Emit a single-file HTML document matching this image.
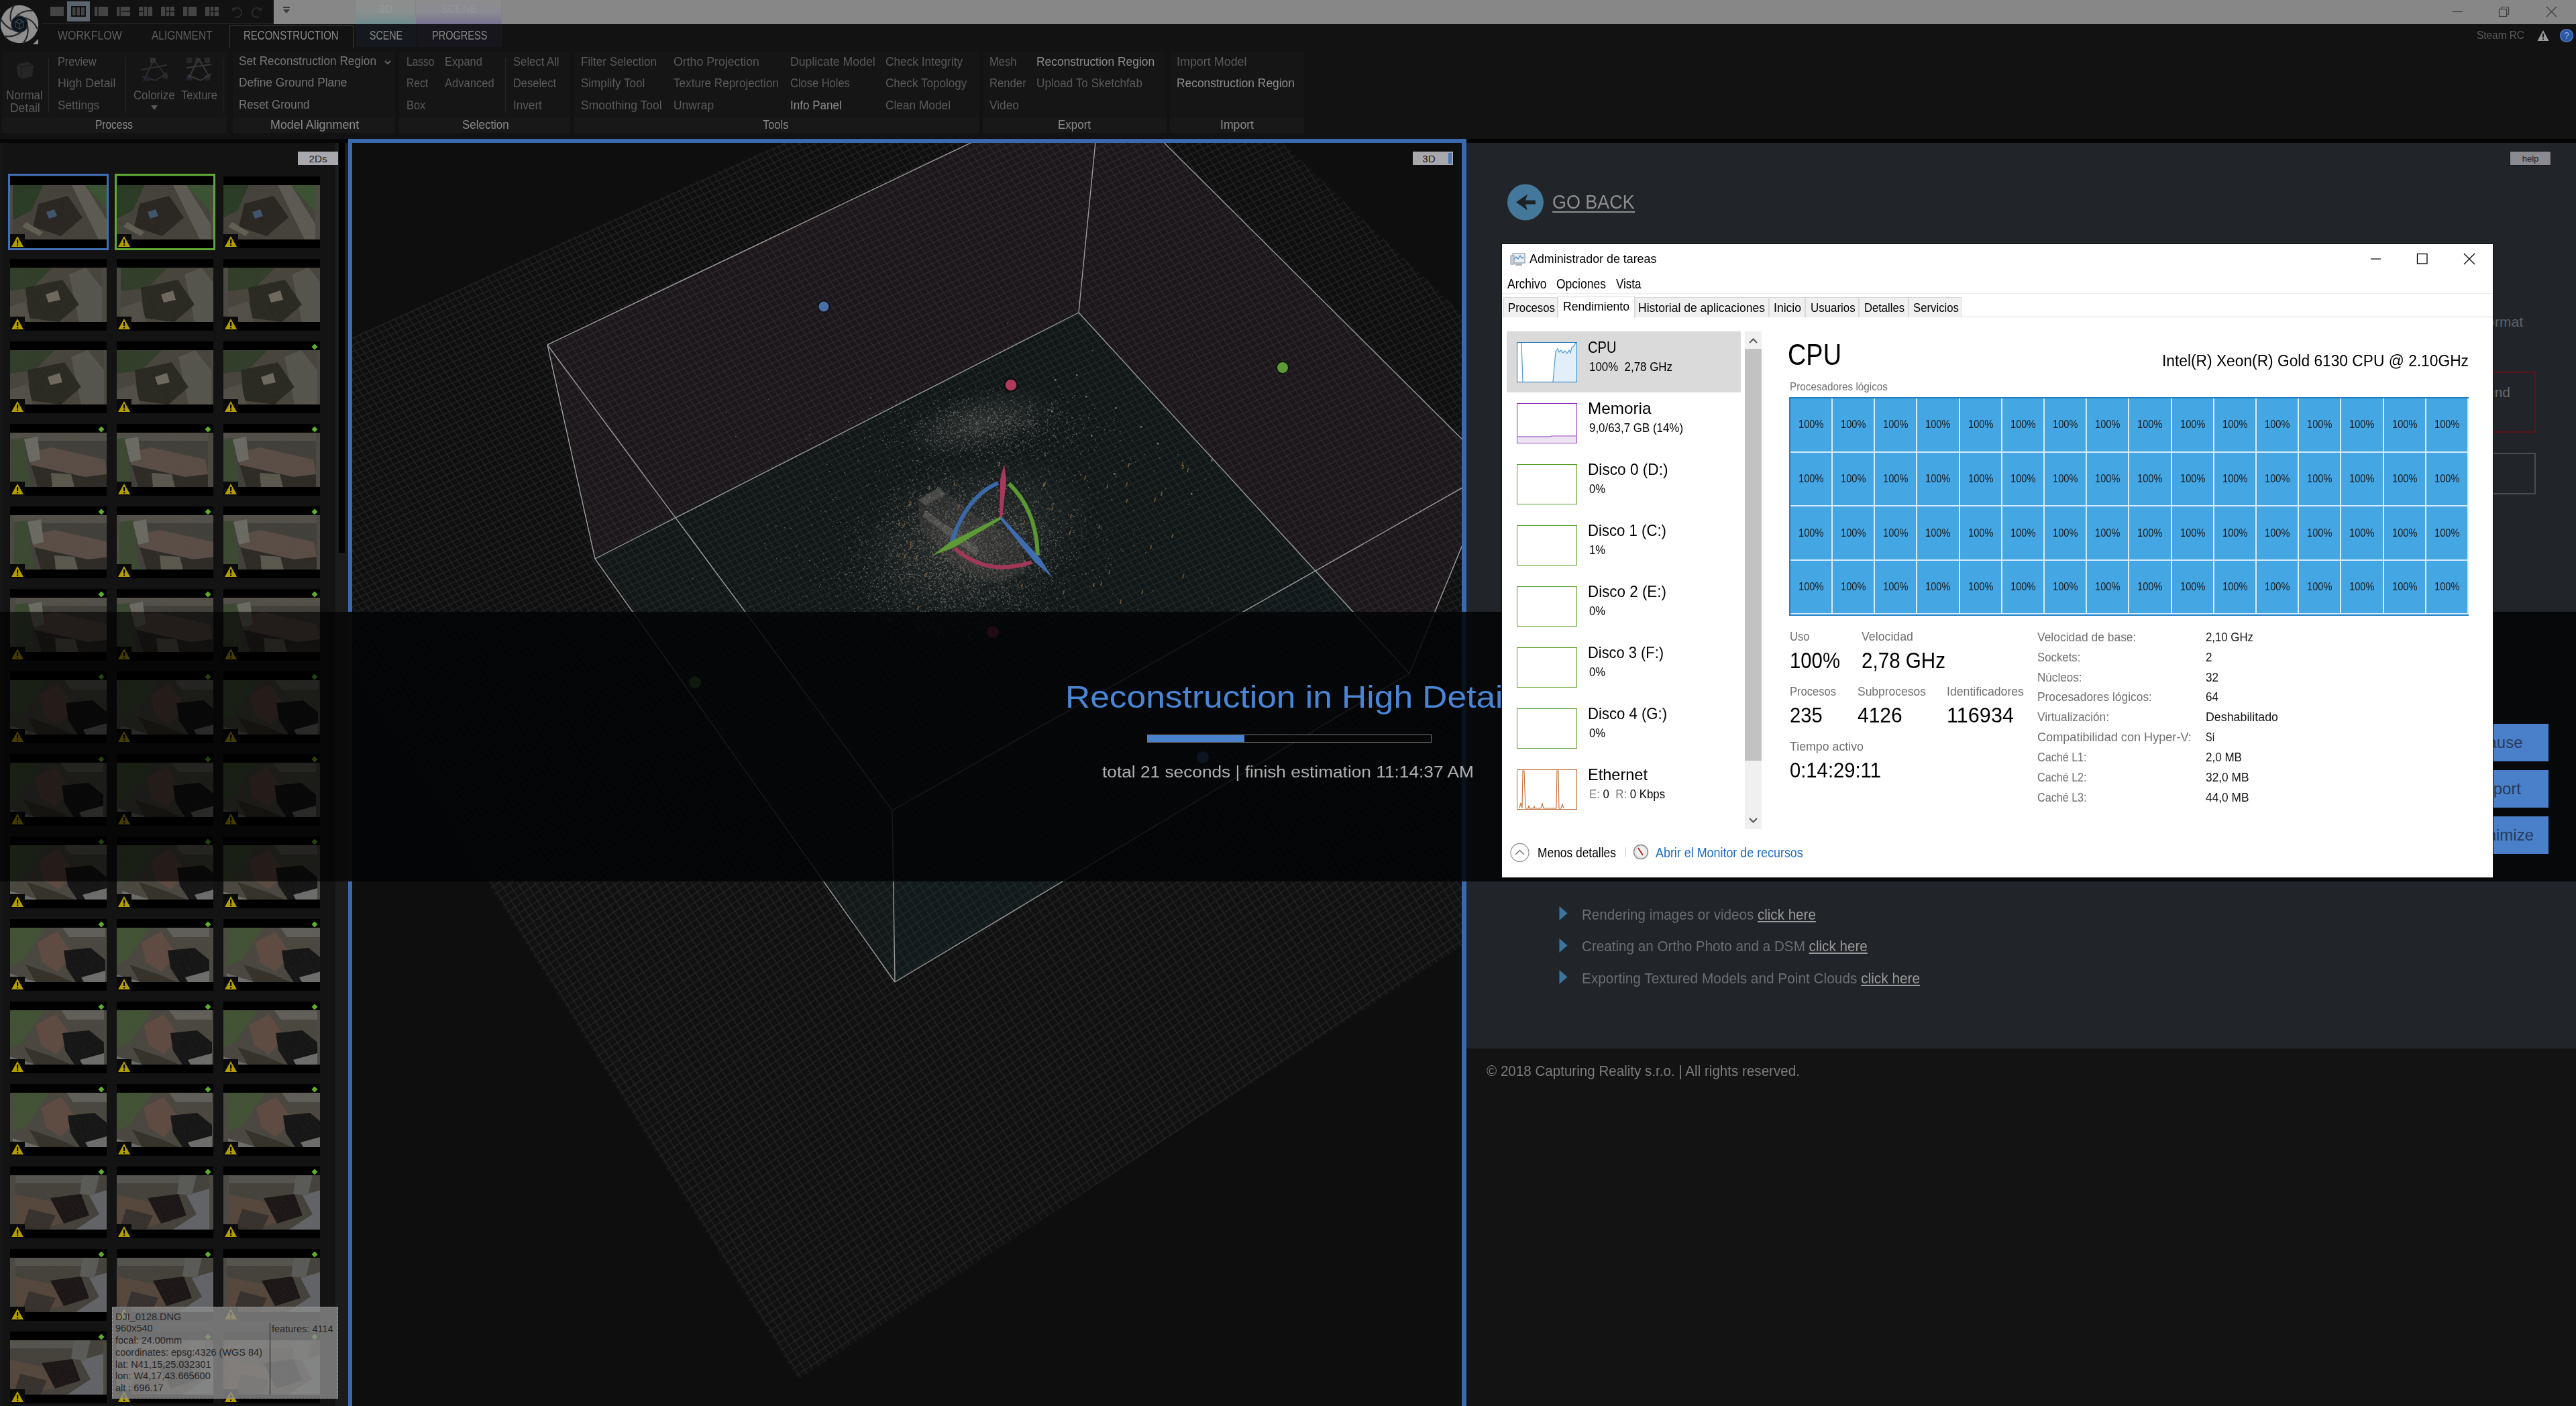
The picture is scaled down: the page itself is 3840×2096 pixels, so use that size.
<!DOCTYPE html><html><head><meta charset="utf-8"><style>
*{margin:0;padding:0;box-sizing:border-box}
html,body{width:3840px;height:2096px;overflow:hidden;background:#121212;font-family:'Liberation Sans',sans-serif}
.t{position:absolute;line-height:1;white-space:nowrap}
.r{position:absolute}
svg{position:absolute}
</style></head><body>
<div class="r" style="left:0px;top:0px;width:408px;height:36px;background:#121212;"></div>
<div class="r" style="left:408px;top:0px;width:3432px;height:36px;background:#878787;"></div>
<div class="r" style="left:530px;top:0px;width:90px;height:36px;background:linear-gradient(#8d8d8d 0%,#8a8f8f 50%,#6f8c8c 100%);border-left:1px solid #7d8a8a;border-right:1px solid #7d8a8a"></div>
<div class="r" style="left:620px;top:0px;width:128px;height:36px;background:linear-gradient(#8d8d8d 0%,#8a8a92 50%,#77738f 100%);border-right:1px solid #80808a"></div>
<div class="t" style="left:-425.0px;width:2000px;text-align:center;top:6.4px;font-size:15.94px;color:#939898;font-weight:bold">3D</div>
<div class="t" style="left:-316.0px;width:2000px;text-align:center;top:6.4px;font-size:15.94px;color:#91919a;font-weight:bold">SCENE</div>
<svg style="left:420px;left:420px;top:8px" width="16" height="16"><rect x="2" y="2" width="10" height="2" fill="#3a3a3a"/><path d="M2 6 L12 6 L7 12 Z" fill="#3a3a3a"/></svg>
<svg style="left:3640px;top:0" width="200" height="36"><line x1="16" y1="17.5" x2="31" y2="17.5" stroke="#3c3c3c" stroke-width="1.2"/><rect x="85.5" y="13.5" width="11" height="11" fill="none" stroke="#3c3c3c" stroke-width="1.2"/><path d="M88.5 13.5 V10.5 H99.5 V21.5 H96.5" fill="none" stroke="#3c3c3c" stroke-width="1.2"/><path d="M156 10 L171 25 M171 10 L156 25" stroke="#3c3c3c" stroke-width="1.2"/></svg>
<svg style="left:0;top:0" width="62" height="70" viewBox="0 0 62 70">
<circle cx="29" cy="36" r="28.2" fill="#8f8f8f"/>
<g fill="none" stroke="#2c2c2c" stroke-width="2.3" stroke-linecap="round">
<path d="M21 8 Q14 18 16 31"/><path d="M48 16 Q32 15 23 26"/><path d="M55 42 Q50 30 38 27"/>
<path d="M35 64 Q44 52 41 39"/><path d="M7 54 Q20 56 31 48"/><path d="M2 30 Q10 42 21 45"/>
</g>
<circle cx="29" cy="36" r="12" fill="#0e151b" stroke="#1e2a33" stroke-width="1.5"/>
<path d="M23 32 L29 29 L35 32 L35 40 L29 43 L23 40 Z M23 32 L29 35 L35 32 M29 35 L29 43" fill="none" stroke="#3a4f5c" stroke-width="1.2"/>
<path d="M49 66 L57 66 L57 58 Z" fill="#8f8f8f"/>
</svg>
<div class="r" style="left:100px;top:2px;width:34px;height:30px;background:#5c646e;"></div>
<svg style="left:74px;top:9px" width="22" height="16"><rect x="1" y="1" width="20" height="14" fill="#444444"/></svg>
<svg style="left:106px;top:9px" width="22" height="16"><rect x="1" y="1" width="20" height="14" fill="#444" stroke="#0a0a0a" stroke-width="1.8"/><line x1="7.5" y1="1" x2="7.5" y2="15" stroke="#0a0a0a" stroke-width="1.8"/><line x1="14" y1="1" x2="14" y2="15" stroke="#0a0a0a" stroke-width="1.8"/></svg>
<svg style="left:140px;top:9px" width="22" height="16"><rect x="1" y="1" width="20" height="14" fill="#444444"/><line x1="6" y1="1" x2="6" y2="15" stroke="#121212" stroke-width="1.5"/></svg>
<svg style="left:173px;top:9px" width="22" height="16"><rect x="1" y="1" width="20" height="14" fill="#444444"/><line x1="6" y1="1" x2="6" y2="15" stroke="#121212" stroke-width="1.5"/><line x1="8" y1="8" x2="21" y2="8" stroke="#121212" stroke-width="1.5"/></svg>
<svg style="left:206px;top:9px" width="22" height="16"><rect x="1" y="1" width="20" height="14" fill="#444444"/><line x1="8" y1="1" x2="8" y2="15" stroke="#121212" stroke-width="1.5"/><line x1="14" y1="1" x2="14" y2="15" stroke="#121212" stroke-width="1.5"/><line x1="1" y1="8" x2="8" y2="8" stroke="#121212" stroke-width="1.5"/></svg>
<svg style="left:239px;top:9px" width="22" height="16"><rect x="1" y="1" width="20" height="14" fill="#444444"/><line x1="8" y1="1" x2="8" y2="15" stroke="#121212" stroke-width="1.5"/><line x1="8" y1="8" x2="21" y2="8" stroke="#121212" stroke-width="1.5"/><line x1="14" y1="1" x2="14" y2="15" stroke="#121212" stroke-width="1.5"/></svg>
<svg style="left:272px;top:9px" width="22" height="16"><rect x="1" y="1" width="20" height="14" fill="#444444"/><line x1="8" y1="1" x2="8" y2="15" stroke="#121212" stroke-width="1.5"/></svg>
<svg style="left:305px;top:9px" width="22" height="16"><rect x="1" y="1" width="20" height="14" fill="#444444"/><line x1="8" y1="1" x2="8" y2="15" stroke="#121212" stroke-width="1.5"/><line x1="8" y1="8" x2="21" y2="8" stroke="#121212" stroke-width="1.5"/><line x1="14" y1="1" x2="14" y2="15" stroke="#121212" stroke-width="1.5"/></svg>
<svg style="left:342px;top:8px" width="60" height="20"><path d="M6 6 A7 7 0 1 1 8 17" fill="none" stroke="#2a2a2a" stroke-width="2"/><path d="M3 3 L5 9 L10 6Z" fill="#2a2a2a"/><path d="M46 6 A7 7 0 1 0 44 17" fill="none" stroke="#2a2a2a" stroke-width="2"/><path d="M49 3 L47 9 L42 6Z" fill="#2a2a2a"/></svg>
<div class="r" style="left:408px;top:36px;width:3432px;height:36px;background:#121212;"></div>
<div class="r" style="left:62px;top:35px;width:346px;height:1px;background:#2a2a2a;"></div>
<div class="t" style="left:86.0px;top:44.8px;font-size:17.83px;color:#5e5e5e;transform:scaleX(0.8958);transform-origin:0 0;">WORKFLOW</div>
<div class="t" style="left:226.0px;top:44.8px;font-size:17.83px;color:#5e5e5e;transform:scaleX(0.8712);transform-origin:0 0;">ALIGNMENT</div>
<div class="r" style="left:342px;top:38px;width:185px;height:34px;background:#121212;border:1px solid #3a3a3a;border-bottom:none"></div>
<div class="t" style="left:363.4px;top:44.8px;font-size:17.83px;color:#8a8a8a;transform:scaleX(0.8411);transform-origin:0 0;">RECONSTRUCTION</div>
<div class="r" style="left:530px;top:36px;width:90px;height:34px;background:#15181c;"></div>
<div class="r" style="left:621px;top:36px;width:127px;height:34px;background:#17161d;"></div>
<div class="t" style="left:551.0px;top:44.8px;font-size:17.83px;color:#8a8a8a;transform:scaleX(0.7978);transform-origin:0 0;">SCENE</div>
<div class="t" style="left:643.7px;top:44.8px;font-size:17.83px;color:#8a8a8a;transform:scaleX(0.8155);transform-origin:0 0;">PROGRESS</div>
<div class="t" style="left:3692.0px;top:43.7px;font-size:17.39px;color:#5a5a5a;transform:scaleX(0.8851);transform-origin:0 0;">Steam RC</div>
<svg style="left:3782px;top:44px" width="20" height="18"><path d="M9 1 L17.5 17 L0.5 17 Z" fill="#9a9a9a"/><rect x="8" y="6" width="2" height="6" fill="#121212"/><rect x="8" y="13.5" width="2" height="2" fill="#121212"/></svg>
<svg style="left:3815px;top:42px" width="22" height="22"><circle cx="11" cy="11" r="9.5" fill="#2a58a6" stroke="#5a82c0" stroke-width="1.2"/><text x="11" y="16" font-size="14" font-family="Liberation Sans" fill="#8fb0e0" text-anchor="middle">?</text></svg>
<div class="r" style="left:3px;top:77px;width:335px;height:121px;background:#151515;"></div>
<div class="r" style="left:3px;top:175px;width:335px;height:23px;background:#181818;"></div>
<div class="t" style="left:142.1px;top:177.4px;font-size:18.41px;color:#8a8a8a;transform:scaleX(0.8407);transform-origin:0 0;">Process</div>
<div class="r" style="left:347px;top:77px;width:242px;height:121px;background:#151515;"></div>
<div class="r" style="left:347px;top:175px;width:242px;height:23px;background:#181818;"></div>
<div class="t" style="left:402.9px;top:177.4px;font-size:18.41px;color:#8a8a8a;transform:scaleX(0.9722);transform-origin:0 0;">Model Alignment</div>
<div class="r" style="left:595px;top:77px;width:255px;height:121px;background:#151515;"></div>
<div class="r" style="left:595px;top:175px;width:255px;height:23px;background:#181818;"></div>
<div class="t" style="left:689.1px;top:177.4px;font-size:18.41px;color:#8a8a8a;transform:scaleX(0.9205);transform-origin:0 0;">Selection</div>
<div class="r" style="left:855px;top:77px;width:605px;height:121px;background:#151515;"></div>
<div class="r" style="left:855px;top:175px;width:605px;height:23px;background:#181818;"></div>
<div class="t" style="left:1136.8px;top:177.4px;font-size:18.41px;color:#8a8a8a;transform:scaleX(0.8937);transform-origin:0 0;">Tools</div>
<div class="r" style="left:1465px;top:77px;width:274px;height:121px;background:#151515;"></div>
<div class="r" style="left:1465px;top:175px;width:274px;height:23px;background:#181818;"></div>
<div class="t" style="left:1576.5px;top:177.4px;font-size:18.41px;color:#8a8a8a;transform:scaleX(0.9211);transform-origin:0 0;">Export</div>
<div class="r" style="left:1744px;top:77px;width:200px;height:121px;background:#151515;"></div>
<div class="r" style="left:1744px;top:175px;width:200px;height:23px;background:#181818;"></div>
<div class="t" style="left:1819.0px;top:177.4px;font-size:18.41px;color:#8a8a8a;transform:scaleX(0.9585);transform-origin:0 0;">Import</div>
<div class="r" style="left:0px;top:198px;width:3840px;height:9px;background:#121212;"></div>
<div class="r" style="left:72px;top:86px;width:1px;height:82px;background:#262626;"></div>
<div class="r" style="left:187px;top:86px;width:1px;height:82px;background:#262626;"></div>
<div class="r" style="left:332px;top:86px;width:1px;height:82px;background:#262626;"></div>
<div class="r" style="left:753px;top:86px;width:1px;height:82px;background:#262626;"></div>
<div class="t" style="left:86.0px;top:82.6px;font-size:18.12px;color:#5a5a5a;transform:scaleX(0.8970);transform-origin:0 0;">Preview</div>
<div class="t" style="left:86.0px;top:114.6px;font-size:18.12px;color:#5a5a5a;transform:scaleX(0.9762);transform-origin:0 0;">High Detail</div>
<div class="t" style="left:86.0px;top:147.6px;font-size:18.12px;color:#5a5a5a;transform:scaleX(0.9502);transform-origin:0 0;">Settings</div>
<div class="t" style="left:9.3px;top:132.6px;font-size:18.12px;color:#5a5a5a;transform:scaleX(0.9386);transform-origin:0 0;">Normal</div>
<div class="t" style="left:14.9px;top:151.6px;font-size:18.12px;color:#5a5a5a;transform:scaleX(0.9651);transform-origin:0 0;">Detail</div>
<svg style="left:20px;top:88px" width="34" height="34"><path d="M5 8 L22 4 L30 10 L28 26 L12 30 L6 24 Z" fill="#262626"/><path d="M5 8 L12 12 L28 9 M12 12 L12 30" stroke="#1a1a1a" stroke-width="1.5" fill="none"/></svg>
<div class="t" style="left:198.7px;top:132.6px;font-size:18.12px;color:#5a5a5a;transform:scaleX(0.9255);transform-origin:0 0;">Colorize</div>
<div class="t" style="left:269.5px;top:132.6px;font-size:18.12px;color:#5a5a5a;transform:scaleX(0.9090);transform-origin:0 0;">Texture</div>
<svg style="left:206px;top:84px" width="50" height="42"><path d="M23 5 L8 37 M23 5 L42 30 M4 20 L43 13 M6 30 L26 36 L43 24" stroke="#2e2e2e" stroke-width="2" fill="none"/><rect x="18" y="2" width="8" height="8" fill="#303030"/><rect x="37" y="26" width="7" height="7" fill="#2a2a2a"/><rect x="11" y="30" width="7" height="7" fill="#1e2230"/></svg>
<svg style="left:275px;top:84px" width="50" height="42"><rect x="3" y="2" width="8" height="8" fill="#262626"/><rect x="16" y="2" width="8" height="8" fill="#26262a"/><rect x="30" y="2" width="8" height="8" fill="#282a26"/><rect x="3" y="28" width="8" height="8" fill="#24202e"/><rect x="30" y="28" width="8" height="8" fill="#202430"/><path d="M21 3 L6 33 M21 3 L38 32 M3 17 L40 12 M5 28 L24 36 L40 26" stroke="#383838" stroke-width="2" fill="none"/></svg>
<svg style="left:224px;top:156px" width="12" height="10"><path d="M1 1 L11 1 L6 8 Z" fill="#5a5a5a"/></svg>
<div class="t" style="left:356.0px;top:82.4px;font-size:18.41px;color:#767676;transform:scaleX(0.9363);transform-origin:0 0;">Set Reconstruction Region</div>
<svg style="left:572px;top:88px" width="12" height="10"><path d="M2 3 L6 7 L10 3" stroke="#6a6a6a" stroke-width="1.8" fill="none"/></svg>
<div class="t" style="left:356.0px;top:114.4px;font-size:18.41px;color:#767676;transform:scaleX(0.9389);transform-origin:0 0;">Define Ground Plane</div>
<div class="t" style="left:356.0px;top:147.4px;font-size:18.41px;color:#767676;transform:scaleX(0.9207);transform-origin:0 0;">Reset Ground</div>
<div class="t" style="left:606.0px;top:82.6px;font-size:18.12px;color:#5a5a5a;transform:scaleX(0.8564);transform-origin:0 0;">Lasso</div>
<div class="t" style="left:663.0px;top:82.6px;font-size:18.12px;color:#5a5a5a;transform:scaleX(0.9114);transform-origin:0 0;">Expand</div>
<div class="t" style="left:606.0px;top:114.6px;font-size:18.12px;color:#5a5a5a;transform:scaleX(0.8591);transform-origin:0 0;">Rect</div>
<div class="t" style="left:663.0px;top:114.6px;font-size:18.12px;color:#5a5a5a;transform:scaleX(0.9159);transform-origin:0 0;">Advanced</div>
<div class="t" style="left:606.0px;top:147.6px;font-size:18.12px;color:#5a5a5a;transform:scaleX(0.9065);transform-origin:0 0;">Box</div>
<div class="t" style="left:765.0px;top:82.6px;font-size:18.12px;color:#5a5a5a;transform:scaleX(0.9206);transform-origin:0 0;">Select All</div>
<div class="t" style="left:765.0px;top:114.6px;font-size:18.12px;color:#5a5a5a;transform:scaleX(0.9080);transform-origin:0 0;">Deselect</div>
<div class="t" style="left:765.0px;top:147.6px;font-size:18.12px;color:#5a5a5a;transform:scaleX(0.9468);transform-origin:0 0;">Invert</div>
<div class="t" style="left:866.0px;top:82.6px;font-size:18.12px;color:#5a5a5a;transform:scaleX(0.9431);transform-origin:0 0;">Filter Selection</div>
<div class="t" style="left:866.0px;top:114.6px;font-size:18.12px;color:#5a5a5a;transform:scaleX(0.9393);transform-origin:0 0;">Simplify Tool</div>
<div class="t" style="left:866.0px;top:147.6px;font-size:18.12px;color:#5a5a5a;transform:scaleX(0.9699);transform-origin:0 0;">Smoothing Tool</div>
<div class="t" style="left:1004.0px;top:82.6px;font-size:18.12px;color:#5a5a5a;transform:scaleX(0.9778);transform-origin:0 0;">Ortho Projection</div>
<div class="t" style="left:1004.0px;top:114.6px;font-size:18.12px;color:#5a5a5a;transform:scaleX(0.9449);transform-origin:0 0;">Texture Reprojection</div>
<div class="t" style="left:1004.0px;top:147.6px;font-size:18.12px;color:#5a5a5a;transform:scaleX(0.9643);transform-origin:0 0;">Unwrap</div>
<div class="t" style="left:1178.0px;top:82.6px;font-size:18.12px;color:#5a5a5a;transform:scaleX(0.9761);transform-origin:0 0;">Duplicate Model</div>
<div class="t" style="left:1178.0px;top:114.6px;font-size:18.12px;color:#5a5a5a;transform:scaleX(0.9092);transform-origin:0 0;">Close Holes</div>
<div class="t" style="left:1178.0px;top:147.6px;font-size:18.12px;color:#8c8c8c;transform:scaleX(0.9426);transform-origin:0 0;">Info Panel</div>
<div class="t" style="left:1320.0px;top:82.6px;font-size:18.12px;color:#5a5a5a;transform:scaleX(0.9543);transform-origin:0 0;">Check Integrity</div>
<div class="t" style="left:1320.0px;top:114.6px;font-size:18.12px;color:#5a5a5a;transform:scaleX(0.9434);transform-origin:0 0;">Check Topology</div>
<div class="t" style="left:1320.0px;top:147.6px;font-size:18.12px;color:#5a5a5a;transform:scaleX(0.9537);transform-origin:0 0;">Clean Model</div>
<div class="t" style="left:1475.0px;top:82.6px;font-size:18.12px;color:#5a5a5a;transform:scaleX(0.9165);transform-origin:0 0;">Mesh</div>
<div class="t" style="left:1475.0px;top:114.6px;font-size:18.12px;color:#5a5a5a;transform:scaleX(0.9206);transform-origin:0 0;">Render</div>
<div class="t" style="left:1475.0px;top:147.6px;font-size:18.12px;color:#5a5a5a;transform:scaleX(0.9563);transform-origin:0 0;">Video</div>
<div class="t" style="left:1545.0px;top:82.6px;font-size:18.12px;color:#8c8c8c;transform:scaleX(0.9619);transform-origin:0 0;">Reconstruction Region</div>
<div class="t" style="left:1545.0px;top:114.6px;font-size:18.12px;color:#5a5a5a;transform:scaleX(0.9470);transform-origin:0 0;">Upload To Sketchfab</div>
<div class="t" style="left:1753.7px;top:82.6px;font-size:18.12px;color:#5a5a5a;transform:scaleX(0.9894);transform-origin:0 0;">Import Model</div>
<div class="t" style="left:1753.7px;top:114.6px;font-size:18.12px;color:#8c8c8c;transform:scaleX(0.9603);transform-origin:0 0;">Reconstruction Region</div>
<div class="r" style="left:0px;top:207px;width:3840px;height:6px;background:#060606;"></div>
<div class="r" style="left:0px;top:213px;width:519px;height:1883px;background:#131313;"></div>
<svg width="0" height="0" style="position:absolute"><defs><filter id="tn" x="0" y="0" width="1" height="1"><feTurbulence type="fractalNoise" baseFrequency="0.45" numOctaves="2" seed="3" result="n"/><feColorMatrix in="n" type="matrix" values="0 0 0 0 0.5  0 0 0 0 0.5  0 0 0 0 0.5  0 0 0 0.55 0" result="na"/><feComposite in="na" in2="SourceGraphic" operator="in" result="nb"/><feBlend in="SourceGraphic" in2="nb" mode="overlay"/></filter></defs></svg>
<div class="r" style="left:0px;top:213px;width:5px;height:1883px;background:#161616;"></div>
<div class="r" style="left:500px;top:213px;width:19px;height:1883px;background:#1c1c1c;"></div>
<div class="r" style="left:505px;top:213px;width:9px;height:611px;background:#020202;"></div>
<div class="r" style="left:444px;top:226px;width:60px;height:20px;background:#a9a9ad;"></div>
<div class="t" style="left:-526.0px;width:2000px;text-align:center;top:229.1px;font-size:15.22px;color:#1a1a1a;">2Ds</div>
<div class="r" style="left:15px;top:263px;width:144px;height:107px;background:#000;"></div>
<svg style="left:15px;top:276px" width="144" height="81" viewBox="0 0 144 81"><g transform="translate(4 0)" filter="url(#tn)"><rect x="-10" width="164" height="81" fill="#4c4a42"/><rect width="144" height="81" fill="#45433b"/><path d="M0 0 H45 L28 38 L0 52 Z" fill="#2c3a26"/><path d="M88 0 H108 L144 58 V81 H128 Z" fill="#5c5a52"/><path d="M108 0 H144 V40 Z" fill="#3a5230"/><path d="M38 28 L82 16 L104 48 L72 76 L30 62 Z" fill="#25221e" opacity="0.85"/><path d="M50 40 L62 36 L66 46 L54 50 Z" fill="#4a6a8a" opacity="0.7"/><path d="M20 55 L45 70 L40 76 L14 62 Z" fill="#625e55"/></g></svg>
<svg style="left:15px;top:349px" width="22" height="21"><rect width="22" height="21" fill="#0a0a0a"/><path d="M11 3 L20 19 L2 19 Z" fill="#b39d00"/><rect x="10" y="8" width="2.2" height="6" fill="#000"/><rect x="10" y="15.5" width="2.2" height="2" fill="#000"/></svg>
<div class="r" style="left:174px;top:263px;width:144px;height:107px;background:#000;"></div>
<svg style="left:174px;top:276px" width="144" height="81" viewBox="0 0 144 81"><g transform="translate(-4 0)" filter="url(#tn)"><rect x="-10" width="164" height="81" fill="#4c4a42"/><rect width="144" height="81" fill="#45433b"/><path d="M0 0 H45 L28 38 L0 52 Z" fill="#2c3a26"/><path d="M88 0 H108 L144 58 V81 H128 Z" fill="#5c5a52"/><path d="M108 0 H144 V40 Z" fill="#3a5230"/><path d="M38 28 L82 16 L104 48 L72 76 L30 62 Z" fill="#25221e" opacity="0.85"/><path d="M50 40 L62 36 L66 46 L54 50 Z" fill="#4a6a8a" opacity="0.7"/><path d="M20 55 L45 70 L40 76 L14 62 Z" fill="#625e55"/></g></svg>
<svg style="left:174px;top:349px" width="22" height="21"><rect width="22" height="21" fill="#0a0a0a"/><path d="M11 3 L20 19 L2 19 Z" fill="#b39d00"/><rect x="10" y="8" width="2.2" height="6" fill="#000"/><rect x="10" y="15.5" width="2.2" height="2" fill="#000"/></svg>
<div class="r" style="left:333px;top:263px;width:144px;height:107px;background:#000;"></div>
<svg style="left:333px;top:276px" width="144" height="81" viewBox="0 0 144 81"><g transform="translate(-7 0)" filter="url(#tn)"><rect x="-10" width="164" height="81" fill="#4c4a42"/><rect width="144" height="81" fill="#45433b"/><path d="M0 0 H45 L28 38 L0 52 Z" fill="#2c3a26"/><path d="M88 0 H108 L144 58 V81 H128 Z" fill="#5c5a52"/><path d="M108 0 H144 V40 Z" fill="#3a5230"/><path d="M38 28 L82 16 L104 48 L72 76 L30 62 Z" fill="#25221e" opacity="0.85"/><path d="M50 40 L62 36 L66 46 L54 50 Z" fill="#4a6a8a" opacity="0.7"/><path d="M20 55 L45 70 L40 76 L14 62 Z" fill="#625e55"/></g></svg>
<svg style="left:333px;top:349px" width="22" height="21"><rect width="22" height="21" fill="#0a0a0a"/><path d="M11 3 L20 19 L2 19 Z" fill="#b39d00"/><rect x="10" y="8" width="2.2" height="6" fill="#000"/><rect x="10" y="15.5" width="2.2" height="2" fill="#000"/></svg>
<div class="r" style="left:15px;top:386px;width:144px;height:107px;background:#000;"></div>
<svg style="left:15px;top:399px" width="144" height="81" viewBox="0 0 144 81"><g transform="translate(-7 0)" filter="url(#tn)"><rect x="-10" width="164" height="81" fill="#4c4a42"/><rect width="144" height="81" fill="#46443c"/><path d="M0 0 H70 L40 30 L0 35 Z" fill="#303d2a"/><path d="M95 10 L120 0 L144 30 V81 H110 Z" fill="#57554d"/><path d="M30 30 L85 18 L110 55 L80 81 L35 75 Z" fill="#28241f" opacity="0.85"/><path d="M60 40 L78 34 L82 48 L64 52 Z" fill="#6e685e"/><path d="M0 60 L30 50 L38 81 H0 Z" fill="#524f46"/></g></svg>
<svg style="left:15px;top:472px" width="22" height="21"><rect width="22" height="21" fill="#0a0a0a"/><path d="M11 3 L20 19 L2 19 Z" fill="#b39d00"/><rect x="10" y="8" width="2.2" height="6" fill="#000"/><rect x="10" y="15.5" width="2.2" height="2" fill="#000"/></svg>
<div class="r" style="left:174px;top:386px;width:144px;height:107px;background:#000;"></div>
<svg style="left:174px;top:399px" width="144" height="81" viewBox="0 0 144 81"><g transform="translate(6 0)" filter="url(#tn)"><rect x="-10" width="164" height="81" fill="#4c4a42"/><rect width="144" height="81" fill="#46443c"/><path d="M0 0 H70 L40 30 L0 35 Z" fill="#303d2a"/><path d="M95 10 L120 0 L144 30 V81 H110 Z" fill="#57554d"/><path d="M30 30 L85 18 L110 55 L80 81 L35 75 Z" fill="#28241f" opacity="0.85"/><path d="M60 40 L78 34 L82 48 L64 52 Z" fill="#6e685e"/><path d="M0 60 L30 50 L38 81 H0 Z" fill="#524f46"/></g></svg>
<svg style="left:174px;top:472px" width="22" height="21"><rect width="22" height="21" fill="#0a0a0a"/><path d="M11 3 L20 19 L2 19 Z" fill="#b39d00"/><rect x="10" y="8" width="2.2" height="6" fill="#000"/><rect x="10" y="15.5" width="2.2" height="2" fill="#000"/></svg>
<div class="r" style="left:333px;top:386px;width:144px;height:107px;background:#000;"></div>
<svg style="left:333px;top:399px" width="144" height="81" viewBox="0 0 144 81"><g transform="translate(7 0)" filter="url(#tn)"><rect x="-10" width="164" height="81" fill="#4c4a42"/><rect width="144" height="81" fill="#46443c"/><path d="M0 0 H70 L40 30 L0 35 Z" fill="#303d2a"/><path d="M95 10 L120 0 L144 30 V81 H110 Z" fill="#57554d"/><path d="M30 30 L85 18 L110 55 L80 81 L35 75 Z" fill="#28241f" opacity="0.85"/><path d="M60 40 L78 34 L82 48 L64 52 Z" fill="#6e685e"/><path d="M0 60 L30 50 L38 81 H0 Z" fill="#524f46"/></g></svg>
<svg style="left:333px;top:472px" width="22" height="21"><rect width="22" height="21" fill="#0a0a0a"/><path d="M11 3 L20 19 L2 19 Z" fill="#b39d00"/><rect x="10" y="8" width="2.2" height="6" fill="#000"/><rect x="10" y="15.5" width="2.2" height="2" fill="#000"/></svg>
<div class="r" style="left:15px;top:509px;width:144px;height:107px;background:#000;"></div>
<svg style="left:15px;top:522px" width="144" height="81" viewBox="0 0 144 81"><g transform="translate(-4 0)" filter="url(#tn)"><rect x="-10" width="164" height="81" fill="#4c4a42"/><rect width="144" height="81" fill="#46443c"/><path d="M0 0 H70 L40 30 L0 35 Z" fill="#303d2a"/><path d="M95 10 L120 0 L144 30 V81 H110 Z" fill="#57554d"/><path d="M30 30 L85 18 L110 55 L80 81 L35 75 Z" fill="#28241f" opacity="0.85"/><path d="M60 40 L78 34 L82 48 L64 52 Z" fill="#6e685e"/><path d="M0 60 L30 50 L38 81 H0 Z" fill="#524f46"/></g></svg>
<svg style="left:15px;top:595px" width="22" height="21"><rect width="22" height="21" fill="#0a0a0a"/><path d="M11 3 L20 19 L2 19 Z" fill="#b39d00"/><rect x="10" y="8" width="2.2" height="6" fill="#000"/><rect x="10" y="15.5" width="2.2" height="2" fill="#000"/></svg>
<div class="r" style="left:174px;top:509px;width:144px;height:107px;background:#000;"></div>
<svg style="left:174px;top:522px" width="144" height="81" viewBox="0 0 144 81"><g transform="translate(-3 0)" filter="url(#tn)"><rect x="-10" width="164" height="81" fill="#4c4a42"/><rect width="144" height="81" fill="#46443c"/><path d="M0 0 H70 L40 30 L0 35 Z" fill="#303d2a"/><path d="M95 10 L120 0 L144 30 V81 H110 Z" fill="#57554d"/><path d="M30 30 L85 18 L110 55 L80 81 L35 75 Z" fill="#28241f" opacity="0.85"/><path d="M60 40 L78 34 L82 48 L64 52 Z" fill="#6e685e"/><path d="M0 60 L30 50 L38 81 H0 Z" fill="#524f46"/></g></svg>
<svg style="left:174px;top:595px" width="22" height="21"><rect width="22" height="21" fill="#0a0a0a"/><path d="M11 3 L20 19 L2 19 Z" fill="#b39d00"/><rect x="10" y="8" width="2.2" height="6" fill="#000"/><rect x="10" y="15.5" width="2.2" height="2" fill="#000"/></svg>
<div class="r" style="left:333px;top:509px;width:144px;height:107px;background:#000;"></div>
<svg style="left:333px;top:522px" width="144" height="81" viewBox="0 0 144 81"><g transform="translate(-4 0)" filter="url(#tn)"><rect x="-10" width="164" height="81" fill="#4c4a42"/><rect width="144" height="81" fill="#46443c"/><path d="M0 0 H70 L40 30 L0 35 Z" fill="#303d2a"/><path d="M95 10 L120 0 L144 30 V81 H110 Z" fill="#57554d"/><path d="M30 30 L85 18 L110 55 L80 81 L35 75 Z" fill="#28241f" opacity="0.85"/><path d="M60 40 L78 34 L82 48 L64 52 Z" fill="#6e685e"/><path d="M0 60 L30 50 L38 81 H0 Z" fill="#524f46"/></g></svg>
<svg style="left:333px;top:595px" width="22" height="21"><rect width="22" height="21" fill="#0a0a0a"/><path d="M11 3 L20 19 L2 19 Z" fill="#b39d00"/><rect x="10" y="8" width="2.2" height="6" fill="#000"/><rect x="10" y="15.5" width="2.2" height="2" fill="#000"/></svg>
<svg style="left:464px;top:512px" width="10" height="10"><path d="M5 0.5 L9.5 5 L5 9.5 L0.5 5 Z" fill="#5fae2a"/></svg>
<div class="r" style="left:15px;top:632px;width:144px;height:107px;background:#000;"></div>
<svg style="left:15px;top:645px" width="144" height="81" viewBox="0 0 144 81"><g transform="translate(1 0)" filter="url(#tn)"><rect x="-10" width="164" height="81" fill="#4c4a42"/><rect width="144" height="81" fill="#43413a"/><path d="M0 0 H144 V12 H0 Z" fill="#52504a"/><path d="M0 10 L20 8 L30 81 H0 Z" fill="#3c4a32"/><path d="M25 30 L60 22 L140 40 L144 62 L110 66 L30 48 Z" fill="#5a4e44"/><path d="M30 48 L110 66 L144 62 V81 H40 Z" fill="#2e2c28"/><path d="M20 10 L40 6 L44 40 L28 44 Z" fill="#6a6a64"/><path d="M60 60 L90 62 L95 81 H62 Z" fill="#5a584e"/></g></svg>
<svg style="left:15px;top:718px" width="22" height="21"><rect width="22" height="21" fill="#0a0a0a"/><path d="M11 3 L20 19 L2 19 Z" fill="#b39d00"/><rect x="10" y="8" width="2.2" height="6" fill="#000"/><rect x="10" y="15.5" width="2.2" height="2" fill="#000"/></svg>
<svg style="left:146px;top:635px" width="10" height="10"><path d="M5 0.5 L9.5 5 L5 9.5 L0.5 5 Z" fill="#5fae2a"/></svg>
<div class="r" style="left:174px;top:632px;width:144px;height:107px;background:#000;"></div>
<svg style="left:174px;top:645px" width="144" height="81" viewBox="0 0 144 81"><g transform="translate(-8 0)" filter="url(#tn)"><rect x="-10" width="164" height="81" fill="#4c4a42"/><rect width="144" height="81" fill="#43413a"/><path d="M0 0 H144 V12 H0 Z" fill="#52504a"/><path d="M0 10 L20 8 L30 81 H0 Z" fill="#3c4a32"/><path d="M25 30 L60 22 L140 40 L144 62 L110 66 L30 48 Z" fill="#5a4e44"/><path d="M30 48 L110 66 L144 62 V81 H40 Z" fill="#2e2c28"/><path d="M20 10 L40 6 L44 40 L28 44 Z" fill="#6a6a64"/><path d="M60 60 L90 62 L95 81 H62 Z" fill="#5a584e"/></g></svg>
<svg style="left:174px;top:718px" width="22" height="21"><rect width="22" height="21" fill="#0a0a0a"/><path d="M11 3 L20 19 L2 19 Z" fill="#b39d00"/><rect x="10" y="8" width="2.2" height="6" fill="#000"/><rect x="10" y="15.5" width="2.2" height="2" fill="#000"/></svg>
<svg style="left:305px;top:635px" width="10" height="10"><path d="M5 0.5 L9.5 5 L5 9.5 L0.5 5 Z" fill="#5fae2a"/></svg>
<div class="r" style="left:333px;top:632px;width:144px;height:107px;background:#000;"></div>
<svg style="left:333px;top:645px" width="144" height="81" viewBox="0 0 144 81"><g transform="translate(-6 0)" filter="url(#tn)"><rect x="-10" width="164" height="81" fill="#4c4a42"/><rect width="144" height="81" fill="#43413a"/><path d="M0 0 H144 V12 H0 Z" fill="#52504a"/><path d="M0 10 L20 8 L30 81 H0 Z" fill="#3c4a32"/><path d="M25 30 L60 22 L140 40 L144 62 L110 66 L30 48 Z" fill="#5a4e44"/><path d="M30 48 L110 66 L144 62 V81 H40 Z" fill="#2e2c28"/><path d="M20 10 L40 6 L44 40 L28 44 Z" fill="#6a6a64"/><path d="M60 60 L90 62 L95 81 H62 Z" fill="#5a584e"/></g></svg>
<svg style="left:333px;top:718px" width="22" height="21"><rect width="22" height="21" fill="#0a0a0a"/><path d="M11 3 L20 19 L2 19 Z" fill="#b39d00"/><rect x="10" y="8" width="2.2" height="6" fill="#000"/><rect x="10" y="15.5" width="2.2" height="2" fill="#000"/></svg>
<svg style="left:464px;top:635px" width="10" height="10"><path d="M5 0.5 L9.5 5 L5 9.5 L0.5 5 Z" fill="#5fae2a"/></svg>
<div class="r" style="left:15px;top:755px;width:144px;height:107px;background:#000;"></div>
<svg style="left:15px;top:768px" width="144" height="81" viewBox="0 0 144 81"><g transform="translate(6 0)" filter="url(#tn)"><rect x="-10" width="164" height="81" fill="#4c4a42"/><rect width="144" height="81" fill="#43413a"/><path d="M0 0 H144 V12 H0 Z" fill="#52504a"/><path d="M0 10 L20 8 L30 81 H0 Z" fill="#3c4a32"/><path d="M25 30 L60 22 L140 40 L144 62 L110 66 L30 48 Z" fill="#5a4e44"/><path d="M30 48 L110 66 L144 62 V81 H40 Z" fill="#2e2c28"/><path d="M20 10 L40 6 L44 40 L28 44 Z" fill="#6a6a64"/><path d="M60 60 L90 62 L95 81 H62 Z" fill="#5a584e"/></g></svg>
<svg style="left:15px;top:841px" width="22" height="21"><rect width="22" height="21" fill="#0a0a0a"/><path d="M11 3 L20 19 L2 19 Z" fill="#b39d00"/><rect x="10" y="8" width="2.2" height="6" fill="#000"/><rect x="10" y="15.5" width="2.2" height="2" fill="#000"/></svg>
<svg style="left:146px;top:758px" width="10" height="10"><path d="M5 0.5 L9.5 5 L5 9.5 L0.5 5 Z" fill="#5fae2a"/></svg>
<div class="r" style="left:174px;top:755px;width:144px;height:107px;background:#000;"></div>
<svg style="left:174px;top:768px" width="144" height="81" viewBox="0 0 144 81"><g transform="translate(4 0)" filter="url(#tn)"><rect x="-10" width="164" height="81" fill="#4c4a42"/><rect width="144" height="81" fill="#43413a"/><path d="M0 0 H144 V12 H0 Z" fill="#52504a"/><path d="M0 10 L20 8 L30 81 H0 Z" fill="#3c4a32"/><path d="M25 30 L60 22 L140 40 L144 62 L110 66 L30 48 Z" fill="#5a4e44"/><path d="M30 48 L110 66 L144 62 V81 H40 Z" fill="#2e2c28"/><path d="M20 10 L40 6 L44 40 L28 44 Z" fill="#6a6a64"/><path d="M60 60 L90 62 L95 81 H62 Z" fill="#5a584e"/></g></svg>
<svg style="left:174px;top:841px" width="22" height="21"><rect width="22" height="21" fill="#0a0a0a"/><path d="M11 3 L20 19 L2 19 Z" fill="#b39d00"/><rect x="10" y="8" width="2.2" height="6" fill="#000"/><rect x="10" y="15.5" width="2.2" height="2" fill="#000"/></svg>
<svg style="left:305px;top:758px" width="10" height="10"><path d="M5 0.5 L9.5 5 L5 9.5 L0.5 5 Z" fill="#5fae2a"/></svg>
<div class="r" style="left:333px;top:755px;width:144px;height:107px;background:#000;"></div>
<svg style="left:333px;top:768px" width="144" height="81" viewBox="0 0 144 81"><g transform="translate(-5 0)" filter="url(#tn)"><rect x="-10" width="164" height="81" fill="#4c4a42"/><rect width="144" height="81" fill="#43413a"/><path d="M0 0 H144 V12 H0 Z" fill="#52504a"/><path d="M0 10 L20 8 L30 81 H0 Z" fill="#3c4a32"/><path d="M25 30 L60 22 L140 40 L144 62 L110 66 L30 48 Z" fill="#5a4e44"/><path d="M30 48 L110 66 L144 62 V81 H40 Z" fill="#2e2c28"/><path d="M20 10 L40 6 L44 40 L28 44 Z" fill="#6a6a64"/><path d="M60 60 L90 62 L95 81 H62 Z" fill="#5a584e"/></g></svg>
<svg style="left:333px;top:841px" width="22" height="21"><rect width="22" height="21" fill="#0a0a0a"/><path d="M11 3 L20 19 L2 19 Z" fill="#b39d00"/><rect x="10" y="8" width="2.2" height="6" fill="#000"/><rect x="10" y="15.5" width="2.2" height="2" fill="#000"/></svg>
<svg style="left:464px;top:758px" width="10" height="10"><path d="M5 0.5 L9.5 5 L5 9.5 L0.5 5 Z" fill="#5fae2a"/></svg>
<div class="r" style="left:15px;top:878px;width:144px;height:107px;background:#000;"></div>
<svg style="left:15px;top:891px" width="144" height="81" viewBox="0 0 144 81"><g transform="translate(7 0)" filter="url(#tn)"><rect x="-10" width="164" height="81" fill="#4c4a42"/><rect width="144" height="81" fill="#43413a"/><path d="M0 0 H144 V12 H0 Z" fill="#52504a"/><path d="M0 10 L20 8 L30 81 H0 Z" fill="#3c4a32"/><path d="M25 30 L60 22 L140 40 L144 62 L110 66 L30 48 Z" fill="#5a4e44"/><path d="M30 48 L110 66 L144 62 V81 H40 Z" fill="#2e2c28"/><path d="M20 10 L40 6 L44 40 L28 44 Z" fill="#6a6a64"/><path d="M60 60 L90 62 L95 81 H62 Z" fill="#5a584e"/></g></svg>
<svg style="left:15px;top:964px" width="22" height="21"><rect width="22" height="21" fill="#0a0a0a"/><path d="M11 3 L20 19 L2 19 Z" fill="#b39d00"/><rect x="10" y="8" width="2.2" height="6" fill="#000"/><rect x="10" y="15.5" width="2.2" height="2" fill="#000"/></svg>
<svg style="left:146px;top:881px" width="10" height="10"><path d="M5 0.5 L9.5 5 L5 9.5 L0.5 5 Z" fill="#5fae2a"/></svg>
<div class="r" style="left:174px;top:878px;width:144px;height:107px;background:#000;"></div>
<svg style="left:174px;top:891px" width="144" height="81" viewBox="0 0 144 81"><g transform="translate(-1 0)" filter="url(#tn)"><rect x="-10" width="164" height="81" fill="#4c4a42"/><rect width="144" height="81" fill="#43413a"/><path d="M0 0 H144 V12 H0 Z" fill="#52504a"/><path d="M0 10 L20 8 L30 81 H0 Z" fill="#3c4a32"/><path d="M25 30 L60 22 L140 40 L144 62 L110 66 L30 48 Z" fill="#5a4e44"/><path d="M30 48 L110 66 L144 62 V81 H40 Z" fill="#2e2c28"/><path d="M20 10 L40 6 L44 40 L28 44 Z" fill="#6a6a64"/><path d="M60 60 L90 62 L95 81 H62 Z" fill="#5a584e"/></g></svg>
<svg style="left:174px;top:964px" width="22" height="21"><rect width="22" height="21" fill="#0a0a0a"/><path d="M11 3 L20 19 L2 19 Z" fill="#b39d00"/><rect x="10" y="8" width="2.2" height="6" fill="#000"/><rect x="10" y="15.5" width="2.2" height="2" fill="#000"/></svg>
<svg style="left:305px;top:881px" width="10" height="10"><path d="M5 0.5 L9.5 5 L5 9.5 L0.5 5 Z" fill="#5fae2a"/></svg>
<div class="r" style="left:333px;top:878px;width:144px;height:107px;background:#000;"></div>
<svg style="left:333px;top:891px" width="144" height="81" viewBox="0 0 144 81"><g transform="translate(0 0)" filter="url(#tn)"><rect x="-10" width="164" height="81" fill="#4c4a42"/><rect width="144" height="81" fill="#43413a"/><path d="M0 0 H144 V12 H0 Z" fill="#52504a"/><path d="M0 10 L20 8 L30 81 H0 Z" fill="#3c4a32"/><path d="M25 30 L60 22 L140 40 L144 62 L110 66 L30 48 Z" fill="#5a4e44"/><path d="M30 48 L110 66 L144 62 V81 H40 Z" fill="#2e2c28"/><path d="M20 10 L40 6 L44 40 L28 44 Z" fill="#6a6a64"/><path d="M60 60 L90 62 L95 81 H62 Z" fill="#5a584e"/></g></svg>
<svg style="left:333px;top:964px" width="22" height="21"><rect width="22" height="21" fill="#0a0a0a"/><path d="M11 3 L20 19 L2 19 Z" fill="#b39d00"/><rect x="10" y="8" width="2.2" height="6" fill="#000"/><rect x="10" y="15.5" width="2.2" height="2" fill="#000"/></svg>
<svg style="left:464px;top:881px" width="10" height="10"><path d="M5 0.5 L9.5 5 L5 9.5 L0.5 5 Z" fill="#5fae2a"/></svg>
<div class="r" style="left:15px;top:1001px;width:144px;height:107px;background:#000;"></div>
<svg style="left:15px;top:1014px" width="144" height="81" viewBox="0 0 144 81"><g transform="translate(1 0)" filter="url(#tn)"><rect x="-10" width="164" height="81" fill="#4c4a42"/><rect width="144" height="81" fill="#4a4740"/><path d="M0 0 H55 L22 48 L0 58 Z" fill="#435235"/><path d="M80 0 H144 V14 H90 Z" fill="#605e58"/><path d="M42 22 L72 6 L96 40 L72 66 L50 52 Z" fill="#5e4c42"/><path d="M82 34 L122 30 L144 48 V81 H100 L86 60 Z" fill="#171513"/><path d="M0 68 L42 81 H0 Z" fill="#6c6c6a"/><path d="M108 74 L144 64 V81 H112 Z" fill="#6c6c6a"/><path d="M25 55 L70 70 L95 81 H40 Z" fill="#35332c"/></g></svg>
<svg style="left:15px;top:1087px" width="22" height="21"><rect width="22" height="21" fill="#0a0a0a"/><path d="M11 3 L20 19 L2 19 Z" fill="#b39d00"/><rect x="10" y="8" width="2.2" height="6" fill="#000"/><rect x="10" y="15.5" width="2.2" height="2" fill="#000"/></svg>
<svg style="left:146px;top:1004px" width="10" height="10"><path d="M5 0.5 L9.5 5 L5 9.5 L0.5 5 Z" fill="#5fae2a"/></svg>
<div class="r" style="left:174px;top:1001px;width:144px;height:107px;background:#000;"></div>
<svg style="left:174px;top:1014px" width="144" height="81" viewBox="0 0 144 81"><g transform="translate(7 0)" filter="url(#tn)"><rect x="-10" width="164" height="81" fill="#4c4a42"/><rect width="144" height="81" fill="#4a4740"/><path d="M0 0 H55 L22 48 L0 58 Z" fill="#435235"/><path d="M80 0 H144 V14 H90 Z" fill="#605e58"/><path d="M42 22 L72 6 L96 40 L72 66 L50 52 Z" fill="#5e4c42"/><path d="M82 34 L122 30 L144 48 V81 H100 L86 60 Z" fill="#171513"/><path d="M0 68 L42 81 H0 Z" fill="#6c6c6a"/><path d="M108 74 L144 64 V81 H112 Z" fill="#6c6c6a"/><path d="M25 55 L70 70 L95 81 H40 Z" fill="#35332c"/></g></svg>
<svg style="left:174px;top:1087px" width="22" height="21"><rect width="22" height="21" fill="#0a0a0a"/><path d="M11 3 L20 19 L2 19 Z" fill="#b39d00"/><rect x="10" y="8" width="2.2" height="6" fill="#000"/><rect x="10" y="15.5" width="2.2" height="2" fill="#000"/></svg>
<svg style="left:305px;top:1004px" width="10" height="10"><path d="M5 0.5 L9.5 5 L5 9.5 L0.5 5 Z" fill="#5fae2a"/></svg>
<div class="r" style="left:333px;top:1001px;width:144px;height:107px;background:#000;"></div>
<svg style="left:333px;top:1014px" width="144" height="81" viewBox="0 0 144 81"><g transform="translate(-3 0)" filter="url(#tn)"><rect x="-10" width="164" height="81" fill="#4c4a42"/><rect width="144" height="81" fill="#4a4740"/><path d="M0 0 H55 L22 48 L0 58 Z" fill="#435235"/><path d="M80 0 H144 V14 H90 Z" fill="#605e58"/><path d="M42 22 L72 6 L96 40 L72 66 L50 52 Z" fill="#5e4c42"/><path d="M82 34 L122 30 L144 48 V81 H100 L86 60 Z" fill="#171513"/><path d="M0 68 L42 81 H0 Z" fill="#6c6c6a"/><path d="M108 74 L144 64 V81 H112 Z" fill="#6c6c6a"/><path d="M25 55 L70 70 L95 81 H40 Z" fill="#35332c"/></g></svg>
<svg style="left:333px;top:1087px" width="22" height="21"><rect width="22" height="21" fill="#0a0a0a"/><path d="M11 3 L20 19 L2 19 Z" fill="#b39d00"/><rect x="10" y="8" width="2.2" height="6" fill="#000"/><rect x="10" y="15.5" width="2.2" height="2" fill="#000"/></svg>
<svg style="left:464px;top:1004px" width="10" height="10"><path d="M5 0.5 L9.5 5 L5 9.5 L0.5 5 Z" fill="#5fae2a"/></svg>
<div class="r" style="left:15px;top:1124px;width:144px;height:107px;background:#000;"></div>
<svg style="left:15px;top:1137px" width="144" height="81" viewBox="0 0 144 81"><g transform="translate(-5 0)" filter="url(#tn)"><rect x="-10" width="164" height="81" fill="#4c4a42"/><rect width="144" height="81" fill="#4a4740"/><path d="M0 0 H55 L22 48 L0 58 Z" fill="#435235"/><path d="M80 0 H144 V14 H90 Z" fill="#605e58"/><path d="M42 22 L72 6 L96 40 L72 66 L50 52 Z" fill="#5e4c42"/><path d="M82 34 L122 30 L144 48 V81 H100 L86 60 Z" fill="#171513"/><path d="M0 68 L42 81 H0 Z" fill="#6c6c6a"/><path d="M108 74 L144 64 V81 H112 Z" fill="#6c6c6a"/><path d="M25 55 L70 70 L95 81 H40 Z" fill="#35332c"/></g></svg>
<svg style="left:15px;top:1210px" width="22" height="21"><rect width="22" height="21" fill="#0a0a0a"/><path d="M11 3 L20 19 L2 19 Z" fill="#b39d00"/><rect x="10" y="8" width="2.2" height="6" fill="#000"/><rect x="10" y="15.5" width="2.2" height="2" fill="#000"/></svg>
<svg style="left:146px;top:1127px" width="10" height="10"><path d="M5 0.5 L9.5 5 L5 9.5 L0.5 5 Z" fill="#5fae2a"/></svg>
<div class="r" style="left:174px;top:1124px;width:144px;height:107px;background:#000;"></div>
<svg style="left:174px;top:1137px" width="144" height="81" viewBox="0 0 144 81"><g transform="translate(2 0)" filter="url(#tn)"><rect x="-10" width="164" height="81" fill="#4c4a42"/><rect width="144" height="81" fill="#4a4740"/><path d="M0 0 H55 L22 48 L0 58 Z" fill="#435235"/><path d="M80 0 H144 V14 H90 Z" fill="#605e58"/><path d="M42 22 L72 6 L96 40 L72 66 L50 52 Z" fill="#5e4c42"/><path d="M82 34 L122 30 L144 48 V81 H100 L86 60 Z" fill="#171513"/><path d="M0 68 L42 81 H0 Z" fill="#6c6c6a"/><path d="M108 74 L144 64 V81 H112 Z" fill="#6c6c6a"/><path d="M25 55 L70 70 L95 81 H40 Z" fill="#35332c"/></g></svg>
<svg style="left:174px;top:1210px" width="22" height="21"><rect width="22" height="21" fill="#0a0a0a"/><path d="M11 3 L20 19 L2 19 Z" fill="#b39d00"/><rect x="10" y="8" width="2.2" height="6" fill="#000"/><rect x="10" y="15.5" width="2.2" height="2" fill="#000"/></svg>
<svg style="left:305px;top:1127px" width="10" height="10"><path d="M5 0.5 L9.5 5 L5 9.5 L0.5 5 Z" fill="#5fae2a"/></svg>
<div class="r" style="left:333px;top:1124px;width:144px;height:107px;background:#000;"></div>
<svg style="left:333px;top:1137px" width="144" height="81" viewBox="0 0 144 81"><g transform="translate(-6 0)" filter="url(#tn)"><rect x="-10" width="164" height="81" fill="#4c4a42"/><rect width="144" height="81" fill="#4a4740"/><path d="M0 0 H55 L22 48 L0 58 Z" fill="#435235"/><path d="M80 0 H144 V14 H90 Z" fill="#605e58"/><path d="M42 22 L72 6 L96 40 L72 66 L50 52 Z" fill="#5e4c42"/><path d="M82 34 L122 30 L144 48 V81 H100 L86 60 Z" fill="#171513"/><path d="M0 68 L42 81 H0 Z" fill="#6c6c6a"/><path d="M108 74 L144 64 V81 H112 Z" fill="#6c6c6a"/><path d="M25 55 L70 70 L95 81 H40 Z" fill="#35332c"/></g></svg>
<svg style="left:333px;top:1210px" width="22" height="21"><rect width="22" height="21" fill="#0a0a0a"/><path d="M11 3 L20 19 L2 19 Z" fill="#b39d00"/><rect x="10" y="8" width="2.2" height="6" fill="#000"/><rect x="10" y="15.5" width="2.2" height="2" fill="#000"/></svg>
<svg style="left:464px;top:1127px" width="10" height="10"><path d="M5 0.5 L9.5 5 L5 9.5 L0.5 5 Z" fill="#5fae2a"/></svg>
<div class="r" style="left:15px;top:1247px;width:144px;height:107px;background:#000;"></div>
<svg style="left:15px;top:1260px" width="144" height="81" viewBox="0 0 144 81"><g transform="translate(0 0)" filter="url(#tn)"><rect x="-10" width="164" height="81" fill="#4c4a42"/><rect width="144" height="81" fill="#4a4740"/><path d="M0 0 H55 L22 48 L0 58 Z" fill="#435235"/><path d="M80 0 H144 V14 H90 Z" fill="#605e58"/><path d="M42 22 L72 6 L96 40 L72 66 L50 52 Z" fill="#5e4c42"/><path d="M82 34 L122 30 L144 48 V81 H100 L86 60 Z" fill="#171513"/><path d="M0 68 L42 81 H0 Z" fill="#6c6c6a"/><path d="M108 74 L144 64 V81 H112 Z" fill="#6c6c6a"/><path d="M25 55 L70 70 L95 81 H40 Z" fill="#35332c"/></g></svg>
<svg style="left:15px;top:1333px" width="22" height="21"><rect width="22" height="21" fill="#0a0a0a"/><path d="M11 3 L20 19 L2 19 Z" fill="#b39d00"/><rect x="10" y="8" width="2.2" height="6" fill="#000"/><rect x="10" y="15.5" width="2.2" height="2" fill="#000"/></svg>
<svg style="left:146px;top:1250px" width="10" height="10"><path d="M5 0.5 L9.5 5 L5 9.5 L0.5 5 Z" fill="#5fae2a"/></svg>
<div class="r" style="left:174px;top:1247px;width:144px;height:107px;background:#000;"></div>
<svg style="left:174px;top:1260px" width="144" height="81" viewBox="0 0 144 81"><g transform="translate(8 0)" filter="url(#tn)"><rect x="-10" width="164" height="81" fill="#4c4a42"/><rect width="144" height="81" fill="#4a4740"/><path d="M0 0 H55 L22 48 L0 58 Z" fill="#435235"/><path d="M80 0 H144 V14 H90 Z" fill="#605e58"/><path d="M42 22 L72 6 L96 40 L72 66 L50 52 Z" fill="#5e4c42"/><path d="M82 34 L122 30 L144 48 V81 H100 L86 60 Z" fill="#171513"/><path d="M0 68 L42 81 H0 Z" fill="#6c6c6a"/><path d="M108 74 L144 64 V81 H112 Z" fill="#6c6c6a"/><path d="M25 55 L70 70 L95 81 H40 Z" fill="#35332c"/></g></svg>
<svg style="left:174px;top:1333px" width="22" height="21"><rect width="22" height="21" fill="#0a0a0a"/><path d="M11 3 L20 19 L2 19 Z" fill="#b39d00"/><rect x="10" y="8" width="2.2" height="6" fill="#000"/><rect x="10" y="15.5" width="2.2" height="2" fill="#000"/></svg>
<svg style="left:305px;top:1250px" width="10" height="10"><path d="M5 0.5 L9.5 5 L5 9.5 L0.5 5 Z" fill="#5fae2a"/></svg>
<div class="r" style="left:333px;top:1247px;width:144px;height:107px;background:#000;"></div>
<svg style="left:333px;top:1260px" width="144" height="81" viewBox="0 0 144 81"><g transform="translate(-4 0)" filter="url(#tn)"><rect x="-10" width="164" height="81" fill="#4c4a42"/><rect width="144" height="81" fill="#4a4740"/><path d="M0 0 H55 L22 48 L0 58 Z" fill="#435235"/><path d="M80 0 H144 V14 H90 Z" fill="#605e58"/><path d="M42 22 L72 6 L96 40 L72 66 L50 52 Z" fill="#5e4c42"/><path d="M82 34 L122 30 L144 48 V81 H100 L86 60 Z" fill="#171513"/><path d="M0 68 L42 81 H0 Z" fill="#6c6c6a"/><path d="M108 74 L144 64 V81 H112 Z" fill="#6c6c6a"/><path d="M25 55 L70 70 L95 81 H40 Z" fill="#35332c"/></g></svg>
<svg style="left:333px;top:1333px" width="22" height="21"><rect width="22" height="21" fill="#0a0a0a"/><path d="M11 3 L20 19 L2 19 Z" fill="#b39d00"/><rect x="10" y="8" width="2.2" height="6" fill="#000"/><rect x="10" y="15.5" width="2.2" height="2" fill="#000"/></svg>
<svg style="left:464px;top:1250px" width="10" height="10"><path d="M5 0.5 L9.5 5 L5 9.5 L0.5 5 Z" fill="#5fae2a"/></svg>
<div class="r" style="left:15px;top:1370px;width:144px;height:107px;background:#000;"></div>
<svg style="left:15px;top:1383px" width="144" height="81" viewBox="0 0 144 81"><g transform="translate(-2 0)" filter="url(#tn)"><rect x="-10" width="164" height="81" fill="#4c4a42"/><rect width="144" height="81" fill="#4a4740"/><path d="M0 0 H55 L22 48 L0 58 Z" fill="#435235"/><path d="M80 0 H144 V14 H90 Z" fill="#605e58"/><path d="M42 22 L72 6 L96 40 L72 66 L50 52 Z" fill="#5e4c42"/><path d="M82 34 L122 30 L144 48 V81 H100 L86 60 Z" fill="#171513"/><path d="M0 68 L42 81 H0 Z" fill="#6c6c6a"/><path d="M108 74 L144 64 V81 H112 Z" fill="#6c6c6a"/><path d="M25 55 L70 70 L95 81 H40 Z" fill="#35332c"/></g></svg>
<svg style="left:15px;top:1456px" width="22" height="21"><rect width="22" height="21" fill="#0a0a0a"/><path d="M11 3 L20 19 L2 19 Z" fill="#b39d00"/><rect x="10" y="8" width="2.2" height="6" fill="#000"/><rect x="10" y="15.5" width="2.2" height="2" fill="#000"/></svg>
<svg style="left:146px;top:1373px" width="10" height="10"><path d="M5 0.5 L9.5 5 L5 9.5 L0.5 5 Z" fill="#5fae2a"/></svg>
<div class="r" style="left:174px;top:1370px;width:144px;height:107px;background:#000;"></div>
<svg style="left:174px;top:1383px" width="144" height="81" viewBox="0 0 144 81"><g transform="translate(-6 0)" filter="url(#tn)"><rect x="-10" width="164" height="81" fill="#4c4a42"/><rect width="144" height="81" fill="#4a4740"/><path d="M0 0 H55 L22 48 L0 58 Z" fill="#435235"/><path d="M80 0 H144 V14 H90 Z" fill="#605e58"/><path d="M42 22 L72 6 L96 40 L72 66 L50 52 Z" fill="#5e4c42"/><path d="M82 34 L122 30 L144 48 V81 H100 L86 60 Z" fill="#171513"/><path d="M0 68 L42 81 H0 Z" fill="#6c6c6a"/><path d="M108 74 L144 64 V81 H112 Z" fill="#6c6c6a"/><path d="M25 55 L70 70 L95 81 H40 Z" fill="#35332c"/></g></svg>
<svg style="left:174px;top:1456px" width="22" height="21"><rect width="22" height="21" fill="#0a0a0a"/><path d="M11 3 L20 19 L2 19 Z" fill="#b39d00"/><rect x="10" y="8" width="2.2" height="6" fill="#000"/><rect x="10" y="15.5" width="2.2" height="2" fill="#000"/></svg>
<svg style="left:305px;top:1373px" width="10" height="10"><path d="M5 0.5 L9.5 5 L5 9.5 L0.5 5 Z" fill="#5fae2a"/></svg>
<div class="r" style="left:333px;top:1370px;width:144px;height:107px;background:#000;"></div>
<svg style="left:333px;top:1383px" width="144" height="81" viewBox="0 0 144 81"><g transform="translate(5 0)" filter="url(#tn)"><rect x="-10" width="164" height="81" fill="#4c4a42"/><rect width="144" height="81" fill="#4a4740"/><path d="M0 0 H55 L22 48 L0 58 Z" fill="#435235"/><path d="M80 0 H144 V14 H90 Z" fill="#605e58"/><path d="M42 22 L72 6 L96 40 L72 66 L50 52 Z" fill="#5e4c42"/><path d="M82 34 L122 30 L144 48 V81 H100 L86 60 Z" fill="#171513"/><path d="M0 68 L42 81 H0 Z" fill="#6c6c6a"/><path d="M108 74 L144 64 V81 H112 Z" fill="#6c6c6a"/><path d="M25 55 L70 70 L95 81 H40 Z" fill="#35332c"/></g></svg>
<svg style="left:333px;top:1456px" width="22" height="21"><rect width="22" height="21" fill="#0a0a0a"/><path d="M11 3 L20 19 L2 19 Z" fill="#b39d00"/><rect x="10" y="8" width="2.2" height="6" fill="#000"/><rect x="10" y="15.5" width="2.2" height="2" fill="#000"/></svg>
<svg style="left:464px;top:1373px" width="10" height="10"><path d="M5 0.5 L9.5 5 L5 9.5 L0.5 5 Z" fill="#5fae2a"/></svg>
<div class="r" style="left:15px;top:1493px;width:144px;height:107px;background:#000;"></div>
<svg style="left:15px;top:1506px" width="144" height="81" viewBox="0 0 144 81"><g transform="translate(-4 0)" filter="url(#tn)"><rect x="-10" width="164" height="81" fill="#4c4a42"/><rect width="144" height="81" fill="#4a4740"/><path d="M0 0 H55 L22 48 L0 58 Z" fill="#435235"/><path d="M80 0 H144 V14 H90 Z" fill="#605e58"/><path d="M42 22 L72 6 L96 40 L72 66 L50 52 Z" fill="#5e4c42"/><path d="M82 34 L122 30 L144 48 V81 H100 L86 60 Z" fill="#171513"/><path d="M0 68 L42 81 H0 Z" fill="#6c6c6a"/><path d="M108 74 L144 64 V81 H112 Z" fill="#6c6c6a"/><path d="M25 55 L70 70 L95 81 H40 Z" fill="#35332c"/></g></svg>
<svg style="left:15px;top:1579px" width="22" height="21"><rect width="22" height="21" fill="#0a0a0a"/><path d="M11 3 L20 19 L2 19 Z" fill="#b39d00"/><rect x="10" y="8" width="2.2" height="6" fill="#000"/><rect x="10" y="15.5" width="2.2" height="2" fill="#000"/></svg>
<svg style="left:146px;top:1496px" width="10" height="10"><path d="M5 0.5 L9.5 5 L5 9.5 L0.5 5 Z" fill="#5fae2a"/></svg>
<div class="r" style="left:174px;top:1493px;width:144px;height:107px;background:#000;"></div>
<svg style="left:174px;top:1506px" width="144" height="81" viewBox="0 0 144 81"><g transform="translate(-2 0)" filter="url(#tn)"><rect x="-10" width="164" height="81" fill="#4c4a42"/><rect width="144" height="81" fill="#4a4740"/><path d="M0 0 H55 L22 48 L0 58 Z" fill="#435235"/><path d="M80 0 H144 V14 H90 Z" fill="#605e58"/><path d="M42 22 L72 6 L96 40 L72 66 L50 52 Z" fill="#5e4c42"/><path d="M82 34 L122 30 L144 48 V81 H100 L86 60 Z" fill="#171513"/><path d="M0 68 L42 81 H0 Z" fill="#6c6c6a"/><path d="M108 74 L144 64 V81 H112 Z" fill="#6c6c6a"/><path d="M25 55 L70 70 L95 81 H40 Z" fill="#35332c"/></g></svg>
<svg style="left:174px;top:1579px" width="22" height="21"><rect width="22" height="21" fill="#0a0a0a"/><path d="M11 3 L20 19 L2 19 Z" fill="#b39d00"/><rect x="10" y="8" width="2.2" height="6" fill="#000"/><rect x="10" y="15.5" width="2.2" height="2" fill="#000"/></svg>
<svg style="left:305px;top:1496px" width="10" height="10"><path d="M5 0.5 L9.5 5 L5 9.5 L0.5 5 Z" fill="#5fae2a"/></svg>
<div class="r" style="left:333px;top:1493px;width:144px;height:107px;background:#000;"></div>
<svg style="left:333px;top:1506px" width="144" height="81" viewBox="0 0 144 81"><g transform="translate(-4 0)" filter="url(#tn)"><rect x="-10" width="164" height="81" fill="#4c4a42"/><rect width="144" height="81" fill="#4a4740"/><path d="M0 0 H55 L22 48 L0 58 Z" fill="#435235"/><path d="M80 0 H144 V14 H90 Z" fill="#605e58"/><path d="M42 22 L72 6 L96 40 L72 66 L50 52 Z" fill="#5e4c42"/><path d="M82 34 L122 30 L144 48 V81 H100 L86 60 Z" fill="#171513"/><path d="M0 68 L42 81 H0 Z" fill="#6c6c6a"/><path d="M108 74 L144 64 V81 H112 Z" fill="#6c6c6a"/><path d="M25 55 L70 70 L95 81 H40 Z" fill="#35332c"/></g></svg>
<svg style="left:333px;top:1579px" width="22" height="21"><rect width="22" height="21" fill="#0a0a0a"/><path d="M11 3 L20 19 L2 19 Z" fill="#b39d00"/><rect x="10" y="8" width="2.2" height="6" fill="#000"/><rect x="10" y="15.5" width="2.2" height="2" fill="#000"/></svg>
<svg style="left:464px;top:1496px" width="10" height="10"><path d="M5 0.5 L9.5 5 L5 9.5 L0.5 5 Z" fill="#5fae2a"/></svg>
<div class="r" style="left:15px;top:1616px;width:144px;height:107px;background:#000;"></div>
<svg style="left:15px;top:1629px" width="144" height="81" viewBox="0 0 144 81"><g transform="translate(4 0)" filter="url(#tn)"><rect x="-10" width="164" height="81" fill="#4c4a42"/><rect width="144" height="81" fill="#4a4740"/><path d="M0 0 H55 L22 48 L0 58 Z" fill="#435235"/><path d="M80 0 H144 V14 H90 Z" fill="#605e58"/><path d="M42 22 L72 6 L96 40 L72 66 L50 52 Z" fill="#5e4c42"/><path d="M82 34 L122 30 L144 48 V81 H100 L86 60 Z" fill="#171513"/><path d="M0 68 L42 81 H0 Z" fill="#6c6c6a"/><path d="M108 74 L144 64 V81 H112 Z" fill="#6c6c6a"/><path d="M25 55 L70 70 L95 81 H40 Z" fill="#35332c"/></g></svg>
<svg style="left:15px;top:1702px" width="22" height="21"><rect width="22" height="21" fill="#0a0a0a"/><path d="M11 3 L20 19 L2 19 Z" fill="#b39d00"/><rect x="10" y="8" width="2.2" height="6" fill="#000"/><rect x="10" y="15.5" width="2.2" height="2" fill="#000"/></svg>
<svg style="left:146px;top:1619px" width="10" height="10"><path d="M5 0.5 L9.5 5 L5 9.5 L0.5 5 Z" fill="#5fae2a"/></svg>
<div class="r" style="left:174px;top:1616px;width:144px;height:107px;background:#000;"></div>
<svg style="left:174px;top:1629px" width="144" height="81" viewBox="0 0 144 81"><g transform="translate(-2 0)" filter="url(#tn)"><rect x="-10" width="164" height="81" fill="#4c4a42"/><rect width="144" height="81" fill="#4a4740"/><path d="M0 0 H55 L22 48 L0 58 Z" fill="#435235"/><path d="M80 0 H144 V14 H90 Z" fill="#605e58"/><path d="M42 22 L72 6 L96 40 L72 66 L50 52 Z" fill="#5e4c42"/><path d="M82 34 L122 30 L144 48 V81 H100 L86 60 Z" fill="#171513"/><path d="M0 68 L42 81 H0 Z" fill="#6c6c6a"/><path d="M108 74 L144 64 V81 H112 Z" fill="#6c6c6a"/><path d="M25 55 L70 70 L95 81 H40 Z" fill="#35332c"/></g></svg>
<svg style="left:174px;top:1702px" width="22" height="21"><rect width="22" height="21" fill="#0a0a0a"/><path d="M11 3 L20 19 L2 19 Z" fill="#b39d00"/><rect x="10" y="8" width="2.2" height="6" fill="#000"/><rect x="10" y="15.5" width="2.2" height="2" fill="#000"/></svg>
<svg style="left:305px;top:1619px" width="10" height="10"><path d="M5 0.5 L9.5 5 L5 9.5 L0.5 5 Z" fill="#5fae2a"/></svg>
<div class="r" style="left:333px;top:1616px;width:144px;height:107px;background:#000;"></div>
<svg style="left:333px;top:1629px" width="144" height="81" viewBox="0 0 144 81"><g transform="translate(7 0)" filter="url(#tn)"><rect x="-10" width="164" height="81" fill="#4c4a42"/><rect width="144" height="81" fill="#4a4740"/><path d="M0 0 H55 L22 48 L0 58 Z" fill="#435235"/><path d="M80 0 H144 V14 H90 Z" fill="#605e58"/><path d="M42 22 L72 6 L96 40 L72 66 L50 52 Z" fill="#5e4c42"/><path d="M82 34 L122 30 L144 48 V81 H100 L86 60 Z" fill="#171513"/><path d="M0 68 L42 81 H0 Z" fill="#6c6c6a"/><path d="M108 74 L144 64 V81 H112 Z" fill="#6c6c6a"/><path d="M25 55 L70 70 L95 81 H40 Z" fill="#35332c"/></g></svg>
<svg style="left:333px;top:1702px" width="22" height="21"><rect width="22" height="21" fill="#0a0a0a"/><path d="M11 3 L20 19 L2 19 Z" fill="#b39d00"/><rect x="10" y="8" width="2.2" height="6" fill="#000"/><rect x="10" y="15.5" width="2.2" height="2" fill="#000"/></svg>
<svg style="left:464px;top:1619px" width="10" height="10"><path d="M5 0.5 L9.5 5 L5 9.5 L0.5 5 Z" fill="#5fae2a"/></svg>
<div class="r" style="left:15px;top:1739px;width:144px;height:107px;background:#000;"></div>
<svg style="left:15px;top:1752px" width="144" height="81" viewBox="0 0 144 81"><g transform="translate(8 0)" filter="url(#tn)"><rect x="-10" width="164" height="81" fill="#4c4a42"/><rect width="144" height="81" fill="#45423c"/><path d="M0 0 H100 V12 H0 Z" fill="#55534d"/><path d="M0 28 L58 40 L82 68 L34 81 L0 72 Z" fill="#54463c"/><path d="M52 34 L98 28 L110 60 L72 72 Z" fill="#1b1917"/><path d="M110 30 L144 20 V81 H90 L125 58 Z" fill="#626466"/><path d="M0 72 L34 81 H0 Z" fill="#363a2e"/><path d="M100 0 L125 0 L118 30 L96 28 Z" fill="#5a5a56"/><path d="M20 50 L60 60 L50 81 H10 Z" fill="#2e2b26" opacity="0.7"/></g></svg>
<svg style="left:15px;top:1825px" width="22" height="21"><rect width="22" height="21" fill="#0a0a0a"/><path d="M11 3 L20 19 L2 19 Z" fill="#b39d00"/><rect x="10" y="8" width="2.2" height="6" fill="#000"/><rect x="10" y="15.5" width="2.2" height="2" fill="#000"/></svg>
<svg style="left:146px;top:1742px" width="10" height="10"><path d="M5 0.5 L9.5 5 L5 9.5 L0.5 5 Z" fill="#5fae2a"/></svg>
<div class="r" style="left:174px;top:1739px;width:144px;height:107px;background:#000;"></div>
<svg style="left:174px;top:1752px" width="144" height="81" viewBox="0 0 144 81"><g transform="translate(-6 0)" filter="url(#tn)"><rect x="-10" width="164" height="81" fill="#4c4a42"/><rect width="144" height="81" fill="#45423c"/><path d="M0 0 H100 V12 H0 Z" fill="#55534d"/><path d="M0 28 L58 40 L82 68 L34 81 L0 72 Z" fill="#54463c"/><path d="M52 34 L98 28 L110 60 L72 72 Z" fill="#1b1917"/><path d="M110 30 L144 20 V81 H90 L125 58 Z" fill="#626466"/><path d="M0 72 L34 81 H0 Z" fill="#363a2e"/><path d="M100 0 L125 0 L118 30 L96 28 Z" fill="#5a5a56"/><path d="M20 50 L60 60 L50 81 H10 Z" fill="#2e2b26" opacity="0.7"/></g></svg>
<svg style="left:174px;top:1825px" width="22" height="21"><rect width="22" height="21" fill="#0a0a0a"/><path d="M11 3 L20 19 L2 19 Z" fill="#b39d00"/><rect x="10" y="8" width="2.2" height="6" fill="#000"/><rect x="10" y="15.5" width="2.2" height="2" fill="#000"/></svg>
<svg style="left:305px;top:1742px" width="10" height="10"><path d="M5 0.5 L9.5 5 L5 9.5 L0.5 5 Z" fill="#5fae2a"/></svg>
<div class="r" style="left:333px;top:1739px;width:144px;height:107px;background:#000;"></div>
<svg style="left:333px;top:1752px" width="144" height="81" viewBox="0 0 144 81"><g transform="translate(8 0)" filter="url(#tn)"><rect x="-10" width="164" height="81" fill="#4c4a42"/><rect width="144" height="81" fill="#45423c"/><path d="M0 0 H100 V12 H0 Z" fill="#55534d"/><path d="M0 28 L58 40 L82 68 L34 81 L0 72 Z" fill="#54463c"/><path d="M52 34 L98 28 L110 60 L72 72 Z" fill="#1b1917"/><path d="M110 30 L144 20 V81 H90 L125 58 Z" fill="#626466"/><path d="M0 72 L34 81 H0 Z" fill="#363a2e"/><path d="M100 0 L125 0 L118 30 L96 28 Z" fill="#5a5a56"/><path d="M20 50 L60 60 L50 81 H10 Z" fill="#2e2b26" opacity="0.7"/></g></svg>
<svg style="left:333px;top:1825px" width="22" height="21"><rect width="22" height="21" fill="#0a0a0a"/><path d="M11 3 L20 19 L2 19 Z" fill="#b39d00"/><rect x="10" y="8" width="2.2" height="6" fill="#000"/><rect x="10" y="15.5" width="2.2" height="2" fill="#000"/></svg>
<svg style="left:464px;top:1742px" width="10" height="10"><path d="M5 0.5 L9.5 5 L5 9.5 L0.5 5 Z" fill="#5fae2a"/></svg>
<div class="r" style="left:15px;top:1862px;width:144px;height:107px;background:#000;"></div>
<svg style="left:15px;top:1875px" width="144" height="81" viewBox="0 0 144 81"><g transform="translate(8 0)" filter="url(#tn)"><rect x="-10" width="164" height="81" fill="#4c4a42"/><rect width="144" height="81" fill="#45423c"/><path d="M0 0 H100 V12 H0 Z" fill="#55534d"/><path d="M0 28 L58 40 L82 68 L34 81 L0 72 Z" fill="#54463c"/><path d="M52 34 L98 28 L110 60 L72 72 Z" fill="#1b1917"/><path d="M110 30 L144 20 V81 H90 L125 58 Z" fill="#626466"/><path d="M0 72 L34 81 H0 Z" fill="#363a2e"/><path d="M100 0 L125 0 L118 30 L96 28 Z" fill="#5a5a56"/><path d="M20 50 L60 60 L50 81 H10 Z" fill="#2e2b26" opacity="0.7"/></g></svg>
<svg style="left:15px;top:1948px" width="22" height="21"><rect width="22" height="21" fill="#0a0a0a"/><path d="M11 3 L20 19 L2 19 Z" fill="#b39d00"/><rect x="10" y="8" width="2.2" height="6" fill="#000"/><rect x="10" y="15.5" width="2.2" height="2" fill="#000"/></svg>
<svg style="left:146px;top:1865px" width="10" height="10"><path d="M5 0.5 L9.5 5 L5 9.5 L0.5 5 Z" fill="#5fae2a"/></svg>
<div class="r" style="left:174px;top:1862px;width:144px;height:107px;background:#000;"></div>
<svg style="left:174px;top:1875px" width="144" height="81" viewBox="0 0 144 81"><g transform="translate(2 0)" filter="url(#tn)"><rect x="-10" width="164" height="81" fill="#4c4a42"/><rect width="144" height="81" fill="#45423c"/><path d="M0 0 H100 V12 H0 Z" fill="#55534d"/><path d="M0 28 L58 40 L82 68 L34 81 L0 72 Z" fill="#54463c"/><path d="M52 34 L98 28 L110 60 L72 72 Z" fill="#1b1917"/><path d="M110 30 L144 20 V81 H90 L125 58 Z" fill="#626466"/><path d="M0 72 L34 81 H0 Z" fill="#363a2e"/><path d="M100 0 L125 0 L118 30 L96 28 Z" fill="#5a5a56"/><path d="M20 50 L60 60 L50 81 H10 Z" fill="#2e2b26" opacity="0.7"/></g></svg>
<svg style="left:174px;top:1948px" width="22" height="21"><rect width="22" height="21" fill="#0a0a0a"/><path d="M11 3 L20 19 L2 19 Z" fill="#b39d00"/><rect x="10" y="8" width="2.2" height="6" fill="#000"/><rect x="10" y="15.5" width="2.2" height="2" fill="#000"/></svg>
<svg style="left:305px;top:1865px" width="10" height="10"><path d="M5 0.5 L9.5 5 L5 9.5 L0.5 5 Z" fill="#5fae2a"/></svg>
<div class="r" style="left:333px;top:1862px;width:144px;height:107px;background:#000;"></div>
<svg style="left:333px;top:1875px" width="144" height="81" viewBox="0 0 144 81"><g transform="translate(5 0)" filter="url(#tn)"><rect x="-10" width="164" height="81" fill="#4c4a42"/><rect width="144" height="81" fill="#45423c"/><path d="M0 0 H100 V12 H0 Z" fill="#55534d"/><path d="M0 28 L58 40 L82 68 L34 81 L0 72 Z" fill="#54463c"/><path d="M52 34 L98 28 L110 60 L72 72 Z" fill="#1b1917"/><path d="M110 30 L144 20 V81 H90 L125 58 Z" fill="#626466"/><path d="M0 72 L34 81 H0 Z" fill="#363a2e"/><path d="M100 0 L125 0 L118 30 L96 28 Z" fill="#5a5a56"/><path d="M20 50 L60 60 L50 81 H10 Z" fill="#2e2b26" opacity="0.7"/></g></svg>
<svg style="left:333px;top:1948px" width="22" height="21"><rect width="22" height="21" fill="#0a0a0a"/><path d="M11 3 L20 19 L2 19 Z" fill="#b39d00"/><rect x="10" y="8" width="2.2" height="6" fill="#000"/><rect x="10" y="15.5" width="2.2" height="2" fill="#000"/></svg>
<svg style="left:464px;top:1865px" width="10" height="10"><path d="M5 0.5 L9.5 5 L5 9.5 L0.5 5 Z" fill="#5fae2a"/></svg>
<div class="r" style="left:15px;top:1985px;width:144px;height:107px;background:#000;"></div>
<svg style="left:15px;top:1998px" width="144" height="81" viewBox="0 0 144 81"><g transform="translate(-5 0)" filter="url(#tn)"><rect x="-10" width="164" height="81" fill="#4c4a42"/><rect width="144" height="81" fill="#45423c"/><path d="M0 0 H100 V12 H0 Z" fill="#55534d"/><path d="M0 28 L58 40 L82 68 L34 81 L0 72 Z" fill="#54463c"/><path d="M52 34 L98 28 L110 60 L72 72 Z" fill="#1b1917"/><path d="M110 30 L144 20 V81 H90 L125 58 Z" fill="#626466"/><path d="M0 72 L34 81 H0 Z" fill="#363a2e"/><path d="M100 0 L125 0 L118 30 L96 28 Z" fill="#5a5a56"/><path d="M20 50 L60 60 L50 81 H10 Z" fill="#2e2b26" opacity="0.7"/></g></svg>
<svg style="left:15px;top:2071px" width="22" height="21"><rect width="22" height="21" fill="#0a0a0a"/><path d="M11 3 L20 19 L2 19 Z" fill="#b39d00"/><rect x="10" y="8" width="2.2" height="6" fill="#000"/><rect x="10" y="15.5" width="2.2" height="2" fill="#000"/></svg>
<svg style="left:146px;top:1988px" width="10" height="10"><path d="M5 0.5 L9.5 5 L5 9.5 L0.5 5 Z" fill="#5fae2a"/></svg>
<div class="r" style="left:174px;top:1985px;width:144px;height:107px;background:#000;"></div>
<svg style="left:174px;top:1998px" width="144" height="81" viewBox="0 0 144 81"><g transform="translate(8 0)" filter="url(#tn)"><rect x="-10" width="164" height="81" fill="#4c4a42"/><rect width="144" height="81" fill="#45423c"/><path d="M0 0 H100 V12 H0 Z" fill="#55534d"/><path d="M0 28 L58 40 L82 68 L34 81 L0 72 Z" fill="#54463c"/><path d="M52 34 L98 28 L110 60 L72 72 Z" fill="#1b1917"/><path d="M110 30 L144 20 V81 H90 L125 58 Z" fill="#626466"/><path d="M0 72 L34 81 H0 Z" fill="#363a2e"/><path d="M100 0 L125 0 L118 30 L96 28 Z" fill="#5a5a56"/><path d="M20 50 L60 60 L50 81 H10 Z" fill="#2e2b26" opacity="0.7"/></g></svg>
<svg style="left:174px;top:2071px" width="22" height="21"><rect width="22" height="21" fill="#0a0a0a"/><path d="M11 3 L20 19 L2 19 Z" fill="#b39d00"/><rect x="10" y="8" width="2.2" height="6" fill="#000"/><rect x="10" y="15.5" width="2.2" height="2" fill="#000"/></svg>
<svg style="left:305px;top:1988px" width="10" height="10"><path d="M5 0.5 L9.5 5 L5 9.5 L0.5 5 Z" fill="#5fae2a"/></svg>
<div class="r" style="left:333px;top:1985px;width:144px;height:107px;background:#000;"></div>
<svg style="left:333px;top:1998px" width="144" height="81" viewBox="0 0 144 81"><g transform="translate(7 0)" filter="url(#tn)"><rect x="-10" width="164" height="81" fill="#4c4a42"/><rect width="144" height="81" fill="#45423c"/><path d="M0 0 H100 V12 H0 Z" fill="#55534d"/><path d="M0 28 L58 40 L82 68 L34 81 L0 72 Z" fill="#54463c"/><path d="M52 34 L98 28 L110 60 L72 72 Z" fill="#1b1917"/><path d="M110 30 L144 20 V81 H90 L125 58 Z" fill="#626466"/><path d="M0 72 L34 81 H0 Z" fill="#363a2e"/><path d="M100 0 L125 0 L118 30 L96 28 Z" fill="#5a5a56"/><path d="M20 50 L60 60 L50 81 H10 Z" fill="#2e2b26" opacity="0.7"/></g></svg>
<svg style="left:333px;top:2071px" width="22" height="21"><rect width="22" height="21" fill="#0a0a0a"/><path d="M11 3 L20 19 L2 19 Z" fill="#b39d00"/><rect x="10" y="8" width="2.2" height="6" fill="#000"/><rect x="10" y="15.5" width="2.2" height="2" fill="#000"/></svg>
<svg style="left:464px;top:1988px" width="10" height="10"><path d="M5 0.5 L9.5 5 L5 9.5 L0.5 5 Z" fill="#5fae2a"/></svg>
<div class="r" style="left:12px;top:259px;width:150px;height:114px;background:transparent;border:3px solid #3f6fb2"></div>
<div class="r" style="left:171px;top:259px;width:150px;height:114px;background:transparent;border:3px solid #5fa833"></div>
<div class="r" style="left:519px;top:207px;width:1667px;height:1889px;background:#3a69ad;"></div>
<div class="r" style="left:525px;top:213px;width:1654px;height:1883px;background:#0e0e0e;"></div>
<svg style="left:525px;top:213px" width="1654" height="1883" viewBox="525 213 1654 1883"><defs><pattern id="gp" width="9.5" height="9.5" patternUnits="userSpaceOnUse" patternTransform="matrix(0.912 -0.41 0.555 0.832 0 0)"><rect width="9.5" height="9.5" fill="#0f0f0f"/><rect width="9.5" height="1.15" fill="#262626"/><rect width="1.15" height="9.5" fill="#262626"/></pattern><pattern id="gp2" width="11" height="11" patternUnits="userSpaceOnUse" patternTransform="matrix(0.832 -0.555 0.53 0.848 0 0)"><rect width="11" height="11" fill="#111111"/><rect width="11" height="1.2" fill="#262626"/><rect width="1.2" height="11" fill="#262626"/></pattern><clipPath id="vpclip"><rect x="525" y="213" width="1654" height="1883"/></clipPath></defs><polygon points="525,503 1165,213 1912,213 2179,467 2179,1410 1190,2056 525,985" fill="url(#gp)"/><polygon points="726,1314 1190,2056 2179,1410 2179,1314" fill="url(#gp2)"/><path d="M816,514 1642,120 2226,701 2101,1004 1334,1464 887,833Z M887,833 1608,466 2101,1004 1334,1464Z" fill="rgba(110,80,110,0.13)" fill-rule="evenodd"/><polygon points="887,833 1608,466 2101,1004 1334,1464" fill="rgba(30,70,70,0.16)"/><polygon points="1330,1208 1334,1464 2101,1004 1957,852" fill="rgba(25,55,65,0.06)"/><defs><radialGradient id="cg" cx="0.5" cy="0.5" r="0.5"><stop offset="0" stop-color="#8a8a84" stop-opacity="0.22"/><stop offset="0.6" stop-color="#6a6a66" stop-opacity="0.10"/><stop offset="1" stop-color="#555" stop-opacity="0"/></radialGradient></defs><ellipse cx="1450" cy="800" rx="190" ry="120" transform="rotate(-20 1450 800)" fill="url(#cg)"/><ellipse cx="1460" cy="630" rx="120" ry="45" transform="rotate(-15 1460 630)" fill="url(#cg)"/><path d="M1525 638h1.6v1.6h-1.6zM1306 784h1.6v1.6h-1.6zM1334 757h1.6v1.6h-1.6zM1364 825h1.6v1.6h-1.6zM1413 794h1.6v1.6h-1.6zM1452 868h1.6v1.6h-1.6zM1454 835h1.6v1.6h-1.6zM1426 651h1.6v1.6h-1.6zM1444 777h1.6v1.6h-1.6zM1401 832h1.6v1.6h-1.6zM1338 914h1.6v1.6h-1.6zM1329 778h1.6v1.6h-1.6zM1361 867h1.6v1.6h-1.6zM1427 789h1.6v1.6h-1.6zM1597 778h1.6v1.6h-1.6zM1384 752h1.6v1.6h-1.6zM1428 830h1.6v1.6h-1.6zM1459 716h1.6v1.6h-1.6zM1412 807h1.6v1.6h-1.6zM1404 789h1.6v1.6h-1.6zM1479 713h1.6v1.6h-1.6zM1270 758h1.6v1.6h-1.6zM1371 903h1.6v1.6h-1.6zM1376 828h1.6v1.6h-1.6zM1728 682h1.6v1.6h-1.6zM1467 864h1.6v1.6h-1.6zM1462 622h1.6v1.6h-1.6zM1480 805h1.6v1.6h-1.6zM1447 621h1.6v1.6h-1.6zM1438 770h1.6v1.6h-1.6zM1453 834h1.6v1.6h-1.6zM1599 637h1.6v1.6h-1.6zM1505 631h1.6v1.6h-1.6zM1427 914h1.6v1.6h-1.6zM1570 750h1.6v1.6h-1.6zM1513 794h1.6v1.6h-1.6zM1498 805h1.6v1.6h-1.6zM1484 754h1.6v1.6h-1.6zM1393 869h1.6v1.6h-1.6zM1579 702h1.6v1.6h-1.6zM1768 918h1.6v1.6h-1.6zM1443 803h1.6v1.6h-1.6zM1349 827h1.6v1.6h-1.6zM1366 893h1.6v1.6h-1.6zM1439 838h1.6v1.6h-1.6zM1448 810h1.6v1.6h-1.6zM1477 649h1.6v1.6h-1.6zM1306 827h1.6v1.6h-1.6zM1454 890h1.6v1.6h-1.6zM1395 841h1.6v1.6h-1.6zM1537 793h1.6v1.6h-1.6zM1265 853h1.6v1.6h-1.6zM1437 853h1.6v1.6h-1.6zM1431 626h1.6v1.6h-1.6zM1493 863h1.6v1.6h-1.6zM1412 836h1.6v1.6h-1.6zM1475 581h1.6v1.6h-1.6zM1353 753h1.6v1.6h-1.6zM1432 856h1.6v1.6h-1.6zM1367 686h1.6v1.6h-1.6zM1580 800h1.6v1.6h-1.6zM1389 857h1.6v1.6h-1.6zM1522 605h1.6v1.6h-1.6zM1534 727h1.6v1.6h-1.6zM1594 829h1.6v1.6h-1.6zM1470 893h1.6v1.6h-1.6zM1385 640h1.6v1.6h-1.6zM1322 914h1.6v1.6h-1.6zM1486 835h1.6v1.6h-1.6zM1473 621h1.6v1.6h-1.6zM1490 831h1.6v1.6h-1.6zM1542 816h1.6v1.6h-1.6zM1216 714h1.6v1.6h-1.6zM1405 823h1.6v1.6h-1.6zM1156 783h1.6v1.6h-1.6zM1433 797h1.6v1.6h-1.6zM1396 701h1.6v1.6h-1.6zM1265 816h1.6v1.6h-1.6zM1448 851h1.6v1.6h-1.6zM1494 646h1.6v1.6h-1.6zM1354 833h1.6v1.6h-1.6zM1580 613h1.6v1.6h-1.6zM1263 760h1.6v1.6h-1.6zM1390 830h1.6v1.6h-1.6zM1689 760h1.6v1.6h-1.6zM1508 838h1.6v1.6h-1.6zM1431 642h1.6v1.6h-1.6zM1283 812h1.6v1.6h-1.6zM1551 797h1.6v1.6h-1.6zM1360 788h1.6v1.6h-1.6zM1602 708h1.6v1.6h-1.6zM1557 677h1.6v1.6h-1.6zM1505 865h1.6v1.6h-1.6zM1396 628h1.6v1.6h-1.6zM1418 742h1.6v1.6h-1.6zM1567 602h1.6v1.6h-1.6zM1362 644h1.6v1.6h-1.6zM1446 830h1.6v1.6h-1.6zM1401 779h1.6v1.6h-1.6zM1468 766h1.6v1.6h-1.6zM1409 713h1.6v1.6h-1.6zM1359 769h1.6v1.6h-1.6zM1478 780h1.6v1.6h-1.6zM1481 738h1.6v1.6h-1.6zM1583 614h1.6v1.6h-1.6zM1594 903h1.6v1.6h-1.6zM1513 627h1.6v1.6h-1.6zM1454 842h1.6v1.6h-1.6zM1463 582h1.6v1.6h-1.6zM1443 894h1.6v1.6h-1.6zM1295 884h1.6v1.6h-1.6zM1411 831h1.6v1.6h-1.6zM1592 640h1.6v1.6h-1.6zM1482 919h1.6v1.6h-1.6zM1489 840h1.6v1.6h-1.6zM1429 840h1.6v1.6h-1.6zM1296 650h1.6v1.6h-1.6zM1483 600h1.6v1.6h-1.6zM1548 912h1.6v1.6h-1.6zM1415 658h1.6v1.6h-1.6zM1499 888h1.6v1.6h-1.6zM1517 871h1.6v1.6h-1.6zM1410 901h1.6v1.6h-1.6zM1432 901h1.6v1.6h-1.6zM1434 846h1.6v1.6h-1.6zM1371 620h1.6v1.6h-1.6zM1547 592h1.6v1.6h-1.6zM1425 857h1.6v1.6h-1.6zM1394 882h1.6v1.6h-1.6zM1477 603h1.6v1.6h-1.6zM1535 612h1.6v1.6h-1.6zM1390 827h1.6v1.6h-1.6zM1509 590h1.6v1.6h-1.6zM1430 746h1.6v1.6h-1.6zM1407 842h1.6v1.6h-1.6zM1544 856h1.6v1.6h-1.6zM1414 795h1.6v1.6h-1.6zM1371 630h1.6v1.6h-1.6zM1419 836h1.6v1.6h-1.6zM1336 766h1.6v1.6h-1.6zM1409 853h1.6v1.6h-1.6zM1449 889h1.6v1.6h-1.6zM1412 788h1.6v1.6h-1.6zM1355 854h1.6v1.6h-1.6zM1423 899h1.6v1.6h-1.6zM1567 612h1.6v1.6h-1.6zM1533 722h1.6v1.6h-1.6zM1362 946h1.6v1.6h-1.6zM1523 808h1.6v1.6h-1.6zM1427 752h1.6v1.6h-1.6zM1347 857h1.6v1.6h-1.6zM1394 806h1.6v1.6h-1.6zM1408 783h1.6v1.6h-1.6zM1633 666h1.6v1.6h-1.6zM1582 820h1.6v1.6h-1.6zM1444 826h1.6v1.6h-1.6zM1468 672h1.6v1.6h-1.6zM1479 702h1.6v1.6h-1.6zM1596 839h1.6v1.6h-1.6zM1396 794h1.6v1.6h-1.6zM1355 893h1.6v1.6h-1.6zM1447 629h1.6v1.6h-1.6zM1471 800h1.6v1.6h-1.6zM1387 758h1.6v1.6h-1.6zM1363 796h1.6v1.6h-1.6zM1488 731h1.6v1.6h-1.6zM1547 776h1.6v1.6h-1.6zM1450 835h1.6v1.6h-1.6zM1404 874h1.6v1.6h-1.6zM1482 842h1.6v1.6h-1.6zM1397 822h1.6v1.6h-1.6zM1500 661h1.6v1.6h-1.6zM1610 676h1.6v1.6h-1.6zM1362 806h1.6v1.6h-1.6zM1573 805h1.6v1.6h-1.6zM1471 908h1.6v1.6h-1.6zM1474 771h1.6v1.6h-1.6zM1632 655h1.6v1.6h-1.6zM1437 607h1.6v1.6h-1.6zM1531 867h1.6v1.6h-1.6zM1422 895h1.6v1.6h-1.6zM1447 873h1.6v1.6h-1.6zM1569 621h1.6v1.6h-1.6zM1455 629h1.6v1.6h-1.6zM1515 901h1.6v1.6h-1.6zM1350 715h1.6v1.6h-1.6zM1600 926h1.6v1.6h-1.6zM1557 679h1.6v1.6h-1.6zM1493 862h1.6v1.6h-1.6zM1492 848h1.6v1.6h-1.6zM1502 639h1.6v1.6h-1.6zM1574 892h1.6v1.6h-1.6zM1477 647h1.6v1.6h-1.6zM1342 791h1.6v1.6h-1.6zM1455 698h1.6v1.6h-1.6zM1407 869h1.6v1.6h-1.6zM1788 848h1.6v1.6h-1.6zM1277 668h1.6v1.6h-1.6zM1371 627h1.6v1.6h-1.6zM1466 810h1.6v1.6h-1.6zM1514 907h1.6v1.6h-1.6zM1402 855h1.6v1.6h-1.6zM1445 754h1.6v1.6h-1.6zM1499 728h1.6v1.6h-1.6zM1441 618h1.6v1.6h-1.6zM1422 777h1.6v1.6h-1.6zM1317 621h1.6v1.6h-1.6zM1505 647h1.6v1.6h-1.6zM1590 615h1.6v1.6h-1.6zM1435 641h1.6v1.6h-1.6zM1455 629h1.6v1.6h-1.6zM1523 590h1.6v1.6h-1.6zM1380 900h1.6v1.6h-1.6zM1241 744h1.6v1.6h-1.6zM1428 807h1.6v1.6h-1.6zM1468 830h1.6v1.6h-1.6zM1472 600h1.6v1.6h-1.6zM1472 674h1.6v1.6h-1.6zM1340 913h1.6v1.6h-1.6zM1381 844h1.6v1.6h-1.6zM1292 811h1.6v1.6h-1.6zM1514 812h1.6v1.6h-1.6zM1483 836h1.6v1.6h-1.6zM1456 638h1.6v1.6h-1.6zM1396 782h1.6v1.6h-1.6zM1656 744h1.6v1.6h-1.6zM1481 645h1.6v1.6h-1.6zM1352 881h1.6v1.6h-1.6zM1408 660h1.6v1.6h-1.6zM1429 766h1.6v1.6h-1.6zM1461 639h1.6v1.6h-1.6zM1419 866h1.6v1.6h-1.6zM1408 905h1.6v1.6h-1.6zM1309 812h1.6v1.6h-1.6zM1454 816h1.6v1.6h-1.6zM1519 631h1.6v1.6h-1.6zM1399 765h1.6v1.6h-1.6zM1500 663h1.6v1.6h-1.6zM1572 877h1.6v1.6h-1.6zM1475 831h1.6v1.6h-1.6zM1419 748h1.6v1.6h-1.6zM1443 816h1.6v1.6h-1.6zM1575 828h1.6v1.6h-1.6zM1401 810h1.6v1.6h-1.6zM1472 709h1.6v1.6h-1.6zM1532 810h1.6v1.6h-1.6zM1487 742h1.6v1.6h-1.6zM1354 842h1.6v1.6h-1.6zM1457 829h1.6v1.6h-1.6zM1771 751h1.6v1.6h-1.6zM1480 887h1.6v1.6h-1.6zM1183 922h1.6v1.6h-1.6zM1414 766h1.6v1.6h-1.6zM1485 658h1.6v1.6h-1.6zM1501 764h1.6v1.6h-1.6zM1522 891h1.6v1.6h-1.6zM1558 678h1.6v1.6h-1.6zM1385 739h1.6v1.6h-1.6zM1469 826h1.6v1.6h-1.6zM1468 719h1.6v1.6h-1.6zM1573 847h1.6v1.6h-1.6zM1513 799h1.6v1.6h-1.6zM1423 862h1.6v1.6h-1.6zM1349 793h1.6v1.6h-1.6zM1426 866h1.6v1.6h-1.6zM1547 748h1.6v1.6h-1.6zM1538 646h1.6v1.6h-1.6zM1384 789h1.6v1.6h-1.6zM1343 771h1.6v1.6h-1.6zM1604 647h1.6v1.6h-1.6zM1612 802h1.6v1.6h-1.6zM1337 905h1.6v1.6h-1.6zM1553 756h1.6v1.6h-1.6zM1404 831h1.6v1.6h-1.6zM1548 792h1.6v1.6h-1.6zM1536 606h1.6v1.6h-1.6zM1476 661h1.6v1.6h-1.6zM1251 852h1.6v1.6h-1.6zM1512 781h1.6v1.6h-1.6zM1494 883h1.6v1.6h-1.6zM1460 830h1.6v1.6h-1.6zM1345 798h1.6v1.6h-1.6zM1261 778h1.6v1.6h-1.6zM1446 838h1.6v1.6h-1.6zM1520 605h1.6v1.6h-1.6zM1372 875h1.6v1.6h-1.6zM1338 803h1.6v1.6h-1.6zM1599 857h1.6v1.6h-1.6zM1567 752h1.6v1.6h-1.6zM1461 845h1.6v1.6h-1.6zM1512 872h1.6v1.6h-1.6zM1369 847h1.6v1.6h-1.6zM1526 776h1.6v1.6h-1.6zM1633 860h1.6v1.6h-1.6zM1494 792h1.6v1.6h-1.6zM1541 822h1.6v1.6h-1.6zM1537 782h1.6v1.6h-1.6zM1391 785h1.6v1.6h-1.6zM1581 618h1.6v1.6h-1.6zM1644 805h1.6v1.6h-1.6zM1631 608h1.6v1.6h-1.6zM1445 851h1.6v1.6h-1.6zM1453 812h1.6v1.6h-1.6zM1310 810h1.6v1.6h-1.6zM1485 772h1.6v1.6h-1.6zM1537 785h1.6v1.6h-1.6zM1206 835h1.6v1.6h-1.6zM1409 618h1.6v1.6h-1.6zM1621 923h1.6v1.6h-1.6zM1381 829h1.6v1.6h-1.6zM1399 855h1.6v1.6h-1.6zM1432 626h1.6v1.6h-1.6zM1513 768h1.6v1.6h-1.6zM1335 810h1.6v1.6h-1.6zM1591 745h1.6v1.6h-1.6zM1397 839h1.6v1.6h-1.6zM1407 646h1.6v1.6h-1.6zM1525 639h1.6v1.6h-1.6zM1555 869h1.6v1.6h-1.6zM1334 814h1.6v1.6h-1.6zM1552 941h1.6v1.6h-1.6zM1417 871h1.6v1.6h-1.6zM1406 853h1.6v1.6h-1.6zM1446 626h1.6v1.6h-1.6zM1362 830h1.6v1.6h-1.6zM1446 619h1.6v1.6h-1.6zM1474 718h1.6v1.6h-1.6zM1320 662h1.6v1.6h-1.6zM1410 645h1.6v1.6h-1.6zM1440 854h1.6v1.6h-1.6zM1425 741h1.6v1.6h-1.6zM1431 842h1.6v1.6h-1.6zM1421 765h1.6v1.6h-1.6zM1263 864h1.6v1.6h-1.6zM1370 759h1.6v1.6h-1.6zM1417 777h1.6v1.6h-1.6zM1403 741h1.6v1.6h-1.6zM1449 645h1.6v1.6h-1.6zM1535 671h1.6v1.6h-1.6zM1436 737h1.6v1.6h-1.6zM1466 898h1.6v1.6h-1.6zM1344 847h1.6v1.6h-1.6zM1609 645h1.6v1.6h-1.6zM1576 639h1.6v1.6h-1.6zM1369 792h1.6v1.6h-1.6zM1458 665h1.6v1.6h-1.6zM1503 899h1.6v1.6h-1.6zM1489 833h1.6v1.6h-1.6zM1535 826h1.6v1.6h-1.6zM1571 645h1.6v1.6h-1.6zM1330 804h1.6v1.6h-1.6zM1477 973h1.6v1.6h-1.6zM1488 830h1.6v1.6h-1.6zM1502 653h1.6v1.6h-1.6zM1294 892h1.6v1.6h-1.6zM1495 900h1.6v1.6h-1.6zM1365 837h1.6v1.6h-1.6zM1695 908h1.6v1.6h-1.6zM1506 822h1.6v1.6h-1.6zM1573 630h1.6v1.6h-1.6zM1386 878h1.6v1.6h-1.6zM1141 817h1.6v1.6h-1.6zM1483 881h1.6v1.6h-1.6zM1501 763h1.6v1.6h-1.6zM1430 789h1.6v1.6h-1.6zM1442 660h1.6v1.6h-1.6zM1533 629h1.6v1.6h-1.6zM1384 737h1.6v1.6h-1.6zM1487 894h1.6v1.6h-1.6zM1281 804h1.6v1.6h-1.6zM1466 624h1.6v1.6h-1.6zM1531 617h1.6v1.6h-1.6zM1684 683h1.6v1.6h-1.6zM1623 742h1.6v1.6h-1.6zM1412 723h1.6v1.6h-1.6zM1500 664h1.6v1.6h-1.6zM1204 757h1.6v1.6h-1.6zM1518 875h1.6v1.6h-1.6zM1429 888h1.6v1.6h-1.6zM1479 714h1.6v1.6h-1.6zM1372 865h1.6v1.6h-1.6zM1492 869h1.6v1.6h-1.6zM1393 886h1.6v1.6h-1.6zM1464 763h1.6v1.6h-1.6zM1531 837h1.6v1.6h-1.6zM1511 643h1.6v1.6h-1.6zM1606 743h1.6v1.6h-1.6zM1477 754h1.6v1.6h-1.6zM1540 791h1.6v1.6h-1.6zM1447 896h1.6v1.6h-1.6zM1478 652h1.6v1.6h-1.6zM1465 765h1.6v1.6h-1.6zM1410 804h1.6v1.6h-1.6zM1171 831h1.6v1.6h-1.6zM1476 913h1.6v1.6h-1.6zM1332 729h1.6v1.6h-1.6zM1430 649h1.6v1.6h-1.6zM1307 869h1.6v1.6h-1.6zM1461 898h1.6v1.6h-1.6zM1422 867h1.6v1.6h-1.6zM1561 641h1.6v1.6h-1.6zM1178 787h1.6v1.6h-1.6zM1467 721h1.6v1.6h-1.6zM1369 805h1.6v1.6h-1.6zM1435 822h1.6v1.6h-1.6zM1534 598h1.6v1.6h-1.6zM1517 663h1.6v1.6h-1.6zM1513 612h1.6v1.6h-1.6zM1399 815h1.6v1.6h-1.6zM1464 644h1.6v1.6h-1.6zM1506 596h1.6v1.6h-1.6zM1460 670h1.6v1.6h-1.6zM1404 789h1.6v1.6h-1.6zM1493 718h1.6v1.6h-1.6zM1507 857h1.6v1.6h-1.6zM1352 940h1.6v1.6h-1.6zM1498 764h1.6v1.6h-1.6zM1397 726h1.6v1.6h-1.6zM1436 779h1.6v1.6h-1.6zM1514 948h1.6v1.6h-1.6zM1555 909h1.6v1.6h-1.6zM1455 832h1.6v1.6h-1.6zM1475 648h1.6v1.6h-1.6zM1468 627h1.6v1.6h-1.6zM1530 703h1.6v1.6h-1.6zM1414 881h1.6v1.6h-1.6zM1339 728h1.6v1.6h-1.6zM1435 803h1.6v1.6h-1.6zM1478 774h1.6v1.6h-1.6zM1354 903h1.6v1.6h-1.6zM1436 699h1.6v1.6h-1.6zM1450 886h1.6v1.6h-1.6zM1478 608h1.6v1.6h-1.6zM1386 656h1.6v1.6h-1.6zM1474 880h1.6v1.6h-1.6zM1465 663h1.6v1.6h-1.6zM1498 836h1.6v1.6h-1.6zM1394 766h1.6v1.6h-1.6zM1289 763h1.6v1.6h-1.6zM1354 773h1.6v1.6h-1.6zM1458 835h1.6v1.6h-1.6zM1478 844h1.6v1.6h-1.6zM1438 889h1.6v1.6h-1.6zM1363 790h1.6v1.6h-1.6zM1467 832h1.6v1.6h-1.6zM1370 857h1.6v1.6h-1.6zM1451 876h1.6v1.6h-1.6zM1515 623h1.6v1.6h-1.6zM1373 717h1.6v1.6h-1.6zM1542 799h1.6v1.6h-1.6zM1564 794h1.6v1.6h-1.6zM1431 620h1.6v1.6h-1.6zM1495 613h1.6v1.6h-1.6zM1334 897h1.6v1.6h-1.6zM1622 726h1.6v1.6h-1.6zM1436 848h1.6v1.6h-1.6zM1368 847h1.6v1.6h-1.6zM1444 756h1.6v1.6h-1.6zM1536 632h1.6v1.6h-1.6zM1415 785h1.6v1.6h-1.6zM1403 802h1.6v1.6h-1.6zM1424 723h1.6v1.6h-1.6zM1381 812h1.6v1.6h-1.6zM1552 697h1.6v1.6h-1.6zM1481 880h1.6v1.6h-1.6zM1459 792h1.6v1.6h-1.6zM1391 929h1.6v1.6h-1.6zM1403 879h1.6v1.6h-1.6zM1564 739h1.6v1.6h-1.6zM1405 774h1.6v1.6h-1.6zM1547 876h1.6v1.6h-1.6zM1487 827h1.6v1.6h-1.6zM1423 820h1.6v1.6h-1.6zM1485 848h1.6v1.6h-1.6zM1557 810h1.6v1.6h-1.6zM1426 663h1.6v1.6h-1.6zM1591 652h1.6v1.6h-1.6zM1421 904h1.6v1.6h-1.6zM1532 895h1.6v1.6h-1.6zM1537 626h1.6v1.6h-1.6zM1422 832h1.6v1.6h-1.6zM1436 743h1.6v1.6h-1.6zM1471 666h1.6v1.6h-1.6zM1482 860h1.6v1.6h-1.6zM1531 809h1.6v1.6h-1.6zM1516 807h1.6v1.6h-1.6zM1529 796h1.6v1.6h-1.6zM1407 832h1.6v1.6h-1.6zM1518 822h1.6v1.6h-1.6zM1438 738h1.6v1.6h-1.6zM1552 728h1.6v1.6h-1.6zM1397 809h1.6v1.6h-1.6zM1480 653h1.6v1.6h-1.6zM1535 845h1.6v1.6h-1.6zM1567 851h1.6v1.6h-1.6zM1652 832h1.6v1.6h-1.6zM1407 877h1.6v1.6h-1.6zM1435 814h1.6v1.6h-1.6zM1494 661h1.6v1.6h-1.6zM1354 770h1.6v1.6h-1.6zM1445 804h1.6v1.6h-1.6zM1523 751h1.6v1.6h-1.6zM1484 806h1.6v1.6h-1.6zM1464 805h1.6v1.6h-1.6zM1435 654h1.6v1.6h-1.6zM1387 872h1.6v1.6h-1.6zM1518 813h1.6v1.6h-1.6zM1435 624h1.6v1.6h-1.6zM1612 788h1.6v1.6h-1.6zM1603 760h1.6v1.6h-1.6zM1503 631h1.6v1.6h-1.6zM1400 794h1.6v1.6h-1.6zM1383 614h1.6v1.6h-1.6zM1341 861h1.6v1.6h-1.6zM1451 800h1.6v1.6h-1.6zM1412 864h1.6v1.6h-1.6zM1568 833h1.6v1.6h-1.6zM1455 630h1.6v1.6h-1.6zM1380 841h1.6v1.6h-1.6zM1422 874h1.6v1.6h-1.6zM1535 628h1.6v1.6h-1.6zM1403 898h1.6v1.6h-1.6zM1497 643h1.6v1.6h-1.6zM1615 637h1.6v1.6h-1.6zM1399 638h1.6v1.6h-1.6zM1480 629h1.6v1.6h-1.6zM1329 946h1.6v1.6h-1.6zM1368 613h1.6v1.6h-1.6zM1297 749h1.6v1.6h-1.6zM1400 849h1.6v1.6h-1.6zM1391 796h1.6v1.6h-1.6zM1209 782h1.6v1.6h-1.6zM1384 808h1.6v1.6h-1.6zM1480 854h1.6v1.6h-1.6zM1346 921h1.6v1.6h-1.6zM1246 944h1.6v1.6h-1.6zM1368 827h1.6v1.6h-1.6zM1479 835h1.6v1.6h-1.6zM1425 773h1.6v1.6h-1.6zM1362 817h1.6v1.6h-1.6zM1341 800h1.6v1.6h-1.6zM1414 678h1.6v1.6h-1.6zM1439 858h1.6v1.6h-1.6zM1485 845h1.6v1.6h-1.6zM1423 634h1.6v1.6h-1.6zM1524 877h1.6v1.6h-1.6zM1543 843h1.6v1.6h-1.6zM1525 829h1.6v1.6h-1.6zM1461 736h1.6v1.6h-1.6zM1505 721h1.6v1.6h-1.6zM1493 609h1.6v1.6h-1.6zM1340 813h1.6v1.6h-1.6zM1300 758h1.6v1.6h-1.6zM1032 862h1.6v1.6h-1.6zM1670 818h1.6v1.6h-1.6zM1410 712h1.6v1.6h-1.6zM1419 859h1.6v1.6h-1.6zM1428 614h1.6v1.6h-1.6zM1578 762h1.6v1.6h-1.6zM1409 718h1.6v1.6h-1.6zM1434 748h1.6v1.6h-1.6zM1648 825h1.6v1.6h-1.6zM1475 737h1.6v1.6h-1.6zM1399 907h1.6v1.6h-1.6zM1360 737h1.6v1.6h-1.6zM1358 642h1.6v1.6h-1.6zM1489 689h1.6v1.6h-1.6zM1405 816h1.6v1.6h-1.6zM1531 643h1.6v1.6h-1.6zM1304 806h1.6v1.6h-1.6zM1421 917h1.6v1.6h-1.6zM1496 876h1.6v1.6h-1.6zM1496 706h1.6v1.6h-1.6zM1557 911h1.6v1.6h-1.6zM1579 806h1.6v1.6h-1.6zM1371 738h1.6v1.6h-1.6zM1543 898h1.6v1.6h-1.6zM1479 825h1.6v1.6h-1.6zM1440 845h1.6v1.6h-1.6zM1288 652h1.6v1.6h-1.6zM1366 881h1.6v1.6h-1.6zM1330 884h1.6v1.6h-1.6zM1434 719h1.6v1.6h-1.6zM1546 626h1.6v1.6h-1.6zM1322 707h1.6v1.6h-1.6zM1356 840h1.6v1.6h-1.6zM1311 788h1.6v1.6h-1.6zM1383 709h1.6v1.6h-1.6zM1487 632h1.6v1.6h-1.6zM1316 644h1.6v1.6h-1.6zM1428 878h1.6v1.6h-1.6zM1472 752h1.6v1.6h-1.6zM1420 931h1.6v1.6h-1.6zM1525 853h1.6v1.6h-1.6zM1401 807h1.6v1.6h-1.6zM1322 654h1.6v1.6h-1.6zM1442 811h1.6v1.6h-1.6zM1359 716h1.6v1.6h-1.6zM1410 799h1.6v1.6h-1.6zM1255 647h1.6v1.6h-1.6zM1464 730h1.6v1.6h-1.6zM1500 883h1.6v1.6h-1.6zM1454 658h1.6v1.6h-1.6zM1486 888h1.6v1.6h-1.6zM1516 633h1.6v1.6h-1.6zM1595 790h1.6v1.6h-1.6zM1524 658h1.6v1.6h-1.6zM1429 676h1.6v1.6h-1.6zM1527 822h1.6v1.6h-1.6zM1540 749h1.6v1.6h-1.6zM1297 592h1.6v1.6h-1.6zM1398 774h1.6v1.6h-1.6zM1570 649h1.6v1.6h-1.6zM1096 650h1.6v1.6h-1.6zM1403 897h1.6v1.6h-1.6zM1466 643h1.6v1.6h-1.6zM1515 772h1.6v1.6h-1.6zM1336 957h1.6v1.6h-1.6zM1514 650h1.6v1.6h-1.6zM1552 784h1.6v1.6h-1.6zM1511 615h1.6v1.6h-1.6zM1461 777h1.6v1.6h-1.6zM1576 793h1.6v1.6h-1.6zM1450 624h1.6v1.6h-1.6zM1434 836h1.6v1.6h-1.6zM1432 804h1.6v1.6h-1.6zM1385 859h1.6v1.6h-1.6zM1386 823h1.6v1.6h-1.6zM1389 795h1.6v1.6h-1.6zM1353 866h1.6v1.6h-1.6zM1542 820h1.6v1.6h-1.6zM1542 649h1.6v1.6h-1.6zM1538 896h1.6v1.6h-1.6zM1514 894h1.6v1.6h-1.6zM1148 848h1.6v1.6h-1.6zM1516 717h1.6v1.6h-1.6zM1454 636h1.6v1.6h-1.6zM1471 646h1.6v1.6h-1.6zM1406 872h1.6v1.6h-1.6zM1425 878h1.6v1.6h-1.6zM1510 783h1.6v1.6h-1.6zM1453 806h1.6v1.6h-1.6zM1498 864h1.6v1.6h-1.6zM1361 912h1.6v1.6h-1.6zM1456 838h1.6v1.6h-1.6zM1402 720h1.6v1.6h-1.6zM1391 848h1.6v1.6h-1.6zM1359 859h1.6v1.6h-1.6zM1590 734h1.6v1.6h-1.6zM1439 806h1.6v1.6h-1.6zM1310 900h1.6v1.6h-1.6zM1513 836h1.6v1.6h-1.6zM1366 856h1.6v1.6h-1.6zM1429 883h1.6v1.6h-1.6zM1259 799h1.6v1.6h-1.6zM1635 741h1.6v1.6h-1.6zM1513 735h1.6v1.6h-1.6zM1470 821h1.6v1.6h-1.6zM1426 793h1.6v1.6h-1.6zM1408 789h1.6v1.6h-1.6zM1416 636h1.6v1.6h-1.6zM1177 831h1.6v1.6h-1.6zM1513 782h1.6v1.6h-1.6zM1431 748h1.6v1.6h-1.6zM1504 758h1.6v1.6h-1.6zM1552 796h1.6v1.6h-1.6zM1434 779h1.6v1.6h-1.6zM1304 914h1.6v1.6h-1.6zM1368 875h1.6v1.6h-1.6zM1384 875h1.6v1.6h-1.6zM1342 608h1.6v1.6h-1.6zM1442 819h1.6v1.6h-1.6zM1324 907h1.6v1.6h-1.6zM1318 853h1.6v1.6h-1.6zM1469 790h1.6v1.6h-1.6zM1477 751h1.6v1.6h-1.6zM1401 801h1.6v1.6h-1.6zM1356 646h1.6v1.6h-1.6zM1466 665h1.6v1.6h-1.6zM1472 835h1.6v1.6h-1.6zM1378 871h1.6v1.6h-1.6zM1436 711h1.6v1.6h-1.6zM1548 879h1.6v1.6h-1.6zM1380 658h1.6v1.6h-1.6zM1512 795h1.6v1.6h-1.6zM1420 710h1.6v1.6h-1.6zM1347 612h1.6v1.6h-1.6zM1406 687h1.6v1.6h-1.6zM1568 865h1.6v1.6h-1.6zM1400 819h1.6v1.6h-1.6zM1480 623h1.6v1.6h-1.6zM1459 643h1.6v1.6h-1.6zM1327 795h1.6v1.6h-1.6zM1408 835h1.6v1.6h-1.6zM1628 602h1.6v1.6h-1.6zM1435 895h1.6v1.6h-1.6zM1535 737h1.6v1.6h-1.6zM1401 892h1.6v1.6h-1.6zM1488 846h1.6v1.6h-1.6zM1490 812h1.6v1.6h-1.6zM1388 878h1.6v1.6h-1.6zM1448 886h1.6v1.6h-1.6zM1467 821h1.6v1.6h-1.6zM1389 917h1.6v1.6h-1.6zM1477 628h1.6v1.6h-1.6zM1622 806h1.6v1.6h-1.6zM1421 845h1.6v1.6h-1.6zM1245 741h1.6v1.6h-1.6zM1403 735h1.6v1.6h-1.6zM1597 622h1.6v1.6h-1.6zM1503 846h1.6v1.6h-1.6zM1409 772h1.6v1.6h-1.6zM1520 794h1.6v1.6h-1.6zM1597 786h1.6v1.6h-1.6zM1471 919h1.6v1.6h-1.6zM1431 817h1.6v1.6h-1.6zM1468 893h1.6v1.6h-1.6zM1387 761h1.6v1.6h-1.6zM1521 775h1.6v1.6h-1.6zM1479 816h1.6v1.6h-1.6zM1469 652h1.6v1.6h-1.6zM1548 656h1.6v1.6h-1.6zM1477 891h1.6v1.6h-1.6zM1423 646h1.6v1.6h-1.6zM1357 741h1.6v1.6h-1.6zM1367 824h1.6v1.6h-1.6zM1513 754h1.6v1.6h-1.6zM1481 629h1.6v1.6h-1.6zM1296 831h1.6v1.6h-1.6zM1416 644h1.6v1.6h-1.6zM1309 874h1.6v1.6h-1.6zM1474 857h1.6v1.6h-1.6zM1364 842h1.6v1.6h-1.6zM1482 881h1.6v1.6h-1.6zM1514 808h1.6v1.6h-1.6zM1604 823h1.6v1.6h-1.6zM1525 707h1.6v1.6h-1.6zM1356 842h1.6v1.6h-1.6zM1447 860h1.6v1.6h-1.6zM1493 780h1.6v1.6h-1.6zM1471 736h1.6v1.6h-1.6zM1576 600h1.6v1.6h-1.6zM1409 770h1.6v1.6h-1.6zM1363 876h1.6v1.6h-1.6zM1538 665h1.6v1.6h-1.6zM1475 756h1.6v1.6h-1.6zM1530 732h1.6v1.6h-1.6zM1332 819h1.6v1.6h-1.6zM1410 747h1.6v1.6h-1.6zM1400 857h1.6v1.6h-1.6zM1565 619h1.6v1.6h-1.6zM1563 610h1.6v1.6h-1.6zM1443 824h1.6v1.6h-1.6zM1493 780h1.6v1.6h-1.6zM1451 609h1.6v1.6h-1.6zM1329 759h1.6v1.6h-1.6zM1416 710h1.6v1.6h-1.6zM1515 770h1.6v1.6h-1.6zM1442 874h1.6v1.6h-1.6zM1408 705h1.6v1.6h-1.6zM1547 788h1.6v1.6h-1.6zM1431 803h1.6v1.6h-1.6zM1465 902h1.6v1.6h-1.6zM1290 859h1.6v1.6h-1.6zM1427 644h1.6v1.6h-1.6zM1359 810h1.6v1.6h-1.6zM1544 924h1.6v1.6h-1.6zM1593 841h1.6v1.6h-1.6zM1322 866h1.6v1.6h-1.6zM1476 827h1.6v1.6h-1.6zM1449 834h1.6v1.6h-1.6zM1500 876h1.6v1.6h-1.6zM1520 830h1.6v1.6h-1.6zM1451 756h1.6v1.6h-1.6zM1466 924h1.6v1.6h-1.6zM1359 898h1.6v1.6h-1.6zM1523 690h1.6v1.6h-1.6zM1490 650h1.6v1.6h-1.6zM1331 964h1.6v1.6h-1.6zM1420 827h1.6v1.6h-1.6zM1349 884h1.6v1.6h-1.6zM1451 750h1.6v1.6h-1.6zM1411 736h1.6v1.6h-1.6zM1541 762h1.6v1.6h-1.6zM1369 847h1.6v1.6h-1.6zM1326 807h1.6v1.6h-1.6zM1430 827h1.6v1.6h-1.6zM1344 782h1.6v1.6h-1.6zM1512 785h1.6v1.6h-1.6zM1433 668h1.6v1.6h-1.6zM1504 640h1.6v1.6h-1.6zM1414 754h1.6v1.6h-1.6zM1438 841h1.6v1.6h-1.6zM1443 812h1.6v1.6h-1.6zM1394 776h1.6v1.6h-1.6zM1411 882h1.6v1.6h-1.6zM1450 836h1.6v1.6h-1.6zM1444 631h1.6v1.6h-1.6zM1394 908h1.6v1.6h-1.6zM1521 781h1.6v1.6h-1.6zM1361 763h1.6v1.6h-1.6zM1456 908h1.6v1.6h-1.6zM1547 747h1.6v1.6h-1.6zM1410 854h1.6v1.6h-1.6zM1449 828h1.6v1.6h-1.6zM1560 758h1.6v1.6h-1.6zM1451 815h1.6v1.6h-1.6zM1321 889h1.6v1.6h-1.6zM1521 807h1.6v1.6h-1.6zM1497 840h1.6v1.6h-1.6zM1472 628h1.6v1.6h-1.6zM1406 798h1.6v1.6h-1.6zM1421 896h1.6v1.6h-1.6zM1522 633h1.6v1.6h-1.6zM1574 844h1.6v1.6h-1.6zM1341 825h1.6v1.6h-1.6zM1386 821h1.6v1.6h-1.6zM1452 610h1.6v1.6h-1.6zM1537 775h1.6v1.6h-1.6zM1494 915h1.6v1.6h-1.6zM1412 801h1.6v1.6h-1.6zM1400 646h1.6v1.6h-1.6zM1354 896h1.6v1.6h-1.6zM1407 769h1.6v1.6h-1.6zM1500 780h1.6v1.6h-1.6zM1472 856h1.6v1.6h-1.6zM1235 877h1.6v1.6h-1.6zM1465 726h1.6v1.6h-1.6zM1467 743h1.6v1.6h-1.6zM1487 689h1.6v1.6h-1.6zM1601 589h1.6v1.6h-1.6zM1403 802h1.6v1.6h-1.6zM1328 649h1.6v1.6h-1.6zM1462 890h1.6v1.6h-1.6zM1448 619h1.6v1.6h-1.6zM1414 727h1.6v1.6h-1.6zM1486 622h1.6v1.6h-1.6zM1446 702h1.6v1.6h-1.6zM1576 891h1.6v1.6h-1.6zM1398 867h1.6v1.6h-1.6zM1377 798h1.6v1.6h-1.6zM1367 839h1.6v1.6h-1.6zM1560 828h1.6v1.6h-1.6zM1461 836h1.6v1.6h-1.6zM1367 807h1.6v1.6h-1.6zM1518 807h1.6v1.6h-1.6zM1417 881h1.6v1.6h-1.6zM1405 873h1.6v1.6h-1.6zM1279 776h1.6v1.6h-1.6zM1421 837h1.6v1.6h-1.6zM1386 849h1.6v1.6h-1.6zM1339 829h1.6v1.6h-1.6zM1347 724h1.6v1.6h-1.6zM1396 656h1.6v1.6h-1.6zM1533 643h1.6v1.6h-1.6zM1578 623h1.6v1.6h-1.6zM1371 700h1.6v1.6h-1.6zM1321 835h1.6v1.6h-1.6zM1601 814h1.6v1.6h-1.6zM1422 787h1.6v1.6h-1.6zM1556 852h1.6v1.6h-1.6zM1392 885h1.6v1.6h-1.6zM1349 835h1.6v1.6h-1.6zM1601 912h1.6v1.6h-1.6zM1458 796h1.6v1.6h-1.6zM1535 664h1.6v1.6h-1.6zM1505 857h1.6v1.6h-1.6zM1614 840h1.6v1.6h-1.6zM1496 657h1.6v1.6h-1.6zM1341 833h1.6v1.6h-1.6zM1598 622h1.6v1.6h-1.6zM1266 790h1.6v1.6h-1.6zM1539 620h1.6v1.6h-1.6zM1478 773h1.6v1.6h-1.6zM1365 686h1.6v1.6h-1.6zM1536 748h1.6v1.6h-1.6zM1481 615h1.6v1.6h-1.6zM1472 843h1.6v1.6h-1.6zM1454 755h1.6v1.6h-1.6zM1367 871h1.6v1.6h-1.6zM1499 625h1.6v1.6h-1.6zM1434 788h1.6v1.6h-1.6zM1516 828h1.6v1.6h-1.6zM1407 714h1.6v1.6h-1.6zM1427 614h1.6v1.6h-1.6zM1354 836h1.6v1.6h-1.6zM1374 885h1.6v1.6h-1.6zM1500 626h1.6v1.6h-1.6zM1421 775h1.6v1.6h-1.6zM1369 845h1.6v1.6h-1.6zM1425 722h1.6v1.6h-1.6zM1474 826h1.6v1.6h-1.6zM1527 835h1.6v1.6h-1.6zM1269 853h1.6v1.6h-1.6zM1369 795h1.6v1.6h-1.6zM1250 862h1.6v1.6h-1.6zM1300 906h1.6v1.6h-1.6zM1442 802h1.6v1.6h-1.6zM1435 902h1.6v1.6h-1.6zM1305 891h1.6v1.6h-1.6zM1517 676h1.6v1.6h-1.6zM1365 817h1.6v1.6h-1.6zM1429 767h1.6v1.6h-1.6zM1449 720h1.6v1.6h-1.6zM1806 898h1.6v1.6h-1.6zM1336 694h1.6v1.6h-1.6zM1409 767h1.6v1.6h-1.6zM1362 778h1.6v1.6h-1.6zM1387 647h1.6v1.6h-1.6zM1562 757h1.6v1.6h-1.6zM1323 777h1.6v1.6h-1.6zM1268 626h1.6v1.6h-1.6zM1361 722h1.6v1.6h-1.6zM1429 795h1.6v1.6h-1.6zM1512 778h1.6v1.6h-1.6zM1551 822h1.6v1.6h-1.6zM1523 854h1.6v1.6h-1.6zM1429 650h1.6v1.6h-1.6zM1392 866h1.6v1.6h-1.6zM1354 606h1.6v1.6h-1.6zM1359 756h1.6v1.6h-1.6zM1507 659h1.6v1.6h-1.6zM1564 706h1.6v1.6h-1.6zM1346 796h1.6v1.6h-1.6zM1533 617h1.6v1.6h-1.6zM1397 847h1.6v1.6h-1.6zM1431 854h1.6v1.6h-1.6zM1333 848h1.6v1.6h-1.6zM1264 628h1.6v1.6h-1.6zM1386 767h1.6v1.6h-1.6zM1439 653h1.6v1.6h-1.6zM1423 894h1.6v1.6h-1.6zM1528 844h1.6v1.6h-1.6zM1400 838h1.6v1.6h-1.6zM1464 786h1.6v1.6h-1.6zM1434 892h1.6v1.6h-1.6zM1484 783h1.6v1.6h-1.6zM1589 615h1.6v1.6h-1.6zM1462 817h1.6v1.6h-1.6zM1571 797h1.6v1.6h-1.6zM1324 818h1.6v1.6h-1.6zM1475 647h1.6v1.6h-1.6zM1523 828h1.6v1.6h-1.6zM1433 620h1.6v1.6h-1.6zM1404 856h1.6v1.6h-1.6zM1289 831h1.6v1.6h-1.6zM1518 793h1.6v1.6h-1.6zM1400 658h1.6v1.6h-1.6zM1402 690h1.6v1.6h-1.6zM1446 794h1.6v1.6h-1.6zM1785 730h1.6v1.6h-1.6zM1419 852h1.6v1.6h-1.6zM1339 798h1.6v1.6h-1.6zM1598 592h1.6v1.6h-1.6zM1273 906h1.6v1.6h-1.6zM1468 840h1.6v1.6h-1.6zM1314 855h1.6v1.6h-1.6zM1338 852h1.6v1.6h-1.6zM1491 749h1.6v1.6h-1.6zM1393 778h1.6v1.6h-1.6zM1253 840h1.6v1.6h-1.6zM1435 962h1.6v1.6h-1.6zM1507 901h1.6v1.6h-1.6zM1391 837h1.6v1.6h-1.6zM1258 923h1.6v1.6h-1.6zM1509 911h1.6v1.6h-1.6zM1436 731h1.6v1.6h-1.6zM1320 836h1.6v1.6h-1.6zM1401 803h1.6v1.6h-1.6zM1634 781h1.6v1.6h-1.6zM1316 913h1.6v1.6h-1.6zM1375 787h1.6v1.6h-1.6zM1564 664h1.6v1.6h-1.6zM1308 802h1.6v1.6h-1.6zM1617 774h1.6v1.6h-1.6zM1492 680h1.6v1.6h-1.6zM1409 842h1.6v1.6h-1.6zM1600 892h1.6v1.6h-1.6zM1479 764h1.6v1.6h-1.6zM1413 770h1.6v1.6h-1.6zM1413 815h1.6v1.6h-1.6zM1525 631h1.6v1.6h-1.6zM1515 841h1.6v1.6h-1.6zM1485 734h1.6v1.6h-1.6zM1301 895h1.6v1.6h-1.6zM1689 813h1.6v1.6h-1.6zM1622 622h1.6v1.6h-1.6zM1464 929h1.6v1.6h-1.6zM1564 790h1.6v1.6h-1.6zM1430 827h1.6v1.6h-1.6zM1486 623h1.6v1.6h-1.6zM1388 798h1.6v1.6h-1.6zM1536 904h1.6v1.6h-1.6zM1198 758h1.6v1.6h-1.6zM1475 884h1.6v1.6h-1.6zM1347 757h1.6v1.6h-1.6zM1458 631h1.6v1.6h-1.6zM1379 931h1.6v1.6h-1.6zM1435 864h1.6v1.6h-1.6zM1347 860h1.6v1.6h-1.6zM1460 903h1.6v1.6h-1.6zM1505 620h1.6v1.6h-1.6zM1356 893h1.6v1.6h-1.6zM1403 821h1.6v1.6h-1.6zM1590 628h1.6v1.6h-1.6zM1382 928h1.6v1.6h-1.6zM1429 828h1.6v1.6h-1.6zM1385 905h1.6v1.6h-1.6zM1361 842h1.6v1.6h-1.6zM1604 646h1.6v1.6h-1.6zM1431 850h1.6v1.6h-1.6zM1399 607h1.6v1.6h-1.6zM1566 864h1.6v1.6h-1.6zM1426 823h1.6v1.6h-1.6zM1692 688h1.6v1.6h-1.6zM1318 865h1.6v1.6h-1.6zM1345 825h1.6v1.6h-1.6zM1373 836h1.6v1.6h-1.6zM1521 842h1.6v1.6h-1.6zM1493 639h1.6v1.6h-1.6zM1462 676h1.6v1.6h-1.6zM1304 886h1.6v1.6h-1.6zM1399 744h1.6v1.6h-1.6zM1499 859h1.6v1.6h-1.6zM1570 929h1.6v1.6h-1.6zM1262 855h1.6v1.6h-1.6zM1424 615h1.6v1.6h-1.6zM1486 862h1.6v1.6h-1.6zM1389 749h1.6v1.6h-1.6zM1452 684h1.6v1.6h-1.6zM1433 803h1.6v1.6h-1.6zM1464 870h1.6v1.6h-1.6zM1477 862h1.6v1.6h-1.6zM1493 813h1.6v1.6h-1.6zM1442 811h1.6v1.6h-1.6zM1525 772h1.6v1.6h-1.6zM1460 813h1.6v1.6h-1.6zM1515 630h1.6v1.6h-1.6zM1381 757h1.6v1.6h-1.6zM1422 852h1.6v1.6h-1.6zM1460 927h1.6v1.6h-1.6zM1411 613h1.6v1.6h-1.6zM1421 795h1.6v1.6h-1.6zM1478 886h1.6v1.6h-1.6zM1309 889h1.6v1.6h-1.6zM1379 765h1.6v1.6h-1.6zM1443 848h1.6v1.6h-1.6zM1464 858h1.6v1.6h-1.6zM1332 853h1.6v1.6h-1.6zM1282 861h1.6v1.6h-1.6zM1432 795h1.6v1.6h-1.6zM1351 805h1.6v1.6h-1.6zM1247 778h1.6v1.6h-1.6zM1548 845h1.6v1.6h-1.6zM1447 884h1.6v1.6h-1.6zM1560 898h1.6v1.6h-1.6zM1357 892h1.6v1.6h-1.6zM1116 861h1.6v1.6h-1.6zM1482 853h1.6v1.6h-1.6zM1583 735h1.6v1.6h-1.6zM1367 926h1.6v1.6h-1.6zM1433 663h1.6v1.6h-1.6zM1377 864h1.6v1.6h-1.6zM1485 812h1.6v1.6h-1.6zM1431 640h1.6v1.6h-1.6zM1478 803h1.6v1.6h-1.6zM1491 619h1.6v1.6h-1.6zM1568 793h1.6v1.6h-1.6zM1445 856h1.6v1.6h-1.6zM1627 879h1.6v1.6h-1.6zM1479 909h1.6v1.6h-1.6zM1284 807h1.6v1.6h-1.6zM1418 890h1.6v1.6h-1.6zM1524 752h1.6v1.6h-1.6zM1478 800h1.6v1.6h-1.6zM1361 809h1.6v1.6h-1.6zM1518 631h1.6v1.6h-1.6zM1447 830h1.6v1.6h-1.6zM1363 750h1.6v1.6h-1.6zM1434 697h1.6v1.6h-1.6zM1465 760h1.6v1.6h-1.6zM1439 829h1.6v1.6h-1.6zM1476 849h1.6v1.6h-1.6zM1417 636h1.6v1.6h-1.6zM1490 646h1.6v1.6h-1.6zM1441 864h1.6v1.6h-1.6zM1402 728h1.6v1.6h-1.6zM1595 656h1.6v1.6h-1.6zM1382 706h1.6v1.6h-1.6zM1514 808h1.6v1.6h-1.6zM1417 660h1.6v1.6h-1.6zM1580 791h1.6v1.6h-1.6zM1418 906h1.6v1.6h-1.6zM1429 882h1.6v1.6h-1.6zM1350 844h1.6v1.6h-1.6zM1475 622h1.6v1.6h-1.6zM1467 871h1.6v1.6h-1.6zM1446 857h1.6v1.6h-1.6zM1368 667h1.6v1.6h-1.6zM1297 868h1.6v1.6h-1.6zM1454 734h1.6v1.6h-1.6zM1438 671h1.6v1.6h-1.6zM1454 644h1.6v1.6h-1.6zM1468 628h1.6v1.6h-1.6zM1445 746h1.6v1.6h-1.6zM1505 620h1.6v1.6h-1.6zM1552 810h1.6v1.6h-1.6zM1486 820h1.6v1.6h-1.6zM1382 839h1.6v1.6h-1.6zM1440 807h1.6v1.6h-1.6zM1546 616h1.6v1.6h-1.6zM1406 663h1.6v1.6h-1.6zM1421 716h1.6v1.6h-1.6zM1366 932h1.6v1.6h-1.6zM1406 945h1.6v1.6h-1.6zM1393 818h1.6v1.6h-1.6zM1572 663h1.6v1.6h-1.6zM1487 651h1.6v1.6h-1.6zM1371 848h1.6v1.6h-1.6zM1379 762h1.6v1.6h-1.6zM1385 834h1.6v1.6h-1.6zM1463 765h1.6v1.6h-1.6zM1396 781h1.6v1.6h-1.6zM1586 706h1.6v1.6h-1.6zM1559 840h1.6v1.6h-1.6zM1501 789h1.6v1.6h-1.6zM1507 624h1.6v1.6h-1.6zM1403 645h1.6v1.6h-1.6zM1620 716h1.6v1.6h-1.6zM1426 817h1.6v1.6h-1.6zM1139 809h1.6v1.6h-1.6zM1404 845h1.6v1.6h-1.6zM1398 755h1.6v1.6h-1.6zM1337 838h1.6v1.6h-1.6zM1354 883h1.6v1.6h-1.6zM1430 810h1.6v1.6h-1.6zM1465 790h1.6v1.6h-1.6zM1331 636h1.6v1.6h-1.6zM1463 844h1.6v1.6h-1.6zM1418 875h1.6v1.6h-1.6zM1488 758h1.6v1.6h-1.6zM1387 846h1.6v1.6h-1.6zM1368 857h1.6v1.6h-1.6zM1390 790h1.6v1.6h-1.6zM1144 782h1.6v1.6h-1.6zM1432 798h1.6v1.6h-1.6zM1430 737h1.6v1.6h-1.6zM1366 833h1.6v1.6h-1.6zM1354 884h1.6v1.6h-1.6zM1498 626h1.6v1.6h-1.6zM1553 797h1.6v1.6h-1.6zM1600 759h1.6v1.6h-1.6zM1414 625h1.6v1.6h-1.6zM1532 873h1.6v1.6h-1.6zM1360 822h1.6v1.6h-1.6zM1482 771h1.6v1.6h-1.6zM1325 659h1.6v1.6h-1.6zM1323 767h1.6v1.6h-1.6zM1446 855h1.6v1.6h-1.6zM1446 713h1.6v1.6h-1.6zM1366 655h1.6v1.6h-1.6zM1560 818h1.6v1.6h-1.6zM1339 780h1.6v1.6h-1.6zM1702 801h1.6v1.6h-1.6zM1410 814h1.6v1.6h-1.6zM1573 813h1.6v1.6h-1.6zM1560 803h1.6v1.6h-1.6zM1421 853h1.6v1.6h-1.6zM1442 837h1.6v1.6h-1.6zM1560 863h1.6v1.6h-1.6zM1499 619h1.6v1.6h-1.6zM1445 824h1.6v1.6h-1.6zM1340 902h1.6v1.6h-1.6zM1515 873h1.6v1.6h-1.6zM1390 857h1.6v1.6h-1.6zM1481 648h1.6v1.6h-1.6zM1424 781h1.6v1.6h-1.6zM1396 859h1.6v1.6h-1.6zM1542 747h1.6v1.6h-1.6zM1342 878h1.6v1.6h-1.6zM1403 831h1.6v1.6h-1.6zM1564 610h1.6v1.6h-1.6zM1384 895h1.6v1.6h-1.6zM1317 882h1.6v1.6h-1.6zM1301 922h1.6v1.6h-1.6zM1409 795h1.6v1.6h-1.6zM1561 625h1.6v1.6h-1.6zM1422 613h1.6v1.6h-1.6zM1502 695h1.6v1.6h-1.6zM1431 680h1.6v1.6h-1.6zM1482 801h1.6v1.6h-1.6zM1485 849h1.6v1.6h-1.6zM1391 892h1.6v1.6h-1.6zM1399 781h1.6v1.6h-1.6zM1525 638h1.6v1.6h-1.6zM1403 758h1.6v1.6h-1.6zM1333 746h1.6v1.6h-1.6zM1483 958h1.6v1.6h-1.6zM1525 670h1.6v1.6h-1.6zM1507 762h1.6v1.6h-1.6zM1483 672h1.6v1.6h-1.6zM1428 837h1.6v1.6h-1.6zM1421 812h1.6v1.6h-1.6zM1427 859h1.6v1.6h-1.6zM1386 661h1.6v1.6h-1.6zM1449 741h1.6v1.6h-1.6zM1374 631h1.6v1.6h-1.6zM1524 656h1.6v1.6h-1.6zM1451 609h1.6v1.6h-1.6zM1413 826h1.6v1.6h-1.6zM1393 867h1.6v1.6h-1.6zM1520 883h1.6v1.6h-1.6zM1464 781h1.6v1.6h-1.6zM1305 936h1.6v1.6h-1.6zM1374 647h1.6v1.6h-1.6zM1536 654h1.6v1.6h-1.6zM1410 643h1.6v1.6h-1.6zM1504 892h1.6v1.6h-1.6zM1442 809h1.6v1.6h-1.6zM1391 787h1.6v1.6h-1.6zM1433 795h1.6v1.6h-1.6zM1526 719h1.6v1.6h-1.6zM1474 882h1.6v1.6h-1.6zM1462 861h1.6v1.6h-1.6zM1408 898h1.6v1.6h-1.6zM1547 901h1.6v1.6h-1.6zM1437 777h1.6v1.6h-1.6zM1418 892h1.6v1.6h-1.6zM1354 734h1.6v1.6h-1.6zM1306 893h1.6v1.6h-1.6zM1521 897h1.6v1.6h-1.6zM1514 866h1.6v1.6h-1.6zM1476 633h1.6v1.6h-1.6zM1403 817h1.6v1.6h-1.6zM1276 874h1.6v1.6h-1.6zM1479 774h1.6v1.6h-1.6zM1478 675h1.6v1.6h-1.6zM1452 812h1.6v1.6h-1.6zM1378 876h1.6v1.6h-1.6zM1318 892h1.6v1.6h-1.6zM1538 877h1.6v1.6h-1.6zM1470 845h1.6v1.6h-1.6zM1405 762h1.6v1.6h-1.6zM1549 852h1.6v1.6h-1.6zM1395 854h1.6v1.6h-1.6zM1226 850h1.6v1.6h-1.6zM1391 855h1.6v1.6h-1.6zM1392 657h1.6v1.6h-1.6zM1542 780h1.6v1.6h-1.6zM1376 816h1.6v1.6h-1.6zM1513 854h1.6v1.6h-1.6zM1363 832h1.6v1.6h-1.6zM1490 748h1.6v1.6h-1.6zM1291 853h1.6v1.6h-1.6zM1204 936h1.6v1.6h-1.6zM1449 666h1.6v1.6h-1.6zM1349 868h1.6v1.6h-1.6zM1460 657h1.6v1.6h-1.6zM1403 818h1.6v1.6h-1.6zM1281 830h1.6v1.6h-1.6zM1461 806h1.6v1.6h-1.6zM1414 732h1.6v1.6h-1.6zM1418 787h1.6v1.6h-1.6zM1336 743h1.6v1.6h-1.6zM1547 806h1.6v1.6h-1.6zM1471 722h1.6v1.6h-1.6zM1196 888h1.6v1.6h-1.6zM1465 848h1.6v1.6h-1.6zM1440 637h1.6v1.6h-1.6zM1421 841h1.6v1.6h-1.6zM1408 922h1.6v1.6h-1.6zM1494 852h1.6v1.6h-1.6zM1393 678h1.6v1.6h-1.6zM1459 808h1.6v1.6h-1.6zM1330 821h1.6v1.6h-1.6zM1506 725h1.6v1.6h-1.6zM1260 856h1.6v1.6h-1.6zM1432 876h1.6v1.6h-1.6zM1564 759h1.6v1.6h-1.6zM1452 853h1.6v1.6h-1.6zM1473 623h1.6v1.6h-1.6zM1401 848h1.6v1.6h-1.6zM1416 787h1.6v1.6h-1.6zM1489 772h1.6v1.6h-1.6zM1431 847h1.6v1.6h-1.6zM1422 804h1.6v1.6h-1.6zM1413 812h1.6v1.6h-1.6zM1411 762h1.6v1.6h-1.6zM1556 784h1.6v1.6h-1.6zM1502 906h1.6v1.6h-1.6zM1394 755h1.6v1.6h-1.6zM1337 911h1.6v1.6h-1.6zM1488 779h1.6v1.6h-1.6zM1464 827h1.6v1.6h-1.6zM1491 849h1.6v1.6h-1.6zM1300 873h1.6v1.6h-1.6zM1403 797h1.6v1.6h-1.6zM1491 627h1.6v1.6h-1.6zM1536 857h1.6v1.6h-1.6zM1482 798h1.6v1.6h-1.6zM1320 922h1.6v1.6h-1.6zM1487 848h1.6v1.6h-1.6zM1389 801h1.6v1.6h-1.6zM1548 715h1.6v1.6h-1.6zM1399 733h1.6v1.6h-1.6zM1435 863h1.6v1.6h-1.6zM1421 759h1.6v1.6h-1.6zM1547 820h1.6v1.6h-1.6zM1454 863h1.6v1.6h-1.6zM1469 891h1.6v1.6h-1.6zM1560 734h1.6v1.6h-1.6zM1406 884h1.6v1.6h-1.6zM1385 829h1.6v1.6h-1.6zM1424 865h1.6v1.6h-1.6zM1481 843h1.6v1.6h-1.6zM1232 888h1.6v1.6h-1.6zM1445 720h1.6v1.6h-1.6zM1409 832h1.6v1.6h-1.6zM1499 907h1.6v1.6h-1.6zM1351 754h1.6v1.6h-1.6zM1584 801h1.6v1.6h-1.6zM1513 849h1.6v1.6h-1.6zM1246 906h1.6v1.6h-1.6zM1269 834h1.6v1.6h-1.6zM1453 646h1.6v1.6h-1.6zM1420 651h1.6v1.6h-1.6zM1467 935h1.6v1.6h-1.6zM1573 672h1.6v1.6h-1.6zM1612 855h1.6v1.6h-1.6zM1411 887h1.6v1.6h-1.6zM1460 797h1.6v1.6h-1.6zM1477 793h1.6v1.6h-1.6zM1498 821h1.6v1.6h-1.6zM1580 831h1.6v1.6h-1.6zM1372 782h1.6v1.6h-1.6zM1382 762h1.6v1.6h-1.6zM1470 686h1.6v1.6h-1.6zM1416 607h1.6v1.6h-1.6zM1251 872h1.6v1.6h-1.6zM1554 922h1.6v1.6h-1.6zM1535 604h1.6v1.6h-1.6zM1206 647h1.6v1.6h-1.6zM1591 697h1.6v1.6h-1.6zM1467 768h1.6v1.6h-1.6zM1336 828h1.6v1.6h-1.6zM1599 904h1.6v1.6h-1.6zM1498 842h1.6v1.6h-1.6zM1369 641h1.6v1.6h-1.6zM1446 750h1.6v1.6h-1.6zM1574 716h1.6v1.6h-1.6zM1202 888h1.6v1.6h-1.6zM1393 832h1.6v1.6h-1.6zM1278 686h1.6v1.6h-1.6zM1353 726h1.6v1.6h-1.6zM1561 675h1.6v1.6h-1.6zM1231 832h1.6v1.6h-1.6zM1367 783h1.6v1.6h-1.6zM1255 950h1.6v1.6h-1.6zM1439 655h1.6v1.6h-1.6zM1489 795h1.6v1.6h-1.6zM1462 593h1.6v1.6h-1.6zM1402 811h1.6v1.6h-1.6zM1397 759h1.6v1.6h-1.6zM1474 608h1.6v1.6h-1.6zM1344 665h1.6v1.6h-1.6zM1582 587h1.6v1.6h-1.6zM1706 677h1.6v1.6h-1.6zM1344 786h1.6v1.6h-1.6zM1557 674h1.6v1.6h-1.6zM1419 779h1.6v1.6h-1.6zM1358 787h1.6v1.6h-1.6zM1590 686h1.6v1.6h-1.6zM1385 766h1.6v1.6h-1.6zM1363 900h1.6v1.6h-1.6zM1637 819h1.6v1.6h-1.6zM1341 790h1.6v1.6h-1.6zM1590 598h1.6v1.6h-1.6zM1445 618h1.6v1.6h-1.6zM1454 615h1.6v1.6h-1.6zM1431 831h1.6v1.6h-1.6zM1467 828h1.6v1.6h-1.6zM1451 743h1.6v1.6h-1.6zM1494 634h1.6v1.6h-1.6zM1540 795h1.6v1.6h-1.6zM1431 843h1.6v1.6h-1.6zM1720 701h1.6v1.6h-1.6zM1402 799h1.6v1.6h-1.6zM1508 935h1.6v1.6h-1.6zM1464 816h1.6v1.6h-1.6zM1527 640h1.6v1.6h-1.6zM1334 856h1.6v1.6h-1.6zM1382 845h1.6v1.6h-1.6zM1387 694h1.6v1.6h-1.6zM1421 757h1.6v1.6h-1.6zM1521 773h1.6v1.6h-1.6zM1291 827h1.6v1.6h-1.6zM1534 808h1.6v1.6h-1.6zM1396 915h1.6v1.6h-1.6zM1413 885h1.6v1.6h-1.6zM1486 847h1.6v1.6h-1.6zM1488 886h1.6v1.6h-1.6zM1582 679h1.6v1.6h-1.6zM1516 788h1.6v1.6h-1.6zM1395 840h1.6v1.6h-1.6zM1663 710h1.6v1.6h-1.6zM1563 852h1.6v1.6h-1.6zM1563 702h1.6v1.6h-1.6zM1523 789h1.6v1.6h-1.6zM1306 874h1.6v1.6h-1.6zM1353 862h1.6v1.6h-1.6zM1282 891h1.6v1.6h-1.6zM1535 860h1.6v1.6h-1.6zM1409 805h1.6v1.6h-1.6zM1408 800h1.6v1.6h-1.6zM1432 766h1.6v1.6h-1.6zM1503 628h1.6v1.6h-1.6zM1404 717h1.6v1.6h-1.6zM1448 889h1.6v1.6h-1.6zM1496 738h1.6v1.6h-1.6zM1278 771h1.6v1.6h-1.6zM1579 868h1.6v1.6h-1.6zM1479 781h1.6v1.6h-1.6zM1455 857h1.6v1.6h-1.6zM1533 844h1.6v1.6h-1.6zM1265 657h1.6v1.6h-1.6zM1511 780h1.6v1.6h-1.6zM1410 820h1.6v1.6h-1.6zM1594 746h1.6v1.6h-1.6zM1435 659h1.6v1.6h-1.6zM1405 842h1.6v1.6h-1.6zM1534 870h1.6v1.6h-1.6zM1464 771h1.6v1.6h-1.6zM1552 804h1.6v1.6h-1.6zM1383 712h1.6v1.6h-1.6zM1497 811h1.6v1.6h-1.6zM1441 872h1.6v1.6h-1.6zM1413 634h1.6v1.6h-1.6zM1447 911h1.6v1.6h-1.6zM1491 815h1.6v1.6h-1.6zM1341 693h1.6v1.6h-1.6zM1512 841h1.6v1.6h-1.6zM1524 817h1.6v1.6h-1.6zM1191 900h1.6v1.6h-1.6zM1830 844h1.6v1.6h-1.6zM1389 817h1.6v1.6h-1.6zM1505 672h1.6v1.6h-1.6zM1478 830h1.6v1.6h-1.6zM1453 785h1.6v1.6h-1.6zM1611 798h1.6v1.6h-1.6zM1414 626h1.6v1.6h-1.6zM1450 733h1.6v1.6h-1.6zM1541 894h1.6v1.6h-1.6zM1486 845h1.6v1.6h-1.6zM1561 627h1.6v1.6h-1.6zM1447 841h1.6v1.6h-1.6zM1472 625h1.6v1.6h-1.6zM1428 752h1.6v1.6h-1.6zM1400 612h1.6v1.6h-1.6zM1460 797h1.6v1.6h-1.6zM1338 616h1.6v1.6h-1.6zM1412 871h1.6v1.6h-1.6zM1274 791h1.6v1.6h-1.6zM1471 854h1.6v1.6h-1.6zM1480 777h1.6v1.6h-1.6zM1369 670h1.6v1.6h-1.6zM1366 787h1.6v1.6h-1.6zM1397 779h1.6v1.6h-1.6zM1495 841h1.6v1.6h-1.6zM1421 614h1.6v1.6h-1.6zM1388 908h1.6v1.6h-1.6zM1371 817h1.6v1.6h-1.6zM1284 778h1.6v1.6h-1.6zM1469 810h1.6v1.6h-1.6zM1450 810h1.6v1.6h-1.6zM1430 856h1.6v1.6h-1.6zM1583 628h1.6v1.6h-1.6zM1414 772h1.6v1.6h-1.6zM1366 830h1.6v1.6h-1.6zM1569 648h1.6v1.6h-1.6zM1435 821h1.6v1.6h-1.6zM1381 877h1.6v1.6h-1.6zM1321 666h1.6v1.6h-1.6zM1636 733h1.6v1.6h-1.6zM1379 631h1.6v1.6h-1.6zM1500 643h1.6v1.6h-1.6zM1576 658h1.6v1.6h-1.6zM1446 945h1.6v1.6h-1.6zM1355 859h1.6v1.6h-1.6zM1307 893h1.6v1.6h-1.6zM1252 778h1.6v1.6h-1.6zM1404 975h1.6v1.6h-1.6zM1475 704h1.6v1.6h-1.6zM1501 784h1.6v1.6h-1.6zM1432 833h1.6v1.6h-1.6zM1423 904h1.6v1.6h-1.6zM1291 723h1.6v1.6h-1.6zM1532 650h1.6v1.6h-1.6zM1447 639h1.6v1.6h-1.6zM1508 728h1.6v1.6h-1.6zM1368 847h1.6v1.6h-1.6zM1528 874h1.6v1.6h-1.6zM1614 638h1.6v1.6h-1.6zM1634 636h1.6v1.6h-1.6zM1416 813h1.6v1.6h-1.6zM1348 625h1.6v1.6h-1.6zM1301 803h1.6v1.6h-1.6zM1560 633h1.6v1.6h-1.6zM1436 828h1.6v1.6h-1.6zM1462 752h1.6v1.6h-1.6zM1586 869h1.6v1.6h-1.6zM1523 845h1.6v1.6h-1.6zM1434 623h1.6v1.6h-1.6zM1428 874h1.6v1.6h-1.6zM1623 696h1.6v1.6h-1.6zM1491 751h1.6v1.6h-1.6zM1489 913h1.6v1.6h-1.6zM1414 656h1.6v1.6h-1.6zM1528 659h1.6v1.6h-1.6zM1628 522h1.6v1.6h-1.6zM1402 638h1.6v1.6h-1.6zM1363 886h1.6v1.6h-1.6zM1371 910h1.6v1.6h-1.6zM1512 833h1.6v1.6h-1.6zM1378 858h1.6v1.6h-1.6zM1457 658h1.6v1.6h-1.6zM1456 901h1.6v1.6h-1.6zM1498 714h1.6v1.6h-1.6zM1427 863h1.6v1.6h-1.6zM1408 904h1.6v1.6h-1.6zM1457 836h1.6v1.6h-1.6zM1361 774h1.6v1.6h-1.6zM1472 745h1.6v1.6h-1.6zM1462 774h1.6v1.6h-1.6zM1450 856h1.6v1.6h-1.6zM1423 851h1.6v1.6h-1.6zM1532 768h1.6v1.6h-1.6zM1559 908h1.6v1.6h-1.6zM1410 915h1.6v1.6h-1.6zM1595 833h1.6v1.6h-1.6zM1609 618h1.6v1.6h-1.6zM1438 919h1.6v1.6h-1.6zM1469 779h1.6v1.6h-1.6zM1458 722h1.6v1.6h-1.6zM1466 823h1.6v1.6h-1.6zM1451 844h1.6v1.6h-1.6zM1370 739h1.6v1.6h-1.6zM1401 652h1.6v1.6h-1.6zM1633 623h1.6v1.6h-1.6zM1423 912h1.6v1.6h-1.6zM1389 775h1.6v1.6h-1.6zM1430 844h1.6v1.6h-1.6zM1389 802h1.6v1.6h-1.6zM1504 814h1.6v1.6h-1.6zM1457 844h1.6v1.6h-1.6zM1367 862h1.6v1.6h-1.6zM1574 684h1.6v1.6h-1.6zM1436 768h1.6v1.6h-1.6zM1434 808h1.6v1.6h-1.6zM1268 874h1.6v1.6h-1.6zM1412 807h1.6v1.6h-1.6zM1281 852h1.6v1.6h-1.6zM1394 847h1.6v1.6h-1.6zM1452 809h1.6v1.6h-1.6zM1380 906h1.6v1.6h-1.6zM1686 579h1.6v1.6h-1.6zM1569 609h1.6v1.6h-1.6zM1482 756h1.6v1.6h-1.6zM1337 756h1.6v1.6h-1.6zM1227 834h1.6v1.6h-1.6zM1360 772h1.6v1.6h-1.6zM1395 662h1.6v1.6h-1.6zM1485 799h1.6v1.6h-1.6zM1486 851h1.6v1.6h-1.6zM1566 858h1.6v1.6h-1.6zM1223 761h1.6v1.6h-1.6zM1594 927h1.6v1.6h-1.6zM1502 779h1.6v1.6h-1.6zM1378 743h1.6v1.6h-1.6zM1427 597h1.6v1.6h-1.6zM1440 668h1.6v1.6h-1.6zM1414 975h1.6v1.6h-1.6zM1452 841h1.6v1.6h-1.6zM1418 796h1.6v1.6h-1.6zM1372 618h1.6v1.6h-1.6zM1477 840h1.6v1.6h-1.6zM1484 777h1.6v1.6h-1.6zM1227 824h1.6v1.6h-1.6zM1440 597h1.6v1.6h-1.6zM1471 628h1.6v1.6h-1.6zM1410 877h1.6v1.6h-1.6zM1438 797h1.6v1.6h-1.6zM1528 792h1.6v1.6h-1.6zM1581 785h1.6v1.6h-1.6zM1513 636h1.6v1.6h-1.6zM1669 656h1.6v1.6h-1.6zM1462 646h1.6v1.6h-1.6zM1389 741h1.6v1.6h-1.6zM1477 812h1.6v1.6h-1.6zM1420 771h1.6v1.6h-1.6zM1336 892h1.6v1.6h-1.6zM1501 481h1.6v1.6h-1.6zM1336 798h1.6v1.6h-1.6zM1457 676h1.6v1.6h-1.6zM1292 897h1.6v1.6h-1.6zM1444 811h1.6v1.6h-1.6zM1662 707h1.6v1.6h-1.6zM1566 845h1.6v1.6h-1.6zM1294 831h1.6v1.6h-1.6zM1397 905h1.6v1.6h-1.6zM1446 864h1.6v1.6h-1.6zM1427 853h1.6v1.6h-1.6zM1201 654h1.6v1.6h-1.6zM1482 906h1.6v1.6h-1.6zM1444 662h1.6v1.6h-1.6zM1418 774h1.6v1.6h-1.6zM1545 787h1.6v1.6h-1.6zM1379 855h1.6v1.6h-1.6zM1486 719h1.6v1.6h-1.6zM1382 801h1.6v1.6h-1.6zM1519 625h1.6v1.6h-1.6zM1526 802h1.6v1.6h-1.6zM1431 784h1.6v1.6h-1.6zM1443 594h1.6v1.6h-1.6zM1444 834h1.6v1.6h-1.6zM1438 613h1.6v1.6h-1.6zM1449 869h1.6v1.6h-1.6zM1497 839h1.6v1.6h-1.6zM1389 823h1.6v1.6h-1.6zM1370 817h1.6v1.6h-1.6zM1445 625h1.6v1.6h-1.6zM1444 656h1.6v1.6h-1.6zM1718 880h1.6v1.6h-1.6zM1854 765h1.6v1.6h-1.6zM1384 626h1.6v1.6h-1.6zM1558 628h1.6v1.6h-1.6zM1338 728h1.6v1.6h-1.6zM1238 906h1.6v1.6h-1.6zM1545 631h1.6v1.6h-1.6zM1398 878h1.6v1.6h-1.6zM1476 888h1.6v1.6h-1.6zM1236 702h1.6v1.6h-1.6zM1393 872h1.6v1.6h-1.6zM1414 892h1.6v1.6h-1.6zM1417 833h1.6v1.6h-1.6zM1493 762h1.6v1.6h-1.6zM1520 835h1.6v1.6h-1.6zM1280 827h1.6v1.6h-1.6zM1517 902h1.6v1.6h-1.6zM1402 848h1.6v1.6h-1.6zM1410 832h1.6v1.6h-1.6zM1417 806h1.6v1.6h-1.6zM1499 858h1.6v1.6h-1.6zM1533 634h1.6v1.6h-1.6zM1559 824h1.6v1.6h-1.6zM1358 851h1.6v1.6h-1.6zM1316 859h1.6v1.6h-1.6zM1434 821h1.6v1.6h-1.6zM1445 808h1.6v1.6h-1.6zM1411 852h1.6v1.6h-1.6zM1485 845h1.6v1.6h-1.6zM1515 640h1.6v1.6h-1.6zM1473 790h1.6v1.6h-1.6zM1364 787h1.6v1.6h-1.6zM1462 678h1.6v1.6h-1.6zM1458 743h1.6v1.6h-1.6zM1461 613h1.6v1.6h-1.6zM1346 852h1.6v1.6h-1.6zM1329 855h1.6v1.6h-1.6zM1524 804h1.6v1.6h-1.6zM1399 780h1.6v1.6h-1.6zM1465 892h1.6v1.6h-1.6zM1513 837h1.6v1.6h-1.6zM1367 788h1.6v1.6h-1.6zM1517 883h1.6v1.6h-1.6zM1598 650h1.6v1.6h-1.6zM1519 908h1.6v1.6h-1.6zM1457 840h1.6v1.6h-1.6zM1272 845h1.6v1.6h-1.6zM1438 624h1.6v1.6h-1.6zM1352 634h1.6v1.6h-1.6zM1364 825h1.6v1.6h-1.6zM1567 600h1.6v1.6h-1.6zM1560 639h1.6v1.6h-1.6zM1457 784h1.6v1.6h-1.6zM1517 627h1.6v1.6h-1.6zM1433 769h1.6v1.6h-1.6zM1638 859h1.6v1.6h-1.6zM1412 784h1.6v1.6h-1.6zM1411 870h1.6v1.6h-1.6zM1398 800h1.6v1.6h-1.6zM1335 900h1.6v1.6h-1.6zM1540 879h1.6v1.6h-1.6zM1330 883h1.6v1.6h-1.6zM1449 785h1.6v1.6h-1.6zM1601 631h1.6v1.6h-1.6zM1546 854h1.6v1.6h-1.6zM1493 642h1.6v1.6h-1.6zM1399 744h1.6v1.6h-1.6zM1525 658h1.6v1.6h-1.6zM1571 836h1.6v1.6h-1.6zM1397 763h1.6v1.6h-1.6zM1355 841h1.6v1.6h-1.6zM1476 769h1.6v1.6h-1.6zM1294 721h1.6v1.6h-1.6zM1532 661h1.6v1.6h-1.6zM1522 731h1.6v1.6h-1.6zM1347 607h1.6v1.6h-1.6zM1782 928h1.6v1.6h-1.6zM1552 837h1.6v1.6h-1.6zM1573 651h1.6v1.6h-1.6zM1497 880h1.6v1.6h-1.6zM1402 643h1.6v1.6h-1.6zM1403 892h1.6v1.6h-1.6zM1393 826h1.6v1.6h-1.6zM1343 867h1.6v1.6h-1.6zM1333 813h1.6v1.6h-1.6zM1554 778h1.6v1.6h-1.6zM1506 854h1.6v1.6h-1.6zM1422 727h1.6v1.6h-1.6zM1376 801h1.6v1.6h-1.6zM1448 906h1.6v1.6h-1.6zM1438 735h1.6v1.6h-1.6zM1342 864h1.6v1.6h-1.6zM1387 675h1.6v1.6h-1.6zM1347 705h1.6v1.6h-1.6zM1357 842h1.6v1.6h-1.6zM1440 611h1.6v1.6h-1.6zM1401 612h1.6v1.6h-1.6zM1392 669h1.6v1.6h-1.6zM1510 776h1.6v1.6h-1.6zM1463 730h1.6v1.6h-1.6zM1195 755h1.6v1.6h-1.6zM1383 742h1.6v1.6h-1.6zM1383 698h1.6v1.6h-1.6zM1354 769h1.6v1.6h-1.6zM1127 912h1.6v1.6h-1.6zM1494 896h1.6v1.6h-1.6zM1648 848h1.6v1.6h-1.6zM1424 754h1.6v1.6h-1.6zM1390 717h1.6v1.6h-1.6zM1328 612h1.6v1.6h-1.6zM1328 844h1.6v1.6h-1.6zM1409 893h1.6v1.6h-1.6zM1419 853h1.6v1.6h-1.6zM1502 755h1.6v1.6h-1.6zM1577 780h1.6v1.6h-1.6zM1379 776h1.6v1.6h-1.6zM1459 894h1.6v1.6h-1.6zM1471 835h1.6v1.6h-1.6zM1425 821h1.6v1.6h-1.6zM1391 826h1.6v1.6h-1.6zM1737 727h1.6v1.6h-1.6zM1473 760h1.6v1.6h-1.6zM1490 690h1.6v1.6h-1.6zM1399 862h1.6v1.6h-1.6zM1349 835h1.6v1.6h-1.6zM1393 720h1.6v1.6h-1.6zM1328 801h1.6v1.6h-1.6zM1402 873h1.6v1.6h-1.6zM1455 804h1.6v1.6h-1.6zM1443 815h1.6v1.6h-1.6zM1390 765h1.6v1.6h-1.6zM1253 839h1.6v1.6h-1.6zM1501 657h1.6v1.6h-1.6zM1555 843h1.6v1.6h-1.6zM1802 705h1.6v1.6h-1.6zM1398 797h1.6v1.6h-1.6zM1423 909h1.6v1.6h-1.6zM1422 931h1.6v1.6h-1.6zM1338 730h1.6v1.6h-1.6zM1468 841h1.6v1.6h-1.6zM1520 901h1.6v1.6h-1.6zM1464 822h1.6v1.6h-1.6zM1315 895h1.6v1.6h-1.6zM1544 859h1.6v1.6h-1.6zM1462 819h1.6v1.6h-1.6zM1473 782h1.6v1.6h-1.6zM1535 812h1.6v1.6h-1.6zM1461 639h1.6v1.6h-1.6zM1381 736h1.6v1.6h-1.6zM1472 637h1.6v1.6h-1.6zM1475 882h1.6v1.6h-1.6zM1481 782h1.6v1.6h-1.6zM1352 754h1.6v1.6h-1.6zM1418 827h1.6v1.6h-1.6zM1363 748h1.6v1.6h-1.6zM1512 901h1.6v1.6h-1.6zM1510 650h1.6v1.6h-1.6zM1510 634h1.6v1.6h-1.6zM1400 746h1.6v1.6h-1.6zM1457 635h1.6v1.6h-1.6zM1544 809h1.6v1.6h-1.6zM1417 857h1.6v1.6h-1.6zM1316 800h1.6v1.6h-1.6zM1412 671h1.6v1.6h-1.6zM1454 864h1.6v1.6h-1.6zM1355 714h1.6v1.6h-1.6zM1489 669h1.6v1.6h-1.6zM1500 781h1.6v1.6h-1.6zM1333 636h1.6v1.6h-1.6zM1480 774h1.6v1.6h-1.6zM1351 854h1.6v1.6h-1.6zM1399 664h1.6v1.6h-1.6zM1391 802h1.6v1.6h-1.6zM1454 916h1.6v1.6h-1.6zM1379 836h1.6v1.6h-1.6zM1456 814h1.6v1.6h-1.6zM1503 624h1.6v1.6h-1.6zM1475 839h1.6v1.6h-1.6zM1340 873h1.6v1.6h-1.6zM1655 841h1.6v1.6h-1.6zM1508 647h1.6v1.6h-1.6zM1469 637h1.6v1.6h-1.6zM1707 823h1.6v1.6h-1.6zM1343 635h1.6v1.6h-1.6zM1480 777h1.6v1.6h-1.6zM1391 794h1.6v1.6h-1.6zM1492 832h1.6v1.6h-1.6zM1391 815h1.6v1.6h-1.6zM1624 757h1.6v1.6h-1.6zM1436 847h1.6v1.6h-1.6zM1507 610h1.6v1.6h-1.6zM1485 737h1.6v1.6h-1.6zM1561 610h1.6v1.6h-1.6zM1755 677h1.6v1.6h-1.6zM1370 807h1.6v1.6h-1.6zM1472 771h1.6v1.6h-1.6zM1431 792h1.6v1.6h-1.6zM1336 657h1.6v1.6h-1.6zM1375 849h1.6v1.6h-1.6zM1315 877h1.6v1.6h-1.6zM1355 841h1.6v1.6h-1.6zM1348 812h1.6v1.6h-1.6zM1320 812h1.6v1.6h-1.6zM1393 776h1.6v1.6h-1.6zM1582 931h1.6v1.6h-1.6zM1498 627h1.6v1.6h-1.6zM1575 805h1.6v1.6h-1.6zM1383 649h1.6v1.6h-1.6zM1252 954h1.6v1.6h-1.6zM1419 802h1.6v1.6h-1.6zM1437 839h1.6v1.6h-1.6zM1442 823h1.6v1.6h-1.6zM1546 823h1.6v1.6h-1.6zM1397 839h1.6v1.6h-1.6zM1493 640h1.6v1.6h-1.6zM1517 787h1.6v1.6h-1.6zM1459 880h1.6v1.6h-1.6zM1375 875h1.6v1.6h-1.6zM1454 642h1.6v1.6h-1.6zM1412 835h1.6v1.6h-1.6zM1360 765h1.6v1.6h-1.6zM1353 796h1.6v1.6h-1.6zM1383 809h1.6v1.6h-1.6zM1576 840h1.6v1.6h-1.6zM1466 764h1.6v1.6h-1.6zM1482 616h1.6v1.6h-1.6zM1476 712h1.6v1.6h-1.6zM1427 783h1.6v1.6h-1.6zM1442 793h1.6v1.6h-1.6zM1408 785h1.6v1.6h-1.6zM1451 623h1.6v1.6h-1.6zM1459 734h1.6v1.6h-1.6zM1502 887h1.6v1.6h-1.6zM1401 633h1.6v1.6h-1.6zM1186 814h1.6v1.6h-1.6zM1117 903h1.6v1.6h-1.6zM1520 896h1.6v1.6h-1.6zM1455 747h1.6v1.6h-1.6zM1442 876h1.6v1.6h-1.6zM1414 758h1.6v1.6h-1.6zM1411 769h1.6v1.6h-1.6zM1482 627h1.6v1.6h-1.6zM1396 830h1.6v1.6h-1.6zM1466 610h1.6v1.6h-1.6zM1307 847h1.6v1.6h-1.6zM1509 748h1.6v1.6h-1.6zM1347 748h1.6v1.6h-1.6zM1539 717h1.6v1.6h-1.6zM1569 751h1.6v1.6h-1.6zM1324 855h1.6v1.6h-1.6zM1423 743h1.6v1.6h-1.6zM1390 816h1.6v1.6h-1.6zM1435 820h1.6v1.6h-1.6zM1268 822h1.6v1.6h-1.6zM1435 628h1.6v1.6h-1.6zM1550 880h1.6v1.6h-1.6zM1302 865h1.6v1.6h-1.6zM1315 656h1.6v1.6h-1.6zM1547 642h1.6v1.6h-1.6zM1470 815h1.6v1.6h-1.6zM1489 762h1.6v1.6h-1.6zM1445 638h1.6v1.6h-1.6zM1429 796h1.6v1.6h-1.6zM1454 859h1.6v1.6h-1.6zM1390 796h1.6v1.6h-1.6zM1381 622h1.6v1.6h-1.6zM1371 631h1.6v1.6h-1.6zM1583 829h1.6v1.6h-1.6zM1544 747h1.6v1.6h-1.6zM1600 769h1.6v1.6h-1.6zM1525 837h1.6v1.6h-1.6zM1367 841h1.6v1.6h-1.6zM1540 626h1.6v1.6h-1.6zM1443 767h1.6v1.6h-1.6zM1324 923h1.6v1.6h-1.6zM1499 920h1.6v1.6h-1.6zM1529 791h1.6v1.6h-1.6zM1499 759h1.6v1.6h-1.6zM1393 882h1.6v1.6h-1.6zM1424 812h1.6v1.6h-1.6zM1415 584h1.6v1.6h-1.6zM1518 907h1.6v1.6h-1.6zM1504 721h1.6v1.6h-1.6zM1476 640h1.6v1.6h-1.6zM1382 654h1.6v1.6h-1.6zM1490 607h1.6v1.6h-1.6zM1453 873h1.6v1.6h-1.6zM1355 782h1.6v1.6h-1.6zM1399 941h1.6v1.6h-1.6zM1295 618h1.6v1.6h-1.6zM1349 872h1.6v1.6h-1.6zM1373 830h1.6v1.6h-1.6zM1383 869h1.6v1.6h-1.6zM1409 833h1.6v1.6h-1.6zM1297 832h1.6v1.6h-1.6zM1838 908h1.6v1.6h-1.6zM1437 778h1.6v1.6h-1.6zM1429 724h1.6v1.6h-1.6zM1485 825h1.6v1.6h-1.6zM1518 781h1.6v1.6h-1.6zM1459 639h1.6v1.6h-1.6zM1402 862h1.6v1.6h-1.6zM1414 743h1.6v1.6h-1.6zM1592 767h1.6v1.6h-1.6zM1433 600h1.6v1.6h-1.6zM1279 878h1.6v1.6h-1.6zM1411 797h1.6v1.6h-1.6zM1426 618h1.6v1.6h-1.6zM1282 741h1.6v1.6h-1.6zM1537 811h1.6v1.6h-1.6zM1434 890h1.6v1.6h-1.6zM1483 627h1.6v1.6h-1.6zM1445 928h1.6v1.6h-1.6zM1404 802h1.6v1.6h-1.6zM1560 782h1.6v1.6h-1.6zM1327 934h1.6v1.6h-1.6zM1419 764h1.6v1.6h-1.6zM1544 907h1.6v1.6h-1.6zM1366 769h1.6v1.6h-1.6zM1628 849h1.6v1.6h-1.6zM1388 859h1.6v1.6h-1.6zM1419 818h1.6v1.6h-1.6zM1429 742h1.6v1.6h-1.6zM1363 641h1.6v1.6h-1.6zM1489 662h1.6v1.6h-1.6zM1352 961h1.6v1.6h-1.6zM1524 847h1.6v1.6h-1.6zM1427 783h1.6v1.6h-1.6zM1390 814h1.6v1.6h-1.6zM1450 743h1.6v1.6h-1.6zM1500 818h1.6v1.6h-1.6zM1412 700h1.6v1.6h-1.6zM1215 861h1.6v1.6h-1.6zM1396 924h1.6v1.6h-1.6zM1417 873h1.6v1.6h-1.6zM1301 919h1.6v1.6h-1.6zM1411 803h1.6v1.6h-1.6zM1503 873h1.6v1.6h-1.6zM1334 741h1.6v1.6h-1.6zM1410 656h1.6v1.6h-1.6zM1616 814h1.6v1.6h-1.6zM1405 761h1.6v1.6h-1.6zM1363 648h1.6v1.6h-1.6zM1412 818h1.6v1.6h-1.6zM1478 791h1.6v1.6h-1.6zM1466 865h1.6v1.6h-1.6zM1521 813h1.6v1.6h-1.6zM1471 858h1.6v1.6h-1.6zM1509 839h1.6v1.6h-1.6zM1479 652h1.6v1.6h-1.6zM1414 832h1.6v1.6h-1.6zM1454 820h1.6v1.6h-1.6zM1490 834h1.6v1.6h-1.6zM1533 628h1.6v1.6h-1.6zM1304 829h1.6v1.6h-1.6zM1466 853h1.6v1.6h-1.6zM1248 855h1.6v1.6h-1.6zM1405 651h1.6v1.6h-1.6zM1326 663h1.6v1.6h-1.6zM1544 833h1.6v1.6h-1.6zM1407 892h1.6v1.6h-1.6zM1492 672h1.6v1.6h-1.6zM1501 795h1.6v1.6h-1.6zM1606 663h1.6v1.6h-1.6zM1321 920h1.6v1.6h-1.6zM1342 811h1.6v1.6h-1.6zM1508 808h1.6v1.6h-1.6zM1356 831h1.6v1.6h-1.6zM1482 867h1.6v1.6h-1.6zM1485 636h1.6v1.6h-1.6zM1411 879h1.6v1.6h-1.6zM1356 697h1.6v1.6h-1.6zM1484 883h1.6v1.6h-1.6zM1536 760h1.6v1.6h-1.6zM1381 768h1.6v1.6h-1.6zM1468 893h1.6v1.6h-1.6zM1451 781h1.6v1.6h-1.6zM1501 895h1.6v1.6h-1.6zM1310 992h1.6v1.6h-1.6zM1415 595h1.6v1.6h-1.6zM1457 873h1.6v1.6h-1.6zM1560 817h1.6v1.6h-1.6zM1368 687h1.6v1.6h-1.6zM1432 738h1.6v1.6h-1.6zM1382 795h1.6v1.6h-1.6zM1491 810h1.6v1.6h-1.6zM1563 655h1.6v1.6h-1.6zM1347 754h1.6v1.6h-1.6zM1353 841h1.6v1.6h-1.6zM1410 886h1.6v1.6h-1.6zM1530 899h1.6v1.6h-1.6zM1336 597h1.6v1.6h-1.6zM1378 750h1.6v1.6h-1.6zM1461 621h1.6v1.6h-1.6zM1491 858h1.6v1.6h-1.6zM1317 887h1.6v1.6h-1.6zM1430 857h1.6v1.6h-1.6zM1685 691h1.6v1.6h-1.6zM1409 706h1.6v1.6h-1.6zM1483 640h1.6v1.6h-1.6zM1505 621h1.6v1.6h-1.6zM1360 740h1.6v1.6h-1.6zM1322 754h1.6v1.6h-1.6zM1508 822h1.6v1.6h-1.6zM1502 849h1.6v1.6h-1.6zM1410 846h1.6v1.6h-1.6zM1426 825h1.6v1.6h-1.6zM1370 668h1.6v1.6h-1.6zM1359 855h1.6v1.6h-1.6zM1454 671h1.6v1.6h-1.6zM1464 794h1.6v1.6h-1.6zM1501 776h1.6v1.6h-1.6zM1334 839h1.6v1.6h-1.6zM1474 647h1.6v1.6h-1.6zM1410 733h1.6v1.6h-1.6zM1471 799h1.6v1.6h-1.6zM1618 855h1.6v1.6h-1.6zM1625 770h1.6v1.6h-1.6zM1573 597h1.6v1.6h-1.6zM1404 740h1.6v1.6h-1.6zM1272 829h1.6v1.6h-1.6zM1454 788h1.6v1.6h-1.6zM1511 601h1.6v1.6h-1.6zM1425 848h1.6v1.6h-1.6zM1406 798h1.6v1.6h-1.6zM1416 876h1.6v1.6h-1.6zM1298 852h1.6v1.6h-1.6zM1448 821h1.6v1.6h-1.6zM1333 737h1.6v1.6h-1.6zM1449 650h1.6v1.6h-1.6zM1169 786h1.6v1.6h-1.6zM1568 860h1.6v1.6h-1.6zM1326 613h1.6v1.6h-1.6zM1400 882h1.6v1.6h-1.6zM1362 821h1.6v1.6h-1.6zM1442 779h1.6v1.6h-1.6zM1401 845h1.6v1.6h-1.6zM1416 613h1.6v1.6h-1.6zM1482 922h1.6v1.6h-1.6zM1529 634h1.6v1.6h-1.6zM1427 854h1.6v1.6h-1.6zM1550 860h1.6v1.6h-1.6zM1397 840h1.6v1.6h-1.6zM1344 869h1.6v1.6h-1.6zM1441 829h1.6v1.6h-1.6zM1348 627h1.6v1.6h-1.6zM1408 896h1.6v1.6h-1.6zM1506 769h1.6v1.6h-1.6zM1472 636h1.6v1.6h-1.6zM1447 648h1.6v1.6h-1.6zM1331 859h1.6v1.6h-1.6zM1434 900h1.6v1.6h-1.6zM1382 727h1.6v1.6h-1.6zM1534 631h1.6v1.6h-1.6zM1409 765h1.6v1.6h-1.6zM1525 769h1.6v1.6h-1.6zM1612 672h1.6v1.6h-1.6zM1320 821h1.6v1.6h-1.6zM1442 892h1.6v1.6h-1.6zM1323 812h1.6v1.6h-1.6zM1354 852h1.6v1.6h-1.6zM1546 636h1.6v1.6h-1.6zM1460 801h1.6v1.6h-1.6zM1425 772h1.6v1.6h-1.6zM1406 625h1.6v1.6h-1.6zM1503 857h1.6v1.6h-1.6zM1512 731h1.6v1.6h-1.6zM1505 806h1.6v1.6h-1.6zM1535 566h1.6v1.6h-1.6zM1653 641h1.6v1.6h-1.6zM1330 777h1.6v1.6h-1.6zM1438 799h1.6v1.6h-1.6zM1221 897h1.6v1.6h-1.6zM1336 884h1.6v1.6h-1.6zM1397 645h1.6v1.6h-1.6zM1527 927h1.6v1.6h-1.6zM1367 767h1.6v1.6h-1.6zM1474 774h1.6v1.6h-1.6zM1546 683h1.6v1.6h-1.6zM1529 883h1.6v1.6h-1.6zM1623 618h1.6v1.6h-1.6zM1419 630h1.6v1.6h-1.6zM1407 748h1.6v1.6h-1.6zM1434 666h1.6v1.6h-1.6zM1429 827h1.6v1.6h-1.6zM1589 845h1.6v1.6h-1.6zM1518 843h1.6v1.6h-1.6zM1460 732h1.6v1.6h-1.6zM1410 925h1.6v1.6h-1.6zM1358 815h1.6v1.6h-1.6zM1540 678h1.6v1.6h-1.6zM1289 866h1.6v1.6h-1.6zM1318 874h1.6v1.6h-1.6zM1390 826h1.6v1.6h-1.6zM1374 839h1.6v1.6h-1.6zM1243 861h1.6v1.6h-1.6zM1431 845h1.6v1.6h-1.6zM1497 602h1.6v1.6h-1.6zM1424 744h1.6v1.6h-1.6zM1505 627h1.6v1.6h-1.6zM1570 774h1.6v1.6h-1.6zM1438 867h1.6v1.6h-1.6zM1478 797h1.6v1.6h-1.6zM1434 732h1.6v1.6h-1.6zM1472 592h1.6v1.6h-1.6zM1279 878h1.6v1.6h-1.6zM1456 883h1.6v1.6h-1.6zM1410 772h1.6v1.6h-1.6zM1378 910h1.6v1.6h-1.6zM1399 875h1.6v1.6h-1.6zM1489 610h1.6v1.6h-1.6zM1396 618h1.6v1.6h-1.6zM1402 813h1.6v1.6h-1.6zM1450 880h1.6v1.6h-1.6zM1365 653h1.6v1.6h-1.6zM1551 785h1.6v1.6h-1.6zM1535 590h1.6v1.6h-1.6zM1641 788h1.6v1.6h-1.6zM1499 855h1.6v1.6h-1.6zM1549 642h1.6v1.6h-1.6zM1369 937h1.6v1.6h-1.6zM1447 669h1.6v1.6h-1.6zM1345 862h1.6v1.6h-1.6zM1601 670h1.6v1.6h-1.6zM1556 785h1.6v1.6h-1.6zM1489 842h1.6v1.6h-1.6zM1442 890h1.6v1.6h-1.6zM1374 911h1.6v1.6h-1.6zM1347 818h1.6v1.6h-1.6zM1488 846h1.6v1.6h-1.6zM1352 838h1.6v1.6h-1.6zM1462 794h1.6v1.6h-1.6zM1346 845h1.6v1.6h-1.6zM1489 797h1.6v1.6h-1.6zM1514 864h1.6v1.6h-1.6zM1501 637h1.6v1.6h-1.6zM1508 674h1.6v1.6h-1.6zM1408 820h1.6v1.6h-1.6zM1331 821h1.6v1.6h-1.6zM1508 812h1.6v1.6h-1.6zM1487 694h1.6v1.6h-1.6zM1442 802h1.6v1.6h-1.6zM1343 762h1.6v1.6h-1.6zM1412 785h1.6v1.6h-1.6zM1626 876h1.6v1.6h-1.6zM1482 746h1.6v1.6h-1.6zM1608 702h1.6v1.6h-1.6zM1573 824h1.6v1.6h-1.6zM1660 626h1.6v1.6h-1.6zM1413 913h1.6v1.6h-1.6zM1355 754h1.6v1.6h-1.6zM1448 687h1.6v1.6h-1.6zM1482 951h1.6v1.6h-1.6zM1495 890h1.6v1.6h-1.6zM1464 847h1.6v1.6h-1.6zM1394 805h1.6v1.6h-1.6zM1335 877h1.6v1.6h-1.6zM1590 780h1.6v1.6h-1.6zM1274 807h1.6v1.6h-1.6zM1292 847h1.6v1.6h-1.6zM1208 747h1.6v1.6h-1.6zM1578 875h1.6v1.6h-1.6zM1407 628h1.6v1.6h-1.6zM1480 579h1.6v1.6h-1.6zM1407 847h1.6v1.6h-1.6zM1344 869h1.6v1.6h-1.6zM1360 812h1.6v1.6h-1.6zM1490 578h1.6v1.6h-1.6zM1445 859h1.6v1.6h-1.6zM1541 769h1.6v1.6h-1.6zM1438 841h1.6v1.6h-1.6zM1499 844h1.6v1.6h-1.6zM1472 854h1.6v1.6h-1.6zM1497 628h1.6v1.6h-1.6zM1462 826h1.6v1.6h-1.6zM1317 797h1.6v1.6h-1.6zM1462 662h1.6v1.6h-1.6zM1337 849h1.6v1.6h-1.6zM1419 666h1.6v1.6h-1.6zM1338 931h1.6v1.6h-1.6zM1373 813h1.6v1.6h-1.6zM1461 610h1.6v1.6h-1.6zM1533 607h1.6v1.6h-1.6zM1426 757h1.6v1.6h-1.6zM1597 809h1.6v1.6h-1.6zM1648 844h1.6v1.6h-1.6zM1390 635h1.6v1.6h-1.6zM1471 832h1.6v1.6h-1.6zM1389 866h1.6v1.6h-1.6zM1381 699h1.6v1.6h-1.6zM1561 811h1.6v1.6h-1.6zM1447 859h1.6v1.6h-1.6zM1341 914h1.6v1.6h-1.6zM1460 934h1.6v1.6h-1.6zM1533 789h1.6v1.6h-1.6zM1557 843h1.6v1.6h-1.6zM1524 780h1.6v1.6h-1.6zM1492 875h1.6v1.6h-1.6zM1443 816h1.6v1.6h-1.6zM1514 612h1.6v1.6h-1.6zM1483 801h1.6v1.6h-1.6zM1472 857h1.6v1.6h-1.6zM1606 903h1.6v1.6h-1.6zM1486 731h1.6v1.6h-1.6zM1430 824h1.6v1.6h-1.6zM1531 613h1.6v1.6h-1.6zM1327 859h1.6v1.6h-1.6zM1364 886h1.6v1.6h-1.6zM1527 837h1.6v1.6h-1.6zM1305 848h1.6v1.6h-1.6zM1402 910h1.6v1.6h-1.6zM1516 707h1.6v1.6h-1.6zM1604 833h1.6v1.6h-1.6zM1314 815h1.6v1.6h-1.6zM1478 609h1.6v1.6h-1.6zM1428 819h1.6v1.6h-1.6zM1525 889h1.6v1.6h-1.6zM1544 856h1.6v1.6h-1.6zM1495 850h1.6v1.6h-1.6zM1386 814h1.6v1.6h-1.6zM1542 832h1.6v1.6h-1.6zM1432 904h1.6v1.6h-1.6zM1401 831h1.6v1.6h-1.6zM1476 778h1.6v1.6h-1.6zM1479 852h1.6v1.6h-1.6zM1453 813h1.6v1.6h-1.6zM1387 656h1.6v1.6h-1.6zM1493 598h1.6v1.6h-1.6zM1303 916h1.6v1.6h-1.6zM1308 860h1.6v1.6h-1.6zM1554 850h1.6v1.6h-1.6zM1340 856h1.6v1.6h-1.6zM1504 774h1.6v1.6h-1.6zM1296 889h1.6v1.6h-1.6zM1479 783h1.6v1.6h-1.6zM1631 670h1.6v1.6h-1.6zM1455 676h1.6v1.6h-1.6zM1534 826h1.6v1.6h-1.6zM1524 628h1.6v1.6h-1.6zM1393 825h1.6v1.6h-1.6zM1597 659h1.6v1.6h-1.6zM1437 640h1.6v1.6h-1.6zM1397 840h1.6v1.6h-1.6zM1401 853h1.6v1.6h-1.6zM1475 926h1.6v1.6h-1.6zM1452 816h1.6v1.6h-1.6zM1255 949h1.6v1.6h-1.6zM1402 896h1.6v1.6h-1.6zM1442 843h1.6v1.6h-1.6zM1495 899h1.6v1.6h-1.6zM1494 765h1.6v1.6h-1.6zM1543 813h1.6v1.6h-1.6zM1264 846h1.6v1.6h-1.6zM1426 795h1.6v1.6h-1.6zM1386 816h1.6v1.6h-1.6zM1484 808h1.6v1.6h-1.6zM1463 833h1.6v1.6h-1.6zM1505 869h1.6v1.6h-1.6zM1492 890h1.6v1.6h-1.6zM1512 619h1.6v1.6h-1.6zM1522 780h1.6v1.6h-1.6zM1386 932h1.6v1.6h-1.6zM1356 733h1.6v1.6h-1.6zM1398 944h1.6v1.6h-1.6zM1157 832h1.6v1.6h-1.6zM1375 807h1.6v1.6h-1.6zM1499 651h1.6v1.6h-1.6zM1494 814h1.6v1.6h-1.6zM1490 646h1.6v1.6h-1.6zM1453 742h1.6v1.6h-1.6zM1258 797h1.6v1.6h-1.6zM1485 821h1.6v1.6h-1.6zM1482 695h1.6v1.6h-1.6zM1500 851h1.6v1.6h-1.6zM1520 637h1.6v1.6h-1.6zM1445 874h1.6v1.6h-1.6zM1420 790h1.6v1.6h-1.6zM1536 848h1.6v1.6h-1.6zM1429 811h1.6v1.6h-1.6zM1600 793h1.6v1.6h-1.6zM1275 789h1.6v1.6h-1.6zM1476 648h1.6v1.6h-1.6zM1509 678h1.6v1.6h-1.6zM1517 842h1.6v1.6h-1.6zM1493 792h1.6v1.6h-1.6zM1436 867h1.6v1.6h-1.6zM1402 866h1.6v1.6h-1.6zM1397 811h1.6v1.6h-1.6zM1420 815h1.6v1.6h-1.6zM1216 729h1.6v1.6h-1.6zM1402 822h1.6v1.6h-1.6zM1465 899h1.6v1.6h-1.6zM1330 685h1.6v1.6h-1.6zM1494 798h1.6v1.6h-1.6zM1407 876h1.6v1.6h-1.6zM1559 600h1.6v1.6h-1.6zM1339 827h1.6v1.6h-1.6zM1366 714h1.6v1.6h-1.6zM1348 802h1.6v1.6h-1.6zM1287 847h1.6v1.6h-1.6zM1498 863h1.6v1.6h-1.6zM1391 601h1.6v1.6h-1.6zM1494 787h1.6v1.6h-1.6zM1370 840h1.6v1.6h-1.6zM1382 746h1.6v1.6h-1.6zM1402 700h1.6v1.6h-1.6zM1492 812h1.6v1.6h-1.6zM1487 873h1.6v1.6h-1.6zM1561 821h1.6v1.6h-1.6zM1505 735h1.6v1.6h-1.6zM1379 655h1.6v1.6h-1.6zM1460 828h1.6v1.6h-1.6zM1430 632h1.6v1.6h-1.6zM1159 725h1.6v1.6h-1.6zM1398 836h1.6v1.6h-1.6zM1552 805h1.6v1.6h-1.6zM1466 735h1.6v1.6h-1.6zM1385 861h1.6v1.6h-1.6zM1610 707h1.6v1.6h-1.6zM1519 889h1.6v1.6h-1.6zM1435 823h1.6v1.6h-1.6zM1635 839h1.6v1.6h-1.6zM1422 856h1.6v1.6h-1.6zM1554 783h1.6v1.6h-1.6zM1351 807h1.6v1.6h-1.6zM1421 616h1.6v1.6h-1.6zM1376 820h1.6v1.6h-1.6zM1377 709h1.6v1.6h-1.6zM1392 741h1.6v1.6h-1.6zM1420 651h1.6v1.6h-1.6zM1497 732h1.6v1.6h-1.6zM1660 640h1.6v1.6h-1.6zM1339 859h1.6v1.6h-1.6zM1455 785h1.6v1.6h-1.6zM1482 666h1.6v1.6h-1.6zM1607 831h1.6v1.6h-1.6zM1358 749h1.6v1.6h-1.6zM1376 809h1.6v1.6h-1.6zM1388 758h1.6v1.6h-1.6zM1512 640h1.6v1.6h-1.6zM1372 783h1.6v1.6h-1.6zM1500 606h1.6v1.6h-1.6zM1504 890h1.6v1.6h-1.6zM1295 789h1.6v1.6h-1.6zM1296 608h1.6v1.6h-1.6zM1483 833h1.6v1.6h-1.6zM1488 886h1.6v1.6h-1.6zM1662 665h1.6v1.6h-1.6zM1362 851h1.6v1.6h-1.6zM1455 825h1.6v1.6h-1.6zM1382 987h1.6v1.6h-1.6zM1449 810h1.6v1.6h-1.6zM1272 858h1.6v1.6h-1.6zM1354 818h1.6v1.6h-1.6zM1385 678h1.6v1.6h-1.6zM1438 649h1.6v1.6h-1.6zM1365 703h1.6v1.6h-1.6zM1426 813h1.6v1.6h-1.6zM1456 802h1.6v1.6h-1.6zM1444 882h1.6v1.6h-1.6zM1456 799h1.6v1.6h-1.6zM1362 833h1.6v1.6h-1.6zM1408 729h1.6v1.6h-1.6zM1460 898h1.6v1.6h-1.6zM1530 959h1.6v1.6h-1.6zM1283 859h1.6v1.6h-1.6zM1493 733h1.6v1.6h-1.6zM1445 891h1.6v1.6h-1.6zM1439 859h1.6v1.6h-1.6zM1411 831h1.6v1.6h-1.6zM1509 634h1.6v1.6h-1.6zM1557 818h1.6v1.6h-1.6zM1458 606h1.6v1.6h-1.6zM1495 728h1.6v1.6h-1.6zM1164 946h1.6v1.6h-1.6zM1446 764h1.6v1.6h-1.6zM1373 789h1.6v1.6h-1.6zM1523 824h1.6v1.6h-1.6zM1411 778h1.6v1.6h-1.6zM1351 825h1.6v1.6h-1.6zM1421 781h1.6v1.6h-1.6zM1433 753h1.6v1.6h-1.6zM1424 832h1.6v1.6h-1.6zM1321 839h1.6v1.6h-1.6zM1504 712h1.6v1.6h-1.6zM1301 869h1.6v1.6h-1.6zM1415 836h1.6v1.6h-1.6zM1404 739h1.6v1.6h-1.6zM1515 842h1.6v1.6h-1.6zM1486 821h1.6v1.6h-1.6zM1452 859h1.6v1.6h-1.6zM1544 685h1.6v1.6h-1.6zM1522 764h1.6v1.6h-1.6zM1386 775h1.6v1.6h-1.6zM1374 850h1.6v1.6h-1.6zM1457 650h1.6v1.6h-1.6zM1419 766h1.6v1.6h-1.6zM1513 740h1.6v1.6h-1.6zM1520 780h1.6v1.6h-1.6zM1433 726h1.6v1.6h-1.6zM1559 771h1.6v1.6h-1.6zM1505 861h1.6v1.6h-1.6zM1551 826h1.6v1.6h-1.6zM1437 664h1.6v1.6h-1.6zM1289 805h1.6v1.6h-1.6zM1528 728h1.6v1.6h-1.6zM1437 852h1.6v1.6h-1.6zM1456 815h1.6v1.6h-1.6zM1332 871h1.6v1.6h-1.6zM1316 747h1.6v1.6h-1.6zM1408 934h1.6v1.6h-1.6zM1573 854h1.6v1.6h-1.6zM1508 622h1.6v1.6h-1.6zM1507 771h1.6v1.6h-1.6zM1353 823h1.6v1.6h-1.6zM1613 751h1.6v1.6h-1.6zM1324 896h1.6v1.6h-1.6zM1445 856h1.6v1.6h-1.6zM1390 836h1.6v1.6h-1.6zM1566 741h1.6v1.6h-1.6zM1304 836h1.6v1.6h-1.6zM1524 795h1.6v1.6h-1.6zM1363 880h1.6v1.6h-1.6zM1404 838h1.6v1.6h-1.6zM1450 821h1.6v1.6h-1.6zM1501 876h1.6v1.6h-1.6zM1478 629h1.6v1.6h-1.6zM1423 914h1.6v1.6h-1.6zM1442 825h1.6v1.6h-1.6zM1305 723h1.6v1.6h-1.6zM1371 805h1.6v1.6h-1.6zM1357 752h1.6v1.6h-1.6zM1448 594h1.6v1.6h-1.6zM1459 647h1.6v1.6h-1.6zM1542 638h1.6v1.6h-1.6zM1499 724h1.6v1.6h-1.6zM1232 692h1.6v1.6h-1.6zM1321 877h1.6v1.6h-1.6zM1544 641h1.6v1.6h-1.6zM1442 876h1.6v1.6h-1.6zM1407 785h1.6v1.6h-1.6zM1493 628h1.6v1.6h-1.6zM1420 601h1.6v1.6h-1.6zM1385 872h1.6v1.6h-1.6zM1517 692h1.6v1.6h-1.6zM1297 873h1.6v1.6h-1.6zM1418 656h1.6v1.6h-1.6zM1473 729h1.6v1.6h-1.6zM1466 699h1.6v1.6h-1.6zM1325 578h1.6v1.6h-1.6zM1508 887h1.6v1.6h-1.6zM1465 765h1.6v1.6h-1.6zM1420 904h1.6v1.6h-1.6zM1455 738h1.6v1.6h-1.6zM1445 643h1.6v1.6h-1.6zM1425 879h1.6v1.6h-1.6zM1415 901h1.6v1.6h-1.6zM1518 753h1.6v1.6h-1.6zM1458 657h1.6v1.6h-1.6zM1425 862h1.6v1.6h-1.6zM1385 853h1.6v1.6h-1.6zM1331 770h1.6v1.6h-1.6zM1288 844h1.6v1.6h-1.6zM1550 742h1.6v1.6h-1.6zM1561 844h1.6v1.6h-1.6zM1368 791h1.6v1.6h-1.6zM1456 852h1.6v1.6h-1.6zM1470 783h1.6v1.6h-1.6zM1516 814h1.6v1.6h-1.6zM1419 820h1.6v1.6h-1.6zM1498 611h1.6v1.6h-1.6zM1163 837h1.6v1.6h-1.6zM1478 822h1.6v1.6h-1.6zM1735 775h1.6v1.6h-1.6zM1382 748h1.6v1.6h-1.6zM1447 807h1.6v1.6h-1.6zM1583 902h1.6v1.6h-1.6zM1413 861h1.6v1.6h-1.6zM1527 795h1.6v1.6h-1.6zM1614 618h1.6v1.6h-1.6zM1454 797h1.6v1.6h-1.6zM1669 643h1.6v1.6h-1.6zM1431 923h1.6v1.6h-1.6zM1371 866h1.6v1.6h-1.6zM1454 631h1.6v1.6h-1.6zM1387 894h1.6v1.6h-1.6zM1456 844h1.6v1.6h-1.6zM1582 793h1.6v1.6h-1.6zM1386 936h1.6v1.6h-1.6zM1484 739h1.6v1.6h-1.6zM1442 876h1.6v1.6h-1.6zM1343 863h1.6v1.6h-1.6zM1308 903h1.6v1.6h-1.6zM1417 619h1.6v1.6h-1.6zM1465 758h1.6v1.6h-1.6zM1584 831h1.6v1.6h-1.6zM1488 796h1.6v1.6h-1.6zM1426 939h1.6v1.6h-1.6zM1399 790h1.6v1.6h-1.6zM1522 770h1.6v1.6h-1.6zM1388 853h1.6v1.6h-1.6zM1657 790h1.6v1.6h-1.6zM1465 714h1.6v1.6h-1.6zM1311 879h1.6v1.6h-1.6zM1479 633h1.6v1.6h-1.6zM1377 743h1.6v1.6h-1.6zM1345 659h1.6v1.6h-1.6zM1374 887h1.6v1.6h-1.6zM1431 740h1.6v1.6h-1.6zM1472 626h1.6v1.6h-1.6zM1327 861h1.6v1.6h-1.6zM1416 803h1.6v1.6h-1.6zM1514 787h1.6v1.6h-1.6zM1447 842h1.6v1.6h-1.6zM1515 784h1.6v1.6h-1.6zM1504 896h1.6v1.6h-1.6zM1420 675h1.6v1.6h-1.6zM1543 765h1.6v1.6h-1.6zM1164 739h1.6v1.6h-1.6zM1412 636h1.6v1.6h-1.6zM1479 674h1.6v1.6h-1.6zM1229 761h1.6v1.6h-1.6zM1601 842h1.6v1.6h-1.6zM1463 933h1.6v1.6h-1.6zM1402 833h1.6v1.6h-1.6zM1487 824h1.6v1.6h-1.6zM1082 614h1.6v1.6h-1.6zM1566 805h1.6v1.6h-1.6zM1605 764h1.6v1.6h-1.6zM1429 792h1.6v1.6h-1.6zM1455 758h1.6v1.6h-1.6zM1519 748h1.6v1.6h-1.6zM1361 787h1.6v1.6h-1.6zM1361 733h1.6v1.6h-1.6zM1414 810h1.6v1.6h-1.6zM1511 760h1.6v1.6h-1.6zM1455 632h1.6v1.6h-1.6zM1818 770h1.6v1.6h-1.6zM1305 702h1.6v1.6h-1.6zM1308 783h1.6v1.6h-1.6zM1460 717h1.6v1.6h-1.6zM1479 791h1.6v1.6h-1.6zM1418 796h1.6v1.6h-1.6zM1461 741h1.6v1.6h-1.6zM1376 746h1.6v1.6h-1.6zM1377 767h1.6v1.6h-1.6zM1416 864h1.6v1.6h-1.6zM1501 647h1.6v1.6h-1.6zM1504 620h1.6v1.6h-1.6zM1193 861h1.6v1.6h-1.6zM1463 862h1.6v1.6h-1.6zM1435 846h1.6v1.6h-1.6zM1522 853h1.6v1.6h-1.6zM1616 776h1.6v1.6h-1.6zM1309 845h1.6v1.6h-1.6zM1472 845h1.6v1.6h-1.6zM1504 629h1.6v1.6h-1.6zM1501 837h1.6v1.6h-1.6zM1493 844h1.6v1.6h-1.6zM1488 588h1.6v1.6h-1.6zM1457 810h1.6v1.6h-1.6zM1438 821h1.6v1.6h-1.6zM1299 836h1.6v1.6h-1.6zM1395 856h1.6v1.6h-1.6zM1390 785h1.6v1.6h-1.6zM1360 813h1.6v1.6h-1.6zM1510 626h1.6v1.6h-1.6zM1354 751h1.6v1.6h-1.6zM1388 752h1.6v1.6h-1.6zM1436 706h1.6v1.6h-1.6zM1543 631h1.6v1.6h-1.6zM1550 854h1.6v1.6h-1.6zM1469 825h1.6v1.6h-1.6zM1286 773h1.6v1.6h-1.6zM1397 638h1.6v1.6h-1.6zM1452 661h1.6v1.6h-1.6zM1564 797h1.6v1.6h-1.6zM1503 628h1.6v1.6h-1.6zM1484 651h1.6v1.6h-1.6zM1310 761h1.6v1.6h-1.6zM1428 808h1.6v1.6h-1.6zM1394 830h1.6v1.6h-1.6zM1520 803h1.6v1.6h-1.6zM1106 870h1.6v1.6h-1.6zM1524 633h1.6v1.6h-1.6zM1436 595h1.6v1.6h-1.6zM1455 815h1.6v1.6h-1.6zM1557 875h1.6v1.6h-1.6zM1507 853h1.6v1.6h-1.6zM1405 787h1.6v1.6h-1.6zM1329 845h1.6v1.6h-1.6zM1210 879h1.6v1.6h-1.6zM1396 755h1.6v1.6h-1.6zM1435 756h1.6v1.6h-1.6zM1478 811h1.6v1.6h-1.6zM1503 670h1.6v1.6h-1.6zM1543 800h1.6v1.6h-1.6zM1300 813h1.6v1.6h-1.6zM1477 822h1.6v1.6h-1.6zM1486 889h1.6v1.6h-1.6zM1360 715h1.6v1.6h-1.6zM1397 608h1.6v1.6h-1.6zM1506 829h1.6v1.6h-1.6zM1318 875h1.6v1.6h-1.6zM1398 806h1.6v1.6h-1.6zM1530 779h1.6v1.6h-1.6zM1594 878h1.6v1.6h-1.6zM1423 803h1.6v1.6h-1.6zM1435 605h1.6v1.6h-1.6zM1540 802h1.6v1.6h-1.6zM1323 765h1.6v1.6h-1.6zM1266 956h1.6v1.6h-1.6zM1410 822h1.6v1.6h-1.6zM1317 858h1.6v1.6h-1.6zM1501 723h1.6v1.6h-1.6zM1469 643h1.6v1.6h-1.6zM1439 835h1.6v1.6h-1.6zM1291 808h1.6v1.6h-1.6zM1611 745h1.6v1.6h-1.6zM1341 860h1.6v1.6h-1.6zM1273 786h1.6v1.6h-1.6zM1480 876h1.6v1.6h-1.6zM1506 733h1.6v1.6h-1.6zM1401 623h1.6v1.6h-1.6zM1248 888h1.6v1.6h-1.6zM1396 775h1.6v1.6h-1.6zM1395 916h1.6v1.6h-1.6zM1420 751h1.6v1.6h-1.6zM1469 813h1.6v1.6h-1.6zM1530 764h1.6v1.6h-1.6zM1440 637h1.6v1.6h-1.6zM1521 770h1.6v1.6h-1.6zM1534 609h1.6v1.6h-1.6zM1521 872h1.6v1.6h-1.6zM1460 603h1.6v1.6h-1.6zM1539 645h1.6v1.6h-1.6zM1240 784h1.6v1.6h-1.6zM1559 860h1.6v1.6h-1.6zM1576 801h1.6v1.6h-1.6zM1381 882h1.6v1.6h-1.6zM1414 860h1.6v1.6h-1.6zM1499 672h1.6v1.6h-1.6zM1448 711h1.6v1.6h-1.6zM1572 809h1.6v1.6h-1.6zM1493 859h1.6v1.6h-1.6zM1430 792h1.6v1.6h-1.6zM1429 579h1.6v1.6h-1.6zM1314 611h1.6v1.6h-1.6zM1660 623h1.6v1.6h-1.6zM1420 805h1.6v1.6h-1.6zM1565 834h1.6v1.6h-1.6zM1451 820h1.6v1.6h-1.6zM1537 872h1.6v1.6h-1.6zM1496 765h1.6v1.6h-1.6zM1552 787h1.6v1.6h-1.6zM1447 844h1.6v1.6h-1.6zM1511 600h1.6v1.6h-1.6zM1599 739h1.6v1.6h-1.6zM1361 860h1.6v1.6h-1.6zM1487 677h1.6v1.6h-1.6zM1478 839h1.6v1.6h-1.6zM1279 925h1.6v1.6h-1.6zM1383 886h1.6v1.6h-1.6zM1419 954h1.6v1.6h-1.6zM1433 641h1.6v1.6h-1.6zM1382 832h1.6v1.6h-1.6zM1458 960h1.6v1.6h-1.6zM1425 658h1.6v1.6h-1.6zM1410 826h1.6v1.6h-1.6zM1547 771h1.6v1.6h-1.6zM1576 924h1.6v1.6h-1.6zM1433 805h1.6v1.6h-1.6zM1486 809h1.6v1.6h-1.6zM1488 875h1.6v1.6h-1.6zM1405 735h1.6v1.6h-1.6zM1485 726h1.6v1.6h-1.6zM1396 750h1.6v1.6h-1.6zM1314 777h1.6v1.6h-1.6zM1432 787h1.6v1.6h-1.6zM1401 942h1.6v1.6h-1.6zM1417 625h1.6v1.6h-1.6zM1527 626h1.6v1.6h-1.6zM1409 903h1.6v1.6h-1.6zM1475 867h1.6v1.6h-1.6zM1493 790h1.6v1.6h-1.6zM1395 829h1.6v1.6h-1.6zM1458 866h1.6v1.6h-1.6zM1360 686h1.6v1.6h-1.6zM1555 645h1.6v1.6h-1.6zM1399 931h1.6v1.6h-1.6zM1435 781h1.6v1.6h-1.6zM1402 670h1.6v1.6h-1.6zM1600 828h1.6v1.6h-1.6zM1456 629h1.6v1.6h-1.6zM1504 889h1.6v1.6h-1.6zM1324 827h1.6v1.6h-1.6zM1511 817h1.6v1.6h-1.6zM1556 829h1.6v1.6h-1.6zM1355 856h1.6v1.6h-1.6zM1577 576h1.6v1.6h-1.6zM1534 831h1.6v1.6h-1.6zM1522 660h1.6v1.6h-1.6zM1525 644h1.6v1.6h-1.6zM1456 783h1.6v1.6h-1.6zM1368 805h1.6v1.6h-1.6zM1348 879h1.6v1.6h-1.6zM1673 821h1.6v1.6h-1.6zM1273 911h1.6v1.6h-1.6zM1403 641h1.6v1.6h-1.6zM1557 846h1.6v1.6h-1.6zM1351 855h1.6v1.6h-1.6zM1412 801h1.6v1.6h-1.6zM1450 785h1.6v1.6h-1.6zM1502 838h1.6v1.6h-1.6zM1358 795h1.6v1.6h-1.6zM1543 824h1.6v1.6h-1.6zM1348 777h1.6v1.6h-1.6zM1331 769h1.6v1.6h-1.6zM1449 736h1.6v1.6h-1.6zM1427 812h1.6v1.6h-1.6zM1601 708h1.6v1.6h-1.6zM1502 619h1.6v1.6h-1.6zM1420 806h1.6v1.6h-1.6zM1391 642h1.6v1.6h-1.6zM1437 641h1.6v1.6h-1.6zM1439 642h1.6v1.6h-1.6zM1476 840h1.6v1.6h-1.6zM1417 838h1.6v1.6h-1.6zM1518 615h1.6v1.6h-1.6zM1459 686h1.6v1.6h-1.6zM1428 862h1.6v1.6h-1.6zM1465 847h1.6v1.6h-1.6zM1518 664h1.6v1.6h-1.6zM1444 947h1.6v1.6h-1.6zM1326 780h1.6v1.6h-1.6zM1332 766h1.6v1.6h-1.6zM1446 636h1.6v1.6h-1.6zM1601 857h1.6v1.6h-1.6zM1343 812h1.6v1.6h-1.6zM1556 638h1.6v1.6h-1.6zM1541 633h1.6v1.6h-1.6zM1530 904h1.6v1.6h-1.6zM1406 671h1.6v1.6h-1.6zM1278 793h1.6v1.6h-1.6zM1572 624h1.6v1.6h-1.6zM1489 752h1.6v1.6h-1.6zM1493 887h1.6v1.6h-1.6zM1487 730h1.6v1.6h-1.6zM1464 892h1.6v1.6h-1.6zM1351 757h1.6v1.6h-1.6zM1445 865h1.6v1.6h-1.6zM1397 791h1.6v1.6h-1.6zM1371 810h1.6v1.6h-1.6zM1462 749h1.6v1.6h-1.6zM1378 682h1.6v1.6h-1.6zM1611 768h1.6v1.6h-1.6zM1397 815h1.6v1.6h-1.6zM1454 582h1.6v1.6h-1.6zM1567 606h1.6v1.6h-1.6zM1221 906h1.6v1.6h-1.6zM1388 919h1.6v1.6h-1.6zM1434 620h1.6v1.6h-1.6zM1600 790h1.6v1.6h-1.6zM1450 624h1.6v1.6h-1.6zM1356 904h1.6v1.6h-1.6zM1471 833h1.6v1.6h-1.6zM1249 731h1.6v1.6h-1.6zM1458 848h1.6v1.6h-1.6zM1538 626h1.6v1.6h-1.6zM1419 843h1.6v1.6h-1.6zM1406 827h1.6v1.6h-1.6zM1473 636h1.6v1.6h-1.6zM1448 766h1.6v1.6h-1.6zM1339 816h1.6v1.6h-1.6zM1247 919h1.6v1.6h-1.6zM1451 881h1.6v1.6h-1.6zM1512 650h1.6v1.6h-1.6zM1419 853h1.6v1.6h-1.6zM1363 770h1.6v1.6h-1.6zM1568 603h1.6v1.6h-1.6zM1589 832h1.6v1.6h-1.6zM1380 816h1.6v1.6h-1.6zM1339 776h1.6v1.6h-1.6zM1392 646h1.6v1.6h-1.6zM1401 896h1.6v1.6h-1.6zM1390 829h1.6v1.6h-1.6zM1410 862h1.6v1.6h-1.6zM1427 803h1.6v1.6h-1.6zM1562 855h1.6v1.6h-1.6zM1325 796h1.6v1.6h-1.6zM1406 893h1.6v1.6h-1.6zM1499 648h1.6v1.6h-1.6zM1457 838h1.6v1.6h-1.6zM1398 858h1.6v1.6h-1.6zM1321 813h1.6v1.6h-1.6zM1437 850h1.6v1.6h-1.6zM1451 769h1.6v1.6h-1.6zM1502 767h1.6v1.6h-1.6zM1403 822h1.6v1.6h-1.6zM1394 861h1.6v1.6h-1.6zM1337 825h1.6v1.6h-1.6zM1724 667h1.6v1.6h-1.6zM1646 640h1.6v1.6h-1.6zM1573 810h1.6v1.6h-1.6zM1539 753h1.6v1.6h-1.6zM1570 638h1.6v1.6h-1.6zM1348 801h1.6v1.6h-1.6zM1333 658h1.6v1.6h-1.6zM1353 886h1.6v1.6h-1.6zM1472 613h1.6v1.6h-1.6zM1314 861h1.6v1.6h-1.6zM1405 852h1.6v1.6h-1.6zM1547 740h1.6v1.6h-1.6zM1328 833h1.6v1.6h-1.6zM1500 631h1.6v1.6h-1.6zM1446 864h1.6v1.6h-1.6zM1416 869h1.6v1.6h-1.6zM1461 832h1.6v1.6h-1.6zM1448 876h1.6v1.6h-1.6zM1475 815h1.6v1.6h-1.6zM1250 804h1.6v1.6h-1.6zM1431 671h1.6v1.6h-1.6zM1439 909h1.6v1.6h-1.6zM1585 665h1.6v1.6h-1.6zM1465 885h1.6v1.6h-1.6zM1445 754h1.6v1.6h-1.6zM1436 850h1.6v1.6h-1.6zM1311 905h1.6v1.6h-1.6zM1450 815h1.6v1.6h-1.6zM1352 796h1.6v1.6h-1.6zM1365 644h1.6v1.6h-1.6zM1403 864h1.6v1.6h-1.6zM1190 827h1.6v1.6h-1.6zM1538 637h1.6v1.6h-1.6zM1486 710h1.6v1.6h-1.6zM1561 630h1.6v1.6h-1.6zM1431 776h1.6v1.6h-1.6zM1222 649h1.6v1.6h-1.6zM1525 795h1.6v1.6h-1.6zM1469 744h1.6v1.6h-1.6zM1443 774h1.6v1.6h-1.6zM1479 849h1.6v1.6h-1.6zM1339 775h1.6v1.6h-1.6zM1227 863h1.6v1.6h-1.6zM1397 597h1.6v1.6h-1.6zM1461 850h1.6v1.6h-1.6zM1374 635h1.6v1.6h-1.6zM1369 790h1.6v1.6h-1.6zM1405 874h1.6v1.6h-1.6zM1376 890h1.6v1.6h-1.6zM1319 700h1.6v1.6h-1.6zM1476 842h1.6v1.6h-1.6zM1528 761h1.6v1.6h-1.6zM1488 762h1.6v1.6h-1.6zM1497 651h1.6v1.6h-1.6zM1330 787h1.6v1.6h-1.6zM1449 784h1.6v1.6h-1.6zM1438 815h1.6v1.6h-1.6zM1369 857h1.6v1.6h-1.6zM1543 829h1.6v1.6h-1.6zM1362 860h1.6v1.6h-1.6zM1581 761h1.6v1.6h-1.6zM1492 615h1.6v1.6h-1.6zM1353 855h1.6v1.6h-1.6zM1439 941h1.6v1.6h-1.6zM1388 807h1.6v1.6h-1.6zM1478 738h1.6v1.6h-1.6zM1429 614h1.6v1.6h-1.6zM1444 605h1.6v1.6h-1.6zM1561 807h1.6v1.6h-1.6zM1395 728h1.6v1.6h-1.6zM1540 634h1.6v1.6h-1.6zM1501 715h1.6v1.6h-1.6zM1466 787h1.6v1.6h-1.6zM1402 737h1.6v1.6h-1.6zM1438 904h1.6v1.6h-1.6zM1368 814h1.6v1.6h-1.6zM1466 644h1.6v1.6h-1.6zM1551 710h1.6v1.6h-1.6zM1560 618h1.6v1.6h-1.6zM1556 784h1.6v1.6h-1.6zM1590 624h1.6v1.6h-1.6zM1414 769h1.6v1.6h-1.6zM1484 623h1.6v1.6h-1.6zM1441 887h1.6v1.6h-1.6zM1482 798h1.6v1.6h-1.6zM1488 931h1.6v1.6h-1.6zM1416 714h1.6v1.6h-1.6zM1526 792h1.6v1.6h-1.6zM1420 830h1.6v1.6h-1.6zM1421 775h1.6v1.6h-1.6zM1482 819h1.6v1.6h-1.6zM1470 863h1.6v1.6h-1.6zM1521 620h1.6v1.6h-1.6zM1284 906h1.6v1.6h-1.6zM1385 741h1.6v1.6h-1.6zM1535 793h1.6v1.6h-1.6zM1510 617h1.6v1.6h-1.6zM1312 809h1.6v1.6h-1.6zM1485 619h1.6v1.6h-1.6zM1423 798h1.6v1.6h-1.6zM1278 826h1.6v1.6h-1.6zM1513 757h1.6v1.6h-1.6zM1444 837h1.6v1.6h-1.6zM1363 765h1.6v1.6h-1.6zM1581 714h1.6v1.6h-1.6zM1288 845h1.6v1.6h-1.6zM1460 758h1.6v1.6h-1.6zM1473 892h1.6v1.6h-1.6zM1466 829h1.6v1.6h-1.6zM1558 906h1.6v1.6h-1.6zM1377 857h1.6v1.6h-1.6zM1522 743h1.6v1.6h-1.6zM1387 758h1.6v1.6h-1.6zM1519 830h1.6v1.6h-1.6zM1325 825h1.6v1.6h-1.6zM1494 875h1.6v1.6h-1.6zM1690 788h1.6v1.6h-1.6zM1400 916h1.6v1.6h-1.6zM1540 727h1.6v1.6h-1.6zM1315 773h1.6v1.6h-1.6zM1480 623h1.6v1.6h-1.6zM1414 748h1.6v1.6h-1.6zM1458 839h1.6v1.6h-1.6zM1587 643h1.6v1.6h-1.6zM1464 871h1.6v1.6h-1.6zM1376 791h1.6v1.6h-1.6zM1508 806h1.6v1.6h-1.6zM1332 809h1.6v1.6h-1.6zM1540 649h1.6v1.6h-1.6zM1312 790h1.6v1.6h-1.6zM1482 615h1.6v1.6h-1.6zM1485 854h1.6v1.6h-1.6zM1649 804h1.6v1.6h-1.6zM1421 617h1.6v1.6h-1.6zM1243 831h1.6v1.6h-1.6zM1258 870h1.6v1.6h-1.6zM1391 634h1.6v1.6h-1.6zM1539 827h1.6v1.6h-1.6zM1396 937h1.6v1.6h-1.6zM1490 778h1.6v1.6h-1.6zM1356 856h1.6v1.6h-1.6zM1325 790h1.6v1.6h-1.6zM1512 630h1.6v1.6h-1.6zM1492 705h1.6v1.6h-1.6zM1440 637h1.6v1.6h-1.6zM1520 866h1.6v1.6h-1.6zM1600 647h1.6v1.6h-1.6zM1437 762h1.6v1.6h-1.6zM1496 659h1.6v1.6h-1.6zM1427 649h1.6v1.6h-1.6zM1475 883h1.6v1.6h-1.6zM1796 714h1.6v1.6h-1.6zM1445 813h1.6v1.6h-1.6zM1672 686h1.6v1.6h-1.6zM1387 886h1.6v1.6h-1.6zM1567 686h1.6v1.6h-1.6zM1454 607h1.6v1.6h-1.6zM1491 720h1.6v1.6h-1.6zM1458 723h1.6v1.6h-1.6zM1459 942h1.6v1.6h-1.6zM1365 696h1.6v1.6h-1.6zM1360 898h1.6v1.6h-1.6zM1464 755h1.6v1.6h-1.6zM1521 751h1.6v1.6h-1.6zM1443 791h1.6v1.6h-1.6zM1337 826h1.6v1.6h-1.6zM1515 719h1.6v1.6h-1.6zM1535 818h1.6v1.6h-1.6zM1541 760h1.6v1.6h-1.6zM1384 779h1.6v1.6h-1.6zM1517 673h1.6v1.6h-1.6zM1412 850h1.6v1.6h-1.6zM1450 839h1.6v1.6h-1.6zM1432 759h1.6v1.6h-1.6zM1475 810h1.6v1.6h-1.6zM1541 842h1.6v1.6h-1.6zM1420 843h1.6v1.6h-1.6zM1207 637h1.6v1.6h-1.6zM1523 786h1.6v1.6h-1.6zM1393 725h1.6v1.6h-1.6zM1556 613h1.6v1.6h-1.6zM1452 808h1.6v1.6h-1.6zM1492 818h1.6v1.6h-1.6zM1305 848h1.6v1.6h-1.6zM1467 606h1.6v1.6h-1.6zM1454 877h1.6v1.6h-1.6zM1440 600h1.6v1.6h-1.6zM1286 665h1.6v1.6h-1.6zM1461 649h1.6v1.6h-1.6zM1392 588h1.6v1.6h-1.6zM1468 845h1.6v1.6h-1.6zM1427 806h1.6v1.6h-1.6zM1292 853h1.6v1.6h-1.6zM1372 805h1.6v1.6h-1.6zM1335 900h1.6v1.6h-1.6zM1416 835h1.6v1.6h-1.6zM1262 784h1.6v1.6h-1.6zM1456 893h1.6v1.6h-1.6zM1352 882h1.6v1.6h-1.6zM1493 832h1.6v1.6h-1.6zM1480 814h1.6v1.6h-1.6zM1510 803h1.6v1.6h-1.6zM1533 854h1.6v1.6h-1.6zM1479 846h1.6v1.6h-1.6zM1557 699h1.6v1.6h-1.6zM1384 862h1.6v1.6h-1.6zM1580 760h1.6v1.6h-1.6zM1400 856h1.6v1.6h-1.6zM1540 829h1.6v1.6h-1.6zM1461 831h1.6v1.6h-1.6zM1373 882h1.6v1.6h-1.6zM1383 911h1.6v1.6h-1.6zM1382 657h1.6v1.6h-1.6zM1388 821h1.6v1.6h-1.6zM1442 807h1.6v1.6h-1.6zM1502 802h1.6v1.6h-1.6zM1453 744h1.6v1.6h-1.6zM1468 815h1.6v1.6h-1.6zM1442 824h1.6v1.6h-1.6zM1454 821h1.6v1.6h-1.6zM1270 930h1.6v1.6h-1.6zM1491 800h1.6v1.6h-1.6zM1637 636h1.6v1.6h-1.6zM1457 801h1.6v1.6h-1.6zM1327 869h1.6v1.6h-1.6zM1442 796h1.6v1.6h-1.6zM1418 646h1.6v1.6h-1.6zM1417 860h1.6v1.6h-1.6zM1326 744h1.6v1.6h-1.6zM1397 622h1.6v1.6h-1.6zM1327 828h1.6v1.6h-1.6zM1453 649h1.6v1.6h-1.6zM1641 785h1.6v1.6h-1.6zM1463 859h1.6v1.6h-1.6zM1329 906h1.6v1.6h-1.6zM1462 891h1.6v1.6h-1.6zM1379 654h1.6v1.6h-1.6zM1517 603h1.6v1.6h-1.6zM1642 654h1.6v1.6h-1.6zM1485 847h1.6v1.6h-1.6zM1222 871h1.6v1.6h-1.6zM1493 874h1.6v1.6h-1.6zM1411 651h1.6v1.6h-1.6zM1617 854h1.6v1.6h-1.6zM1523 788h1.6v1.6h-1.6zM1559 890h1.6v1.6h-1.6zM1532 627h1.6v1.6h-1.6zM1481 889h1.6v1.6h-1.6zM1371 734h1.6v1.6h-1.6zM1484 629h1.6v1.6h-1.6zM1409 779h1.6v1.6h-1.6zM1459 878h1.6v1.6h-1.6zM1408 792h1.6v1.6h-1.6zM1496 831h1.6v1.6h-1.6zM1259 856h1.6v1.6h-1.6zM1452 824h1.6v1.6h-1.6zM1562 791h1.6v1.6h-1.6zM1452 864h1.6v1.6h-1.6zM1310 701h1.6v1.6h-1.6zM1472 850h1.6v1.6h-1.6zM1413 621h1.6v1.6h-1.6zM1506 814h1.6v1.6h-1.6zM1553 647h1.6v1.6h-1.6zM1383 921h1.6v1.6h-1.6zM1534 619h1.6v1.6h-1.6zM1530 892h1.6v1.6h-1.6zM1418 810h1.6v1.6h-1.6zM1508 827h1.6v1.6h-1.6zM1348 820h1.6v1.6h-1.6zM1408 836h1.6v1.6h-1.6zM1598 716h1.6v1.6h-1.6zM1490 849h1.6v1.6h-1.6zM1568 636h1.6v1.6h-1.6zM1548 847h1.6v1.6h-1.6zM1564 849h1.6v1.6h-1.6zM1351 779h1.6v1.6h-1.6zM1385 877h1.6v1.6h-1.6zM1408 805h1.6v1.6h-1.6zM1285 782h1.6v1.6h-1.6zM1336 780h1.6v1.6h-1.6zM1477 744h1.6v1.6h-1.6zM1483 648h1.6v1.6h-1.6zM1542 852h1.6v1.6h-1.6zM1484 867h1.6v1.6h-1.6zM1520 612h1.6v1.6h-1.6zM1394 883h1.6v1.6h-1.6zM1481 745h1.6v1.6h-1.6zM1394 800h1.6v1.6h-1.6zM1503 885h1.6v1.6h-1.6zM1490 809h1.6v1.6h-1.6zM1448 743h1.6v1.6h-1.6zM1589 630h1.6v1.6h-1.6zM1451 919h1.6v1.6h-1.6zM1447 942h1.6v1.6h-1.6zM1443 871h1.6v1.6h-1.6zM1446 786h1.6v1.6h-1.6zM1583 775h1.6v1.6h-1.6zM1473 828h1.6v1.6h-1.6zM1413 730h1.6v1.6h-1.6zM1289 982h1.6v1.6h-1.6zM1484 783h1.6v1.6h-1.6zM1423 743h1.6v1.6h-1.6zM1233 845h1.6v1.6h-1.6zM1221 874h1.6v1.6h-1.6zM1155 881h1.6v1.6h-1.6zM1462 727h1.6v1.6h-1.6zM1132 675h1.6v1.6h-1.6zM1336 848h1.6v1.6h-1.6zM1385 696h1.6v1.6h-1.6zM1307 786h1.6v1.6h-1.6zM1459 882h1.6v1.6h-1.6zM1412 696h1.6v1.6h-1.6zM1511 621h1.6v1.6h-1.6zM1383 725h1.6v1.6h-1.6zM1296 639h1.6v1.6h-1.6zM1488 892h1.6v1.6h-1.6zM1385 678h1.6v1.6h-1.6zM1407 886h1.6v1.6h-1.6zM1475 832h1.6v1.6h-1.6zM1415 904h1.6v1.6h-1.6zM1453 862h1.6v1.6h-1.6zM1378 843h1.6v1.6h-1.6zM1508 597h1.6v1.6h-1.6zM1434 830h1.6v1.6h-1.6zM1488 791h1.6v1.6h-1.6zM1508 811h1.6v1.6h-1.6zM1347 890h1.6v1.6h-1.6zM1319 786h1.6v1.6h-1.6zM1395 882h1.6v1.6h-1.6zM1258 704h1.6v1.6h-1.6zM1513 666h1.6v1.6h-1.6z" fill="#9a9a94" opacity="0.5"/><path d="M1502 817h1.2v1.2h-1.2zM1484 886h1.2v1.2h-1.2zM1260 816h1.2v1.2h-1.2zM1537 631h1.2v1.2h-1.2zM1258 806h1.2v1.2h-1.2zM1550 779h1.2v1.2h-1.2zM1320 672h1.2v1.2h-1.2zM1444 848h1.2v1.2h-1.2zM1463 664h1.2v1.2h-1.2zM1500 997h1.2v1.2h-1.2zM1485 818h1.2v1.2h-1.2zM1031 716h1.2v1.2h-1.2zM1429 728h1.2v1.2h-1.2zM1537 679h1.2v1.2h-1.2zM1238 843h1.2v1.2h-1.2zM1443 820h1.2v1.2h-1.2zM1426 854h1.2v1.2h-1.2zM1394 797h1.2v1.2h-1.2zM1472 877h1.2v1.2h-1.2zM1357 976h1.2v1.2h-1.2zM1413 781h1.2v1.2h-1.2zM1450 873h1.2v1.2h-1.2zM1568 905h1.2v1.2h-1.2zM1379 834h1.2v1.2h-1.2zM1522 782h1.2v1.2h-1.2zM1723 661h1.2v1.2h-1.2zM1509 806h1.2v1.2h-1.2zM1283 874h1.2v1.2h-1.2zM1274 706h1.2v1.2h-1.2zM1373 777h1.2v1.2h-1.2zM1393 914h1.2v1.2h-1.2zM1371 776h1.2v1.2h-1.2zM1451 653h1.2v1.2h-1.2zM1189 861h1.2v1.2h-1.2zM1464 852h1.2v1.2h-1.2zM1354 807h1.2v1.2h-1.2zM1394 796h1.2v1.2h-1.2zM1449 815h1.2v1.2h-1.2zM1461 671h1.2v1.2h-1.2zM1480 811h1.2v1.2h-1.2zM1159 712h1.2v1.2h-1.2zM1495 844h1.2v1.2h-1.2zM1554 868h1.2v1.2h-1.2zM1418 788h1.2v1.2h-1.2zM1552 849h1.2v1.2h-1.2zM1444 761h1.2v1.2h-1.2zM1532 911h1.2v1.2h-1.2zM1311 672h1.2v1.2h-1.2zM1342 910h1.2v1.2h-1.2zM1399 790h1.2v1.2h-1.2zM1533 779h1.2v1.2h-1.2zM1441 652h1.2v1.2h-1.2zM1298 586h1.2v1.2h-1.2zM1354 771h1.2v1.2h-1.2zM1469 871h1.2v1.2h-1.2zM1408 875h1.2v1.2h-1.2zM1404 670h1.2v1.2h-1.2zM1416 784h1.2v1.2h-1.2zM1498 760h1.2v1.2h-1.2zM1564 633h1.2v1.2h-1.2zM1281 819h1.2v1.2h-1.2zM1207 835h1.2v1.2h-1.2zM1447 851h1.2v1.2h-1.2zM1503 647h1.2v1.2h-1.2zM1475 876h1.2v1.2h-1.2zM1471 865h1.2v1.2h-1.2zM1424 594h1.2v1.2h-1.2zM1520 812h1.2v1.2h-1.2zM1480 848h1.2v1.2h-1.2zM1517 819h1.2v1.2h-1.2zM1539 639h1.2v1.2h-1.2zM1425 787h1.2v1.2h-1.2zM1281 906h1.2v1.2h-1.2zM1463 815h1.2v1.2h-1.2zM1314 866h1.2v1.2h-1.2zM1472 833h1.2v1.2h-1.2zM1492 668h1.2v1.2h-1.2zM1512 888h1.2v1.2h-1.2zM1471 704h1.2v1.2h-1.2zM1409 843h1.2v1.2h-1.2zM1460 853h1.2v1.2h-1.2zM1396 637h1.2v1.2h-1.2zM1394 905h1.2v1.2h-1.2zM1470 762h1.2v1.2h-1.2zM1388 866h1.2v1.2h-1.2zM1434 747h1.2v1.2h-1.2zM1421 615h1.2v1.2h-1.2zM1417 661h1.2v1.2h-1.2zM1208 865h1.2v1.2h-1.2zM1398 642h1.2v1.2h-1.2zM1374 878h1.2v1.2h-1.2zM1419 727h1.2v1.2h-1.2zM1579 617h1.2v1.2h-1.2zM1537 626h1.2v1.2h-1.2zM1406 896h1.2v1.2h-1.2zM1531 869h1.2v1.2h-1.2zM1589 785h1.2v1.2h-1.2zM1453 748h1.2v1.2h-1.2zM1539 869h1.2v1.2h-1.2zM1509 620h1.2v1.2h-1.2zM1579 776h1.2v1.2h-1.2zM1424 855h1.2v1.2h-1.2zM1228 795h1.2v1.2h-1.2zM1538 625h1.2v1.2h-1.2zM1247 861h1.2v1.2h-1.2zM1352 668h1.2v1.2h-1.2zM1438 836h1.2v1.2h-1.2zM1532 784h1.2v1.2h-1.2zM1420 880h1.2v1.2h-1.2zM1533 878h1.2v1.2h-1.2zM1290 899h1.2v1.2h-1.2zM1406 761h1.2v1.2h-1.2zM1515 655h1.2v1.2h-1.2zM1412 735h1.2v1.2h-1.2zM1335 719h1.2v1.2h-1.2zM1353 867h1.2v1.2h-1.2zM1260 881h1.2v1.2h-1.2zM1355 796h1.2v1.2h-1.2zM1583 863h1.2v1.2h-1.2zM1486 794h1.2v1.2h-1.2zM1450 818h1.2v1.2h-1.2zM1458 881h1.2v1.2h-1.2zM1326 999h1.2v1.2h-1.2zM1346 776h1.2v1.2h-1.2zM1381 770h1.2v1.2h-1.2zM1394 612h1.2v1.2h-1.2zM1522 609h1.2v1.2h-1.2zM1443 657h1.2v1.2h-1.2zM1454 878h1.2v1.2h-1.2zM1513 861h1.2v1.2h-1.2zM1228 868h1.2v1.2h-1.2zM1614 649h1.2v1.2h-1.2zM1501 679h1.2v1.2h-1.2zM1370 796h1.2v1.2h-1.2zM1358 614h1.2v1.2h-1.2zM1452 822h1.2v1.2h-1.2zM1510 794h1.2v1.2h-1.2zM1481 791h1.2v1.2h-1.2zM1278 857h1.2v1.2h-1.2zM1413 747h1.2v1.2h-1.2zM1263 877h1.2v1.2h-1.2zM1424 802h1.2v1.2h-1.2zM1455 808h1.2v1.2h-1.2zM1482 636h1.2v1.2h-1.2zM1243 849h1.2v1.2h-1.2zM1347 858h1.2v1.2h-1.2zM1719 802h1.2v1.2h-1.2zM1357 859h1.2v1.2h-1.2zM1509 776h1.2v1.2h-1.2zM1433 887h1.2v1.2h-1.2zM1542 808h1.2v1.2h-1.2zM1558 655h1.2v1.2h-1.2zM1459 860h1.2v1.2h-1.2zM1515 843h1.2v1.2h-1.2zM1424 870h1.2v1.2h-1.2zM1278 842h1.2v1.2h-1.2zM1500 846h1.2v1.2h-1.2zM1487 813h1.2v1.2h-1.2zM1475 645h1.2v1.2h-1.2zM1458 738h1.2v1.2h-1.2zM1554 848h1.2v1.2h-1.2zM1629 643h1.2v1.2h-1.2zM1601 814h1.2v1.2h-1.2zM1427 716h1.2v1.2h-1.2zM1492 820h1.2v1.2h-1.2zM1456 667h1.2v1.2h-1.2zM1427 891h1.2v1.2h-1.2zM1537 641h1.2v1.2h-1.2zM1446 816h1.2v1.2h-1.2zM1365 869h1.2v1.2h-1.2zM1402 845h1.2v1.2h-1.2zM1618 825h1.2v1.2h-1.2zM1516 816h1.2v1.2h-1.2zM1395 913h1.2v1.2h-1.2zM1413 808h1.2v1.2h-1.2zM1299 878h1.2v1.2h-1.2zM1239 862h1.2v1.2h-1.2zM1536 777h1.2v1.2h-1.2zM1385 808h1.2v1.2h-1.2zM1465 791h1.2v1.2h-1.2zM1310 829h1.2v1.2h-1.2zM1344 831h1.2v1.2h-1.2zM1482 820h1.2v1.2h-1.2zM1375 833h1.2v1.2h-1.2zM1342 754h1.2v1.2h-1.2zM1282 788h1.2v1.2h-1.2zM1399 675h1.2v1.2h-1.2zM1393 841h1.2v1.2h-1.2zM1309 794h1.2v1.2h-1.2zM1469 789h1.2v1.2h-1.2zM1424 672h1.2v1.2h-1.2zM1243 932h1.2v1.2h-1.2zM1435 863h1.2v1.2h-1.2zM1354 723h1.2v1.2h-1.2zM1500 797h1.2v1.2h-1.2zM1474 813h1.2v1.2h-1.2zM1573 650h1.2v1.2h-1.2zM1418 911h1.2v1.2h-1.2zM1445 914h1.2v1.2h-1.2zM1525 827h1.2v1.2h-1.2zM1575 887h1.2v1.2h-1.2zM1261 632h1.2v1.2h-1.2zM1345 825h1.2v1.2h-1.2zM1283 810h1.2v1.2h-1.2zM1541 829h1.2v1.2h-1.2zM1465 750h1.2v1.2h-1.2zM1480 628h1.2v1.2h-1.2zM1532 783h1.2v1.2h-1.2zM1344 895h1.2v1.2h-1.2zM1206 931h1.2v1.2h-1.2zM1531 780h1.2v1.2h-1.2zM1498 886h1.2v1.2h-1.2zM1458 643h1.2v1.2h-1.2zM1387 775h1.2v1.2h-1.2zM1381 1009h1.2v1.2h-1.2zM1404 770h1.2v1.2h-1.2zM1507 631h1.2v1.2h-1.2zM1423 863h1.2v1.2h-1.2zM1378 858h1.2v1.2h-1.2zM1534 628h1.2v1.2h-1.2zM1401 631h1.2v1.2h-1.2zM1543 869h1.2v1.2h-1.2zM1511 809h1.2v1.2h-1.2zM1555 885h1.2v1.2h-1.2zM1354 866h1.2v1.2h-1.2zM1576 608h1.2v1.2h-1.2zM1266 638h1.2v1.2h-1.2zM1462 839h1.2v1.2h-1.2zM1382 792h1.2v1.2h-1.2zM1412 652h1.2v1.2h-1.2zM1606 908h1.2v1.2h-1.2zM1421 764h1.2v1.2h-1.2zM1354 840h1.2v1.2h-1.2zM1484 852h1.2v1.2h-1.2zM1598 768h1.2v1.2h-1.2zM1583 869h1.2v1.2h-1.2zM1520 611h1.2v1.2h-1.2zM1553 832h1.2v1.2h-1.2zM1478 612h1.2v1.2h-1.2zM1407 777h1.2v1.2h-1.2zM1525 832h1.2v1.2h-1.2zM1399 780h1.2v1.2h-1.2zM1389 792h1.2v1.2h-1.2zM1408 782h1.2v1.2h-1.2zM1282 861h1.2v1.2h-1.2zM1629 829h1.2v1.2h-1.2zM1531 756h1.2v1.2h-1.2zM1513 616h1.2v1.2h-1.2zM1475 617h1.2v1.2h-1.2zM1277 940h1.2v1.2h-1.2zM1408 864h1.2v1.2h-1.2zM1408 633h1.2v1.2h-1.2zM1494 750h1.2v1.2h-1.2zM1479 762h1.2v1.2h-1.2zM1203 679h1.2v1.2h-1.2zM1548 639h1.2v1.2h-1.2zM1409 808h1.2v1.2h-1.2zM1517 662h1.2v1.2h-1.2zM1422 757h1.2v1.2h-1.2zM1468 857h1.2v1.2h-1.2zM1453 647h1.2v1.2h-1.2zM1371 885h1.2v1.2h-1.2zM1400 796h1.2v1.2h-1.2zM1438 846h1.2v1.2h-1.2zM1348 914h1.2v1.2h-1.2zM1616 557h1.2v1.2h-1.2zM1425 626h1.2v1.2h-1.2zM1535 625h1.2v1.2h-1.2zM1331 864h1.2v1.2h-1.2zM1361 627h1.2v1.2h-1.2zM1611 758h1.2v1.2h-1.2zM1805 712h1.2v1.2h-1.2zM1417 799h1.2v1.2h-1.2zM1544 805h1.2v1.2h-1.2zM1439 713h1.2v1.2h-1.2zM1470 930h1.2v1.2h-1.2zM1352 858h1.2v1.2h-1.2zM1461 902h1.2v1.2h-1.2zM1448 802h1.2v1.2h-1.2zM1291 808h1.2v1.2h-1.2zM1317 834h1.2v1.2h-1.2zM1441 789h1.2v1.2h-1.2zM1365 791h1.2v1.2h-1.2zM1422 798h1.2v1.2h-1.2zM1287 874h1.2v1.2h-1.2zM1318 833h1.2v1.2h-1.2zM1500 727h1.2v1.2h-1.2zM1435 827h1.2v1.2h-1.2zM1465 717h1.2v1.2h-1.2zM1463 839h1.2v1.2h-1.2zM1360 794h1.2v1.2h-1.2zM1387 628h1.2v1.2h-1.2zM1416 846h1.2v1.2h-1.2zM1549 826h1.2v1.2h-1.2zM1467 796h1.2v1.2h-1.2zM1596 774h1.2v1.2h-1.2zM1397 646h1.2v1.2h-1.2zM1493 853h1.2v1.2h-1.2zM1487 772h1.2v1.2h-1.2zM1489 834h1.2v1.2h-1.2zM1416 889h1.2v1.2h-1.2zM1502 625h1.2v1.2h-1.2zM1294 843h1.2v1.2h-1.2zM1463 807h1.2v1.2h-1.2zM1917 998h1.2v1.2h-1.2zM1410 787h1.2v1.2h-1.2zM1481 614h1.2v1.2h-1.2zM1443 876h1.2v1.2h-1.2zM1534 803h1.2v1.2h-1.2zM1336 828h1.2v1.2h-1.2zM1485 844h1.2v1.2h-1.2zM1494 754h1.2v1.2h-1.2zM1464 676h1.2v1.2h-1.2zM1428 636h1.2v1.2h-1.2zM1434 747h1.2v1.2h-1.2zM1516 840h1.2v1.2h-1.2zM1480 777h1.2v1.2h-1.2zM1378 808h1.2v1.2h-1.2zM1410 618h1.2v1.2h-1.2zM1439 807h1.2v1.2h-1.2zM1464 809h1.2v1.2h-1.2zM1479 839h1.2v1.2h-1.2zM1529 609h1.2v1.2h-1.2zM1463 882h1.2v1.2h-1.2zM1496 812h1.2v1.2h-1.2zM1471 741h1.2v1.2h-1.2zM1593 757h1.2v1.2h-1.2zM1509 789h1.2v1.2h-1.2zM1479 845h1.2v1.2h-1.2zM1504 780h1.2v1.2h-1.2zM1570 804h1.2v1.2h-1.2zM1612 792h1.2v1.2h-1.2zM1461 866h1.2v1.2h-1.2zM1454 627h1.2v1.2h-1.2zM1426 825h1.2v1.2h-1.2zM1491 846h1.2v1.2h-1.2zM1378 833h1.2v1.2h-1.2zM1449 851h1.2v1.2h-1.2zM1340 869h1.2v1.2h-1.2zM1380 897h1.2v1.2h-1.2zM1542 820h1.2v1.2h-1.2zM1374 941h1.2v1.2h-1.2zM1420 750h1.2v1.2h-1.2zM1358 781h1.2v1.2h-1.2zM1305 618h1.2v1.2h-1.2zM1321 873h1.2v1.2h-1.2zM1416 821h1.2v1.2h-1.2zM1475 667h1.2v1.2h-1.2zM1636 915h1.2v1.2h-1.2zM1281 805h1.2v1.2h-1.2zM1487 615h1.2v1.2h-1.2zM1451 628h1.2v1.2h-1.2zM1379 678h1.2v1.2h-1.2zM1378 632h1.2v1.2h-1.2zM1350 870h1.2v1.2h-1.2zM1486 803h1.2v1.2h-1.2zM1370 819h1.2v1.2h-1.2zM1431 924h1.2v1.2h-1.2zM1394 821h1.2v1.2h-1.2zM1409 612h1.2v1.2h-1.2zM1392 670h1.2v1.2h-1.2zM1369 828h1.2v1.2h-1.2zM1414 834h1.2v1.2h-1.2zM1286 560h1.2v1.2h-1.2zM1491 847h1.2v1.2h-1.2zM1494 849h1.2v1.2h-1.2zM1354 656h1.2v1.2h-1.2zM1406 802h1.2v1.2h-1.2zM1529 876h1.2v1.2h-1.2zM1691 862h1.2v1.2h-1.2zM1123 908h1.2v1.2h-1.2zM1386 798h1.2v1.2h-1.2zM1434 918h1.2v1.2h-1.2zM1618 667h1.2v1.2h-1.2zM1390 923h1.2v1.2h-1.2zM1343 819h1.2v1.2h-1.2zM1379 841h1.2v1.2h-1.2zM1468 722h1.2v1.2h-1.2zM1482 766h1.2v1.2h-1.2zM1406 637h1.2v1.2h-1.2zM1556 866h1.2v1.2h-1.2zM1470 656h1.2v1.2h-1.2zM1399 838h1.2v1.2h-1.2zM1486 839h1.2v1.2h-1.2zM1404 714h1.2v1.2h-1.2zM1452 881h1.2v1.2h-1.2zM1366 648h1.2v1.2h-1.2zM1353 854h1.2v1.2h-1.2zM1551 864h1.2v1.2h-1.2zM1532 845h1.2v1.2h-1.2zM1489 602h1.2v1.2h-1.2zM1443 660h1.2v1.2h-1.2zM1381 873h1.2v1.2h-1.2zM1372 761h1.2v1.2h-1.2zM1280 624h1.2v1.2h-1.2zM1665 892h1.2v1.2h-1.2zM1398 725h1.2v1.2h-1.2zM1573 846h1.2v1.2h-1.2zM1397 635h1.2v1.2h-1.2zM1400 807h1.2v1.2h-1.2zM1393 655h1.2v1.2h-1.2zM1569 649h1.2v1.2h-1.2zM1400 780h1.2v1.2h-1.2zM1493 903h1.2v1.2h-1.2zM1537 791h1.2v1.2h-1.2zM1413 878h1.2v1.2h-1.2zM1385 874h1.2v1.2h-1.2zM1418 831h1.2v1.2h-1.2zM1202 831h1.2v1.2h-1.2zM1416 861h1.2v1.2h-1.2zM1514 835h1.2v1.2h-1.2zM1574 907h1.2v1.2h-1.2zM1391 792h1.2v1.2h-1.2zM1377 775h1.2v1.2h-1.2zM1433 721h1.2v1.2h-1.2zM1495 827h1.2v1.2h-1.2zM1493 646h1.2v1.2h-1.2zM1610 778h1.2v1.2h-1.2zM1390 905h1.2v1.2h-1.2zM1591 818h1.2v1.2h-1.2zM1482 763h1.2v1.2h-1.2zM1423 627h1.2v1.2h-1.2zM1406 818h1.2v1.2h-1.2zM1373 866h1.2v1.2h-1.2zM1483 838h1.2v1.2h-1.2zM1384 606h1.2v1.2h-1.2zM1480 677h1.2v1.2h-1.2zM1428 845h1.2v1.2h-1.2zM1649 904h1.2v1.2h-1.2zM1457 675h1.2v1.2h-1.2zM1503 809h1.2v1.2h-1.2zM1285 920h1.2v1.2h-1.2zM1336 755h1.2v1.2h-1.2zM1695 785h1.2v1.2h-1.2zM1428 630h1.2v1.2h-1.2zM1313 862h1.2v1.2h-1.2zM1456 848h1.2v1.2h-1.2zM1307 746h1.2v1.2h-1.2zM1550 922h1.2v1.2h-1.2zM1391 715h1.2v1.2h-1.2zM1497 652h1.2v1.2h-1.2zM1426 677h1.2v1.2h-1.2zM1506 630h1.2v1.2h-1.2zM1495 806h1.2v1.2h-1.2zM1423 734h1.2v1.2h-1.2zM1574 844h1.2v1.2h-1.2zM1417 803h1.2v1.2h-1.2zM1463 844h1.2v1.2h-1.2zM1543 832h1.2v1.2h-1.2zM1442 832h1.2v1.2h-1.2zM1381 848h1.2v1.2h-1.2zM1404 800h1.2v1.2h-1.2zM1395 824h1.2v1.2h-1.2zM1447 829h1.2v1.2h-1.2zM1525 645h1.2v1.2h-1.2zM1278 699h1.2v1.2h-1.2zM1293 884h1.2v1.2h-1.2zM1408 656h1.2v1.2h-1.2zM1511 962h1.2v1.2h-1.2zM1456 890h1.2v1.2h-1.2zM1555 809h1.2v1.2h-1.2zM1542 741h1.2v1.2h-1.2zM1479 583h1.2v1.2h-1.2zM1516 646h1.2v1.2h-1.2zM1388 839h1.2v1.2h-1.2zM1463 629h1.2v1.2h-1.2zM1460 901h1.2v1.2h-1.2zM1379 901h1.2v1.2h-1.2zM1484 910h1.2v1.2h-1.2zM1502 805h1.2v1.2h-1.2zM1425 834h1.2v1.2h-1.2zM1414 691h1.2v1.2h-1.2zM1411 791h1.2v1.2h-1.2zM1445 646h1.2v1.2h-1.2zM1276 748h1.2v1.2h-1.2zM1472 766h1.2v1.2h-1.2zM1340 827h1.2v1.2h-1.2zM1522 849h1.2v1.2h-1.2zM1299 901h1.2v1.2h-1.2zM1471 823h1.2v1.2h-1.2zM1505 622h1.2v1.2h-1.2zM1375 882h1.2v1.2h-1.2zM1445 792h1.2v1.2h-1.2zM1423 603h1.2v1.2h-1.2zM1409 909h1.2v1.2h-1.2zM1360 666h1.2v1.2h-1.2zM1443 910h1.2v1.2h-1.2zM1448 763h1.2v1.2h-1.2zM1446 856h1.2v1.2h-1.2zM1516 756h1.2v1.2h-1.2zM1518 769h1.2v1.2h-1.2zM1443 827h1.2v1.2h-1.2zM1474 864h1.2v1.2h-1.2zM1315 781h1.2v1.2h-1.2zM1526 636h1.2v1.2h-1.2zM1458 746h1.2v1.2h-1.2zM1516 814h1.2v1.2h-1.2zM1472 859h1.2v1.2h-1.2zM1519 934h1.2v1.2h-1.2zM1686 656h1.2v1.2h-1.2zM1430 621h1.2v1.2h-1.2zM1400 805h1.2v1.2h-1.2zM1444 766h1.2v1.2h-1.2zM1471 765h1.2v1.2h-1.2zM1451 793h1.2v1.2h-1.2zM1492 628h1.2v1.2h-1.2zM1530 730h1.2v1.2h-1.2zM1539 839h1.2v1.2h-1.2zM1562 825h1.2v1.2h-1.2zM1323 799h1.2v1.2h-1.2zM1460 626h1.2v1.2h-1.2zM1545 671h1.2v1.2h-1.2zM1558 780h1.2v1.2h-1.2zM1458 871h1.2v1.2h-1.2zM1501 635h1.2v1.2h-1.2zM1358 830h1.2v1.2h-1.2zM1405 896h1.2v1.2h-1.2zM1399 866h1.2v1.2h-1.2zM1471 836h1.2v1.2h-1.2zM1312 822h1.2v1.2h-1.2zM1463 886h1.2v1.2h-1.2zM1259 824h1.2v1.2h-1.2zM1506 632h1.2v1.2h-1.2zM1626 650h1.2v1.2h-1.2zM1481 812h1.2v1.2h-1.2zM1351 673h1.2v1.2h-1.2zM1399 860h1.2v1.2h-1.2zM1369 653h1.2v1.2h-1.2zM1528 728h1.2v1.2h-1.2zM1363 829h1.2v1.2h-1.2zM1464 786h1.2v1.2h-1.2zM1488 811h1.2v1.2h-1.2zM1532 625h1.2v1.2h-1.2zM1355 744h1.2v1.2h-1.2zM1509 827h1.2v1.2h-1.2zM1273 844h1.2v1.2h-1.2zM1423 814h1.2v1.2h-1.2zM1413 800h1.2v1.2h-1.2zM1439 826h1.2v1.2h-1.2zM1427 613h1.2v1.2h-1.2zM1416 840h1.2v1.2h-1.2zM1600 634h1.2v1.2h-1.2zM1410 758h1.2v1.2h-1.2zM1342 597h1.2v1.2h-1.2zM1438 682h1.2v1.2h-1.2zM1428 905h1.2v1.2h-1.2zM1388 727h1.2v1.2h-1.2zM1524 852h1.2v1.2h-1.2zM1486 632h1.2v1.2h-1.2zM1576 843h1.2v1.2h-1.2zM1458 637h1.2v1.2h-1.2zM1409 611h1.2v1.2h-1.2zM1462 627h1.2v1.2h-1.2zM1307 875h1.2v1.2h-1.2zM1577 615h1.2v1.2h-1.2zM1540 788h1.2v1.2h-1.2zM1551 812h1.2v1.2h-1.2zM1360 901h1.2v1.2h-1.2zM1358 851h1.2v1.2h-1.2zM1495 708h1.2v1.2h-1.2zM1628 756h1.2v1.2h-1.2zM1481 820h1.2v1.2h-1.2zM1431 835h1.2v1.2h-1.2zM1402 779h1.2v1.2h-1.2zM1451 849h1.2v1.2h-1.2zM1472 785h1.2v1.2h-1.2zM1513 662h1.2v1.2h-1.2zM1544 620h1.2v1.2h-1.2zM1375 806h1.2v1.2h-1.2zM1543 602h1.2v1.2h-1.2zM1224 561h1.2v1.2h-1.2zM1417 840h1.2v1.2h-1.2zM1334 838h1.2v1.2h-1.2zM1516 804h1.2v1.2h-1.2zM1302 751h1.2v1.2h-1.2zM1349 818h1.2v1.2h-1.2zM1465 829h1.2v1.2h-1.2zM1477 858h1.2v1.2h-1.2zM1467 910h1.2v1.2h-1.2zM1416 862h1.2v1.2h-1.2zM1435 799h1.2v1.2h-1.2zM1448 845h1.2v1.2h-1.2zM1457 633h1.2v1.2h-1.2zM1516 719h1.2v1.2h-1.2zM1494 914h1.2v1.2h-1.2zM1470 830h1.2v1.2h-1.2zM1589 644h1.2v1.2h-1.2zM1411 813h1.2v1.2h-1.2zM1514 818h1.2v1.2h-1.2zM1456 640h1.2v1.2h-1.2zM1464 598h1.2v1.2h-1.2zM1416 716h1.2v1.2h-1.2zM1559 814h1.2v1.2h-1.2zM1422 834h1.2v1.2h-1.2zM1304 864h1.2v1.2h-1.2zM1426 857h1.2v1.2h-1.2zM1471 814h1.2v1.2h-1.2zM1400 869h1.2v1.2h-1.2zM1553 803h1.2v1.2h-1.2zM1212 804h1.2v1.2h-1.2zM1426 641h1.2v1.2h-1.2zM1385 870h1.2v1.2h-1.2zM1494 810h1.2v1.2h-1.2zM1336 892h1.2v1.2h-1.2zM1506 830h1.2v1.2h-1.2zM1567 838h1.2v1.2h-1.2zM1407 581h1.2v1.2h-1.2zM1401 758h1.2v1.2h-1.2zM1289 679h1.2v1.2h-1.2zM1375 936h1.2v1.2h-1.2zM1482 627h1.2v1.2h-1.2zM1307 580h1.2v1.2h-1.2zM1549 770h1.2v1.2h-1.2zM1387 766h1.2v1.2h-1.2zM1461 826h1.2v1.2h-1.2zM1429 823h1.2v1.2h-1.2zM1476 750h1.2v1.2h-1.2zM1393 665h1.2v1.2h-1.2zM1396 776h1.2v1.2h-1.2zM1428 759h1.2v1.2h-1.2zM1467 836h1.2v1.2h-1.2zM1419 831h1.2v1.2h-1.2zM1466 778h1.2v1.2h-1.2zM1563 672h1.2v1.2h-1.2zM1354 909h1.2v1.2h-1.2zM1440 792h1.2v1.2h-1.2zM1559 886h1.2v1.2h-1.2zM1307 907h1.2v1.2h-1.2zM1496 646h1.2v1.2h-1.2zM1384 757h1.2v1.2h-1.2zM1496 770h1.2v1.2h-1.2zM1278 779h1.2v1.2h-1.2zM1422 789h1.2v1.2h-1.2zM1402 612h1.2v1.2h-1.2zM1450 811h1.2v1.2h-1.2zM1401 829h1.2v1.2h-1.2zM1424 822h1.2v1.2h-1.2zM1424 886h1.2v1.2h-1.2zM1490 859h1.2v1.2h-1.2zM1488 869h1.2v1.2h-1.2zM1549 632h1.2v1.2h-1.2zM1329 751h1.2v1.2h-1.2zM1468 749h1.2v1.2h-1.2zM1686 603h1.2v1.2h-1.2zM1378 743h1.2v1.2h-1.2zM1473 965h1.2v1.2h-1.2zM1446 644h1.2v1.2h-1.2zM1392 828h1.2v1.2h-1.2zM1477 857h1.2v1.2h-1.2zM1531 704h1.2v1.2h-1.2zM1597 823h1.2v1.2h-1.2zM1430 731h1.2v1.2h-1.2zM1363 800h1.2v1.2h-1.2zM1523 607h1.2v1.2h-1.2zM1387 898h1.2v1.2h-1.2zM1496 794h1.2v1.2h-1.2zM1390 935h1.2v1.2h-1.2zM1353 870h1.2v1.2h-1.2zM1343 831h1.2v1.2h-1.2zM1259 887h1.2v1.2h-1.2zM1497 672h1.2v1.2h-1.2zM1510 854h1.2v1.2h-1.2zM1556 870h1.2v1.2h-1.2zM1360 787h1.2v1.2h-1.2zM1402 790h1.2v1.2h-1.2zM1314 882h1.2v1.2h-1.2zM1405 836h1.2v1.2h-1.2zM1334 613h1.2v1.2h-1.2zM1459 760h1.2v1.2h-1.2zM1462 633h1.2v1.2h-1.2zM1443 825h1.2v1.2h-1.2zM1314 887h1.2v1.2h-1.2zM1526 843h1.2v1.2h-1.2zM1514 863h1.2v1.2h-1.2zM1502 664h1.2v1.2h-1.2zM1553 804h1.2v1.2h-1.2zM1464 823h1.2v1.2h-1.2zM1361 876h1.2v1.2h-1.2zM1622 855h1.2v1.2h-1.2zM1396 854h1.2v1.2h-1.2zM1445 780h1.2v1.2h-1.2zM1422 905h1.2v1.2h-1.2zM1516 745h1.2v1.2h-1.2zM1333 855h1.2v1.2h-1.2zM1158 759h1.2v1.2h-1.2zM1462 647h1.2v1.2h-1.2zM1529 646h1.2v1.2h-1.2zM1480 647h1.2v1.2h-1.2zM1440 834h1.2v1.2h-1.2zM1622 690h1.2v1.2h-1.2zM1368 793h1.2v1.2h-1.2zM1381 841h1.2v1.2h-1.2zM1456 847h1.2v1.2h-1.2zM1501 896h1.2v1.2h-1.2zM1402 661h1.2v1.2h-1.2zM1439 646h1.2v1.2h-1.2zM1646 739h1.2v1.2h-1.2zM1356 752h1.2v1.2h-1.2zM1557 608h1.2v1.2h-1.2zM1460 796h1.2v1.2h-1.2zM1380 657h1.2v1.2h-1.2zM1403 907h1.2v1.2h-1.2zM1431 798h1.2v1.2h-1.2zM1490 757h1.2v1.2h-1.2zM1482 682h1.2v1.2h-1.2zM1459 621h1.2v1.2h-1.2zM1391 698h1.2v1.2h-1.2zM1377 802h1.2v1.2h-1.2zM1489 833h1.2v1.2h-1.2zM1482 785h1.2v1.2h-1.2zM1468 659h1.2v1.2h-1.2zM1473 663h1.2v1.2h-1.2zM1604 645h1.2v1.2h-1.2zM1499 884h1.2v1.2h-1.2zM1457 662h1.2v1.2h-1.2zM1444 628h1.2v1.2h-1.2zM1550 633h1.2v1.2h-1.2zM1581 754h1.2v1.2h-1.2zM1366 784h1.2v1.2h-1.2zM1494 878h1.2v1.2h-1.2zM1485 760h1.2v1.2h-1.2zM1528 730h1.2v1.2h-1.2zM1402 871h1.2v1.2h-1.2zM1468 853h1.2v1.2h-1.2zM1409 665h1.2v1.2h-1.2zM1578 615h1.2v1.2h-1.2zM1340 727h1.2v1.2h-1.2zM1466 754h1.2v1.2h-1.2zM1498 667h1.2v1.2h-1.2zM1555 802h1.2v1.2h-1.2zM1398 654h1.2v1.2h-1.2zM1395 811h1.2v1.2h-1.2zM1429 651h1.2v1.2h-1.2zM1547 736h1.2v1.2h-1.2zM1546 661h1.2v1.2h-1.2zM1382 859h1.2v1.2h-1.2zM1445 630h1.2v1.2h-1.2zM1508 855h1.2v1.2h-1.2zM1359 612h1.2v1.2h-1.2zM1421 672h1.2v1.2h-1.2zM1285 623h1.2v1.2h-1.2zM1543 884h1.2v1.2h-1.2zM1340 833h1.2v1.2h-1.2zM1456 849h1.2v1.2h-1.2zM1530 624h1.2v1.2h-1.2zM1505 591h1.2v1.2h-1.2zM1381 818h1.2v1.2h-1.2zM1381 762h1.2v1.2h-1.2zM1376 895h1.2v1.2h-1.2zM1245 888h1.2v1.2h-1.2zM1434 791h1.2v1.2h-1.2zM1377 637h1.2v1.2h-1.2zM1489 623h1.2v1.2h-1.2zM1557 874h1.2v1.2h-1.2zM1538 804h1.2v1.2h-1.2zM1476 835h1.2v1.2h-1.2zM1406 793h1.2v1.2h-1.2zM1430 861h1.2v1.2h-1.2zM1434 838h1.2v1.2h-1.2zM1355 806h1.2v1.2h-1.2zM1490 879h1.2v1.2h-1.2zM1340 680h1.2v1.2h-1.2zM1468 890h1.2v1.2h-1.2zM1425 653h1.2v1.2h-1.2zM1355 864h1.2v1.2h-1.2zM1328 826h1.2v1.2h-1.2zM1378 889h1.2v1.2h-1.2zM1449 615h1.2v1.2h-1.2zM1471 770h1.2v1.2h-1.2zM1416 781h1.2v1.2h-1.2zM1399 838h1.2v1.2h-1.2zM1304 852h1.2v1.2h-1.2zM1221 803h1.2v1.2h-1.2zM1621 648h1.2v1.2h-1.2zM1124 844h1.2v1.2h-1.2zM1446 835h1.2v1.2h-1.2zM1468 720h1.2v1.2h-1.2zM1492 654h1.2v1.2h-1.2zM1343 786h1.2v1.2h-1.2zM1552 780h1.2v1.2h-1.2zM1480 903h1.2v1.2h-1.2zM1616 625h1.2v1.2h-1.2zM1278 837h1.2v1.2h-1.2zM1422 854h1.2v1.2h-1.2zM1434 857h1.2v1.2h-1.2zM1373 724h1.2v1.2h-1.2zM1456 772h1.2v1.2h-1.2zM1470 659h1.2v1.2h-1.2zM1339 711h1.2v1.2h-1.2zM1400 697h1.2v1.2h-1.2zM1420 791h1.2v1.2h-1.2zM1583 781h1.2v1.2h-1.2zM1531 627h1.2v1.2h-1.2zM1498 633h1.2v1.2h-1.2zM1492 889h1.2v1.2h-1.2zM1451 642h1.2v1.2h-1.2zM1428 880h1.2v1.2h-1.2zM1445 636h1.2v1.2h-1.2zM1503 767h1.2v1.2h-1.2zM1550 877h1.2v1.2h-1.2zM1484 626h1.2v1.2h-1.2zM1373 738h1.2v1.2h-1.2zM1499 854h1.2v1.2h-1.2zM1509 748h1.2v1.2h-1.2zM1399 632h1.2v1.2h-1.2zM1513 638h1.2v1.2h-1.2zM1453 837h1.2v1.2h-1.2zM1368 881h1.2v1.2h-1.2zM1483 730h1.2v1.2h-1.2zM1391 848h1.2v1.2h-1.2zM1576 901h1.2v1.2h-1.2zM1545 756h1.2v1.2h-1.2zM1371 876h1.2v1.2h-1.2zM1345 880h1.2v1.2h-1.2zM1482 790h1.2v1.2h-1.2zM1419 829h1.2v1.2h-1.2zM1505 639h1.2v1.2h-1.2zM1483 854h1.2v1.2h-1.2zM1495 605h1.2v1.2h-1.2zM1094 869h1.2v1.2h-1.2zM1363 924h1.2v1.2h-1.2zM1404 874h1.2v1.2h-1.2zM1625 785h1.2v1.2h-1.2zM1366 798h1.2v1.2h-1.2zM1326 869h1.2v1.2h-1.2zM1430 791h1.2v1.2h-1.2zM1407 706h1.2v1.2h-1.2zM1326 836h1.2v1.2h-1.2zM1468 759h1.2v1.2h-1.2zM1487 629h1.2v1.2h-1.2zM1175 718h1.2v1.2h-1.2zM1456 804h1.2v1.2h-1.2zM1412 805h1.2v1.2h-1.2zM1413 631h1.2v1.2h-1.2zM1544 836h1.2v1.2h-1.2zM1421 749h1.2v1.2h-1.2zM1429 622h1.2v1.2h-1.2zM1463 643h1.2v1.2h-1.2zM1409 771h1.2v1.2h-1.2zM1406 819h1.2v1.2h-1.2zM1337 965h1.2v1.2h-1.2zM1517 783h1.2v1.2h-1.2zM1470 855h1.2v1.2h-1.2zM1405 938h1.2v1.2h-1.2zM1524 658h1.2v1.2h-1.2zM1405 727h1.2v1.2h-1.2zM1427 627h1.2v1.2h-1.2zM1308 729h1.2v1.2h-1.2zM1435 860h1.2v1.2h-1.2zM1494 690h1.2v1.2h-1.2zM1511 643h1.2v1.2h-1.2zM1423 859h1.2v1.2h-1.2zM1468 882h1.2v1.2h-1.2zM1339 780h1.2v1.2h-1.2zM1479 860h1.2v1.2h-1.2zM1587 782h1.2v1.2h-1.2zM1527 621h1.2v1.2h-1.2zM1692 821h1.2v1.2h-1.2zM1537 612h1.2v1.2h-1.2zM1531 653h1.2v1.2h-1.2zM1547 625h1.2v1.2h-1.2zM1554 861h1.2v1.2h-1.2zM1458 626h1.2v1.2h-1.2zM1459 845h1.2v1.2h-1.2zM1512 612h1.2v1.2h-1.2zM1471 624h1.2v1.2h-1.2zM1521 697h1.2v1.2h-1.2zM1360 887h1.2v1.2h-1.2zM1475 615h1.2v1.2h-1.2zM1471 774h1.2v1.2h-1.2zM1552 843h1.2v1.2h-1.2zM1443 847h1.2v1.2h-1.2zM1431 829h1.2v1.2h-1.2zM1463 619h1.2v1.2h-1.2zM1418 926h1.2v1.2h-1.2zM1540 796h1.2v1.2h-1.2zM1455 837h1.2v1.2h-1.2zM1481 829h1.2v1.2h-1.2zM1403 874h1.2v1.2h-1.2zM1430 779h1.2v1.2h-1.2zM1514 846h1.2v1.2h-1.2zM1497 854h1.2v1.2h-1.2zM1336 863h1.2v1.2h-1.2zM1327 844h1.2v1.2h-1.2zM1406 650h1.2v1.2h-1.2zM1390 814h1.2v1.2h-1.2zM1450 875h1.2v1.2h-1.2zM1538 631h1.2v1.2h-1.2zM1431 814h1.2v1.2h-1.2zM1344 919h1.2v1.2h-1.2zM1413 607h1.2v1.2h-1.2zM1514 756h1.2v1.2h-1.2zM1417 741h1.2v1.2h-1.2zM1375 856h1.2v1.2h-1.2zM1419 766h1.2v1.2h-1.2zM1305 812h1.2v1.2h-1.2zM1357 797h1.2v1.2h-1.2zM1346 832h1.2v1.2h-1.2zM1407 705h1.2v1.2h-1.2zM1570 789h1.2v1.2h-1.2zM1234 735h1.2v1.2h-1.2zM1354 779h1.2v1.2h-1.2zM1476 835h1.2v1.2h-1.2zM1390 829h1.2v1.2h-1.2zM1472 864h1.2v1.2h-1.2zM1470 849h1.2v1.2h-1.2zM1375 788h1.2v1.2h-1.2zM1360 839h1.2v1.2h-1.2zM1418 762h1.2v1.2h-1.2zM1329 744h1.2v1.2h-1.2zM1490 840h1.2v1.2h-1.2zM1561 731h1.2v1.2h-1.2zM1479 837h1.2v1.2h-1.2zM1447 883h1.2v1.2h-1.2zM1610 625h1.2v1.2h-1.2zM1208 653h1.2v1.2h-1.2zM1520 916h1.2v1.2h-1.2zM1513 780h1.2v1.2h-1.2zM1579 732h1.2v1.2h-1.2zM1485 775h1.2v1.2h-1.2zM1515 737h1.2v1.2h-1.2zM1453 805h1.2v1.2h-1.2zM1340 750h1.2v1.2h-1.2zM1474 813h1.2v1.2h-1.2zM1600 627h1.2v1.2h-1.2zM1445 767h1.2v1.2h-1.2zM1579 717h1.2v1.2h-1.2zM1611 770h1.2v1.2h-1.2zM1511 838h1.2v1.2h-1.2zM1434 752h1.2v1.2h-1.2zM1433 785h1.2v1.2h-1.2zM1551 889h1.2v1.2h-1.2zM1526 623h1.2v1.2h-1.2zM1427 603h1.2v1.2h-1.2zM1466 930h1.2v1.2h-1.2zM1662 735h1.2v1.2h-1.2zM1314 915h1.2v1.2h-1.2zM1465 661h1.2v1.2h-1.2zM1443 886h1.2v1.2h-1.2zM1466 803h1.2v1.2h-1.2zM1524 757h1.2v1.2h-1.2zM1458 709h1.2v1.2h-1.2zM1507 820h1.2v1.2h-1.2zM1428 749h1.2v1.2h-1.2zM1413 882h1.2v1.2h-1.2zM1527 764h1.2v1.2h-1.2zM1463 728h1.2v1.2h-1.2zM1503 739h1.2v1.2h-1.2zM1436 755h1.2v1.2h-1.2zM1529 629h1.2v1.2h-1.2zM1364 843h1.2v1.2h-1.2zM1472 766h1.2v1.2h-1.2zM1378 720h1.2v1.2h-1.2zM1514 769h1.2v1.2h-1.2zM1456 710h1.2v1.2h-1.2zM1568 750h1.2v1.2h-1.2zM1420 821h1.2v1.2h-1.2zM1426 824h1.2v1.2h-1.2zM1379 778h1.2v1.2h-1.2zM1453 692h1.2v1.2h-1.2zM1499 894h1.2v1.2h-1.2zM1490 865h1.2v1.2h-1.2zM1509 848h1.2v1.2h-1.2zM1535 632h1.2v1.2h-1.2zM1460 816h1.2v1.2h-1.2zM1423 916h1.2v1.2h-1.2zM1517 880h1.2v1.2h-1.2zM1425 575h1.2v1.2h-1.2zM1350 816h1.2v1.2h-1.2zM1503 612h1.2v1.2h-1.2zM1302 883h1.2v1.2h-1.2zM1507 783h1.2v1.2h-1.2zM1555 841h1.2v1.2h-1.2zM1436 791h1.2v1.2h-1.2zM1446 671h1.2v1.2h-1.2zM1366 632h1.2v1.2h-1.2zM1286 798h1.2v1.2h-1.2zM1531 857h1.2v1.2h-1.2zM1367 833h1.2v1.2h-1.2zM1303 875h1.2v1.2h-1.2zM1475 763h1.2v1.2h-1.2zM1456 816h1.2v1.2h-1.2zM1570 800h1.2v1.2h-1.2zM1567 845h1.2v1.2h-1.2zM1490 631h1.2v1.2h-1.2zM1323 783h1.2v1.2h-1.2zM1387 839h1.2v1.2h-1.2zM1529 848h1.2v1.2h-1.2zM1401 868h1.2v1.2h-1.2zM1477 673h1.2v1.2h-1.2zM1457 640h1.2v1.2h-1.2zM1414 896h1.2v1.2h-1.2zM1614 506h1.2v1.2h-1.2zM1313 824h1.2v1.2h-1.2zM1422 904h1.2v1.2h-1.2zM1351 798h1.2v1.2h-1.2zM1529 783h1.2v1.2h-1.2zM1419 876h1.2v1.2h-1.2zM1327 825h1.2v1.2h-1.2zM1514 807h1.2v1.2h-1.2zM1438 842h1.2v1.2h-1.2zM1500 845h1.2v1.2h-1.2zM1363 779h1.2v1.2h-1.2zM1248 870h1.2v1.2h-1.2zM1494 774h1.2v1.2h-1.2zM1612 623h1.2v1.2h-1.2zM1543 609h1.2v1.2h-1.2zM1504 664h1.2v1.2h-1.2zM1406 795h1.2v1.2h-1.2zM1463 770h1.2v1.2h-1.2zM1237 885h1.2v1.2h-1.2zM1417 858h1.2v1.2h-1.2zM1487 898h1.2v1.2h-1.2zM1375 822h1.2v1.2h-1.2zM1395 700h1.2v1.2h-1.2zM1443 761h1.2v1.2h-1.2zM1235 774h1.2v1.2h-1.2zM1387 873h1.2v1.2h-1.2zM1580 645h1.2v1.2h-1.2zM1456 658h1.2v1.2h-1.2zM1353 844h1.2v1.2h-1.2zM1346 795h1.2v1.2h-1.2zM1386 855h1.2v1.2h-1.2zM1410 844h1.2v1.2h-1.2zM1405 886h1.2v1.2h-1.2zM1517 758h1.2v1.2h-1.2zM1421 611h1.2v1.2h-1.2zM1401 793h1.2v1.2h-1.2zM1438 916h1.2v1.2h-1.2zM1418 632h1.2v1.2h-1.2zM1549 780h1.2v1.2h-1.2zM1524 788h1.2v1.2h-1.2zM1435 805h1.2v1.2h-1.2zM1486 741h1.2v1.2h-1.2zM1514 827h1.2v1.2h-1.2zM1486 637h1.2v1.2h-1.2zM1566 648h1.2v1.2h-1.2zM1425 827h1.2v1.2h-1.2zM1493 701h1.2v1.2h-1.2zM1571 773h1.2v1.2h-1.2zM1462 834h1.2v1.2h-1.2zM1462 775h1.2v1.2h-1.2zM1467 658h1.2v1.2h-1.2zM1275 865h1.2v1.2h-1.2zM1460 628h1.2v1.2h-1.2zM1403 576h1.2v1.2h-1.2zM1280 743h1.2v1.2h-1.2zM1493 862h1.2v1.2h-1.2zM1411 781h1.2v1.2h-1.2zM1522 912h1.2v1.2h-1.2zM1406 856h1.2v1.2h-1.2zM1458 784h1.2v1.2h-1.2zM1458 910h1.2v1.2h-1.2zM2002 715h1.2v1.2h-1.2zM1436 869h1.2v1.2h-1.2zM1502 660h1.2v1.2h-1.2zM1576 842h1.2v1.2h-1.2zM1471 603h1.2v1.2h-1.2zM1525 764h1.2v1.2h-1.2zM1391 869h1.2v1.2h-1.2zM1261 855h1.2v1.2h-1.2zM1361 831h1.2v1.2h-1.2zM1717 758h1.2v1.2h-1.2zM1585 764h1.2v1.2h-1.2zM1314 883h1.2v1.2h-1.2zM1387 640h1.2v1.2h-1.2zM1407 834h1.2v1.2h-1.2zM1319 800h1.2v1.2h-1.2zM1382 791h1.2v1.2h-1.2zM1460 807h1.2v1.2h-1.2zM1340 895h1.2v1.2h-1.2zM1341 871h1.2v1.2h-1.2zM1432 805h1.2v1.2h-1.2zM1461 829h1.2v1.2h-1.2zM1404 806h1.2v1.2h-1.2zM1470 832h1.2v1.2h-1.2zM1620 867h1.2v1.2h-1.2zM1472 866h1.2v1.2h-1.2zM1309 731h1.2v1.2h-1.2zM1520 832h1.2v1.2h-1.2zM1592 611h1.2v1.2h-1.2zM1465 617h1.2v1.2h-1.2zM1380 816h1.2v1.2h-1.2zM1382 787h1.2v1.2h-1.2zM1491 778h1.2v1.2h-1.2zM1550 767h1.2v1.2h-1.2zM1216 817h1.2v1.2h-1.2zM1517 780h1.2v1.2h-1.2zM1395 823h1.2v1.2h-1.2zM1553 848h1.2v1.2h-1.2zM1356 861h1.2v1.2h-1.2zM1489 801h1.2v1.2h-1.2zM1536 601h1.2v1.2h-1.2zM1579 813h1.2v1.2h-1.2zM1497 680h1.2v1.2h-1.2zM1418 880h1.2v1.2h-1.2zM1227 772h1.2v1.2h-1.2zM1548 791h1.2v1.2h-1.2zM1388 582h1.2v1.2h-1.2zM1309 864h1.2v1.2h-1.2zM1521 634h1.2v1.2h-1.2zM1337 921h1.2v1.2h-1.2zM1456 825h1.2v1.2h-1.2zM1371 737h1.2v1.2h-1.2zM1357 886h1.2v1.2h-1.2zM1388 701h1.2v1.2h-1.2zM1332 753h1.2v1.2h-1.2zM1367 833h1.2v1.2h-1.2zM1527 736h1.2v1.2h-1.2zM1380 825h1.2v1.2h-1.2zM1538 815h1.2v1.2h-1.2zM1609 751h1.2v1.2h-1.2zM1343 815h1.2v1.2h-1.2zM1417 654h1.2v1.2h-1.2zM1436 605h1.2v1.2h-1.2zM1391 871h1.2v1.2h-1.2zM1422 605h1.2v1.2h-1.2zM1369 630h1.2v1.2h-1.2zM1528 791h1.2v1.2h-1.2zM1494 823h1.2v1.2h-1.2zM1513 778h1.2v1.2h-1.2zM1439 860h1.2v1.2h-1.2zM1509 862h1.2v1.2h-1.2zM1441 809h1.2v1.2h-1.2zM1476 552h1.2v1.2h-1.2zM1385 833h1.2v1.2h-1.2zM1605 564h1.2v1.2h-1.2zM1338 833h1.2v1.2h-1.2zM1469 902h1.2v1.2h-1.2zM1638 798h1.2v1.2h-1.2zM1435 823h1.2v1.2h-1.2zM1535 646h1.2v1.2h-1.2zM1765 745h1.2v1.2h-1.2zM1346 616h1.2v1.2h-1.2zM1468 765h1.2v1.2h-1.2zM1501 938h1.2v1.2h-1.2zM1403 890h1.2v1.2h-1.2zM1425 875h1.2v1.2h-1.2zM1506 893h1.2v1.2h-1.2zM1472 639h1.2v1.2h-1.2zM1342 619h1.2v1.2h-1.2zM1563 701h1.2v1.2h-1.2zM1536 836h1.2v1.2h-1.2zM1385 838h1.2v1.2h-1.2zM1548 670h1.2v1.2h-1.2zM1533 661h1.2v1.2h-1.2zM1327 840h1.2v1.2h-1.2zM1567 808h1.2v1.2h-1.2zM1282 613h1.2v1.2h-1.2zM1415 663h1.2v1.2h-1.2zM1451 738h1.2v1.2h-1.2zM1269 832h1.2v1.2h-1.2zM1525 792h1.2v1.2h-1.2zM1558 800h1.2v1.2h-1.2zM1336 816h1.2v1.2h-1.2zM1394 659h1.2v1.2h-1.2zM1494 592h1.2v1.2h-1.2zM1339 816h1.2v1.2h-1.2zM1406 836h1.2v1.2h-1.2zM1504 866h1.2v1.2h-1.2zM1281 863h1.2v1.2h-1.2zM1402 840h1.2v1.2h-1.2zM1531 726h1.2v1.2h-1.2zM1462 841h1.2v1.2h-1.2zM1636 884h1.2v1.2h-1.2zM1374 794h1.2v1.2h-1.2zM1393 936h1.2v1.2h-1.2zM1337 823h1.2v1.2h-1.2zM1478 645h1.2v1.2h-1.2zM1474 853h1.2v1.2h-1.2zM1347 848h1.2v1.2h-1.2zM1423 631h1.2v1.2h-1.2zM1374 868h1.2v1.2h-1.2zM1435 641h1.2v1.2h-1.2zM1396 789h1.2v1.2h-1.2zM1441 763h1.2v1.2h-1.2zM1335 795h1.2v1.2h-1.2zM1337 813h1.2v1.2h-1.2zM1239 736h1.2v1.2h-1.2zM1457 815h1.2v1.2h-1.2zM1501 848h1.2v1.2h-1.2zM1419 663h1.2v1.2h-1.2zM1595 769h1.2v1.2h-1.2zM1476 822h1.2v1.2h-1.2zM1478 787h1.2v1.2h-1.2zM1328 637h1.2v1.2h-1.2zM1329 805h1.2v1.2h-1.2zM1616 634h1.2v1.2h-1.2zM1327 729h1.2v1.2h-1.2zM1550 837h1.2v1.2h-1.2zM1396 616h1.2v1.2h-1.2zM1498 754h1.2v1.2h-1.2zM1450 872h1.2v1.2h-1.2zM1407 813h1.2v1.2h-1.2zM1352 866h1.2v1.2h-1.2zM1477 870h1.2v1.2h-1.2zM1367 843h1.2v1.2h-1.2zM1321 921h1.2v1.2h-1.2zM1476 619h1.2v1.2h-1.2zM1393 807h1.2v1.2h-1.2zM1458 859h1.2v1.2h-1.2zM1413 713h1.2v1.2h-1.2zM1562 698h1.2v1.2h-1.2zM1602 719h1.2v1.2h-1.2zM1477 655h1.2v1.2h-1.2zM1474 815h1.2v1.2h-1.2zM1545 816h1.2v1.2h-1.2zM1446 758h1.2v1.2h-1.2zM1480 791h1.2v1.2h-1.2zM1308 747h1.2v1.2h-1.2zM1408 665h1.2v1.2h-1.2zM1468 680h1.2v1.2h-1.2zM1416 760h1.2v1.2h-1.2zM1485 640h1.2v1.2h-1.2zM1560 608h1.2v1.2h-1.2zM1491 818h1.2v1.2h-1.2zM1414 918h1.2v1.2h-1.2zM1459 642h1.2v1.2h-1.2zM1018 702h1.2v1.2h-1.2zM1538 612h1.2v1.2h-1.2zM1403 891h1.2v1.2h-1.2zM1483 859h1.2v1.2h-1.2zM1501 828h1.2v1.2h-1.2zM1608 825h1.2v1.2h-1.2zM1486 825h1.2v1.2h-1.2zM1464 825h1.2v1.2h-1.2zM1587 669h1.2v1.2h-1.2zM1345 845h1.2v1.2h-1.2zM1453 624h1.2v1.2h-1.2zM1254 582h1.2v1.2h-1.2zM1395 861h1.2v1.2h-1.2zM1423 757h1.2v1.2h-1.2zM1357 811h1.2v1.2h-1.2zM1430 601h1.2v1.2h-1.2zM1538 720h1.2v1.2h-1.2zM1541 895h1.2v1.2h-1.2zM1521 798h1.2v1.2h-1.2zM1589 654h1.2v1.2h-1.2zM1382 892h1.2v1.2h-1.2zM1377 860h1.2v1.2h-1.2zM1533 615h1.2v1.2h-1.2zM1540 799h1.2v1.2h-1.2zM1448 740h1.2v1.2h-1.2zM1314 867h1.2v1.2h-1.2zM1473 922h1.2v1.2h-1.2zM1473 824h1.2v1.2h-1.2zM1462 866h1.2v1.2h-1.2zM1261 714h1.2v1.2h-1.2zM1353 753h1.2v1.2h-1.2zM1475 794h1.2v1.2h-1.2zM1436 805h1.2v1.2h-1.2zM1538 795h1.2v1.2h-1.2zM1528 626h1.2v1.2h-1.2zM1506 641h1.2v1.2h-1.2zM1464 781h1.2v1.2h-1.2zM1473 849h1.2v1.2h-1.2zM1458 680h1.2v1.2h-1.2zM1520 844h1.2v1.2h-1.2zM1384 768h1.2v1.2h-1.2zM1347 978h1.2v1.2h-1.2zM1391 778h1.2v1.2h-1.2zM1414 702h1.2v1.2h-1.2zM1376 840h1.2v1.2h-1.2zM1427 761h1.2v1.2h-1.2zM1581 816h1.2v1.2h-1.2zM1695 705h1.2v1.2h-1.2zM1547 636h1.2v1.2h-1.2zM1528 802h1.2v1.2h-1.2zM1400 845h1.2v1.2h-1.2zM1426 753h1.2v1.2h-1.2zM1521 771h1.2v1.2h-1.2zM1362 792h1.2v1.2h-1.2zM1404 629h1.2v1.2h-1.2zM1417 642h1.2v1.2h-1.2zM1777 529h1.2v1.2h-1.2zM1412 815h1.2v1.2h-1.2zM1197 847h1.2v1.2h-1.2zM1493 780h1.2v1.2h-1.2zM1332 875h1.2v1.2h-1.2zM1569 757h1.2v1.2h-1.2zM1363 729h1.2v1.2h-1.2zM1539 658h1.2v1.2h-1.2zM1478 748h1.2v1.2h-1.2zM1457 892h1.2v1.2h-1.2zM1474 673h1.2v1.2h-1.2zM1351 833h1.2v1.2h-1.2zM1479 804h1.2v1.2h-1.2zM1386 921h1.2v1.2h-1.2zM1497 812h1.2v1.2h-1.2zM1657 647h1.2v1.2h-1.2zM1407 808h1.2v1.2h-1.2zM1456 848h1.2v1.2h-1.2zM1503 884h1.2v1.2h-1.2zM1372 855h1.2v1.2h-1.2zM1501 679h1.2v1.2h-1.2zM1258 891h1.2v1.2h-1.2zM1412 620h1.2v1.2h-1.2zM1478 854h1.2v1.2h-1.2zM1320 831h1.2v1.2h-1.2zM1399 655h1.2v1.2h-1.2zM1432 884h1.2v1.2h-1.2zM1448 666h1.2v1.2h-1.2zM1561 721h1.2v1.2h-1.2zM1498 639h1.2v1.2h-1.2zM1339 647h1.2v1.2h-1.2zM1215 903h1.2v1.2h-1.2zM1534 709h1.2v1.2h-1.2zM1412 817h1.2v1.2h-1.2zM1516 857h1.2v1.2h-1.2zM1531 632h1.2v1.2h-1.2zM1542 612h1.2v1.2h-1.2zM1476 881h1.2v1.2h-1.2zM1395 825h1.2v1.2h-1.2zM1599 793h1.2v1.2h-1.2zM1388 830h1.2v1.2h-1.2zM1559 824h1.2v1.2h-1.2zM1539 856h1.2v1.2h-1.2zM1429 864h1.2v1.2h-1.2zM1395 636h1.2v1.2h-1.2zM1467 625h1.2v1.2h-1.2zM1314 865h1.2v1.2h-1.2zM1399 865h1.2v1.2h-1.2zM1527 611h1.2v1.2h-1.2zM1140 810h1.2v1.2h-1.2zM1443 750h1.2v1.2h-1.2zM1379 879h1.2v1.2h-1.2zM1511 793h1.2v1.2h-1.2zM1454 900h1.2v1.2h-1.2zM1448 774h1.2v1.2h-1.2zM1610 625h1.2v1.2h-1.2zM1175 892h1.2v1.2h-1.2zM1207 761h1.2v1.2h-1.2zM1553 794h1.2v1.2h-1.2zM1414 846h1.2v1.2h-1.2zM1500 809h1.2v1.2h-1.2zM1329 828h1.2v1.2h-1.2zM1443 617h1.2v1.2h-1.2zM1482 646h1.2v1.2h-1.2zM1533 846h1.2v1.2h-1.2zM1389 827h1.2v1.2h-1.2zM1545 822h1.2v1.2h-1.2zM1411 808h1.2v1.2h-1.2zM1586 814h1.2v1.2h-1.2zM1474 816h1.2v1.2h-1.2zM1437 827h1.2v1.2h-1.2zM1634 764h1.2v1.2h-1.2zM1474 870h1.2v1.2h-1.2zM1581 604h1.2v1.2h-1.2zM1315 788h1.2v1.2h-1.2zM1419 783h1.2v1.2h-1.2zM1525 667h1.2v1.2h-1.2zM1422 889h1.2v1.2h-1.2zM1413 762h1.2v1.2h-1.2zM1625 737h1.2v1.2h-1.2zM1520 804h1.2v1.2h-1.2zM1411 767h1.2v1.2h-1.2zM1361 898h1.2v1.2h-1.2zM1414 652h1.2v1.2h-1.2zM1579 618h1.2v1.2h-1.2zM1453 639h1.2v1.2h-1.2zM1479 825h1.2v1.2h-1.2zM1463 655h1.2v1.2h-1.2zM1255 812h1.2v1.2h-1.2zM1427 759h1.2v1.2h-1.2zM1463 841h1.2v1.2h-1.2zM1432 909h1.2v1.2h-1.2zM1507 673h1.2v1.2h-1.2zM1429 690h1.2v1.2h-1.2zM1498 748h1.2v1.2h-1.2zM1558 728h1.2v1.2h-1.2zM1568 594h1.2v1.2h-1.2zM1445 860h1.2v1.2h-1.2zM1333 784h1.2v1.2h-1.2zM1656 681h1.2v1.2h-1.2zM1632 794h1.2v1.2h-1.2zM1548 649h1.2v1.2h-1.2zM1470 814h1.2v1.2h-1.2zM1416 643h1.2v1.2h-1.2zM1504 764h1.2v1.2h-1.2zM1216 843h1.2v1.2h-1.2zM1362 856h1.2v1.2h-1.2zM1487 671h1.2v1.2h-1.2zM1517 824h1.2v1.2h-1.2zM1423 882h1.2v1.2h-1.2zM1500 829h1.2v1.2h-1.2zM1443 759h1.2v1.2h-1.2zM1409 682h1.2v1.2h-1.2zM1447 635h1.2v1.2h-1.2zM1504 804h1.2v1.2h-1.2zM1376 636h1.2v1.2h-1.2zM1327 737h1.2v1.2h-1.2zM1529 648h1.2v1.2h-1.2zM1430 729h1.2v1.2h-1.2zM1247 787h1.2v1.2h-1.2zM1506 653h1.2v1.2h-1.2zM1469 772h1.2v1.2h-1.2zM1554 795h1.2v1.2h-1.2zM1496 596h1.2v1.2h-1.2zM1371 824h1.2v1.2h-1.2zM1506 793h1.2v1.2h-1.2zM1493 824h1.2v1.2h-1.2zM1477 789h1.2v1.2h-1.2zM1390 710h1.2v1.2h-1.2zM1445 791h1.2v1.2h-1.2zM1445 893h1.2v1.2h-1.2zM1343 895h1.2v1.2h-1.2zM1500 610h1.2v1.2h-1.2zM1507 777h1.2v1.2h-1.2zM1352 808h1.2v1.2h-1.2zM1435 704h1.2v1.2h-1.2zM1458 758h1.2v1.2h-1.2zM1440 880h1.2v1.2h-1.2zM1336 888h1.2v1.2h-1.2zM1482 613h1.2v1.2h-1.2zM1261 885h1.2v1.2h-1.2zM1491 588h1.2v1.2h-1.2zM1493 840h1.2v1.2h-1.2zM1487 828h1.2v1.2h-1.2zM1381 843h1.2v1.2h-1.2zM1318 839h1.2v1.2h-1.2zM1367 835h1.2v1.2h-1.2zM1544 618h1.2v1.2h-1.2zM1498 728h1.2v1.2h-1.2zM1353 801h1.2v1.2h-1.2zM1497 780h1.2v1.2h-1.2zM1458 555h1.2v1.2h-1.2zM1488 911h1.2v1.2h-1.2zM1606 730h1.2v1.2h-1.2zM1541 784h1.2v1.2h-1.2zM1606 680h1.2v1.2h-1.2zM1432 828h1.2v1.2h-1.2zM1349 632h1.2v1.2h-1.2zM1521 783h1.2v1.2h-1.2zM1319 930h1.2v1.2h-1.2zM1322 902h1.2v1.2h-1.2zM1530 892h1.2v1.2h-1.2zM1499 917h1.2v1.2h-1.2zM1377 860h1.2v1.2h-1.2zM1427 871h1.2v1.2h-1.2zM1435 835h1.2v1.2h-1.2zM1405 815h1.2v1.2h-1.2zM1581 639h1.2v1.2h-1.2zM1404 694h1.2v1.2h-1.2zM1501 867h1.2v1.2h-1.2zM1363 842h1.2v1.2h-1.2zM1475 821h1.2v1.2h-1.2zM1377 863h1.2v1.2h-1.2zM1536 664h1.2v1.2h-1.2zM1544 795h1.2v1.2h-1.2zM1393 843h1.2v1.2h-1.2zM1384 862h1.2v1.2h-1.2zM1387 768h1.2v1.2h-1.2zM1464 636h1.2v1.2h-1.2zM1422 666h1.2v1.2h-1.2zM1439 897h1.2v1.2h-1.2zM1409 825h1.2v1.2h-1.2zM1392 828h1.2v1.2h-1.2zM1608 761h1.2v1.2h-1.2zM1462 897h1.2v1.2h-1.2zM1411 814h1.2v1.2h-1.2zM1458 642h1.2v1.2h-1.2zM1520 627h1.2v1.2h-1.2zM1324 843h1.2v1.2h-1.2zM1447 879h1.2v1.2h-1.2zM1557 869h1.2v1.2h-1.2zM1315 920h1.2v1.2h-1.2zM1504 706h1.2v1.2h-1.2zM1515 894h1.2v1.2h-1.2zM1386 818h1.2v1.2h-1.2zM1570 607h1.2v1.2h-1.2zM1576 637h1.2v1.2h-1.2zM1347 637h1.2v1.2h-1.2zM1341 827h1.2v1.2h-1.2zM1205 739h1.2v1.2h-1.2zM1411 841h1.2v1.2h-1.2zM1525 639h1.2v1.2h-1.2zM1431 770h1.2v1.2h-1.2zM1592 599h1.2v1.2h-1.2zM1325 683h1.2v1.2h-1.2zM1484 790h1.2v1.2h-1.2zM1454 891h1.2v1.2h-1.2zM1516 633h1.2v1.2h-1.2zM1489 830h1.2v1.2h-1.2zM1536 627h1.2v1.2h-1.2zM1590 651h1.2v1.2h-1.2zM1404 809h1.2v1.2h-1.2zM1345 775h1.2v1.2h-1.2zM1474 826h1.2v1.2h-1.2zM1286 733h1.2v1.2h-1.2zM1394 936h1.2v1.2h-1.2zM1457 845h1.2v1.2h-1.2zM1389 786h1.2v1.2h-1.2zM1296 920h1.2v1.2h-1.2zM1422 748h1.2v1.2h-1.2zM1486 815h1.2v1.2h-1.2zM1433 802h1.2v1.2h-1.2zM1429 790h1.2v1.2h-1.2zM1423 768h1.2v1.2h-1.2zM1406 774h1.2v1.2h-1.2zM1281 800h1.2v1.2h-1.2zM1550 739h1.2v1.2h-1.2zM1446 886h1.2v1.2h-1.2zM1351 903h1.2v1.2h-1.2zM1497 832h1.2v1.2h-1.2zM1405 731h1.2v1.2h-1.2zM1524 605h1.2v1.2h-1.2zM1524 816h1.2v1.2h-1.2zM1427 823h1.2v1.2h-1.2zM1335 845h1.2v1.2h-1.2zM1334 887h1.2v1.2h-1.2zM1472 586h1.2v1.2h-1.2zM1459 797h1.2v1.2h-1.2zM1509 881h1.2v1.2h-1.2zM1412 651h1.2v1.2h-1.2zM1382 754h1.2v1.2h-1.2zM1389 664h1.2v1.2h-1.2zM1516 815h1.2v1.2h-1.2zM1458 640h1.2v1.2h-1.2zM1479 822h1.2v1.2h-1.2zM1419 642h1.2v1.2h-1.2zM1475 676h1.2v1.2h-1.2zM1574 930h1.2v1.2h-1.2zM1440 891h1.2v1.2h-1.2zM1420 872h1.2v1.2h-1.2zM1472 759h1.2v1.2h-1.2zM1252 886h1.2v1.2h-1.2zM1402 744h1.2v1.2h-1.2zM1491 842h1.2v1.2h-1.2zM1507 828h1.2v1.2h-1.2zM1372 831h1.2v1.2h-1.2zM1568 695h1.2v1.2h-1.2zM1443 647h1.2v1.2h-1.2zM1433 856h1.2v1.2h-1.2zM1466 810h1.2v1.2h-1.2zM1419 636h1.2v1.2h-1.2zM1451 753h1.2v1.2h-1.2zM1427 830h1.2v1.2h-1.2zM1460 682h1.2v1.2h-1.2zM1505 760h1.2v1.2h-1.2zM1384 800h1.2v1.2h-1.2zM1512 780h1.2v1.2h-1.2zM1258 828h1.2v1.2h-1.2zM1248 671h1.2v1.2h-1.2zM1488 821h1.2v1.2h-1.2zM1486 944h1.2v1.2h-1.2zM1453 885h1.2v1.2h-1.2zM1625 581h1.2v1.2h-1.2zM1400 831h1.2v1.2h-1.2zM1468 732h1.2v1.2h-1.2zM1486 844h1.2v1.2h-1.2zM1432 793h1.2v1.2h-1.2zM1477 727h1.2v1.2h-1.2zM1574 867h1.2v1.2h-1.2zM1416 897h1.2v1.2h-1.2zM1431 862h1.2v1.2h-1.2zM1465 855h1.2v1.2h-1.2zM1428 721h1.2v1.2h-1.2zM1335 862h1.2v1.2h-1.2zM1460 804h1.2v1.2h-1.2zM1589 748h1.2v1.2h-1.2zM1537 839h1.2v1.2h-1.2zM1471 652h1.2v1.2h-1.2zM1439 622h1.2v1.2h-1.2zM1550 829h1.2v1.2h-1.2zM1402 623h1.2v1.2h-1.2zM1493 828h1.2v1.2h-1.2zM1353 816h1.2v1.2h-1.2zM1534 914h1.2v1.2h-1.2zM1486 739h1.2v1.2h-1.2zM1453 735h1.2v1.2h-1.2zM1360 807h1.2v1.2h-1.2zM1443 657h1.2v1.2h-1.2zM1310 766h1.2v1.2h-1.2zM1522 783h1.2v1.2h-1.2zM1520 670h1.2v1.2h-1.2zM1384 809h1.2v1.2h-1.2zM1418 882h1.2v1.2h-1.2zM1521 888h1.2v1.2h-1.2zM1349 845h1.2v1.2h-1.2zM1289 630h1.2v1.2h-1.2zM1527 785h1.2v1.2h-1.2zM1456 754h1.2v1.2h-1.2zM1519 670h1.2v1.2h-1.2zM1435 774h1.2v1.2h-1.2zM1404 845h1.2v1.2h-1.2zM1331 821h1.2v1.2h-1.2zM1675 798h1.2v1.2h-1.2zM1321 766h1.2v1.2h-1.2zM1453 882h1.2v1.2h-1.2zM1534 889h1.2v1.2h-1.2zM1431 901h1.2v1.2h-1.2zM1427 811h1.2v1.2h-1.2zM1316 807h1.2v1.2h-1.2zM1355 775h1.2v1.2h-1.2zM1590 629h1.2v1.2h-1.2zM1412 846h1.2v1.2h-1.2zM1587 633h1.2v1.2h-1.2zM1436 869h1.2v1.2h-1.2zM1369 847h1.2v1.2h-1.2zM1337 795h1.2v1.2h-1.2zM1385 729h1.2v1.2h-1.2zM1538 603h1.2v1.2h-1.2zM1437 874h1.2v1.2h-1.2zM1538 678h1.2v1.2h-1.2zM1482 810h1.2v1.2h-1.2zM1498 644h1.2v1.2h-1.2zM1540 887h1.2v1.2h-1.2zM1629 754h1.2v1.2h-1.2zM1386 811h1.2v1.2h-1.2zM1437 839h1.2v1.2h-1.2zM1465 801h1.2v1.2h-1.2zM1599 785h1.2v1.2h-1.2zM1477 638h1.2v1.2h-1.2zM1487 808h1.2v1.2h-1.2zM1431 621h1.2v1.2h-1.2zM1453 610h1.2v1.2h-1.2zM1414 769h1.2v1.2h-1.2zM1379 631h1.2v1.2h-1.2zM1454 891h1.2v1.2h-1.2zM1487 633h1.2v1.2h-1.2zM1508 609h1.2v1.2h-1.2zM1385 933h1.2v1.2h-1.2zM1532 643h1.2v1.2h-1.2zM1531 806h1.2v1.2h-1.2zM1390 796h1.2v1.2h-1.2zM1299 859h1.2v1.2h-1.2zM1443 759h1.2v1.2h-1.2zM1508 758h1.2v1.2h-1.2zM1472 942h1.2v1.2h-1.2zM1486 829h1.2v1.2h-1.2zM1577 736h1.2v1.2h-1.2zM1572 760h1.2v1.2h-1.2zM1542 775h1.2v1.2h-1.2zM1415 826h1.2v1.2h-1.2zM1495 906h1.2v1.2h-1.2zM1345 839h1.2v1.2h-1.2zM1318 753h1.2v1.2h-1.2zM1303 794h1.2v1.2h-1.2zM1379 890h1.2v1.2h-1.2zM1469 771h1.2v1.2h-1.2zM1453 626h1.2v1.2h-1.2zM1531 625h1.2v1.2h-1.2zM1517 582h1.2v1.2h-1.2zM1456 758h1.2v1.2h-1.2zM1309 802h1.2v1.2h-1.2zM1485 706h1.2v1.2h-1.2zM1589 620h1.2v1.2h-1.2zM1380 852h1.2v1.2h-1.2zM1482 802h1.2v1.2h-1.2zM1529 828h1.2v1.2h-1.2zM1464 774h1.2v1.2h-1.2zM1506 898h1.2v1.2h-1.2zM1432 761h1.2v1.2h-1.2zM1307 751h1.2v1.2h-1.2zM1480 644h1.2v1.2h-1.2zM1332 878h1.2v1.2h-1.2zM1552 820h1.2v1.2h-1.2zM1280 833h1.2v1.2h-1.2zM1445 619h1.2v1.2h-1.2zM1383 898h1.2v1.2h-1.2zM1386 837h1.2v1.2h-1.2zM1606 680h1.2v1.2h-1.2zM1410 638h1.2v1.2h-1.2zM1449 601h1.2v1.2h-1.2zM1548 633h1.2v1.2h-1.2zM1547 862h1.2v1.2h-1.2zM1572 649h1.2v1.2h-1.2zM1415 619h1.2v1.2h-1.2zM1302 687h1.2v1.2h-1.2zM1391 914h1.2v1.2h-1.2zM1495 882h1.2v1.2h-1.2zM1604 881h1.2v1.2h-1.2zM1326 820h1.2v1.2h-1.2zM1482 968h1.2v1.2h-1.2zM1610 831h1.2v1.2h-1.2zM1446 853h1.2v1.2h-1.2zM1464 860h1.2v1.2h-1.2zM1281 691h1.2v1.2h-1.2zM1415 862h1.2v1.2h-1.2zM1422 838h1.2v1.2h-1.2zM1232 762h1.2v1.2h-1.2zM1790 681h1.2v1.2h-1.2zM1415 819h1.2v1.2h-1.2zM1413 840h1.2v1.2h-1.2zM1392 839h1.2v1.2h-1.2zM1581 577h1.2v1.2h-1.2zM1479 888h1.2v1.2h-1.2zM1353 798h1.2v1.2h-1.2zM1424 623h1.2v1.2h-1.2zM1408 799h1.2v1.2h-1.2zM1511 795h1.2v1.2h-1.2zM1229 726h1.2v1.2h-1.2zM1733 814h1.2v1.2h-1.2zM1497 630h1.2v1.2h-1.2zM1442 802h1.2v1.2h-1.2zM1505 714h1.2v1.2h-1.2zM1521 683h1.2v1.2h-1.2zM1485 842h1.2v1.2h-1.2zM1286 884h1.2v1.2h-1.2zM1510 678h1.2v1.2h-1.2zM1562 751h1.2v1.2h-1.2zM1421 619h1.2v1.2h-1.2zM1422 777h1.2v1.2h-1.2zM1504 795h1.2v1.2h-1.2zM1497 642h1.2v1.2h-1.2zM1499 844h1.2v1.2h-1.2zM1474 780h1.2v1.2h-1.2zM1432 801h1.2v1.2h-1.2zM1531 629h1.2v1.2h-1.2zM1387 809h1.2v1.2h-1.2zM1451 873h1.2v1.2h-1.2zM1397 650h1.2v1.2h-1.2zM1458 864h1.2v1.2h-1.2zM1445 632h1.2v1.2h-1.2zM1360 646h1.2v1.2h-1.2zM1353 689h1.2v1.2h-1.2zM1420 784h1.2v1.2h-1.2zM1452 895h1.2v1.2h-1.2zM1480 657h1.2v1.2h-1.2zM1468 844h1.2v1.2h-1.2zM1360 603h1.2v1.2h-1.2zM1502 657h1.2v1.2h-1.2zM1420 772h1.2v1.2h-1.2zM1510 654h1.2v1.2h-1.2zM1378 843h1.2v1.2h-1.2zM1509 790h1.2v1.2h-1.2zM1457 590h1.2v1.2h-1.2zM1400 863h1.2v1.2h-1.2zM1489 772h1.2v1.2h-1.2zM1480 841h1.2v1.2h-1.2zM1534 771h1.2v1.2h-1.2zM1440 626h1.2v1.2h-1.2zM1564 801h1.2v1.2h-1.2zM1564 820h1.2v1.2h-1.2zM1363 731h1.2v1.2h-1.2zM1645 722h1.2v1.2h-1.2zM1417 829h1.2v1.2h-1.2zM1426 855h1.2v1.2h-1.2zM1540 622h1.2v1.2h-1.2zM1571 833h1.2v1.2h-1.2zM1449 616h1.2v1.2h-1.2zM1411 648h1.2v1.2h-1.2zM1527 891h1.2v1.2h-1.2zM1405 860h1.2v1.2h-1.2zM1351 844h1.2v1.2h-1.2zM1213 880h1.2v1.2h-1.2zM1424 869h1.2v1.2h-1.2zM1411 871h1.2v1.2h-1.2zM1256 771h1.2v1.2h-1.2zM1569 869h1.2v1.2h-1.2zM1380 811h1.2v1.2h-1.2zM1382 884h1.2v1.2h-1.2zM1524 893h1.2v1.2h-1.2zM1449 786h1.2v1.2h-1.2zM1294 864h1.2v1.2h-1.2zM1439 915h1.2v1.2h-1.2zM1285 866h1.2v1.2h-1.2zM1499 810h1.2v1.2h-1.2zM1399 859h1.2v1.2h-1.2zM1694 562h1.2v1.2h-1.2zM1342 867h1.2v1.2h-1.2zM1361 839h1.2v1.2h-1.2zM1340 740h1.2v1.2h-1.2zM1507 875h1.2v1.2h-1.2zM1425 846h1.2v1.2h-1.2zM1624 736h1.2v1.2h-1.2zM1404 880h1.2v1.2h-1.2zM1404 788h1.2v1.2h-1.2zM1435 812h1.2v1.2h-1.2zM1324 740h1.2v1.2h-1.2zM1326 840h1.2v1.2h-1.2zM1405 774h1.2v1.2h-1.2zM1293 692h1.2v1.2h-1.2zM1385 834h1.2v1.2h-1.2zM1470 754h1.2v1.2h-1.2zM1472 626h1.2v1.2h-1.2zM1585 861h1.2v1.2h-1.2zM1487 802h1.2v1.2h-1.2zM1429 649h1.2v1.2h-1.2zM1277 862h1.2v1.2h-1.2zM1438 643h1.2v1.2h-1.2zM1348 866h1.2v1.2h-1.2zM1457 889h1.2v1.2h-1.2zM1455 841h1.2v1.2h-1.2zM1418 668h1.2v1.2h-1.2zM1459 746h1.2v1.2h-1.2zM1451 633h1.2v1.2h-1.2zM1442 807h1.2v1.2h-1.2zM1288 782h1.2v1.2h-1.2zM1581 836h1.2v1.2h-1.2zM1426 909h1.2v1.2h-1.2zM1304 786h1.2v1.2h-1.2zM1549 836h1.2v1.2h-1.2zM1478 855h1.2v1.2h-1.2zM1480 838h1.2v1.2h-1.2zM1502 857h1.2v1.2h-1.2zM1520 737h1.2v1.2h-1.2zM1538 581h1.2v1.2h-1.2zM1542 867h1.2v1.2h-1.2zM1456 818h1.2v1.2h-1.2zM1609 624h1.2v1.2h-1.2zM1411 890h1.2v1.2h-1.2zM1543 887h1.2v1.2h-1.2zM1648 792h1.2v1.2h-1.2zM1434 598h1.2v1.2h-1.2zM1306 849h1.2v1.2h-1.2zM1313 851h1.2v1.2h-1.2zM1387 784h1.2v1.2h-1.2zM1471 908h1.2v1.2h-1.2zM1561 905h1.2v1.2h-1.2zM1340 790h1.2v1.2h-1.2zM1367 743h1.2v1.2h-1.2zM1593 629h1.2v1.2h-1.2zM1519 708h1.2v1.2h-1.2zM1577 622h1.2v1.2h-1.2zM1310 862h1.2v1.2h-1.2zM1534 784h1.2v1.2h-1.2zM1404 855h1.2v1.2h-1.2zM1398 763h1.2v1.2h-1.2zM1391 861h1.2v1.2h-1.2zM1458 852h1.2v1.2h-1.2zM1485 834h1.2v1.2h-1.2zM1470 866h1.2v1.2h-1.2zM1434 799h1.2v1.2h-1.2zM1442 823h1.2v1.2h-1.2zM1423 621h1.2v1.2h-1.2zM1471 813h1.2v1.2h-1.2zM1346 772h1.2v1.2h-1.2zM1489 812h1.2v1.2h-1.2zM1480 843h1.2v1.2h-1.2zM1426 758h1.2v1.2h-1.2zM1559 644h1.2v1.2h-1.2zM1458 779h1.2v1.2h-1.2zM1478 856h1.2v1.2h-1.2zM1403 903h1.2v1.2h-1.2zM1520 789h1.2v1.2h-1.2zM1555 638h1.2v1.2h-1.2zM1349 831h1.2v1.2h-1.2zM1431 614h1.2v1.2h-1.2zM1448 830h1.2v1.2h-1.2zM1459 784h1.2v1.2h-1.2zM1524 831h1.2v1.2h-1.2zM1522 870h1.2v1.2h-1.2zM1332 742h1.2v1.2h-1.2zM1350 746h1.2v1.2h-1.2zM1471 622h1.2v1.2h-1.2zM1422 651h1.2v1.2h-1.2zM1456 843h1.2v1.2h-1.2zM1385 935h1.2v1.2h-1.2zM1529 749h1.2v1.2h-1.2zM1264 679h1.2v1.2h-1.2zM1352 847h1.2v1.2h-1.2zM1342 848h1.2v1.2h-1.2zM1351 839h1.2v1.2h-1.2zM1443 913h1.2v1.2h-1.2zM1391 814h1.2v1.2h-1.2zM1607 759h1.2v1.2h-1.2zM1338 724h1.2v1.2h-1.2zM1525 828h1.2v1.2h-1.2zM1420 628h1.2v1.2h-1.2zM1499 632h1.2v1.2h-1.2zM1475 823h1.2v1.2h-1.2zM1445 756h1.2v1.2h-1.2zM1392 799h1.2v1.2h-1.2zM1343 740h1.2v1.2h-1.2zM1421 739h1.2v1.2h-1.2zM1455 636h1.2v1.2h-1.2zM1423 753h1.2v1.2h-1.2zM1409 855h1.2v1.2h-1.2zM1279 950h1.2v1.2h-1.2zM1515 747h1.2v1.2h-1.2zM1497 638h1.2v1.2h-1.2zM1468 837h1.2v1.2h-1.2zM1471 820h1.2v1.2h-1.2zM1451 772h1.2v1.2h-1.2zM1372 859h1.2v1.2h-1.2zM1542 730h1.2v1.2h-1.2zM1533 810h1.2v1.2h-1.2zM1447 599h1.2v1.2h-1.2zM1401 649h1.2v1.2h-1.2zM1423 786h1.2v1.2h-1.2zM1368 823h1.2v1.2h-1.2zM1429 819h1.2v1.2h-1.2zM1419 656h1.2v1.2h-1.2zM1490 794h1.2v1.2h-1.2zM1452 795h1.2v1.2h-1.2zM1359 854h1.2v1.2h-1.2zM1385 882h1.2v1.2h-1.2zM1497 800h1.2v1.2h-1.2zM1470 782h1.2v1.2h-1.2zM1619 795h1.2v1.2h-1.2zM1294 840h1.2v1.2h-1.2zM1368 630h1.2v1.2h-1.2zM1418 599h1.2v1.2h-1.2zM1316 990h1.2v1.2h-1.2zM1489 826h1.2v1.2h-1.2zM1577 792h1.2v1.2h-1.2zM1467 781h1.2v1.2h-1.2zM1163 865h1.2v1.2h-1.2zM1486 773h1.2v1.2h-1.2zM1439 635h1.2v1.2h-1.2zM1501 617h1.2v1.2h-1.2zM1566 633h1.2v1.2h-1.2zM1486 858h1.2v1.2h-1.2zM1364 768h1.2v1.2h-1.2zM1383 874h1.2v1.2h-1.2zM1463 630h1.2v1.2h-1.2zM1467 827h1.2v1.2h-1.2zM1339 706h1.2v1.2h-1.2zM1514 629h1.2v1.2h-1.2zM1409 764h1.2v1.2h-1.2zM1495 846h1.2v1.2h-1.2zM1384 922h1.2v1.2h-1.2zM1592 637h1.2v1.2h-1.2zM1398 914h1.2v1.2h-1.2zM1420 668h1.2v1.2h-1.2zM1311 821h1.2v1.2h-1.2zM1396 880h1.2v1.2h-1.2zM1326 626h1.2v1.2h-1.2zM1413 620h1.2v1.2h-1.2zM1252 878h1.2v1.2h-1.2zM1357 740h1.2v1.2h-1.2zM1570 822h1.2v1.2h-1.2zM1447 831h1.2v1.2h-1.2zM1301 848h1.2v1.2h-1.2zM1317 730h1.2v1.2h-1.2zM1438 789h1.2v1.2h-1.2zM1534 766h1.2v1.2h-1.2zM1377 865h1.2v1.2h-1.2zM1602 798h1.2v1.2h-1.2zM1459 905h1.2v1.2h-1.2zM1527 750h1.2v1.2h-1.2zM1463 715h1.2v1.2h-1.2zM1396 564h1.2v1.2h-1.2zM1451 784h1.2v1.2h-1.2zM1404 885h1.2v1.2h-1.2zM1390 845h1.2v1.2h-1.2zM1359 709h1.2v1.2h-1.2zM1200 817h1.2v1.2h-1.2zM1436 800h1.2v1.2h-1.2zM1462 871h1.2v1.2h-1.2zM1425 821h1.2v1.2h-1.2zM1332 885h1.2v1.2h-1.2zM1444 859h1.2v1.2h-1.2zM1502 752h1.2v1.2h-1.2zM1433 813h1.2v1.2h-1.2zM1390 848h1.2v1.2h-1.2zM1380 820h1.2v1.2h-1.2zM1369 772h1.2v1.2h-1.2zM1503 879h1.2v1.2h-1.2zM1500 948h1.2v1.2h-1.2zM1477 635h1.2v1.2h-1.2zM1515 641h1.2v1.2h-1.2zM1457 889h1.2v1.2h-1.2zM1483 835h1.2v1.2h-1.2zM1442 614h1.2v1.2h-1.2zM1488 946h1.2v1.2h-1.2zM1461 840h1.2v1.2h-1.2zM1488 655h1.2v1.2h-1.2zM1335 820h1.2v1.2h-1.2zM1465 803h1.2v1.2h-1.2zM1460 748h1.2v1.2h-1.2zM1544 731h1.2v1.2h-1.2zM1336 829h1.2v1.2h-1.2zM1449 835h1.2v1.2h-1.2zM1618 777h1.2v1.2h-1.2zM1611 612h1.2v1.2h-1.2zM1500 840h1.2v1.2h-1.2zM1484 741h1.2v1.2h-1.2zM1296 913h1.2v1.2h-1.2zM1363 840h1.2v1.2h-1.2zM1493 786h1.2v1.2h-1.2zM1035 910h1.2v1.2h-1.2zM1421 849h1.2v1.2h-1.2zM1514 644h1.2v1.2h-1.2zM1452 849h1.2v1.2h-1.2zM1513 890h1.2v1.2h-1.2zM952 778h1.2v1.2h-1.2zM1578 635h1.2v1.2h-1.2zM1339 852h1.2v1.2h-1.2zM1436 801h1.2v1.2h-1.2zM1289 910h1.2v1.2h-1.2zM1265 885h1.2v1.2h-1.2zM1526 665h1.2v1.2h-1.2zM1200 843h1.2v1.2h-1.2zM1327 719h1.2v1.2h-1.2zM1316 732h1.2v1.2h-1.2zM1415 892h1.2v1.2h-1.2zM1533 849h1.2v1.2h-1.2zM1566 840h1.2v1.2h-1.2zM1306 845h1.2v1.2h-1.2zM1356 856h1.2v1.2h-1.2zM1480 629h1.2v1.2h-1.2zM1492 914h1.2v1.2h-1.2zM1574 653h1.2v1.2h-1.2zM1468 867h1.2v1.2h-1.2zM1678 851h1.2v1.2h-1.2zM1479 721h1.2v1.2h-1.2zM1468 857h1.2v1.2h-1.2zM1409 801h1.2v1.2h-1.2zM1450 661h1.2v1.2h-1.2zM1478 769h1.2v1.2h-1.2zM1400 631h1.2v1.2h-1.2zM1412 765h1.2v1.2h-1.2zM1371 868h1.2v1.2h-1.2zM1273 840h1.2v1.2h-1.2zM1374 755h1.2v1.2h-1.2zM1504 848h1.2v1.2h-1.2zM1080 762h1.2v1.2h-1.2zM1466 827h1.2v1.2h-1.2zM1458 648h1.2v1.2h-1.2zM1549 900h1.2v1.2h-1.2zM1422 689h1.2v1.2h-1.2zM1425 880h1.2v1.2h-1.2zM1575 616h1.2v1.2h-1.2zM1240 970h1.2v1.2h-1.2zM1386 895h1.2v1.2h-1.2zM1376 771h1.2v1.2h-1.2zM1426 845h1.2v1.2h-1.2zM1352 761h1.2v1.2h-1.2zM1516 857h1.2v1.2h-1.2zM1502 748h1.2v1.2h-1.2zM1507 887h1.2v1.2h-1.2zM1443 635h1.2v1.2h-1.2zM1421 822h1.2v1.2h-1.2zM1506 621h1.2v1.2h-1.2zM1447 707h1.2v1.2h-1.2zM1456 794h1.2v1.2h-1.2zM1530 967h1.2v1.2h-1.2zM1441 864h1.2v1.2h-1.2zM1506 779h1.2v1.2h-1.2zM1507 661h1.2v1.2h-1.2zM1287 883h1.2v1.2h-1.2zM1552 811h1.2v1.2h-1.2zM1558 718h1.2v1.2h-1.2zM1430 643h1.2v1.2h-1.2zM1599 640h1.2v1.2h-1.2zM1572 621h1.2v1.2h-1.2zM1477 758h1.2v1.2h-1.2zM1538 627h1.2v1.2h-1.2zM1480 817h1.2v1.2h-1.2zM1477 599h1.2v1.2h-1.2zM1414 846h1.2v1.2h-1.2zM1471 739h1.2v1.2h-1.2zM1479 826h1.2v1.2h-1.2zM1412 833h1.2v1.2h-1.2zM1285 882h1.2v1.2h-1.2zM1438 802h1.2v1.2h-1.2zM1520 634h1.2v1.2h-1.2zM1364 708h1.2v1.2h-1.2zM1259 853h1.2v1.2h-1.2zM1357 855h1.2v1.2h-1.2zM1410 820h1.2v1.2h-1.2zM1412 626h1.2v1.2h-1.2zM1493 873h1.2v1.2h-1.2zM1525 711h1.2v1.2h-1.2zM1358 893h1.2v1.2h-1.2zM1340 760h1.2v1.2h-1.2zM1569 746h1.2v1.2h-1.2zM1450 808h1.2v1.2h-1.2zM1493 828h1.2v1.2h-1.2zM1399 852h1.2v1.2h-1.2zM1589 659h1.2v1.2h-1.2zM1570 818h1.2v1.2h-1.2zM1494 632h1.2v1.2h-1.2zM1514 788h1.2v1.2h-1.2zM1516 782h1.2v1.2h-1.2zM1344 774h1.2v1.2h-1.2zM1465 866h1.2v1.2h-1.2zM1376 852h1.2v1.2h-1.2zM1316 850h1.2v1.2h-1.2zM1383 871h1.2v1.2h-1.2zM1445 828h1.2v1.2h-1.2zM1505 616h1.2v1.2h-1.2zM1668 677h1.2v1.2h-1.2zM1494 631h1.2v1.2h-1.2zM1577 603h1.2v1.2h-1.2zM1437 876h1.2v1.2h-1.2zM1545 860h1.2v1.2h-1.2zM1521 711h1.2v1.2h-1.2zM1422 840h1.2v1.2h-1.2zM1503 817h1.2v1.2h-1.2zM1728 783h1.2v1.2h-1.2zM1267 886h1.2v1.2h-1.2zM1427 757h1.2v1.2h-1.2zM1386 862h1.2v1.2h-1.2zM1476 781h1.2v1.2h-1.2zM1576 954h1.2v1.2h-1.2zM1533 637h1.2v1.2h-1.2zM1437 655h1.2v1.2h-1.2zM1561 642h1.2v1.2h-1.2zM1511 636h1.2v1.2h-1.2zM1440 823h1.2v1.2h-1.2zM1331 817h1.2v1.2h-1.2zM1500 776h1.2v1.2h-1.2zM1370 793h1.2v1.2h-1.2zM1451 673h1.2v1.2h-1.2zM1310 703h1.2v1.2h-1.2zM1440 643h1.2v1.2h-1.2zM1340 907h1.2v1.2h-1.2zM1418 812h1.2v1.2h-1.2zM1380 745h1.2v1.2h-1.2zM1398 703h1.2v1.2h-1.2zM1393 820h1.2v1.2h-1.2zM1430 814h1.2v1.2h-1.2zM1488 790h1.2v1.2h-1.2zM1383 885h1.2v1.2h-1.2zM1418 829h1.2v1.2h-1.2zM1491 650h1.2v1.2h-1.2zM1461 592h1.2v1.2h-1.2zM1427 954h1.2v1.2h-1.2zM1457 626h1.2v1.2h-1.2zM1395 757h1.2v1.2h-1.2zM1424 790h1.2v1.2h-1.2zM1427 812h1.2v1.2h-1.2zM1265 922h1.2v1.2h-1.2zM1464 796h1.2v1.2h-1.2zM1516 740h1.2v1.2h-1.2zM1350 830h1.2v1.2h-1.2zM1501 754h1.2v1.2h-1.2zM1463 745h1.2v1.2h-1.2zM1414 852h1.2v1.2h-1.2zM1408 630h1.2v1.2h-1.2zM1490 685h1.2v1.2h-1.2zM1486 645h1.2v1.2h-1.2zM1546 891h1.2v1.2h-1.2zM1515 810h1.2v1.2h-1.2zM1480 885h1.2v1.2h-1.2zM1501 838h1.2v1.2h-1.2zM1401 655h1.2v1.2h-1.2zM1304 810h1.2v1.2h-1.2zM1498 944h1.2v1.2h-1.2zM1442 904h1.2v1.2h-1.2zM1447 842h1.2v1.2h-1.2zM1495 815h1.2v1.2h-1.2zM1536 648h1.2v1.2h-1.2zM1311 864h1.2v1.2h-1.2zM1465 847h1.2v1.2h-1.2zM1487 603h1.2v1.2h-1.2zM1362 770h1.2v1.2h-1.2zM1364 777h1.2v1.2h-1.2zM1555 792h1.2v1.2h-1.2zM1324 816h1.2v1.2h-1.2zM1455 619h1.2v1.2h-1.2zM1342 815h1.2v1.2h-1.2zM1409 806h1.2v1.2h-1.2zM1318 844h1.2v1.2h-1.2zM1454 928h1.2v1.2h-1.2zM1436 635h1.2v1.2h-1.2zM1335 907h1.2v1.2h-1.2zM1454 811h1.2v1.2h-1.2zM1379 911h1.2v1.2h-1.2zM1595 688h1.2v1.2h-1.2zM1442 647h1.2v1.2h-1.2zM1450 640h1.2v1.2h-1.2zM1395 928h1.2v1.2h-1.2zM1335 765h1.2v1.2h-1.2zM1460 837h1.2v1.2h-1.2zM1292 871h1.2v1.2h-1.2zM1436 751h1.2v1.2h-1.2zM1576 618h1.2v1.2h-1.2zM1412 643h1.2v1.2h-1.2zM1332 647h1.2v1.2h-1.2zM1422 905h1.2v1.2h-1.2zM1504 748h1.2v1.2h-1.2zM1567 792h1.2v1.2h-1.2zM1445 730h1.2v1.2h-1.2zM1459 780h1.2v1.2h-1.2zM1394 851h1.2v1.2h-1.2zM1424 811h1.2v1.2h-1.2zM1542 732h1.2v1.2h-1.2zM1524 864h1.2v1.2h-1.2zM1284 813h1.2v1.2h-1.2zM1476 847h1.2v1.2h-1.2zM1329 778h1.2v1.2h-1.2zM1486 636h1.2v1.2h-1.2zM1435 873h1.2v1.2h-1.2zM1343 631h1.2v1.2h-1.2zM1461 821h1.2v1.2h-1.2zM1396 822h1.2v1.2h-1.2zM1471 818h1.2v1.2h-1.2zM1506 660h1.2v1.2h-1.2zM1340 629h1.2v1.2h-1.2zM1425 856h1.2v1.2h-1.2zM1398 848h1.2v1.2h-1.2zM1395 621h1.2v1.2h-1.2zM1422 720h1.2v1.2h-1.2zM1570 633h1.2v1.2h-1.2zM1354 765h1.2v1.2h-1.2zM1429 841h1.2v1.2h-1.2zM1346 654h1.2v1.2h-1.2zM1430 742h1.2v1.2h-1.2zM1491 821h1.2v1.2h-1.2zM1804 676h1.2v1.2h-1.2zM1400 726h1.2v1.2h-1.2zM1606 907h1.2v1.2h-1.2zM1267 847h1.2v1.2h-1.2zM1156 751h1.2v1.2h-1.2zM1454 750h1.2v1.2h-1.2zM1279 800h1.2v1.2h-1.2zM1417 814h1.2v1.2h-1.2zM1362 872h1.2v1.2h-1.2zM1335 812h1.2v1.2h-1.2zM1222 920h1.2v1.2h-1.2zM1437 769h1.2v1.2h-1.2zM1586 889h1.2v1.2h-1.2zM1590 602h1.2v1.2h-1.2zM1437 802h1.2v1.2h-1.2zM1461 813h1.2v1.2h-1.2zM1432 824h1.2v1.2h-1.2zM1352 809h1.2v1.2h-1.2zM1360 795h1.2v1.2h-1.2zM1481 911h1.2v1.2h-1.2zM1377 823h1.2v1.2h-1.2zM1570 562h1.2v1.2h-1.2zM1439 877h1.2v1.2h-1.2zM1444 863h1.2v1.2h-1.2zM1453 747h1.2v1.2h-1.2zM1472 604h1.2v1.2h-1.2zM1409 581h1.2v1.2h-1.2zM1593 634h1.2v1.2h-1.2zM1556 620h1.2v1.2h-1.2zM1405 617h1.2v1.2h-1.2zM1524 801h1.2v1.2h-1.2zM1431 788h1.2v1.2h-1.2zM1377 847h1.2v1.2h-1.2zM1592 651h1.2v1.2h-1.2zM1440 782h1.2v1.2h-1.2zM1432 823h1.2v1.2h-1.2zM1398 847h1.2v1.2h-1.2zM1453 760h1.2v1.2h-1.2zM1495 769h1.2v1.2h-1.2zM1397 946h1.2v1.2h-1.2zM1535 753h1.2v1.2h-1.2zM1537 799h1.2v1.2h-1.2zM1406 859h1.2v1.2h-1.2zM1382 656h1.2v1.2h-1.2zM1483 786h1.2v1.2h-1.2zM1416 854h1.2v1.2h-1.2zM1387 781h1.2v1.2h-1.2zM1259 761h1.2v1.2h-1.2zM1333 778h1.2v1.2h-1.2zM1293 911h1.2v1.2h-1.2zM1477 792h1.2v1.2h-1.2zM1431 752h1.2v1.2h-1.2zM1454 575h1.2v1.2h-1.2zM1333 824h1.2v1.2h-1.2zM1515 823h1.2v1.2h-1.2zM1340 860h1.2v1.2h-1.2zM1493 807h1.2v1.2h-1.2zM1455 613h1.2v1.2h-1.2zM1446 933h1.2v1.2h-1.2zM1453 641h1.2v1.2h-1.2zM1474 596h1.2v1.2h-1.2zM1415 792h1.2v1.2h-1.2zM1394 597h1.2v1.2h-1.2zM1304 843h1.2v1.2h-1.2zM1552 673h1.2v1.2h-1.2zM1515 808h1.2v1.2h-1.2zM1432 928h1.2v1.2h-1.2zM1622 671h1.2v1.2h-1.2zM1400 635h1.2v1.2h-1.2zM1031 655h1.2v1.2h-1.2zM1558 644h1.2v1.2h-1.2zM1460 804h1.2v1.2h-1.2zM1416 821h1.2v1.2h-1.2zM1399 611h1.2v1.2h-1.2zM1430 861h1.2v1.2h-1.2zM1498 790h1.2v1.2h-1.2zM1517 755h1.2v1.2h-1.2zM1448 866h1.2v1.2h-1.2zM1522 689h1.2v1.2h-1.2zM1297 658h1.2v1.2h-1.2zM1460 815h1.2v1.2h-1.2zM1350 855h1.2v1.2h-1.2zM1219 676h1.2v1.2h-1.2zM1590 639h1.2v1.2h-1.2zM1489 609h1.2v1.2h-1.2zM1429 606h1.2v1.2h-1.2zM1504 751h1.2v1.2h-1.2zM1418 794h1.2v1.2h-1.2zM1310 821h1.2v1.2h-1.2zM1656 824h1.2v1.2h-1.2zM1530 794h1.2v1.2h-1.2zM1477 625h1.2v1.2h-1.2zM1321 850h1.2v1.2h-1.2zM1513 793h1.2v1.2h-1.2zM1508 705h1.2v1.2h-1.2zM1347 887h1.2v1.2h-1.2zM1386 853h1.2v1.2h-1.2zM1312 884h1.2v1.2h-1.2zM1388 792h1.2v1.2h-1.2zM1429 861h1.2v1.2h-1.2zM1491 708h1.2v1.2h-1.2zM1606 760h1.2v1.2h-1.2zM1565 630h1.2v1.2h-1.2zM1585 865h1.2v1.2h-1.2zM1445 819h1.2v1.2h-1.2zM1465 782h1.2v1.2h-1.2zM1368 770h1.2v1.2h-1.2zM1489 841h1.2v1.2h-1.2zM1265 894h1.2v1.2h-1.2zM1341 858h1.2v1.2h-1.2zM1404 845h1.2v1.2h-1.2zM1388 819h1.2v1.2h-1.2zM1377 817h1.2v1.2h-1.2zM1424 645h1.2v1.2h-1.2zM1406 826h1.2v1.2h-1.2zM1787 756h1.2v1.2h-1.2zM1568 763h1.2v1.2h-1.2zM1472 889h1.2v1.2h-1.2zM1329 813h1.2v1.2h-1.2zM1480 823h1.2v1.2h-1.2zM1400 936h1.2v1.2h-1.2zM1345 881h1.2v1.2h-1.2zM1476 742h1.2v1.2h-1.2zM1493 858h1.2v1.2h-1.2zM1465 935h1.2v1.2h-1.2zM1449 619h1.2v1.2h-1.2zM1526 639h1.2v1.2h-1.2zM1461 725h1.2v1.2h-1.2zM1285 770h1.2v1.2h-1.2zM1145 595h1.2v1.2h-1.2zM1363 600h1.2v1.2h-1.2zM1335 866h1.2v1.2h-1.2zM1630 862h1.2v1.2h-1.2zM1475 732h1.2v1.2h-1.2zM1363 862h1.2v1.2h-1.2zM1391 816h1.2v1.2h-1.2zM1518 844h1.2v1.2h-1.2zM1415 862h1.2v1.2h-1.2zM1197 837h1.2v1.2h-1.2zM1458 839h1.2v1.2h-1.2zM1368 685h1.2v1.2h-1.2zM1457 627h1.2v1.2h-1.2zM1149 814h1.2v1.2h-1.2zM1562 609h1.2v1.2h-1.2zM1434 813h1.2v1.2h-1.2zM1483 803h1.2v1.2h-1.2zM1430 893h1.2v1.2h-1.2zM1194 848h1.2v1.2h-1.2zM1402 626h1.2v1.2h-1.2zM1486 656h1.2v1.2h-1.2zM1395 785h1.2v1.2h-1.2zM1492 637h1.2v1.2h-1.2zM1458 878h1.2v1.2h-1.2zM1239 754h1.2v1.2h-1.2zM1406 871h1.2v1.2h-1.2zM1375 628h1.2v1.2h-1.2zM1518 795h1.2v1.2h-1.2zM1489 812h1.2v1.2h-1.2zM1449 846h1.2v1.2h-1.2zM1309 870h1.2v1.2h-1.2zM1332 799h1.2v1.2h-1.2zM1345 856h1.2v1.2h-1.2zM1518 734h1.2v1.2h-1.2zM1416 831h1.2v1.2h-1.2zM1403 879h1.2v1.2h-1.2zM1497 787h1.2v1.2h-1.2zM1458 835h1.2v1.2h-1.2zM1430 853h1.2v1.2h-1.2zM1441 814h1.2v1.2h-1.2zM1317 909h1.2v1.2h-1.2zM1516 877h1.2v1.2h-1.2zM1553 627h1.2v1.2h-1.2zM1661 722h1.2v1.2h-1.2zM1495 887h1.2v1.2h-1.2zM1671 775h1.2v1.2h-1.2zM1436 758h1.2v1.2h-1.2zM1355 831h1.2v1.2h-1.2zM1372 928h1.2v1.2h-1.2zM1293 700h1.2v1.2h-1.2zM1386 860h1.2v1.2h-1.2zM1617 612h1.2v1.2h-1.2zM1508 836h1.2v1.2h-1.2zM1396 682h1.2v1.2h-1.2zM1477 781h1.2v1.2h-1.2zM1506 792h1.2v1.2h-1.2zM1437 744h1.2v1.2h-1.2zM1590 671h1.2v1.2h-1.2zM1211 896h1.2v1.2h-1.2zM1511 744h1.2v1.2h-1.2zM1476 630h1.2v1.2h-1.2zM1420 738h1.2v1.2h-1.2zM1456 793h1.2v1.2h-1.2zM1514 787h1.2v1.2h-1.2zM1388 947h1.2v1.2h-1.2zM1561 764h1.2v1.2h-1.2zM1660 671h1.2v1.2h-1.2zM1457 776h1.2v1.2h-1.2zM1514 668h1.2v1.2h-1.2zM1310 913h1.2v1.2h-1.2zM1502 879h1.2v1.2h-1.2zM1435 776h1.2v1.2h-1.2zM1537 635h1.2v1.2h-1.2zM1574 609h1.2v1.2h-1.2zM1462 867h1.2v1.2h-1.2zM1549 776h1.2v1.2h-1.2zM1360 872h1.2v1.2h-1.2zM1537 856h1.2v1.2h-1.2zM1521 987h1.2v1.2h-1.2zM1482 644h1.2v1.2h-1.2zM1511 615h1.2v1.2h-1.2zM1533 736h1.2v1.2h-1.2zM1617 708h1.2v1.2h-1.2zM1580 669h1.2v1.2h-1.2zM1321 809h1.2v1.2h-1.2zM1518 634h1.2v1.2h-1.2zM1467 952h1.2v1.2h-1.2zM1458 791h1.2v1.2h-1.2zM1456 668h1.2v1.2h-1.2zM1537 839h1.2v1.2h-1.2zM1429 821h1.2v1.2h-1.2zM1487 676h1.2v1.2h-1.2zM1562 844h1.2v1.2h-1.2zM1409 875h1.2v1.2h-1.2zM1495 883h1.2v1.2h-1.2zM1438 814h1.2v1.2h-1.2zM1457 818h1.2v1.2h-1.2zM1541 784h1.2v1.2h-1.2zM1522 792h1.2v1.2h-1.2zM1395 651h1.2v1.2h-1.2zM1494 865h1.2v1.2h-1.2zM1462 630h1.2v1.2h-1.2zM1554 629h1.2v1.2h-1.2zM1390 669h1.2v1.2h-1.2zM1313 583h1.2v1.2h-1.2zM1475 826h1.2v1.2h-1.2zM1520 936h1.2v1.2h-1.2zM1471 824h1.2v1.2h-1.2zM1303 863h1.2v1.2h-1.2zM1318 649h1.2v1.2h-1.2zM1484 860h1.2v1.2h-1.2zM1360 778h1.2v1.2h-1.2zM1443 797h1.2v1.2h-1.2zM1392 838h1.2v1.2h-1.2zM1570 831h1.2v1.2h-1.2zM1478 650h1.2v1.2h-1.2zM1596 802h1.2v1.2h-1.2zM1301 681h1.2v1.2h-1.2zM1593 862h1.2v1.2h-1.2zM1540 778h1.2v1.2h-1.2zM1473 922h1.2v1.2h-1.2zM1339 797h1.2v1.2h-1.2zM1383 771h1.2v1.2h-1.2zM1354 663h1.2v1.2h-1.2zM1609 816h1.2v1.2h-1.2zM1437 785h1.2v1.2h-1.2zM1375 914h1.2v1.2h-1.2zM1488 797h1.2v1.2h-1.2zM1487 624h1.2v1.2h-1.2zM1474 831h1.2v1.2h-1.2zM1544 725h1.2v1.2h-1.2zM1504 662h1.2v1.2h-1.2zM1499 834h1.2v1.2h-1.2zM1471 782h1.2v1.2h-1.2zM1481 782h1.2v1.2h-1.2zM1356 832h1.2v1.2h-1.2zM1492 614h1.2v1.2h-1.2zM1546 874h1.2v1.2h-1.2zM1434 589h1.2v1.2h-1.2zM1502 891h1.2v1.2h-1.2zM1455 872h1.2v1.2h-1.2zM1451 721h1.2v1.2h-1.2zM1405 880h1.2v1.2h-1.2zM1502 808h1.2v1.2h-1.2zM1461 851h1.2v1.2h-1.2zM1460 807h1.2v1.2h-1.2zM1348 820h1.2v1.2h-1.2zM1338 764h1.2v1.2h-1.2zM1509 818h1.2v1.2h-1.2zM1497 874h1.2v1.2h-1.2zM1539 604h1.2v1.2h-1.2zM1468 766h1.2v1.2h-1.2zM1497 729h1.2v1.2h-1.2zM1512 769h1.2v1.2h-1.2zM1543 771h1.2v1.2h-1.2zM1448 836h1.2v1.2h-1.2zM1360 792h1.2v1.2h-1.2zM1438 869h1.2v1.2h-1.2zM1376 890h1.2v1.2h-1.2zM1488 845h1.2v1.2h-1.2zM1470 819h1.2v1.2h-1.2zM1689 796h1.2v1.2h-1.2zM1512 755h1.2v1.2h-1.2zM1252 866h1.2v1.2h-1.2zM1328 711h1.2v1.2h-1.2zM1469 656h1.2v1.2h-1.2zM1600 736h1.2v1.2h-1.2zM1448 619h1.2v1.2h-1.2zM1608 779h1.2v1.2h-1.2zM1402 801h1.2v1.2h-1.2zM1387 632h1.2v1.2h-1.2zM1324 834h1.2v1.2h-1.2zM1372 636h1.2v1.2h-1.2zM1416 782h1.2v1.2h-1.2zM1494 857h1.2v1.2h-1.2zM1603 864h1.2v1.2h-1.2zM1367 802h1.2v1.2h-1.2zM1536 860h1.2v1.2h-1.2zM1437 877h1.2v1.2h-1.2zM1530 902h1.2v1.2h-1.2zM1418 888h1.2v1.2h-1.2zM1214 841h1.2v1.2h-1.2zM1452 883h1.2v1.2h-1.2zM1612 707h1.2v1.2h-1.2zM1495 752h1.2v1.2h-1.2zM1366 704h1.2v1.2h-1.2zM1436 843h1.2v1.2h-1.2zM1576 826h1.2v1.2h-1.2zM1416 847h1.2v1.2h-1.2zM1485 760h1.2v1.2h-1.2zM1438 785h1.2v1.2h-1.2zM1455 807h1.2v1.2h-1.2zM1474 847h1.2v1.2h-1.2zM1406 685h1.2v1.2h-1.2zM1394 846h1.2v1.2h-1.2zM1351 652h1.2v1.2h-1.2zM1513 716h1.2v1.2h-1.2zM1468 828h1.2v1.2h-1.2zM1505 625h1.2v1.2h-1.2zM1448 745h1.2v1.2h-1.2zM1584 840h1.2v1.2h-1.2zM1503 633h1.2v1.2h-1.2zM1423 794h1.2v1.2h-1.2zM1386 846h1.2v1.2h-1.2zM1293 770h1.2v1.2h-1.2zM1400 772h1.2v1.2h-1.2zM1458 673h1.2v1.2h-1.2zM1378 829h1.2v1.2h-1.2zM1516 665h1.2v1.2h-1.2zM1375 761h1.2v1.2h-1.2zM1403 876h1.2v1.2h-1.2zM1457 754h1.2v1.2h-1.2zM1608 797h1.2v1.2h-1.2zM1362 783h1.2v1.2h-1.2zM1511 598h1.2v1.2h-1.2zM1390 821h1.2v1.2h-1.2zM1361 836h1.2v1.2h-1.2zM1459 884h1.2v1.2h-1.2zM1464 654h1.2v1.2h-1.2zM1363 733h1.2v1.2h-1.2zM1518 902h1.2v1.2h-1.2zM1429 798h1.2v1.2h-1.2zM1394 801h1.2v1.2h-1.2zM1574 860h1.2v1.2h-1.2zM1439 796h1.2v1.2h-1.2zM1420 631h1.2v1.2h-1.2zM1399 731h1.2v1.2h-1.2zM1323 749h1.2v1.2h-1.2zM1310 783h1.2v1.2h-1.2zM1370 783h1.2v1.2h-1.2zM1435 862h1.2v1.2h-1.2zM1506 787h1.2v1.2h-1.2zM1432 801h1.2v1.2h-1.2zM1556 627h1.2v1.2h-1.2zM1457 783h1.2v1.2h-1.2zM1446 648h1.2v1.2h-1.2zM1454 637h1.2v1.2h-1.2zM1378 854h1.2v1.2h-1.2zM1401 884h1.2v1.2h-1.2zM1189 876h1.2v1.2h-1.2zM1430 638h1.2v1.2h-1.2zM1355 898h1.2v1.2h-1.2zM1365 835h1.2v1.2h-1.2zM1511 906h1.2v1.2h-1.2zM1408 905h1.2v1.2h-1.2zM1456 832h1.2v1.2h-1.2zM1477 667h1.2v1.2h-1.2zM1410 771h1.2v1.2h-1.2zM1571 619h1.2v1.2h-1.2zM1348 859h1.2v1.2h-1.2zM1521 895h1.2v1.2h-1.2zM1340 614h1.2v1.2h-1.2zM1517 801h1.2v1.2h-1.2zM1395 627h1.2v1.2h-1.2zM1486 686h1.2v1.2h-1.2zM1499 825h1.2v1.2h-1.2zM1387 646h1.2v1.2h-1.2zM1452 837h1.2v1.2h-1.2zM1271 793h1.2v1.2h-1.2zM1459 605h1.2v1.2h-1.2zM1372 598h1.2v1.2h-1.2zM1517 814h1.2v1.2h-1.2zM1617 783h1.2v1.2h-1.2zM1407 834h1.2v1.2h-1.2zM1301 854h1.2v1.2h-1.2zM1456 971h1.2v1.2h-1.2zM1446 683h1.2v1.2h-1.2zM1549 870h1.2v1.2h-1.2zM1455 817h1.2v1.2h-1.2zM1560 714h1.2v1.2h-1.2zM1458 787h1.2v1.2h-1.2zM1325 807h1.2v1.2h-1.2zM1449 716h1.2v1.2h-1.2zM1443 800h1.2v1.2h-1.2zM1143 724h1.2v1.2h-1.2zM1420 864h1.2v1.2h-1.2zM1442 785h1.2v1.2h-1.2zM1476 799h1.2v1.2h-1.2zM1364 752h1.2v1.2h-1.2zM1660 626h1.2v1.2h-1.2zM1325 912h1.2v1.2h-1.2zM1363 721h1.2v1.2h-1.2zM1506 638h1.2v1.2h-1.2zM1367 815h1.2v1.2h-1.2zM1504 786h1.2v1.2h-1.2zM1449 831h1.2v1.2h-1.2zM1484 816h1.2v1.2h-1.2zM1434 632h1.2v1.2h-1.2zM1376 758h1.2v1.2h-1.2zM1388 643h1.2v1.2h-1.2zM1514 587h1.2v1.2h-1.2zM1545 821h1.2v1.2h-1.2zM1513 635h1.2v1.2h-1.2zM1368 914h1.2v1.2h-1.2zM1465 800h1.2v1.2h-1.2zM1459 895h1.2v1.2h-1.2zM1624 874h1.2v1.2h-1.2zM1731 745h1.2v1.2h-1.2zM1457 798h1.2v1.2h-1.2zM1433 845h1.2v1.2h-1.2zM1545 645h1.2v1.2h-1.2zM1509 896h1.2v1.2h-1.2zM1487 826h1.2v1.2h-1.2zM1441 812h1.2v1.2h-1.2zM1558 839h1.2v1.2h-1.2zM1478 707h1.2v1.2h-1.2zM1542 664h1.2v1.2h-1.2zM1346 763h1.2v1.2h-1.2zM1569 851h1.2v1.2h-1.2zM1463 830h1.2v1.2h-1.2zM1495 855h1.2v1.2h-1.2zM1479 619h1.2v1.2h-1.2zM1430 754h1.2v1.2h-1.2zM1426 794h1.2v1.2h-1.2zM1455 639h1.2v1.2h-1.2zM1479 767h1.2v1.2h-1.2zM1383 789h1.2v1.2h-1.2zM1518 897h1.2v1.2h-1.2zM1589 796h1.2v1.2h-1.2zM1524 835h1.2v1.2h-1.2zM1510 722h1.2v1.2h-1.2zM1451 643h1.2v1.2h-1.2zM1524 839h1.2v1.2h-1.2zM1520 685h1.2v1.2h-1.2zM1485 816h1.2v1.2h-1.2zM1539 791h1.2v1.2h-1.2zM1363 913h1.2v1.2h-1.2zM1371 818h1.2v1.2h-1.2zM1412 718h1.2v1.2h-1.2zM1523 825h1.2v1.2h-1.2zM1531 832h1.2v1.2h-1.2zM1425 845h1.2v1.2h-1.2zM1512 889h1.2v1.2h-1.2zM1466 772h1.2v1.2h-1.2zM1353 803h1.2v1.2h-1.2zM1508 791h1.2v1.2h-1.2zM1563 773h1.2v1.2h-1.2zM1486 600h1.2v1.2h-1.2zM1403 653h1.2v1.2h-1.2zM1634 801h1.2v1.2h-1.2zM1611 849h1.2v1.2h-1.2zM1567 870h1.2v1.2h-1.2zM1496 825h1.2v1.2h-1.2zM1515 819h1.2v1.2h-1.2zM1470 664h1.2v1.2h-1.2zM1550 897h1.2v1.2h-1.2zM1559 620h1.2v1.2h-1.2zM1460 898h1.2v1.2h-1.2zM1501 798h1.2v1.2h-1.2zM1406 587h1.2v1.2h-1.2zM1533 846h1.2v1.2h-1.2zM1568 826h1.2v1.2h-1.2zM1489 807h1.2v1.2h-1.2zM1544 804h1.2v1.2h-1.2zM1500 857h1.2v1.2h-1.2zM1466 637h1.2v1.2h-1.2zM1347 841h1.2v1.2h-1.2zM1483 842h1.2v1.2h-1.2zM1522 794h1.2v1.2h-1.2zM1637 796h1.2v1.2h-1.2zM1375 915h1.2v1.2h-1.2zM1328 815h1.2v1.2h-1.2zM1464 919h1.2v1.2h-1.2zM1422 864h1.2v1.2h-1.2zM1327 873h1.2v1.2h-1.2zM1394 842h1.2v1.2h-1.2zM1482 876h1.2v1.2h-1.2zM1392 723h1.2v1.2h-1.2zM1440 800h1.2v1.2h-1.2zM1480 745h1.2v1.2h-1.2zM1460 802h1.2v1.2h-1.2zM1404 894h1.2v1.2h-1.2zM1452 832h1.2v1.2h-1.2zM1499 742h1.2v1.2h-1.2zM1501 834h1.2v1.2h-1.2zM1404 725h1.2v1.2h-1.2zM1405 763h1.2v1.2h-1.2zM1399 770h1.2v1.2h-1.2zM1517 838h1.2v1.2h-1.2zM1526 609h1.2v1.2h-1.2zM1401 825h1.2v1.2h-1.2zM1592 873h1.2v1.2h-1.2zM1326 829h1.2v1.2h-1.2zM1544 655h1.2v1.2h-1.2zM1539 759h1.2v1.2h-1.2zM1523 634h1.2v1.2h-1.2zM1319 863h1.2v1.2h-1.2zM1478 744h1.2v1.2h-1.2zM1334 888h1.2v1.2h-1.2zM1571 638h1.2v1.2h-1.2zM1462 782h1.2v1.2h-1.2zM1552 807h1.2v1.2h-1.2zM1501 621h1.2v1.2h-1.2zM1429 772h1.2v1.2h-1.2zM1275 872h1.2v1.2h-1.2zM1397 891h1.2v1.2h-1.2zM1481 844h1.2v1.2h-1.2zM1288 636h1.2v1.2h-1.2zM1518 740h1.2v1.2h-1.2zM1434 638h1.2v1.2h-1.2zM1394 919h1.2v1.2h-1.2zM1436 985h1.2v1.2h-1.2zM1309 839h1.2v1.2h-1.2zM1451 860h1.2v1.2h-1.2zM1533 899h1.2v1.2h-1.2zM1490 909h1.2v1.2h-1.2zM1493 723h1.2v1.2h-1.2zM1453 657h1.2v1.2h-1.2zM1482 865h1.2v1.2h-1.2zM1310 859h1.2v1.2h-1.2zM1303 890h1.2v1.2h-1.2zM1436 645h1.2v1.2h-1.2zM1408 787h1.2v1.2h-1.2zM1524 638h1.2v1.2h-1.2zM1540 821h1.2v1.2h-1.2zM1273 868h1.2v1.2h-1.2zM1499 812h1.2v1.2h-1.2zM1333 838h1.2v1.2h-1.2zM1333 870h1.2v1.2h-1.2zM1493 823h1.2v1.2h-1.2zM1551 866h1.2v1.2h-1.2zM1329 822h1.2v1.2h-1.2zM1525 793h1.2v1.2h-1.2zM1513 845h1.2v1.2h-1.2zM1287 883h1.2v1.2h-1.2zM1522 617h1.2v1.2h-1.2zM1188 812h1.2v1.2h-1.2zM1474 780h1.2v1.2h-1.2zM1456 837h1.2v1.2h-1.2zM1435 869h1.2v1.2h-1.2zM1563 762h1.2v1.2h-1.2zM1297 823h1.2v1.2h-1.2zM1433 773h1.2v1.2h-1.2zM1380 649h1.2v1.2h-1.2zM1436 824h1.2v1.2h-1.2zM1318 849h1.2v1.2h-1.2zM1459 671h1.2v1.2h-1.2zM1435 746h1.2v1.2h-1.2zM1575 812h1.2v1.2h-1.2zM1442 785h1.2v1.2h-1.2zM1345 846h1.2v1.2h-1.2zM1514 547h1.2v1.2h-1.2zM1507 819h1.2v1.2h-1.2zM1582 835h1.2v1.2h-1.2zM1385 626h1.2v1.2h-1.2zM1537 885h1.2v1.2h-1.2zM1536 769h1.2v1.2h-1.2zM1538 805h1.2v1.2h-1.2zM1511 780h1.2v1.2h-1.2zM1316 820h1.2v1.2h-1.2zM1498 828h1.2v1.2h-1.2zM1304 887h1.2v1.2h-1.2zM1404 884h1.2v1.2h-1.2zM1449 802h1.2v1.2h-1.2zM1320 853h1.2v1.2h-1.2zM1442 780h1.2v1.2h-1.2zM1461 915h1.2v1.2h-1.2zM1522 801h1.2v1.2h-1.2zM1413 875h1.2v1.2h-1.2zM1505 644h1.2v1.2h-1.2zM1385 867h1.2v1.2h-1.2zM1454 843h1.2v1.2h-1.2zM1430 651h1.2v1.2h-1.2zM1386 884h1.2v1.2h-1.2zM1494 600h1.2v1.2h-1.2zM1461 781h1.2v1.2h-1.2zM1474 844h1.2v1.2h-1.2zM1360 777h1.2v1.2h-1.2zM1431 617h1.2v1.2h-1.2zM1295 924h1.2v1.2h-1.2zM1460 829h1.2v1.2h-1.2zM1636 851h1.2v1.2h-1.2zM1560 768h1.2v1.2h-1.2zM1501 738h1.2v1.2h-1.2zM1626 820h1.2v1.2h-1.2zM1506 840h1.2v1.2h-1.2zM1522 769h1.2v1.2h-1.2zM1467 803h1.2v1.2h-1.2zM1450 856h1.2v1.2h-1.2zM1546 670h1.2v1.2h-1.2zM1435 843h1.2v1.2h-1.2zM1462 856h1.2v1.2h-1.2zM1509 658h1.2v1.2h-1.2zM1382 810h1.2v1.2h-1.2zM1335 846h1.2v1.2h-1.2zM1393 831h1.2v1.2h-1.2zM1465 617h1.2v1.2h-1.2zM1323 750h1.2v1.2h-1.2zM1384 859h1.2v1.2h-1.2zM1321 777h1.2v1.2h-1.2zM1457 866h1.2v1.2h-1.2zM1500 830h1.2v1.2h-1.2zM1480 611h1.2v1.2h-1.2zM1475 901h1.2v1.2h-1.2zM1404 905h1.2v1.2h-1.2zM1526 616h1.2v1.2h-1.2zM1447 762h1.2v1.2h-1.2zM1360 621h1.2v1.2h-1.2zM1187 812h1.2v1.2h-1.2zM1499 904h1.2v1.2h-1.2zM1266 857h1.2v1.2h-1.2zM1393 673h1.2v1.2h-1.2zM1394 877h1.2v1.2h-1.2zM1275 827h1.2v1.2h-1.2zM1685 840h1.2v1.2h-1.2zM1416 834h1.2v1.2h-1.2zM1444 687h1.2v1.2h-1.2zM1339 794h1.2v1.2h-1.2zM1455 806h1.2v1.2h-1.2zM1213 846h1.2v1.2h-1.2zM1506 832h1.2v1.2h-1.2zM1473 636h1.2v1.2h-1.2zM1413 869h1.2v1.2h-1.2zM1435 798h1.2v1.2h-1.2zM1357 804h1.2v1.2h-1.2zM1542 925h1.2v1.2h-1.2zM1487 594h1.2v1.2h-1.2zM1374 796h1.2v1.2h-1.2zM1321 742h1.2v1.2h-1.2zM1459 818h1.2v1.2h-1.2zM1361 735h1.2v1.2h-1.2zM1474 759h1.2v1.2h-1.2zM1427 658h1.2v1.2h-1.2zM1497 811h1.2v1.2h-1.2zM1618 748h1.2v1.2h-1.2zM1518 920h1.2v1.2h-1.2zM1450 808h1.2v1.2h-1.2zM1422 831h1.2v1.2h-1.2zM1533 640h1.2v1.2h-1.2zM1420 810h1.2v1.2h-1.2zM1330 907h1.2v1.2h-1.2zM1289 874h1.2v1.2h-1.2zM1432 755h1.2v1.2h-1.2zM1534 656h1.2v1.2h-1.2zM1583 749h1.2v1.2h-1.2zM1505 823h1.2v1.2h-1.2zM1489 859h1.2v1.2h-1.2zM1425 821h1.2v1.2h-1.2zM1364 732h1.2v1.2h-1.2zM1613 799h1.2v1.2h-1.2zM1558 675h1.2v1.2h-1.2zM1344 741h1.2v1.2h-1.2zM1450 830h1.2v1.2h-1.2zM1335 868h1.2v1.2h-1.2zM1432 849h1.2v1.2h-1.2zM1579 778h1.2v1.2h-1.2zM1440 875h1.2v1.2h-1.2zM1453 787h1.2v1.2h-1.2zM1565 799h1.2v1.2h-1.2zM1383 801h1.2v1.2h-1.2zM1489 906h1.2v1.2h-1.2zM1373 627h1.2v1.2h-1.2zM1521 891h1.2v1.2h-1.2zM1506 783h1.2v1.2h-1.2zM1161 877h1.2v1.2h-1.2zM1510 560h1.2v1.2h-1.2zM1522 806h1.2v1.2h-1.2zM1501 831h1.2v1.2h-1.2zM1458 861h1.2v1.2h-1.2zM1538 815h1.2v1.2h-1.2zM1534 847h1.2v1.2h-1.2zM1537 825h1.2v1.2h-1.2zM1484 969h1.2v1.2h-1.2zM1267 816h1.2v1.2h-1.2zM1331 597h1.2v1.2h-1.2zM1736 798h1.2v1.2h-1.2zM1519 810h1.2v1.2h-1.2zM1418 827h1.2v1.2h-1.2zM1429 735h1.2v1.2h-1.2zM1264 817h1.2v1.2h-1.2zM1465 717h1.2v1.2h-1.2zM1284 799h1.2v1.2h-1.2zM1550 785h1.2v1.2h-1.2zM1397 779h1.2v1.2h-1.2zM1366 865h1.2v1.2h-1.2zM1287 641h1.2v1.2h-1.2zM1434 785h1.2v1.2h-1.2zM1524 723h1.2v1.2h-1.2zM1422 646h1.2v1.2h-1.2zM1462 635h1.2v1.2h-1.2zM1435 765h1.2v1.2h-1.2zM1635 799h1.2v1.2h-1.2zM1354 924h1.2v1.2h-1.2zM1451 896h1.2v1.2h-1.2zM1395 839h1.2v1.2h-1.2zM1567 834h1.2v1.2h-1.2zM1571 665h1.2v1.2h-1.2zM1494 634h1.2v1.2h-1.2zM1493 644h1.2v1.2h-1.2zM1402 723h1.2v1.2h-1.2zM1279 894h1.2v1.2h-1.2zM1390 900h1.2v1.2h-1.2zM1510 650h1.2v1.2h-1.2zM1479 638h1.2v1.2h-1.2zM1559 740h1.2v1.2h-1.2zM1325 871h1.2v1.2h-1.2zM1518 656h1.2v1.2h-1.2zM1440 815h1.2v1.2h-1.2zM1390 825h1.2v1.2h-1.2zM1458 791h1.2v1.2h-1.2zM1401 670h1.2v1.2h-1.2zM1562 868h1.2v1.2h-1.2zM1398 766h1.2v1.2h-1.2zM1478 801h1.2v1.2h-1.2zM1407 625h1.2v1.2h-1.2zM1404 783h1.2v1.2h-1.2zM1442 808h1.2v1.2h-1.2zM1472 848h1.2v1.2h-1.2zM1330 824h1.2v1.2h-1.2zM1557 813h1.2v1.2h-1.2zM1497 733h1.2v1.2h-1.2zM1459 781h1.2v1.2h-1.2zM1384 871h1.2v1.2h-1.2zM1331 897h1.2v1.2h-1.2zM1591 699h1.2v1.2h-1.2zM1486 647h1.2v1.2h-1.2zM1490 797h1.2v1.2h-1.2zM1399 791h1.2v1.2h-1.2zM1410 783h1.2v1.2h-1.2zM1402 619h1.2v1.2h-1.2zM1436 625h1.2v1.2h-1.2zM1592 812h1.2v1.2h-1.2zM1471 811h1.2v1.2h-1.2zM1358 742h1.2v1.2h-1.2zM1398 818h1.2v1.2h-1.2zM1498 784h1.2v1.2h-1.2zM1240 871h1.2v1.2h-1.2zM1387 835h1.2v1.2h-1.2zM1342 870h1.2v1.2h-1.2zM1338 866h1.2v1.2h-1.2zM1460 664h1.2v1.2h-1.2zM1398 805h1.2v1.2h-1.2zM1326 800h1.2v1.2h-1.2zM1450 613h1.2v1.2h-1.2zM1446 653h1.2v1.2h-1.2zM1485 621h1.2v1.2h-1.2zM1430 738h1.2v1.2h-1.2zM1410 609h1.2v1.2h-1.2zM1435 777h1.2v1.2h-1.2zM1373 773h1.2v1.2h-1.2zM1357 920h1.2v1.2h-1.2zM1383 847h1.2v1.2h-1.2zM1524 732h1.2v1.2h-1.2zM1571 831h1.2v1.2h-1.2zM1566 646h1.2v1.2h-1.2zM1432 821h1.2v1.2h-1.2zM1529 897h1.2v1.2h-1.2zM1407 896h1.2v1.2h-1.2zM1364 632h1.2v1.2h-1.2zM1483 621h1.2v1.2h-1.2zM1554 812h1.2v1.2h-1.2zM1420 827h1.2v1.2h-1.2zM1504 838h1.2v1.2h-1.2zM1383 803h1.2v1.2h-1.2zM1411 804h1.2v1.2h-1.2zM1479 780h1.2v1.2h-1.2zM1480 760h1.2v1.2h-1.2zM1468 787h1.2v1.2h-1.2zM1490 619h1.2v1.2h-1.2zM1433 642h1.2v1.2h-1.2zM1548 833h1.2v1.2h-1.2zM1332 740h1.2v1.2h-1.2zM1444 803h1.2v1.2h-1.2zM1506 613h1.2v1.2h-1.2zM1441 813h1.2v1.2h-1.2zM1499 820h1.2v1.2h-1.2zM1427 767h1.2v1.2h-1.2zM1282 713h1.2v1.2h-1.2zM1392 848h1.2v1.2h-1.2zM1536 771h1.2v1.2h-1.2zM1338 821h1.2v1.2h-1.2zM1546 611h1.2v1.2h-1.2zM1410 796h1.2v1.2h-1.2zM1528 799h1.2v1.2h-1.2zM1336 784h1.2v1.2h-1.2zM1375 840h1.2v1.2h-1.2zM1497 762h1.2v1.2h-1.2zM1492 877h1.2v1.2h-1.2zM1442 616h1.2v1.2h-1.2zM1563 612h1.2v1.2h-1.2zM1415 850h1.2v1.2h-1.2zM1442 772h1.2v1.2h-1.2zM1351 809h1.2v1.2h-1.2zM1409 920h1.2v1.2h-1.2zM1489 815h1.2v1.2h-1.2zM1405 749h1.2v1.2h-1.2zM1613 632h1.2v1.2h-1.2zM1455 641h1.2v1.2h-1.2zM1387 784h1.2v1.2h-1.2zM1352 843h1.2v1.2h-1.2zM1584 592h1.2v1.2h-1.2zM1509 870h1.2v1.2h-1.2zM1571 772h1.2v1.2h-1.2zM1455 643h1.2v1.2h-1.2zM1521 659h1.2v1.2h-1.2zM1392 656h1.2v1.2h-1.2zM1555 665h1.2v1.2h-1.2zM1514 782h1.2v1.2h-1.2zM1528 770h1.2v1.2h-1.2zM1408 814h1.2v1.2h-1.2zM1299 794h1.2v1.2h-1.2zM1449 637h1.2v1.2h-1.2zM1367 814h1.2v1.2h-1.2zM1427 782h1.2v1.2h-1.2zM1400 857h1.2v1.2h-1.2zM1442 716h1.2v1.2h-1.2zM1306 861h1.2v1.2h-1.2zM1418 603h1.2v1.2h-1.2zM1426 812h1.2v1.2h-1.2zM1481 842h1.2v1.2h-1.2zM1522 827h1.2v1.2h-1.2zM1398 770h1.2v1.2h-1.2zM1487 638h1.2v1.2h-1.2zM1417 967h1.2v1.2h-1.2zM1331 726h1.2v1.2h-1.2zM1521 674h1.2v1.2h-1.2zM1428 845h1.2v1.2h-1.2zM1514 620h1.2v1.2h-1.2zM1438 779h1.2v1.2h-1.2zM1443 621h1.2v1.2h-1.2zM1546 650h1.2v1.2h-1.2zM1574 868h1.2v1.2h-1.2zM1380 884h1.2v1.2h-1.2zM1474 630h1.2v1.2h-1.2zM1431 862h1.2v1.2h-1.2zM1467 835h1.2v1.2h-1.2zM1373 626h1.2v1.2h-1.2zM1440 686h1.2v1.2h-1.2zM1387 828h1.2v1.2h-1.2zM1368 593h1.2v1.2h-1.2zM1442 792h1.2v1.2h-1.2zM1550 808h1.2v1.2h-1.2zM1358 856h1.2v1.2h-1.2zM1170 582h1.2v1.2h-1.2zM1428 618h1.2v1.2h-1.2zM1510 774h1.2v1.2h-1.2zM2002 763h1.2v1.2h-1.2zM1399 922h1.2v1.2h-1.2zM1473 787h1.2v1.2h-1.2zM1388 835h1.2v1.2h-1.2zM1479 845h1.2v1.2h-1.2zM1494 916h1.2v1.2h-1.2zM1494 647h1.2v1.2h-1.2zM1481 916h1.2v1.2h-1.2zM1282 956h1.2v1.2h-1.2zM1723 729h1.2v1.2h-1.2zM1451 764h1.2v1.2h-1.2zM1448 787h1.2v1.2h-1.2zM1466 750h1.2v1.2h-1.2zM1460 642h1.2v1.2h-1.2zM1373 817h1.2v1.2h-1.2zM1557 833h1.2v1.2h-1.2zM1429 857h1.2v1.2h-1.2zM1472 781h1.2v1.2h-1.2zM1427 849h1.2v1.2h-1.2zM1464 821h1.2v1.2h-1.2zM1489 806h1.2v1.2h-1.2zM1495 843h1.2v1.2h-1.2zM1447 721h1.2v1.2h-1.2zM1374 833h1.2v1.2h-1.2zM1505 623h1.2v1.2h-1.2zM1439 625h1.2v1.2h-1.2zM1484 774h1.2v1.2h-1.2zM1522 891h1.2v1.2h-1.2zM1373 838h1.2v1.2h-1.2zM1349 829h1.2v1.2h-1.2zM1448 614h1.2v1.2h-1.2zM1223 821h1.2v1.2h-1.2zM1498 926h1.2v1.2h-1.2zM1496 861h1.2v1.2h-1.2zM1702 715h1.2v1.2h-1.2zM1396 635h1.2v1.2h-1.2zM1466 756h1.2v1.2h-1.2zM1345 825h1.2v1.2h-1.2zM1522 747h1.2v1.2h-1.2zM1466 812h1.2v1.2h-1.2zM1430 860h1.2v1.2h-1.2zM1355 818h1.2v1.2h-1.2zM1542 662h1.2v1.2h-1.2zM1360 728h1.2v1.2h-1.2zM1343 694h1.2v1.2h-1.2zM1562 907h1.2v1.2h-1.2zM1367 634h1.2v1.2h-1.2zM1349 829h1.2v1.2h-1.2zM1434 802h1.2v1.2h-1.2zM1438 872h1.2v1.2h-1.2zM1356 837h1.2v1.2h-1.2zM1487 639h1.2v1.2h-1.2zM1376 924h1.2v1.2h-1.2zM1393 749h1.2v1.2h-1.2zM1464 870h1.2v1.2h-1.2zM1486 793h1.2v1.2h-1.2zM1647 647h1.2v1.2h-1.2zM1471 647h1.2v1.2h-1.2zM1381 945h1.2v1.2h-1.2zM1474 819h1.2v1.2h-1.2zM1701 857h1.2v1.2h-1.2zM1462 838h1.2v1.2h-1.2zM1512 860h1.2v1.2h-1.2zM1506 858h1.2v1.2h-1.2zM1204 794h1.2v1.2h-1.2zM1490 852h1.2v1.2h-1.2zM1384 777h1.2v1.2h-1.2zM1394 893h1.2v1.2h-1.2zM1513 690h1.2v1.2h-1.2zM1454 618h1.2v1.2h-1.2zM1255 815h1.2v1.2h-1.2zM1294 806h1.2v1.2h-1.2zM1510 765h1.2v1.2h-1.2zM1556 862h1.2v1.2h-1.2zM1236 885h1.2v1.2h-1.2zM1372 577h1.2v1.2h-1.2zM1477 833h1.2v1.2h-1.2zM1424 885h1.2v1.2h-1.2zM1392 794h1.2v1.2h-1.2zM1450 767h1.2v1.2h-1.2zM1359 879h1.2v1.2h-1.2zM1428 778h1.2v1.2h-1.2zM1471 958h1.2v1.2h-1.2zM1567 871h1.2v1.2h-1.2zM1531 627h1.2v1.2h-1.2zM1331 726h1.2v1.2h-1.2zM1417 882h1.2v1.2h-1.2zM1449 662h1.2v1.2h-1.2zM1355 806h1.2v1.2h-1.2zM1462 860h1.2v1.2h-1.2zM1466 630h1.2v1.2h-1.2zM1386 735h1.2v1.2h-1.2zM1498 790h1.2v1.2h-1.2zM1598 638h1.2v1.2h-1.2zM1691 680h1.2v1.2h-1.2zM1459 593h1.2v1.2h-1.2zM1514 825h1.2v1.2h-1.2zM1453 757h1.2v1.2h-1.2zM1435 792h1.2v1.2h-1.2zM1375 817h1.2v1.2h-1.2zM1480 814h1.2v1.2h-1.2zM1437 761h1.2v1.2h-1.2zM1397 822h1.2v1.2h-1.2zM1532 887h1.2v1.2h-1.2zM1590 823h1.2v1.2h-1.2zM1545 763h1.2v1.2h-1.2zM1484 860h1.2v1.2h-1.2zM1439 795h1.2v1.2h-1.2zM1493 665h1.2v1.2h-1.2zM1446 808h1.2v1.2h-1.2zM1490 765h1.2v1.2h-1.2zM1356 895h1.2v1.2h-1.2zM1556 791h1.2v1.2h-1.2zM1445 883h1.2v1.2h-1.2zM1325 730h1.2v1.2h-1.2zM1494 822h1.2v1.2h-1.2zM1350 870h1.2v1.2h-1.2zM1447 640h1.2v1.2h-1.2zM1478 870h1.2v1.2h-1.2zM1504 640h1.2v1.2h-1.2zM1468 812h1.2v1.2h-1.2zM1365 913h1.2v1.2h-1.2zM1402 635h1.2v1.2h-1.2zM1258 829h1.2v1.2h-1.2zM1423 779h1.2v1.2h-1.2zM1545 737h1.2v1.2h-1.2zM1610 782h1.2v1.2h-1.2zM1353 829h1.2v1.2h-1.2zM1410 825h1.2v1.2h-1.2zM1389 790h1.2v1.2h-1.2zM1413 848h1.2v1.2h-1.2zM1524 751h1.2v1.2h-1.2zM1465 765h1.2v1.2h-1.2zM1572 595h1.2v1.2h-1.2zM1588 863h1.2v1.2h-1.2zM1356 916h1.2v1.2h-1.2zM1373 689h1.2v1.2h-1.2zM1454 870h1.2v1.2h-1.2zM1541 835h1.2v1.2h-1.2zM1449 862h1.2v1.2h-1.2zM1541 604h1.2v1.2h-1.2zM1487 921h1.2v1.2h-1.2zM1370 813h1.2v1.2h-1.2zM1406 837h1.2v1.2h-1.2zM1436 805h1.2v1.2h-1.2zM1346 836h1.2v1.2h-1.2zM1563 724h1.2v1.2h-1.2zM1478 787h1.2v1.2h-1.2zM1413 858h1.2v1.2h-1.2zM1255 848h1.2v1.2h-1.2zM1488 783h1.2v1.2h-1.2zM1493 623h1.2v1.2h-1.2zM1400 809h1.2v1.2h-1.2zM1561 877h1.2v1.2h-1.2zM1351 867h1.2v1.2h-1.2zM1442 744h1.2v1.2h-1.2zM1589 855h1.2v1.2h-1.2zM1392 864h1.2v1.2h-1.2zM1454 851h1.2v1.2h-1.2zM1596 662h1.2v1.2h-1.2zM1559 832h1.2v1.2h-1.2zM1366 841h1.2v1.2h-1.2zM1361 880h1.2v1.2h-1.2zM1452 752h1.2v1.2h-1.2zM1463 873h1.2v1.2h-1.2zM1333 865h1.2v1.2h-1.2zM1397 625h1.2v1.2h-1.2zM1513 779h1.2v1.2h-1.2zM1411 753h1.2v1.2h-1.2zM1314 867h1.2v1.2h-1.2zM1395 643h1.2v1.2h-1.2zM1431 775h1.2v1.2h-1.2zM1421 882h1.2v1.2h-1.2zM1480 781h1.2v1.2h-1.2zM1380 881h1.2v1.2h-1.2zM1390 664h1.2v1.2h-1.2zM1576 916h1.2v1.2h-1.2zM1516 852h1.2v1.2h-1.2zM1506 783h1.2v1.2h-1.2zM1557 846h1.2v1.2h-1.2zM1449 603h1.2v1.2h-1.2zM1189 656h1.2v1.2h-1.2zM1413 869h1.2v1.2h-1.2zM1473 793h1.2v1.2h-1.2zM1386 805h1.2v1.2h-1.2zM1574 734h1.2v1.2h-1.2zM1454 813h1.2v1.2h-1.2zM1511 824h1.2v1.2h-1.2zM1339 908h1.2v1.2h-1.2zM1461 840h1.2v1.2h-1.2zM1380 737h1.2v1.2h-1.2zM1486 650h1.2v1.2h-1.2zM1464 839h1.2v1.2h-1.2zM1394 866h1.2v1.2h-1.2zM1474 814h1.2v1.2h-1.2zM1587 771h1.2v1.2h-1.2zM1459 655h1.2v1.2h-1.2zM1515 665h1.2v1.2h-1.2zM1554 770h1.2v1.2h-1.2zM1418 614h1.2v1.2h-1.2zM1519 869h1.2v1.2h-1.2zM1431 770h1.2v1.2h-1.2zM1201 898h1.2v1.2h-1.2zM1460 647h1.2v1.2h-1.2zM1440 754h1.2v1.2h-1.2zM1510 761h1.2v1.2h-1.2zM1468 895h1.2v1.2h-1.2zM1522 784h1.2v1.2h-1.2zM1451 642h1.2v1.2h-1.2zM1401 837h1.2v1.2h-1.2zM1466 632h1.2v1.2h-1.2zM1445 904h1.2v1.2h-1.2zM1332 760h1.2v1.2h-1.2zM1403 879h1.2v1.2h-1.2zM1405 877h1.2v1.2h-1.2zM1404 799h1.2v1.2h-1.2zM1313 744h1.2v1.2h-1.2zM1574 733h1.2v1.2h-1.2zM1520 792h1.2v1.2h-1.2zM1405 756h1.2v1.2h-1.2zM1436 777h1.2v1.2h-1.2zM1520 622h1.2v1.2h-1.2zM1547 645h1.2v1.2h-1.2zM1435 881h1.2v1.2h-1.2zM1407 770h1.2v1.2h-1.2zM1381 790h1.2v1.2h-1.2zM1480 908h1.2v1.2h-1.2zM1319 829h1.2v1.2h-1.2zM1404 684h1.2v1.2h-1.2zM1365 840h1.2v1.2h-1.2zM1534 900h1.2v1.2h-1.2zM1443 809h1.2v1.2h-1.2zM1475 673h1.2v1.2h-1.2zM1341 842h1.2v1.2h-1.2zM1449 803h1.2v1.2h-1.2zM1560 764h1.2v1.2h-1.2zM1445 612h1.2v1.2h-1.2zM1562 620h1.2v1.2h-1.2zM1448 805h1.2v1.2h-1.2zM1481 790h1.2v1.2h-1.2zM1302 816h1.2v1.2h-1.2zM1343 875h1.2v1.2h-1.2zM1458 845h1.2v1.2h-1.2zM1549 850h1.2v1.2h-1.2zM1428 879h1.2v1.2h-1.2zM1566 790h1.2v1.2h-1.2zM1456 642h1.2v1.2h-1.2zM1437 628h1.2v1.2h-1.2zM1442 817h1.2v1.2h-1.2zM1397 837h1.2v1.2h-1.2zM1320 882h1.2v1.2h-1.2zM1429 798h1.2v1.2h-1.2zM1250 852h1.2v1.2h-1.2zM1504 774h1.2v1.2h-1.2zM1370 765h1.2v1.2h-1.2zM1434 637h1.2v1.2h-1.2zM1511 847h1.2v1.2h-1.2zM1416 659h1.2v1.2h-1.2zM1331 735h1.2v1.2h-1.2zM1436 825h1.2v1.2h-1.2zM1373 914h1.2v1.2h-1.2zM1354 856h1.2v1.2h-1.2zM1489 820h1.2v1.2h-1.2zM1348 838h1.2v1.2h-1.2zM1445 897h1.2v1.2h-1.2zM1362 883h1.2v1.2h-1.2zM1393 804h1.2v1.2h-1.2zM1446 862h1.2v1.2h-1.2zM1396 841h1.2v1.2h-1.2zM1435 785h1.2v1.2h-1.2zM1494 803h1.2v1.2h-1.2zM1540 646h1.2v1.2h-1.2zM1465 884h1.2v1.2h-1.2zM1450 858h1.2v1.2h-1.2zM1344 609h1.2v1.2h-1.2zM1366 794h1.2v1.2h-1.2zM1429 644h1.2v1.2h-1.2zM1340 848h1.2v1.2h-1.2zM1480 833h1.2v1.2h-1.2zM1340 898h1.2v1.2h-1.2zM1371 802h1.2v1.2h-1.2zM1428 884h1.2v1.2h-1.2zM1423 916h1.2v1.2h-1.2zM1288 876h1.2v1.2h-1.2zM1603 666h1.2v1.2h-1.2zM1344 814h1.2v1.2h-1.2zM1472 798h1.2v1.2h-1.2zM1350 822h1.2v1.2h-1.2zM1391 841h1.2v1.2h-1.2zM1501 683h1.2v1.2h-1.2zM1477 778h1.2v1.2h-1.2zM1466 791h1.2v1.2h-1.2zM1468 641h1.2v1.2h-1.2zM1430 799h1.2v1.2h-1.2zM1411 846h1.2v1.2h-1.2zM1468 894h1.2v1.2h-1.2zM1402 914h1.2v1.2h-1.2zM1349 846h1.2v1.2h-1.2zM1423 848h1.2v1.2h-1.2zM1525 887h1.2v1.2h-1.2zM1577 770h1.2v1.2h-1.2zM1369 866h1.2v1.2h-1.2zM1350 871h1.2v1.2h-1.2zM1450 617h1.2v1.2h-1.2zM1374 642h1.2v1.2h-1.2zM1553 803h1.2v1.2h-1.2zM1266 874h1.2v1.2h-1.2zM1513 641h1.2v1.2h-1.2zM1525 786h1.2v1.2h-1.2zM1506 787h1.2v1.2h-1.2zM1390 855h1.2v1.2h-1.2zM1368 632h1.2v1.2h-1.2zM1435 885h1.2v1.2h-1.2zM1401 811h1.2v1.2h-1.2zM1504 917h1.2v1.2h-1.2zM1410 617h1.2v1.2h-1.2zM1593 865h1.2v1.2h-1.2zM1473 861h1.2v1.2h-1.2zM1491 639h1.2v1.2h-1.2zM1438 916h1.2v1.2h-1.2zM1469 861h1.2v1.2h-1.2zM1325 850h1.2v1.2h-1.2zM1374 898h1.2v1.2h-1.2zM1595 793h1.2v1.2h-1.2zM1618 508h1.2v1.2h-1.2zM1543 823h1.2v1.2h-1.2zM1304 863h1.2v1.2h-1.2zM1367 867h1.2v1.2h-1.2zM1382 859h1.2v1.2h-1.2zM1364 878h1.2v1.2h-1.2zM1651 746h1.2v1.2h-1.2zM1414 647h1.2v1.2h-1.2zM1425 752h1.2v1.2h-1.2zM1509 747h1.2v1.2h-1.2zM1501 801h1.2v1.2h-1.2zM1433 792h1.2v1.2h-1.2zM1483 813h1.2v1.2h-1.2zM1501 948h1.2v1.2h-1.2zM1577 724h1.2v1.2h-1.2zM1484 613h1.2v1.2h-1.2zM1589 653h1.2v1.2h-1.2zM1467 824h1.2v1.2h-1.2zM1213 840h1.2v1.2h-1.2zM1484 857h1.2v1.2h-1.2zM1494 605h1.2v1.2h-1.2zM1391 753h1.2v1.2h-1.2zM1441 819h1.2v1.2h-1.2zM1446 630h1.2v1.2h-1.2zM1528 635h1.2v1.2h-1.2zM1499 924h1.2v1.2h-1.2zM1430 837h1.2v1.2h-1.2zM1466 661h1.2v1.2h-1.2zM1377 831h1.2v1.2h-1.2zM1307 825h1.2v1.2h-1.2zM1524 621h1.2v1.2h-1.2zM1442 825h1.2v1.2h-1.2zM1638 697h1.2v1.2h-1.2zM1423 660h1.2v1.2h-1.2zM1394 821h1.2v1.2h-1.2zM1433 812h1.2v1.2h-1.2zM1400 817h1.2v1.2h-1.2zM1338 759h1.2v1.2h-1.2zM1523 737h1.2v1.2h-1.2zM1445 851h1.2v1.2h-1.2zM1555 802h1.2v1.2h-1.2zM1437 811h1.2v1.2h-1.2zM1423 821h1.2v1.2h-1.2zM1366 620h1.2v1.2h-1.2zM1513 782h1.2v1.2h-1.2zM1469 611h1.2v1.2h-1.2zM1558 851h1.2v1.2h-1.2zM1540 854h1.2v1.2h-1.2zM1442 619h1.2v1.2h-1.2zM1388 654h1.2v1.2h-1.2zM1501 852h1.2v1.2h-1.2zM1425 748h1.2v1.2h-1.2zM1321 930h1.2v1.2h-1.2zM1590 856h1.2v1.2h-1.2zM1427 854h1.2v1.2h-1.2zM1423 797h1.2v1.2h-1.2zM1484 836h1.2v1.2h-1.2zM1609 822h1.2v1.2h-1.2zM1427 715h1.2v1.2h-1.2zM1431 828h1.2v1.2h-1.2zM1506 742h1.2v1.2h-1.2zM1328 799h1.2v1.2h-1.2zM1617 771h1.2v1.2h-1.2zM1469 834h1.2v1.2h-1.2zM1422 678h1.2v1.2h-1.2zM1576 980h1.2v1.2h-1.2zM1501 712h1.2v1.2h-1.2zM1499 632h1.2v1.2h-1.2zM1359 735h1.2v1.2h-1.2zM1445 857h1.2v1.2h-1.2zM1394 777h1.2v1.2h-1.2zM1563 849h1.2v1.2h-1.2zM1382 668h1.2v1.2h-1.2zM1420 819h1.2v1.2h-1.2zM1493 760h1.2v1.2h-1.2zM1514 806h1.2v1.2h-1.2zM1439 831h1.2v1.2h-1.2zM1396 656h1.2v1.2h-1.2zM1567 843h1.2v1.2h-1.2zM1343 856h1.2v1.2h-1.2zM1346 796h1.2v1.2h-1.2zM1551 665h1.2v1.2h-1.2zM1326 682h1.2v1.2h-1.2zM1557 790h1.2v1.2h-1.2zM1436 844h1.2v1.2h-1.2zM1410 751h1.2v1.2h-1.2zM1459 623h1.2v1.2h-1.2zM1410 846h1.2v1.2h-1.2zM1489 730h1.2v1.2h-1.2zM1447 798h1.2v1.2h-1.2zM1401 773h1.2v1.2h-1.2zM1364 786h1.2v1.2h-1.2zM1501 775h1.2v1.2h-1.2zM1238 774h1.2v1.2h-1.2zM1543 748h1.2v1.2h-1.2zM1517 815h1.2v1.2h-1.2zM1458 822h1.2v1.2h-1.2zM1375 809h1.2v1.2h-1.2zM1437 662h1.2v1.2h-1.2zM1494 727h1.2v1.2h-1.2zM1360 836h1.2v1.2h-1.2zM1342 631h1.2v1.2h-1.2zM1431 829h1.2v1.2h-1.2zM1506 777h1.2v1.2h-1.2zM1379 571h1.2v1.2h-1.2zM1381 807h1.2v1.2h-1.2zM1523 790h1.2v1.2h-1.2zM1419 839h1.2v1.2h-1.2zM1566 619h1.2v1.2h-1.2zM1416 640h1.2v1.2h-1.2zM1450 782h1.2v1.2h-1.2zM1448 849h1.2v1.2h-1.2zM1397 895h1.2v1.2h-1.2zM1479 670h1.2v1.2h-1.2zM1517 796h1.2v1.2h-1.2zM1454 761h1.2v1.2h-1.2zM1504 654h1.2v1.2h-1.2zM1417 633h1.2v1.2h-1.2zM1542 849h1.2v1.2h-1.2zM1501 812h1.2v1.2h-1.2zM1594 654h1.2v1.2h-1.2zM1457 908h1.2v1.2h-1.2zM1554 656h1.2v1.2h-1.2zM1333 895h1.2v1.2h-1.2zM1734 609h1.2v1.2h-1.2zM1466 813h1.2v1.2h-1.2zM1537 610h1.2v1.2h-1.2zM1341 744h1.2v1.2h-1.2zM1526 894h1.2v1.2h-1.2zM1537 650h1.2v1.2h-1.2zM1539 840h1.2v1.2h-1.2zM1585 882h1.2v1.2h-1.2zM1457 717h1.2v1.2h-1.2zM1402 843h1.2v1.2h-1.2zM1409 846h1.2v1.2h-1.2zM1286 802h1.2v1.2h-1.2zM1368 848h1.2v1.2h-1.2zM1424 832h1.2v1.2h-1.2zM1173 868h1.2v1.2h-1.2zM1489 835h1.2v1.2h-1.2zM1339 681h1.2v1.2h-1.2zM1337 839h1.2v1.2h-1.2zM1315 808h1.2v1.2h-1.2zM1529 788h1.2v1.2h-1.2zM1505 841h1.2v1.2h-1.2zM1350 861h1.2v1.2h-1.2zM1346 880h1.2v1.2h-1.2zM1510 758h1.2v1.2h-1.2zM1579 821h1.2v1.2h-1.2zM1444 821h1.2v1.2h-1.2zM1321 896h1.2v1.2h-1.2zM1540 907h1.2v1.2h-1.2zM1478 897h1.2v1.2h-1.2zM1414 641h1.2v1.2h-1.2zM1383 971h1.2v1.2h-1.2zM1339 780h1.2v1.2h-1.2zM1339 753h1.2v1.2h-1.2zM1452 795h1.2v1.2h-1.2zM1450 679h1.2v1.2h-1.2zM1387 870h1.2v1.2h-1.2zM1486 792h1.2v1.2h-1.2zM1470 772h1.2v1.2h-1.2zM1306 838h1.2v1.2h-1.2zM1475 865h1.2v1.2h-1.2zM1418 764h1.2v1.2h-1.2zM1454 799h1.2v1.2h-1.2zM1488 879h1.2v1.2h-1.2zM1385 812h1.2v1.2h-1.2zM1377 819h1.2v1.2h-1.2zM1458 850h1.2v1.2h-1.2zM1472 663h1.2v1.2h-1.2zM1350 733h1.2v1.2h-1.2zM1491 751h1.2v1.2h-1.2zM1470 770h1.2v1.2h-1.2zM1457 897h1.2v1.2h-1.2zM1483 800h1.2v1.2h-1.2zM1538 776h1.2v1.2h-1.2zM1404 692h1.2v1.2h-1.2zM1466 862h1.2v1.2h-1.2zM1218 844h1.2v1.2h-1.2zM1364 846h1.2v1.2h-1.2zM1461 766h1.2v1.2h-1.2zM1650 794h1.2v1.2h-1.2zM1437 636h1.2v1.2h-1.2zM1471 781h1.2v1.2h-1.2zM1364 833h1.2v1.2h-1.2zM1564 758h1.2v1.2h-1.2zM1399 613h1.2v1.2h-1.2zM1544 884h1.2v1.2h-1.2zM1355 790h1.2v1.2h-1.2zM1486 861h1.2v1.2h-1.2zM1600 817h1.2v1.2h-1.2zM1438 667h1.2v1.2h-1.2zM1381 843h1.2v1.2h-1.2zM1506 834h1.2v1.2h-1.2zM1406 868h1.2v1.2h-1.2zM1454 827h1.2v1.2h-1.2zM1286 810h1.2v1.2h-1.2zM1563 898h1.2v1.2h-1.2zM1512 840h1.2v1.2h-1.2zM1406 838h1.2v1.2h-1.2zM1491 757h1.2v1.2h-1.2zM1588 780h1.2v1.2h-1.2zM1267 876h1.2v1.2h-1.2zM1377 824h1.2v1.2h-1.2zM1366 891h1.2v1.2h-1.2zM1452 818h1.2v1.2h-1.2zM1329 750h1.2v1.2h-1.2zM1312 755h1.2v1.2h-1.2zM1476 828h1.2v1.2h-1.2zM1447 753h1.2v1.2h-1.2zM1452 654h1.2v1.2h-1.2zM1475 606h1.2v1.2h-1.2zM1490 765h1.2v1.2h-1.2zM1623 609h1.2v1.2h-1.2zM1353 830h1.2v1.2h-1.2zM1422 910h1.2v1.2h-1.2zM1395 817h1.2v1.2h-1.2zM1569 779h1.2v1.2h-1.2zM1194 918h1.2v1.2h-1.2zM1466 848h1.2v1.2h-1.2zM1437 867h1.2v1.2h-1.2zM1448 848h1.2v1.2h-1.2zM1521 811h1.2v1.2h-1.2zM1377 797h1.2v1.2h-1.2zM1541 881h1.2v1.2h-1.2zM1266 647h1.2v1.2h-1.2zM1471 764h1.2v1.2h-1.2zM1213 870h1.2v1.2h-1.2zM1578 644h1.2v1.2h-1.2zM1450 832h1.2v1.2h-1.2zM1801 891h1.2v1.2h-1.2zM1624 624h1.2v1.2h-1.2zM1331 818h1.2v1.2h-1.2zM1314 640h1.2v1.2h-1.2zM1459 789h1.2v1.2h-1.2zM1401 828h1.2v1.2h-1.2zM1479 639h1.2v1.2h-1.2zM1386 857h1.2v1.2h-1.2zM1409 810h1.2v1.2h-1.2zM1328 919h1.2v1.2h-1.2zM1475 775h1.2v1.2h-1.2zM1264 755h1.2v1.2h-1.2zM1488 662h1.2v1.2h-1.2zM1499 800h1.2v1.2h-1.2zM1415 767h1.2v1.2h-1.2zM1356 841h1.2v1.2h-1.2zM1350 884h1.2v1.2h-1.2zM1508 783h1.2v1.2h-1.2zM1458 819h1.2v1.2h-1.2zM1509 792h1.2v1.2h-1.2zM1377 771h1.2v1.2h-1.2zM1515 664h1.2v1.2h-1.2zM1191 824h1.2v1.2h-1.2zM1437 651h1.2v1.2h-1.2zM1410 858h1.2v1.2h-1.2zM1569 742h1.2v1.2h-1.2zM1301 826h1.2v1.2h-1.2zM1547 775h1.2v1.2h-1.2zM1303 830h1.2v1.2h-1.2zM1423 750h1.2v1.2h-1.2zM1505 771h1.2v1.2h-1.2zM1526 822h1.2v1.2h-1.2zM1586 846h1.2v1.2h-1.2zM1482 760h1.2v1.2h-1.2zM1515 798h1.2v1.2h-1.2zM1482 821h1.2v1.2h-1.2zM1409 785h1.2v1.2h-1.2zM1526 633h1.2v1.2h-1.2zM1355 774h1.2v1.2h-1.2zM1404 719h1.2v1.2h-1.2zM1300 861h1.2v1.2h-1.2zM1462 900h1.2v1.2h-1.2zM1327 828h1.2v1.2h-1.2zM1306 817h1.2v1.2h-1.2zM1437 795h1.2v1.2h-1.2zM1451 866h1.2v1.2h-1.2zM1498 694h1.2v1.2h-1.2zM1453 650h1.2v1.2h-1.2zM1447 678h1.2v1.2h-1.2zM1552 606h1.2v1.2h-1.2zM1393 816h1.2v1.2h-1.2zM1344 635h1.2v1.2h-1.2zM1446 805h1.2v1.2h-1.2zM1491 870h1.2v1.2h-1.2zM1543 601h1.2v1.2h-1.2zM1459 839h1.2v1.2h-1.2zM1306 955h1.2v1.2h-1.2zM1508 620h1.2v1.2h-1.2zM1493 761h1.2v1.2h-1.2zM1517 744h1.2v1.2h-1.2zM1374 661h1.2v1.2h-1.2zM1444 613h1.2v1.2h-1.2zM1423 900h1.2v1.2h-1.2zM1377 806h1.2v1.2h-1.2zM1438 635h1.2v1.2h-1.2zM1499 699h1.2v1.2h-1.2zM1333 893h1.2v1.2h-1.2zM1438 809h1.2v1.2h-1.2zM1393 862h1.2v1.2h-1.2zM1330 801h1.2v1.2h-1.2zM1545 748h1.2v1.2h-1.2zM1376 793h1.2v1.2h-1.2zM1354 819h1.2v1.2h-1.2zM1436 823h1.2v1.2h-1.2zM1493 775h1.2v1.2h-1.2zM1414 794h1.2v1.2h-1.2zM1425 927h1.2v1.2h-1.2zM1416 801h1.2v1.2h-1.2zM1447 880h1.2v1.2h-1.2zM1475 785h1.2v1.2h-1.2zM1514 828h1.2v1.2h-1.2zM1570 806h1.2v1.2h-1.2zM1424 630h1.2v1.2h-1.2zM1362 827h1.2v1.2h-1.2zM1368 908h1.2v1.2h-1.2zM1388 931h1.2v1.2h-1.2zM1540 630h1.2v1.2h-1.2zM1382 853h1.2v1.2h-1.2zM1523 889h1.2v1.2h-1.2zM1370 898h1.2v1.2h-1.2zM1374 780h1.2v1.2h-1.2zM1266 865h1.2v1.2h-1.2zM1408 872h1.2v1.2h-1.2zM1620 605h1.2v1.2h-1.2zM1515 878h1.2v1.2h-1.2zM1529 826h1.2v1.2h-1.2zM1570 769h1.2v1.2h-1.2zM1465 594h1.2v1.2h-1.2zM1281 817h1.2v1.2h-1.2zM1394 748h1.2v1.2h-1.2zM1294 887h1.2v1.2h-1.2zM1413 792h1.2v1.2h-1.2zM1397 765h1.2v1.2h-1.2zM1446 713h1.2v1.2h-1.2zM1322 782h1.2v1.2h-1.2zM1221 667h1.2v1.2h-1.2zM1475 917h1.2v1.2h-1.2zM1377 761h1.2v1.2h-1.2zM1467 900h1.2v1.2h-1.2zM1492 881h1.2v1.2h-1.2zM1548 642h1.2v1.2h-1.2zM1525 832h1.2v1.2h-1.2zM1461 814h1.2v1.2h-1.2zM1625 912h1.2v1.2h-1.2zM1461 697h1.2v1.2h-1.2zM1280 879h1.2v1.2h-1.2zM1435 835h1.2v1.2h-1.2zM1512 1020h1.2v1.2h-1.2zM1432 628h1.2v1.2h-1.2zM1501 787h1.2v1.2h-1.2zM1444 849h1.2v1.2h-1.2zM1420 657h1.2v1.2h-1.2zM1459 885h1.2v1.2h-1.2zM1541 876h1.2v1.2h-1.2zM1584 662h1.2v1.2h-1.2zM1565 823h1.2v1.2h-1.2zM1476 881h1.2v1.2h-1.2zM1500 837h1.2v1.2h-1.2zM1466 637h1.2v1.2h-1.2zM1478 667h1.2v1.2h-1.2zM1584 784h1.2v1.2h-1.2zM1464 734h1.2v1.2h-1.2zM1346 826h1.2v1.2h-1.2zM1372 688h1.2v1.2h-1.2zM1370 692h1.2v1.2h-1.2zM1420 619h1.2v1.2h-1.2zM1418 862h1.2v1.2h-1.2zM1658 884h1.2v1.2h-1.2zM1331 880h1.2v1.2h-1.2zM1404 739h1.2v1.2h-1.2zM1377 891h1.2v1.2h-1.2zM1330 830h1.2v1.2h-1.2zM1376 861h1.2v1.2h-1.2zM1505 751h1.2v1.2h-1.2zM1469 842h1.2v1.2h-1.2zM1287 848h1.2v1.2h-1.2zM1445 885h1.2v1.2h-1.2zM1280 827h1.2v1.2h-1.2zM1485 828h1.2v1.2h-1.2zM1396 624h1.2v1.2h-1.2zM1649 631h1.2v1.2h-1.2zM1831 804h1.2v1.2h-1.2zM1497 650h1.2v1.2h-1.2zM1263 839h1.2v1.2h-1.2zM1571 884h1.2v1.2h-1.2zM1464 792h1.2v1.2h-1.2zM1390 772h1.2v1.2h-1.2zM1451 646h1.2v1.2h-1.2zM1333 641h1.2v1.2h-1.2zM1495 658h1.2v1.2h-1.2zM1665 783h1.2v1.2h-1.2zM1407 901h1.2v1.2h-1.2zM1378 856h1.2v1.2h-1.2zM1442 670h1.2v1.2h-1.2zM1552 819h1.2v1.2h-1.2zM1542 632h1.2v1.2h-1.2zM1513 913h1.2v1.2h-1.2zM1363 856h1.2v1.2h-1.2zM1571 632h1.2v1.2h-1.2zM1558 767h1.2v1.2h-1.2zM1561 906h1.2v1.2h-1.2zM1332 915h1.2v1.2h-1.2zM1521 840h1.2v1.2h-1.2zM1454 852h1.2v1.2h-1.2zM1435 832h1.2v1.2h-1.2zM1503 808h1.2v1.2h-1.2zM1428 767h1.2v1.2h-1.2zM1496 653h1.2v1.2h-1.2zM1399 643h1.2v1.2h-1.2zM1656 832h1.2v1.2h-1.2zM1483 699h1.2v1.2h-1.2zM1252 763h1.2v1.2h-1.2zM1485 819h1.2v1.2h-1.2zM1458 774h1.2v1.2h-1.2zM1464 637h1.2v1.2h-1.2zM1396 623h1.2v1.2h-1.2zM1434 611h1.2v1.2h-1.2zM1473 610h1.2v1.2h-1.2zM1420 873h1.2v1.2h-1.2zM1431 821h1.2v1.2h-1.2zM1423 918h1.2v1.2h-1.2zM1338 707h1.2v1.2h-1.2zM1437 634h1.2v1.2h-1.2zM1458 883h1.2v1.2h-1.2zM1674 586h1.2v1.2h-1.2zM1436 870h1.2v1.2h-1.2zM1248 795h1.2v1.2h-1.2zM1475 903h1.2v1.2h-1.2zM1464 904h1.2v1.2h-1.2zM1573 817h1.2v1.2h-1.2zM1390 913h1.2v1.2h-1.2zM1399 778h1.2v1.2h-1.2zM1363 854h1.2v1.2h-1.2zM1304 841h1.2v1.2h-1.2zM1397 808h1.2v1.2h-1.2zM1399 905h1.2v1.2h-1.2zM1408 727h1.2v1.2h-1.2zM1482 804h1.2v1.2h-1.2zM1506 665h1.2v1.2h-1.2zM1397 808h1.2v1.2h-1.2zM1513 778h1.2v1.2h-1.2zM1515 796h1.2v1.2h-1.2zM1415 927h1.2v1.2h-1.2zM1419 788h1.2v1.2h-1.2zM1490 634h1.2v1.2h-1.2zM1386 931h1.2v1.2h-1.2zM1396 797h1.2v1.2h-1.2zM1393 763h1.2v1.2h-1.2zM1312 654h1.2v1.2h-1.2zM1428 865h1.2v1.2h-1.2zM1428 754h1.2v1.2h-1.2zM1496 871h1.2v1.2h-1.2zM1319 883h1.2v1.2h-1.2zM1533 939h1.2v1.2h-1.2z" fill="#6a6660" opacity="0.6"/><path d="M1368 745 L1400 727 L1470 780 L1520 800 L1530 850 L1490 870 L1430 850 L1372 790 Z" fill="#55504a" opacity="0.28"/><path d="M1368 745 L1400 727 L1410 737 L1380 754 Z M1380 760 L1460 820 L1455 830 L1375 770 Z" fill="#a09a94" opacity="0.25"/><path d="M1595 772l1.5 -6h1.5l-1 6zM1488 695l1.5 -6h1.5l-1 6zM1379 860l1.5 -6h1.5l-1 6zM1347 832l1.5 -6h1.5l-1 6zM1761 695l1.5 -6h1.5l-1 6zM1669 900l1.5 -6h1.5l-1 6zM1649 728l1.5 -6h1.5l-1 6zM1356 818l1.5 -6h1.5l-1 6zM1428 758l1.5 -6h1.5l-1 6zM1346 786l1.5 -6h1.5l-1 6zM1554 726l1.5 -6h1.5l-1 6zM1384 730l1.5 -6h1.5l-1 6zM1365 833l1.5 -6h1.5l-1 6zM1652 856l1.5 -6h1.5l-1 6zM1714 819l1.5 -6h1.5l-1 6zM1629 875l1.5 -6h1.5l-1 6zM1678 725l1.5 -6h1.5l-1 6zM1762 862l1.5 -6h1.5l-1 6zM1616 715l1.5 -6h1.5l-1 6zM1730 739l1.5 -6h1.5l-1 6zM1556 725l1.5 -6h1.5l-1 6zM1762 699l1.5 -6h1.5l-1 6zM1356 813l1.5 -6h1.5l-1 6zM1746 802l1.5 -6h1.5l-1 6zM1637 788l1.5 -6h1.5l-1 6zM1461 790l1.5 -6h1.5l-1 6zM1355 753l1.5 -6h1.5l-1 6zM1593 798l1.5 -6h1.5l-1 6zM1584 886l1.5 -6h1.5l-1 6zM1701 886l1.5 -6h1.5l-1 6zM1769 704l1.5 -6h1.5l-1 6zM1421 725l1.5 -6h1.5l-1 6zM1640 873l1.5 -6h1.5l-1 6zM1681 696l1.5 -6h1.5l-1 6zM1367 909l1.5 -6h1.5l-1 6zM1528 817l1.5 -6h1.5l-1 6zM1355 754l1.5 -6h1.5l-1 6zM1525 782l1.5 -6h1.5l-1 6zM1567 761l1.5 -6h1.5l-1 6zM1678 750l1.5 -6h1.5l-1 6zM1522 876l1.5 -6h1.5l-1 6zM1526 842l1.5 -6h1.5l-1 6zM1339 784l1.5 -6h1.5l-1 6zM1720 748l1.5 -6h1.5l-1 6zM1403 828l1.5 -6h1.5l-1 6z" fill="#a07848" opacity="0.65"/><path d="M1572 565h2.5v2.5h-2.5zM1604 558h2.5v2.5h-2.5zM1618 590h2.5v2.5h-2.5zM1662 607h2.5v2.5h-2.5zM1567 612h2.5v2.5h-2.5zM1700 635h2.5v2.5h-2.5zM1725 660h2.5v2.5h-2.5zM1660 705h2.5v2.5h-2.5zM1775 735h2.5v2.5h-2.5zM1805 685h2.5v2.5h-2.5zM1626 648h2.5v2.5h-2.5z" fill="#9a9a96" opacity="0.7"/><line x1="816" y1="514" x2="1642" y2="120" stroke="#9b9b9b" stroke-width="1.4"/><line x1="816" y1="514" x2="887" y2="833" stroke="#9b9b9b" stroke-width="1.4"/><line x1="816" y1="514" x2="1330" y2="1208" stroke="#9b9b9b" stroke-width="1.4"/><line x1="887" y1="833" x2="1608" y2="466" stroke="#9b9b9b" stroke-width="1.4"/><line x1="1608" y1="466" x2="1642" y2="120" stroke="#9b9b9b" stroke-width="1.4"/><line x1="1608" y1="466" x2="2101" y2="1004" stroke="#9b9b9b" stroke-width="1.4"/><line x1="1330" y1="1208" x2="1334" y2="1464" stroke="#9b9b9b" stroke-width="1.4"/><line x1="1330" y1="1208" x2="2226" y2="701" stroke="#9b9b9b" stroke-width="1.4"/><line x1="1334" y1="1464" x2="2101" y2="1004" stroke="#9b9b9b" stroke-width="1.4"/><line x1="2101" y1="1004" x2="2226" y2="701" stroke="#9b9b9b" stroke-width="1.4"/><line x1="1642" y1="120" x2="2226" y2="701" stroke="#9b9b9b" stroke-width="1.4"/><line x1="887" y1="833" x2="1334" y2="1464" stroke="#9b9b9b" stroke-width="1.4"/><circle cx="1228" cy="457" r="8.5" fill="#4a6fa8" stroke="#101418" stroke-width="2"/><circle cx="1507" cy="574" r="9.5" fill="#b03a5a" stroke="#101010" stroke-width="2.5"/><circle cx="1912" cy="548" r="9" fill="#5c9a36" stroke="#101410" stroke-width="2"/><path d="M1418 810 Q1440 740 1488 720" fill="none" stroke="#3a68a8" stroke-width="6"/><path d="M1504 721 Q1545 760 1547 828" fill="none" stroke="#5a9632" stroke-width="6"/><path d="M1423 817 Q1470 860 1538 838" fill="none" stroke="#a03858" stroke-width="6"/><polygon points="1494.0,772.1 1500.1,714.7 1497,692 1491.1,714.1 1490.0,771.9" fill="#a63a5c"/><polygon points="1491.0,770.2 1416.2,807.9 1390,828 1421.0,816.7 1493.0,773.8" fill="#5e9a35"/><polygon points="1490.5,773.3 1542.9,838.6 1568,860 1550.5,832.1 1493.5,770.7" fill="#3f6db0"/></svg>
<div class="r" style="left:2106px;top:226px;width:60px;height:20px;background:#a9a9ad;"></div>
<div class="r" style="left:2159px;top:228px;width:5px;height:16px;background:#4a78b8;"></div>
<div class="t" style="left:1130.0px;width:2000px;text-align:center;top:229.1px;font-size:15.22px;color:#1a1a1a;">3D</div>
<div class="r" style="left:2186px;top:207px;width:1654px;height:6px;background:#050505;"></div>
<div class="r" style="left:2186px;top:213px;width:1654px;height:1350px;background:#212429;"></div>
<div class="r" style="left:2186px;top:1563px;width:1654px;height:533px;background:#131313;"></div>
<div class="r" style="left:3741px;top:225px;width:62px;height:22px;background:#8a8a90;border:1px solid #15171a"></div>
<div class="t" style="left:2772.0px;width:2000px;text-align:center;top:229.9px;font-size:13.04px;color:#1a1d26;">help</div>
<svg style="left:2244px;top:272px" width="60" height="60"><circle cx="30" cy="29.5" r="27" fill="#44789a"/><path d="M16 29.5 L33 17.5 L30 26.5 L45 26.5 L45 32.5 L30 32.5 L33 41.5 Z" fill="#1e2226"/></svg>
<div class="t" style="left:2314.0px;top:286.2px;font-size:29.71px;color:#8e8e8e;transform:scaleX(0.9056);transform-origin:0 0;">GO BACK</div>
<div class="r" style="left:2314px;top:315px;width:123px;height:2px;background:#8e8e8e;"></div>
<div class="t" style="left:1761.0px;width:2000px;text-align:right;top:469.1px;font-size:21.00px;color:#5f6266;">ormat</div>
<div class="r" style="left:3716px;top:554px;width:64px;height:91px;background:transparent;border:2px solid #5a1418;border-left:none"></div>
<div class="t" style="left:1742.0px;width:2000px;text-align:right;top:574.1px;font-size:21.00px;color:#68686a;">ound</div>
<div class="r" style="left:3716px;top:675px;width:64px;height:62px;background:transparent;border:2px solid #4a4d52;border-left:none"></div>
<svg style="left:2322px;top:1350px" width="16" height="24"><path d="M2.5 1 L14.5 11.5 L2.5 22 Z" fill="#3c76a0"/></svg>
<div class="t" style="left:2358.0px;top:1352.5px;font-size:21.74px;color:#6b6d70;transform:scaleX(0.9467);transform-origin:0 0;">Rendering images or videos <span style="color:#9a9a9a;text-decoration:underline">click here</span></div>
<svg style="left:2322px;top:1398px" width="16" height="24"><path d="M2.5 1 L14.5 11.5 L2.5 22 Z" fill="#3c76a0"/></svg>
<div class="t" style="left:2358.0px;top:1400.2px;font-size:21.74px;color:#6b6d70;transform:scaleX(0.9500);transform-origin:0 0;">Creating an Ortho Photo and a DSM <span style="color:#9a9a9a;text-decoration:underline">click here</span></div>
<svg style="left:2322px;top:1445px" width="16" height="24"><path d="M2.5 1 L14.5 11.5 L2.5 22 Z" fill="#3c76a0"/></svg>
<div class="t" style="left:2358.0px;top:1447.9px;font-size:21.74px;color:#6b6d70;transform:scaleX(0.9577);transform-origin:0 0;">Exporting Textured Models and Point Clouds <span style="color:#9a9a9a;text-decoration:underline">click here</span></div>
<div class="t" style="left:2216.0px;top:1585.5px;font-size:21.74px;color:#7c7c7c;transform:scaleX(0.9474);transform-origin:0 0;">© 2018 Capturing Reality s.r.o. | All rights reserved.</div>
<div class="r" style="left:167px;top:1948px;width:337px;height:137px;background:rgba(140,140,140,0.8);border:1px dotted #a0a0a0"></div>
<div class="t" style="left:172.0px;top:1955.7px;font-size:14.49px;color:#262626;">DJI_0128.DNG</div>
<div class="t" style="left:172.0px;top:1973.4px;font-size:14.49px;color:#262626;">960x540</div>
<div class="t" style="left:172.0px;top:1991.1px;font-size:14.49px;color:#262626;">focal: 24.00mm</div>
<div class="t" style="left:172.0px;top:2008.8px;font-size:14.49px;color:#262626;">coordinates: epsg:4326 (WGS 84)</div>
<div class="t" style="left:172.0px;top:2026.5px;font-size:14.49px;color:#262626;">lat: N41,15,25.032301</div>
<div class="t" style="left:172.0px;top:2044.2px;font-size:14.49px;color:#262626;">lon: W4,17,43.665600</div>
<div class="t" style="left:172.0px;top:2061.9px;font-size:14.49px;color:#262626;">alt : 696.17</div>
<div class="r" style="left:402px;top:1972px;width:1px;height:107px;background:#1a1a1a;"></div>
<div class="t" style="left:405.0px;top:1973.7px;font-size:14.49px;color:#262626;">features: 4114</div>
<div class="r" style="left:0px;top:912px;width:519px;height:402px;background:rgba(0,0,0,0.62);"></div>
<div class="r" style="left:519px;top:912px;width:6px;height:402px;background:#0a0b0d;"></div>
<div class="r" style="left:525px;top:912px;width:3315px;height:402px;background:rgba(2,3,5,0.86);"></div>
<svg style="left:1000px;top:920px" width="820" height="230"><circle cx="480" cy="22" r="9" fill="#1e0c12"/><circle cx="36" cy="97" r="9" fill="#0f180c"/><circle cx="793" cy="209" r="9" fill="#0b1420"/></svg>
<div class="t" style="left:1588.0px;top:1015.6px;font-size:46.38px;color:#4a86d6;transform:scaleX(1.1103);transform-origin:0 0;">Reconstruction in High Detail</div>
<div class="r" style="left:1710px;top:1095px;width:424px;height:12px;background:#060606;border:1.5px solid #7a7a7a"></div>
<div class="r" style="left:1711px;top:1096px;width:144px;height:10px;background:#4a82cc;"></div>
<div class="t" style="left:1643.0px;top:1140.0px;font-size:23.48px;color:#b0b0b0;transform:scaleX(1.1190);transform-origin:0 0;">total 21 seconds | finish estimation 11:14:37 AM</div>
<div class="r" style="left:3640px;top:1077px;width:161px;height:60px;background:#4a7fc9;border:2px solid #06080c"></div>
<div class="t" style="left:1760.5px;width:2000px;text-align:right;top:1095.2px;font-size:24.00px;color:#273b5c;">Pause</div>
<div class="r" style="left:3640px;top:1146px;width:161px;height:60px;background:#4a7fc9;border:2px solid #06080c"></div>
<div class="t" style="left:1758.0px;width:2000px;text-align:right;top:1164.2px;font-size:24.00px;color:#273b5c;">Export</div>
<div class="r" style="left:3640px;top:1215px;width:161px;height:60px;background:#4a7fc9;border:2px solid #06080c"></div>
<div class="t" style="left:1777.0px;width:2000px;text-align:right;top:1233.2px;font-size:24.00px;color:#273b5c;">Minimize</div>
<div class="r" style="left:2238px;top:363px;width:1479px;height:946px;background:#0d0f12;"></div>
<div class="r" style="left:2239px;top:364px;width:1477px;height:944px;background:#ffffff;"></div>
<svg style="left:2251px;top:377px" width="23" height="20"><rect x="4" y="1" width="18" height="14" fill="#e8eef4" stroke="#8a9aa8" stroke-width="1.2"/><path d="M6 10 L9 6 L12 9 L15 4 L18 8 L20 6" fill="none" stroke="#3a8ad0" stroke-width="1.2"/><rect x="1" y="4" width="5" height="13" fill="#c8d0d8" stroke="#8a9aa8" stroke-width="1"/><rect x="8" y="16" width="10" height="3" fill="#aab4bc"/></svg>
<div class="t" style="left:2279.5px;top:376.7px;font-size:18.84px;color:#000;transform:scaleX(0.9474);transform-origin:0 0;">Administrador de tareas</div>
<svg style="left:3525px;top:370px" width="180" height="30"><line x1="9" y1="16" x2="24" y2="16" stroke="#000" stroke-width="1.2"/><rect x="78.5" y="8.5" width="14.5" height="14.5" fill="none" stroke="#000" stroke-width="1.3"/><path d="M148 8 L164 24 M164 8 L148 24" stroke="#000" stroke-width="1.3"/></svg>
<div class="t" style="left:2246.6px;top:412.8px;font-size:20.29px;color:#000;transform:scaleX(0.8646);transform-origin:0 0;">Archivo</div>
<div class="t" style="left:2320.0px;top:412.8px;font-size:20.29px;color:#000;transform:scaleX(0.8633);transform-origin:0 0;">Opciones</div>
<div class="t" style="left:2409.0px;top:412.8px;font-size:20.29px;color:#000;transform:scaleX(0.8381);transform-origin:0 0;">Vista</div>
<div class="r" style="left:2239px;top:437px;width:1477px;height:1px;background:#ededed;"></div>
<div class="r" style="left:2239px;top:472px;width:1477px;height:1px;background:#d9d9d9;"></div>
<div class="r" style="left:2241px;top:443px;width:81px;height:30px;background:#f0f0f0;border:1px solid #d9d9d9;border-bottom:none"></div>
<div class="t" style="left:2247.5px;top:450.0px;font-size:18.41px;color:#000;transform:scaleX(0.9123);transform-origin:0 0;">Procesos</div>
<div class="r" style="left:2437px;top:443px;width:200px;height:30px;background:#f0f0f0;border:1px solid #d9d9d9;border-bottom:none"></div>
<div class="t" style="left:2442.3px;top:450.0px;font-size:18.41px;color:#000;transform:scaleX(0.9522);transform-origin:0 0;">Historial de aplicaciones</div>
<div class="r" style="left:2637px;top:443px;width:54px;height:30px;background:#f0f0f0;border:1px solid #d9d9d9;border-bottom:none"></div>
<div class="t" style="left:2644.4px;top:450.0px;font-size:18.41px;color:#000;transform:scaleX(0.9542);transform-origin:0 0;">Inicio</div>
<div class="r" style="left:2691px;top:443px;width:80px;height:30px;background:#f0f0f0;border:1px solid #d9d9d9;border-bottom:none"></div>
<div class="t" style="left:2698.5px;top:450.0px;font-size:18.41px;color:#000;transform:scaleX(0.9184);transform-origin:0 0;">Usuarios</div>
<div class="r" style="left:2771px;top:443px;width:74px;height:30px;background:#f0f0f0;border:1px solid #d9d9d9;border-bottom:none"></div>
<div class="t" style="left:2779.0px;top:450.0px;font-size:18.41px;color:#000;transform:scaleX(0.9023);transform-origin:0 0;">Detalles</div>
<div class="r" style="left:2845px;top:443px;width:79px;height:30px;background:#f0f0f0;border:1px solid #d9d9d9;border-bottom:none"></div>
<div class="t" style="left:2852.0px;top:450.0px;font-size:18.41px;color:#000;transform:scaleX(0.9107);transform-origin:0 0;">Servicios</div>
<div class="r" style="left:2322px;top:441px;width:115px;height:33px;background:#ffffff;border:1px solid #d9d9d9;border-bottom:none"></div>
<div class="t" style="left:2330.3px;top:448.4px;font-size:18.41px;color:#000;transform:scaleX(0.9580);transform-origin:0 0;">Rendimiento</div>
<div class="r" style="left:2246px;top:494px;width:349px;height:91px;background:#dadada;"></div>
<div class="r" style="left:2261px;top:510px;width:90px;height:60px;background:#ffffff;border:1.5px solid #1a7ac0"></div>
<div class="t" style="left:2366.6px;top:507.3px;font-size:23.19px;color:#000;transform:scaleX(0.8681);transform-origin:0 0;">CPU</div>
<div class="t" style="left:2368.5px;top:538.4px;font-size:18.41px;color:#000;transform:scaleX(0.9182);transform-origin:0 0;">100%&nbsp;&nbsp;2,78 GHz</div>
<div class="r" style="left:2261px;top:601px;width:90px;height:60px;background:#ffffff;border:1.5px solid #8b2fb5"></div>
<div class="t" style="left:2366.6px;top:598.3px;font-size:23.19px;color:#000;transform:scaleX(1.0477);transform-origin:0 0;">Memoria</div>
<div class="t" style="left:2368.5px;top:629.4px;font-size:18.41px;color:#000;transform:scaleX(0.9184);transform-origin:0 0;">9,0/63,7 GB (14%)</div>
<div class="r" style="left:2261px;top:692px;width:90px;height:60px;background:#ffffff;border:1.5px solid #4e9a1e"></div>
<div class="t" style="left:2366.6px;top:689.3px;font-size:23.19px;color:#000;transform:scaleX(0.9763);transform-origin:0 0;">Disco 0 (D:)</div>
<div class="t" style="left:2368.5px;top:720.4px;font-size:18.41px;color:#000;transform:scaleX(0.9022);transform-origin:0 0;">0%</div>
<div class="r" style="left:2261px;top:783px;width:90px;height:60px;background:#ffffff;border:1.5px solid #4e9a1e"></div>
<div class="t" style="left:2366.6px;top:780.3px;font-size:23.19px;color:#000;transform:scaleX(0.9559);transform-origin:0 0;">Disco 1 (C:)</div>
<div class="t" style="left:2368.5px;top:811.4px;font-size:18.41px;color:#000;transform:scaleX(0.9022);transform-origin:0 0;">1%</div>
<div class="r" style="left:2261px;top:874px;width:90px;height:60px;background:#ffffff;border:1.5px solid #4e9a1e"></div>
<div class="t" style="left:2366.6px;top:871.3px;font-size:23.19px;color:#000;transform:scaleX(0.9660);transform-origin:0 0;">Disco 2 (E:)</div>
<div class="t" style="left:2368.5px;top:902.4px;font-size:18.41px;color:#000;transform:scaleX(0.9022);transform-origin:0 0;">0%</div>
<div class="r" style="left:2261px;top:965px;width:90px;height:60px;background:#ffffff;border:1.5px solid #4e9a1e"></div>
<div class="t" style="left:2366.6px;top:962.3px;font-size:23.19px;color:#000;transform:scaleX(0.9431);transform-origin:0 0;">Disco 3 (F:)</div>
<div class="t" style="left:2368.5px;top:993.4px;font-size:18.41px;color:#000;transform:scaleX(0.9022);transform-origin:0 0;">0%</div>
<div class="r" style="left:2261px;top:1056px;width:90px;height:60px;background:#ffffff;border:1.5px solid #4e9a1e"></div>
<div class="t" style="left:2366.6px;top:1053.3px;font-size:23.19px;color:#000;transform:scaleX(0.9540);transform-origin:0 0;">Disco 4 (G:)</div>
<div class="t" style="left:2368.5px;top:1084.4px;font-size:18.41px;color:#000;transform:scaleX(0.9022);transform-origin:0 0;">0%</div>
<div class="r" style="left:2261px;top:1147px;width:90px;height:60px;background:#ffffff;border:1.5px solid #b8612a"></div>
<div class="t" style="left:2366.6px;top:1144.3px;font-size:23.19px;color:#000;transform:scaleX(1.0153);transform-origin:0 0;">Ethernet</div>
<div class="t" style="left:2368.5px;top:1175.4px;font-size:18.41px;color:#000;transform:scaleX(0.9128);transform-origin:0 0;"><span style="color:#777">E:</span> 0&nbsp;&nbsp;<span style="color:#777">R:</span> 0 Kbps</div>
<svg style="left:2261px;top:510px" width="90" height="60"><path d="M54 59 L58 14 L61 10 L63 15 L66 12 L69 16 L72 13 L75 17 L78 12 L80 16 L82 8 L85 6 L88 1 L88 59 Z" fill="#e3eff8" stroke="none"/><path d="M7 1 L9 59 M54 59 L58 14 L61 10 L63 15 L66 12 L69 16 L72 13 L75 17 L78 12 L80 16 L82 8 L85 6 L88 1" fill="none" stroke="#4a9ad4" stroke-width="1.2"/></svg>
<svg style="left:2261px;top:601px" width="90" height="60"><rect x="1.5" y="50" width="87" height="8.5" fill="#ece4f0"/><path d="M1.5 50 L50 50 L52 49 L88 49" fill="none" stroke="#8b2fb5" stroke-width="1.2"/></svg>
<svg style="left:2261px;top:1147px" width="90" height="60"><path d="M4 58 L6 50 L8 58 L9 2 L11 2 L13 58 L17 58 L18 54 L19 58 L25 58 L26 55 L27 58 L36 58 L38 51 L40 58 L59 58 L60 2 L62 2 L63 58 L66 58 L68 52 L70 58" fill="none" stroke="#c07030" stroke-width="1.1"/></svg>
<div class="r" style="left:2601px;top:494px;width:25px;height:742px;background:#f0f0f0;"></div>
<div class="r" style="left:2601px;top:520px;width:25px;height:614px;background:#c2c2c2;"></div>
<svg style="left:2601px;top:494px" width="25" height="742"><path d="M7 17 L12.5 11.5 L18 17" fill="none" stroke="#555" stroke-width="2"/><path d="M7 726 L12.5 731.5 L18 726" fill="none" stroke="#555" stroke-width="2"/></svg>
<div class="t" style="left:2665.0px;top:508.0px;font-size:43.48px;color:#000;transform:scaleX(0.8715);transform-origin:0 0;">CPU</div>
<div class="t" style="left:3223.0px;top:525.8px;font-size:23.77px;color:#000;transform:scaleX(0.9576);transform-origin:0 0;">Intel(R) Xeon(R) Gold 6130 CPU @ 2.10GHz</div>
<div class="t" style="left:2667.5px;top:569.4px;font-size:15.94px;color:#707070;transform:scaleX(0.9579);transform-origin:0 0;">Procesadores lógicos</div>
<div class="r" style="left:2667px;top:592px;width:1013px;height:326px;background:#45a6e4;border:2px solid #1f7fc4"></div>
<div class="r" style="left:2730px;top:594px;width:2px;height:322px;background:#d6ebf8;"></div>
<div class="r" style="left:2793px;top:594px;width:2px;height:322px;background:#d6ebf8;"></div>
<div class="r" style="left:2856px;top:594px;width:2px;height:322px;background:#d6ebf8;"></div>
<div class="r" style="left:2920px;top:594px;width:2px;height:322px;background:#d6ebf8;"></div>
<div class="r" style="left:2983px;top:594px;width:2px;height:322px;background:#d6ebf8;"></div>
<div class="r" style="left:3046px;top:594px;width:2px;height:322px;background:#d6ebf8;"></div>
<div class="r" style="left:3109px;top:594px;width:2px;height:322px;background:#d6ebf8;"></div>
<div class="r" style="left:3172px;top:594px;width:2px;height:322px;background:#d6ebf8;"></div>
<div class="r" style="left:3236px;top:594px;width:2px;height:322px;background:#d6ebf8;"></div>
<div class="r" style="left:3299px;top:594px;width:2px;height:322px;background:#d6ebf8;"></div>
<div class="r" style="left:3362px;top:594px;width:2px;height:322px;background:#d6ebf8;"></div>
<div class="r" style="left:3425px;top:594px;width:2px;height:322px;background:#d6ebf8;"></div>
<div class="r" style="left:3488px;top:594px;width:2px;height:322px;background:#d6ebf8;"></div>
<div class="r" style="left:3552px;top:594px;width:2px;height:322px;background:#d6ebf8;"></div>
<div class="r" style="left:3615px;top:594px;width:2px;height:322px;background:#d6ebf8;"></div>
<div class="r" style="left:3678px;top:594px;width:2px;height:322px;background:#d6ebf8;"></div>
<div class="r" style="left:2669px;top:673px;width:1009px;height:2px;background:#d6ebf8;"></div>
<div class="r" style="left:2669px;top:753px;width:1009px;height:2px;background:#d6ebf8;"></div>
<div class="r" style="left:2669px;top:834px;width:1009px;height:2px;background:#d6ebf8;"></div>
<div class="r" style="left:2669px;top:914px;width:1009px;height:2px;background:#d6ebf8;"></div>
<div class="t" style="left:2680.7px;top:625.4px;font-size:15.94px;color:#1a1a1a;transform:scaleX(0.9197);transform-origin:0 0;">100%</div>
<div class="t" style="left:2743.8px;top:625.4px;font-size:15.94px;color:#1a1a1a;transform:scaleX(0.9197);transform-origin:0 0;">100%</div>
<div class="t" style="left:2807.1px;top:625.4px;font-size:15.94px;color:#1a1a1a;transform:scaleX(0.9197);transform-origin:0 0;">100%</div>
<div class="t" style="left:2870.2px;top:625.4px;font-size:15.94px;color:#1a1a1a;transform:scaleX(0.9197);transform-origin:0 0;">100%</div>
<div class="t" style="left:2933.5px;top:625.4px;font-size:15.94px;color:#1a1a1a;transform:scaleX(0.9197);transform-origin:0 0;">100%</div>
<div class="t" style="left:2996.7px;top:625.4px;font-size:15.94px;color:#1a1a1a;transform:scaleX(0.9197);transform-origin:0 0;">100%</div>
<div class="t" style="left:3059.8px;top:625.4px;font-size:15.94px;color:#1a1a1a;transform:scaleX(0.9197);transform-origin:0 0;">100%</div>
<div class="t" style="left:3123.1px;top:625.4px;font-size:15.94px;color:#1a1a1a;transform:scaleX(0.9197);transform-origin:0 0;">100%</div>
<div class="t" style="left:3186.2px;top:625.4px;font-size:15.94px;color:#1a1a1a;transform:scaleX(0.9197);transform-origin:0 0;">100%</div>
<div class="t" style="left:3249.5px;top:625.4px;font-size:15.94px;color:#1a1a1a;transform:scaleX(0.9197);transform-origin:0 0;">100%</div>
<div class="t" style="left:3312.7px;top:625.4px;font-size:15.94px;color:#1a1a1a;transform:scaleX(0.9197);transform-origin:0 0;">100%</div>
<div class="t" style="left:3375.8px;top:625.4px;font-size:15.94px;color:#1a1a1a;transform:scaleX(0.9197);transform-origin:0 0;">100%</div>
<div class="t" style="left:3439.1px;top:625.4px;font-size:15.94px;color:#1a1a1a;transform:scaleX(0.9197);transform-origin:0 0;">100%</div>
<div class="t" style="left:3502.2px;top:625.4px;font-size:15.94px;color:#1a1a1a;transform:scaleX(0.9197);transform-origin:0 0;">100%</div>
<div class="t" style="left:3565.5px;top:625.4px;font-size:15.94px;color:#1a1a1a;transform:scaleX(0.9197);transform-origin:0 0;">100%</div>
<div class="t" style="left:3628.7px;top:625.4px;font-size:15.94px;color:#1a1a1a;transform:scaleX(0.9197);transform-origin:0 0;">100%</div>
<div class="t" style="left:2680.7px;top:706.1px;font-size:15.94px;color:#1a1a1a;transform:scaleX(0.9197);transform-origin:0 0;">100%</div>
<div class="t" style="left:2743.8px;top:706.1px;font-size:15.94px;color:#1a1a1a;transform:scaleX(0.9197);transform-origin:0 0;">100%</div>
<div class="t" style="left:2807.1px;top:706.1px;font-size:15.94px;color:#1a1a1a;transform:scaleX(0.9197);transform-origin:0 0;">100%</div>
<div class="t" style="left:2870.2px;top:706.1px;font-size:15.94px;color:#1a1a1a;transform:scaleX(0.9197);transform-origin:0 0;">100%</div>
<div class="t" style="left:2933.5px;top:706.1px;font-size:15.94px;color:#1a1a1a;transform:scaleX(0.9197);transform-origin:0 0;">100%</div>
<div class="t" style="left:2996.7px;top:706.1px;font-size:15.94px;color:#1a1a1a;transform:scaleX(0.9197);transform-origin:0 0;">100%</div>
<div class="t" style="left:3059.8px;top:706.1px;font-size:15.94px;color:#1a1a1a;transform:scaleX(0.9197);transform-origin:0 0;">100%</div>
<div class="t" style="left:3123.1px;top:706.1px;font-size:15.94px;color:#1a1a1a;transform:scaleX(0.9197);transform-origin:0 0;">100%</div>
<div class="t" style="left:3186.2px;top:706.1px;font-size:15.94px;color:#1a1a1a;transform:scaleX(0.9197);transform-origin:0 0;">100%</div>
<div class="t" style="left:3249.5px;top:706.1px;font-size:15.94px;color:#1a1a1a;transform:scaleX(0.9197);transform-origin:0 0;">100%</div>
<div class="t" style="left:3312.7px;top:706.1px;font-size:15.94px;color:#1a1a1a;transform:scaleX(0.9197);transform-origin:0 0;">100%</div>
<div class="t" style="left:3375.8px;top:706.1px;font-size:15.94px;color:#1a1a1a;transform:scaleX(0.9197);transform-origin:0 0;">100%</div>
<div class="t" style="left:3439.1px;top:706.1px;font-size:15.94px;color:#1a1a1a;transform:scaleX(0.9197);transform-origin:0 0;">100%</div>
<div class="t" style="left:3502.2px;top:706.1px;font-size:15.94px;color:#1a1a1a;transform:scaleX(0.9197);transform-origin:0 0;">100%</div>
<div class="t" style="left:3565.5px;top:706.1px;font-size:15.94px;color:#1a1a1a;transform:scaleX(0.9197);transform-origin:0 0;">100%</div>
<div class="t" style="left:3628.7px;top:706.1px;font-size:15.94px;color:#1a1a1a;transform:scaleX(0.9197);transform-origin:0 0;">100%</div>
<div class="t" style="left:2680.7px;top:786.7px;font-size:15.94px;color:#1a1a1a;transform:scaleX(0.9197);transform-origin:0 0;">100%</div>
<div class="t" style="left:2743.8px;top:786.7px;font-size:15.94px;color:#1a1a1a;transform:scaleX(0.9197);transform-origin:0 0;">100%</div>
<div class="t" style="left:2807.1px;top:786.7px;font-size:15.94px;color:#1a1a1a;transform:scaleX(0.9197);transform-origin:0 0;">100%</div>
<div class="t" style="left:2870.2px;top:786.7px;font-size:15.94px;color:#1a1a1a;transform:scaleX(0.9197);transform-origin:0 0;">100%</div>
<div class="t" style="left:2933.5px;top:786.7px;font-size:15.94px;color:#1a1a1a;transform:scaleX(0.9197);transform-origin:0 0;">100%</div>
<div class="t" style="left:2996.7px;top:786.7px;font-size:15.94px;color:#1a1a1a;transform:scaleX(0.9197);transform-origin:0 0;">100%</div>
<div class="t" style="left:3059.8px;top:786.7px;font-size:15.94px;color:#1a1a1a;transform:scaleX(0.9197);transform-origin:0 0;">100%</div>
<div class="t" style="left:3123.1px;top:786.7px;font-size:15.94px;color:#1a1a1a;transform:scaleX(0.9197);transform-origin:0 0;">100%</div>
<div class="t" style="left:3186.2px;top:786.7px;font-size:15.94px;color:#1a1a1a;transform:scaleX(0.9197);transform-origin:0 0;">100%</div>
<div class="t" style="left:3249.5px;top:786.7px;font-size:15.94px;color:#1a1a1a;transform:scaleX(0.9197);transform-origin:0 0;">100%</div>
<div class="t" style="left:3312.7px;top:786.7px;font-size:15.94px;color:#1a1a1a;transform:scaleX(0.9197);transform-origin:0 0;">100%</div>
<div class="t" style="left:3375.8px;top:786.7px;font-size:15.94px;color:#1a1a1a;transform:scaleX(0.9197);transform-origin:0 0;">100%</div>
<div class="t" style="left:3439.1px;top:786.7px;font-size:15.94px;color:#1a1a1a;transform:scaleX(0.9197);transform-origin:0 0;">100%</div>
<div class="t" style="left:3502.2px;top:786.7px;font-size:15.94px;color:#1a1a1a;transform:scaleX(0.9197);transform-origin:0 0;">100%</div>
<div class="t" style="left:3565.5px;top:786.7px;font-size:15.94px;color:#1a1a1a;transform:scaleX(0.9197);transform-origin:0 0;">100%</div>
<div class="t" style="left:3628.7px;top:786.7px;font-size:15.94px;color:#1a1a1a;transform:scaleX(0.9197);transform-origin:0 0;">100%</div>
<div class="t" style="left:2680.7px;top:867.4px;font-size:15.94px;color:#1a1a1a;transform:scaleX(0.9197);transform-origin:0 0;">100%</div>
<div class="t" style="left:2743.8px;top:867.4px;font-size:15.94px;color:#1a1a1a;transform:scaleX(0.9197);transform-origin:0 0;">100%</div>
<div class="t" style="left:2807.1px;top:867.4px;font-size:15.94px;color:#1a1a1a;transform:scaleX(0.9197);transform-origin:0 0;">100%</div>
<div class="t" style="left:2870.2px;top:867.4px;font-size:15.94px;color:#1a1a1a;transform:scaleX(0.9197);transform-origin:0 0;">100%</div>
<div class="t" style="left:2933.5px;top:867.4px;font-size:15.94px;color:#1a1a1a;transform:scaleX(0.9197);transform-origin:0 0;">100%</div>
<div class="t" style="left:2996.7px;top:867.4px;font-size:15.94px;color:#1a1a1a;transform:scaleX(0.9197);transform-origin:0 0;">100%</div>
<div class="t" style="left:3059.8px;top:867.4px;font-size:15.94px;color:#1a1a1a;transform:scaleX(0.9197);transform-origin:0 0;">100%</div>
<div class="t" style="left:3123.1px;top:867.4px;font-size:15.94px;color:#1a1a1a;transform:scaleX(0.9197);transform-origin:0 0;">100%</div>
<div class="t" style="left:3186.2px;top:867.4px;font-size:15.94px;color:#1a1a1a;transform:scaleX(0.9197);transform-origin:0 0;">100%</div>
<div class="t" style="left:3249.5px;top:867.4px;font-size:15.94px;color:#1a1a1a;transform:scaleX(0.9197);transform-origin:0 0;">100%</div>
<div class="t" style="left:3312.7px;top:867.4px;font-size:15.94px;color:#1a1a1a;transform:scaleX(0.9197);transform-origin:0 0;">100%</div>
<div class="t" style="left:3375.8px;top:867.4px;font-size:15.94px;color:#1a1a1a;transform:scaleX(0.9197);transform-origin:0 0;">100%</div>
<div class="t" style="left:3439.1px;top:867.4px;font-size:15.94px;color:#1a1a1a;transform:scaleX(0.9197);transform-origin:0 0;">100%</div>
<div class="t" style="left:3502.2px;top:867.4px;font-size:15.94px;color:#1a1a1a;transform:scaleX(0.9197);transform-origin:0 0;">100%</div>
<div class="t" style="left:3565.5px;top:867.4px;font-size:15.94px;color:#1a1a1a;transform:scaleX(0.9197);transform-origin:0 0;">100%</div>
<div class="t" style="left:3628.7px;top:867.4px;font-size:15.94px;color:#1a1a1a;transform:scaleX(0.9197);transform-origin:0 0;">100%</div>
<div class="t" style="left:2668.0px;top:939.8px;font-size:18.84px;color:#6f6f6f;transform:scaleX(0.8775);transform-origin:0 0;">Uso</div>
<div class="t" style="left:2774.5px;top:939.8px;font-size:18.84px;color:#6f6f6f;transform:scaleX(0.9423);transform-origin:0 0;">Velocidad</div>
<div class="t" style="left:2668.0px;top:969.0px;font-size:32.61px;color:#000;transform:scaleX(0.8993);transform-origin:0 0;">100%</div>
<div class="t" style="left:2774.5px;top:969.0px;font-size:32.61px;color:#000;transform:scaleX(0.9075);transform-origin:0 0;">2,78 GHz</div>
<div class="t" style="left:2668.0px;top:1022.0px;font-size:18.84px;color:#6f6f6f;transform:scaleX(0.8785);transform-origin:0 0;">Procesos</div>
<div class="t" style="left:2768.5px;top:1022.0px;font-size:18.84px;color:#6f6f6f;transform:scaleX(0.9275);transform-origin:0 0;">Subprocesos</div>
<div class="t" style="left:2902.0px;top:1022.0px;font-size:18.84px;color:#6f6f6f;transform:scaleX(0.9385);transform-origin:0 0;">Identificadores</div>
<div class="t" style="left:2668.0px;top:1051.2px;font-size:31.88px;color:#000;transform:scaleX(0.9154);transform-origin:0 0;">235</div>
<div class="t" style="left:2768.5px;top:1051.2px;font-size:31.88px;color:#000;transform:scaleX(0.9403);transform-origin:0 0;">4126</div>
<div class="t" style="left:2902.0px;top:1051.2px;font-size:31.88px;color:#000;transform:scaleX(0.9612);transform-origin:0 0;">116934</div>
<div class="t" style="left:2668.0px;top:1103.5px;font-size:18.84px;color:#6f6f6f;transform:scaleX(0.9436);transform-origin:0 0;">Tiempo activo</div>
<div class="t" style="left:2668.0px;top:1132.9px;font-size:31.88px;color:#000;transform:scaleX(0.9168);transform-origin:0 0;">0:14:29:11</div>
<div class="t" style="left:3036.5px;top:939.6px;font-size:19.28px;color:#6f6f6f;transform:scaleX(0.9054);transform-origin:0 0;">Velocidad de base:</div>
<div class="t" style="left:3288.0px;top:939.6px;font-size:19.28px;color:#111;transform:scaleX(0.8720);transform-origin:0 0;">2,10 GHz</div>
<div class="t" style="left:3036.5px;top:969.5px;font-size:19.28px;color:#6f6f6f;transform:scaleX(0.8712);transform-origin:0 0;">Sockets:</div>
<div class="t" style="left:3288.0px;top:969.5px;font-size:19.28px;color:#111;transform:scaleX(0.8862);transform-origin:0 0;">2</div>
<div class="t" style="left:3036.5px;top:999.5px;font-size:19.28px;color:#6f6f6f;transform:scaleX(0.8867);transform-origin:0 0;">Núcleos:</div>
<div class="t" style="left:3288.0px;top:999.5px;font-size:19.28px;color:#111;transform:scaleX(0.8862);transform-origin:0 0;">32</div>
<div class="t" style="left:3036.5px;top:1029.4px;font-size:19.28px;color:#6f6f6f;transform:scaleX(0.9017);transform-origin:0 0;">Procesadores lógicos:</div>
<div class="t" style="left:3288.0px;top:1029.4px;font-size:19.28px;color:#111;transform:scaleX(0.8862);transform-origin:0 0;">64</div>
<div class="t" style="left:3036.5px;top:1059.3px;font-size:19.28px;color:#6f6f6f;transform:scaleX(0.8943);transform-origin:0 0;">Virtualización:</div>
<div class="t" style="left:3288.0px;top:1059.3px;font-size:19.28px;color:#111;transform:scaleX(0.9246);transform-origin:0 0;">Deshabilitado</div>
<div class="t" style="left:3036.5px;top:1089.3px;font-size:19.28px;color:#6f6f6f;transform:scaleX(0.9402);transform-origin:0 0;">Compatibilidad con Hyper-V:</div>
<div class="t" style="left:3288.0px;top:1089.3px;font-size:19.28px;color:#111;transform:scaleX(0.7468);transform-origin:0 0;">Sí</div>
<div class="t" style="left:3036.5px;top:1119.2px;font-size:19.28px;color:#6f6f6f;transform:scaleX(0.8376);transform-origin:0 0;">Caché L1:</div>
<div class="t" style="left:3288.0px;top:1119.2px;font-size:19.28px;color:#111;transform:scaleX(0.8843);transform-origin:0 0;">2,0 MB</div>
<div class="t" style="left:3036.5px;top:1149.1px;font-size:19.28px;color:#6f6f6f;transform:scaleX(0.8376);transform-origin:0 0;">Caché L2:</div>
<div class="t" style="left:3288.0px;top:1149.1px;font-size:19.28px;color:#111;transform:scaleX(0.8985);transform-origin:0 0;">32,0 MB</div>
<div class="t" style="left:3036.5px;top:1179.1px;font-size:19.28px;color:#6f6f6f;transform:scaleX(0.8376);transform-origin:0 0;">Caché L3:</div>
<div class="t" style="left:3288.0px;top:1179.1px;font-size:19.28px;color:#111;transform:scaleX(0.8985);transform-origin:0 0;">44,0 MB</div>
<svg style="left:2250px;top:1256px" width="32" height="32"><circle cx="15.5" cy="15" r="13.5" fill="none" stroke="#9a9a9a" stroke-width="1.3"/><path d="M9 18 L15.5 11.5 L22 18" fill="none" stroke="#777" stroke-width="1.5"/></svg>
<div class="t" style="left:2291.8px;top:1262.2px;font-size:19.71px;color:#000;transform:scaleX(0.8825);transform-origin:0 0;">Menos detalles</div>
<div class="r" style="left:2423px;top:1263px;width:1px;height:15px;background:#d0d0d0;"></div>
<svg style="left:2434px;top:1258px" width="26" height="26"><circle cx="12" cy="12" r="10.5" fill="#e6e6e6" stroke="#8a8a8a" stroke-width="1.5"/><circle cx="12" cy="12" r="7" fill="#f4f4f4"/><path d="M8 6 L15 17" stroke="#c82020" stroke-width="2"/></svg>
<div class="t" style="left:2467.6px;top:1262.2px;font-size:19.71px;color:#1a6ac2;transform:scaleX(0.9087);transform-origin:0 0;">Abrir el Monitor de recursos</div>
</body></html>
